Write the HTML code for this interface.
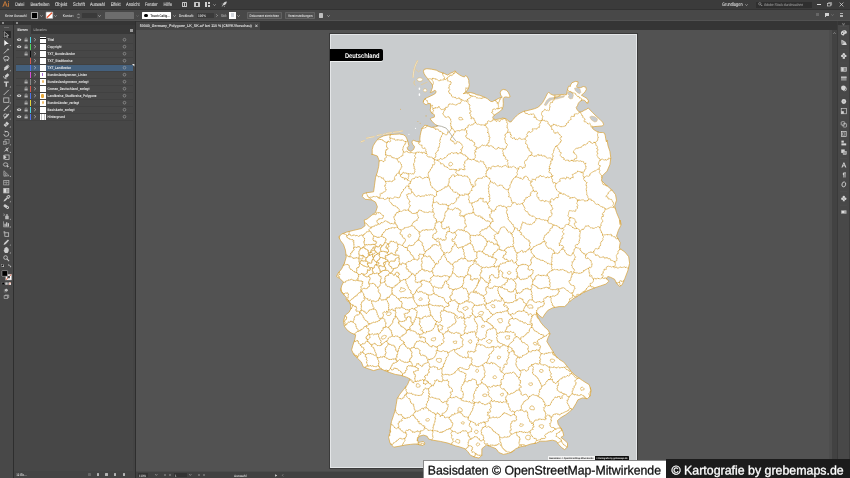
<!DOCTYPE html>
<html><head><meta charset="utf-8"><title>Illustrator</title>
<style>
html,body{margin:0;padding:0;}
body{width:850px;height:478px;overflow:hidden;background:#525252;position:relative;font-family:"Liberation Sans",sans-serif;color:#d0d0d0;}
.a{position:absolute;}
.t{position:absolute;white-space:nowrap;transform-origin:0 50%;display:block;}
svg{position:absolute;overflow:visible;}
</style></head><body>
<div class="a" style="left:0px;top:0px;width:850px;height:8.9px;background:#3b3b3b;"></div>
<div class="a" style="left:0px;top:8.9px;width:850px;height:1.0px;background:#323232;"></div>
<div class="a" style="left:0px;top:9.9px;width:850px;height:10.6px;background:#484848;"></div>
<div class="a" style="left:0px;top:20.5px;width:850px;height:9.9px;background:#353535;"></div>
<div class="a" style="left:136.3px;top:21.9px;width:123.7px;height:8.5px;background:#444444;"></div>
<div class="a" style="left:756px;top:1.6px;width:56px;height:6px;background:#2f2f2f;border-radius:0.6px;"></div>
<div class="a" style="left:0px;top:25px;width:13.2px;height:453px;background:#484848;"></div>
<div class="a" style="left:13.2px;top:21px;width:0.9px;height:457px;background:#2e2e2e;"></div>
<div class="a" style="left:2.2px;top:22.4px;width:2.3px;height:0.45px;background:#8c8c8c;"></div>
<div class="a" style="left:2.2px;top:23.4px;width:2.3px;height:0.45px;background:#8c8c8c;"></div>
<div class="a" style="left:16px;top:22.4px;width:2.3px;height:0.45px;background:#8c8c8c;"></div>
<div class="a" style="left:16px;top:23.4px;width:2.3px;height:0.45px;background:#8c8c8c;"></div>
<div class="a" style="left:3.5px;top:26.8px;width:5.5px;height:0.5px;background:#6a6a6a;"></div>
<div class="a" style="left:2.6px;top:31.4px;width:8.3px;height:6.4px;background:#2b2b2b;border-radius:0.6px;"></div>
<div class="a" style="left:14.1px;top:25px;width:121.1px;height:453px;background:#444444;"></div>
<div class="a" style="left:14.1px;top:25px;width:121.1px;height:8.6px;background:#383838;"></div>
<div class="a" style="left:14.1px;top:25px;width:16.5px;height:8.6px;background:#474747;"></div>
<div class="a" style="left:14.1px;top:33.6px;width:118.8px;height:437px;background:#474747;"></div>
<div class="a" style="left:135.2px;top:21px;width:0.9px;height:457px;background:#2e2e2e;"></div>
<div class="a" style="left:130px;top:28.8px;width:3px;height:0.45px;background:#9c9c9c;"></div>
<div class="a" style="left:130px;top:29.75px;width:3px;height:0.45px;background:#9c9c9c;"></div>
<div class="a" style="left:130px;top:30.7px;width:3px;height:0.45px;background:#9c9c9c;"></div>
<div class="a" style="left:16px;top:64.6px;width:117px;height:6.8px;background:#44607d;"></div>
<div class="a" style="left:16px;top:43.15px;width:117px;height:0.3px;background:#414141;"></div>
<div class="a" style="left:30px;top:36.5px;width:1.3px;height:6.5px;background:#4fd3e0;"></div>
<div class="a" style="left:39.8px;top:36.9px;width:5.8px;height:5.7px;background:#ffffff;"></div>
<div class="a" style="left:39.8px;top:37.8px;width:5.8px;height:1.7px;background:#111;"></div>
<div class="a" style="left:16px;top:50.15px;width:117px;height:0.3px;background:#414141;"></div>
<div class="a" style="left:30px;top:43.5px;width:1.3px;height:6.5px;background:#4fd860;"></div>
<div class="a" style="left:39.8px;top:43.9px;width:5.8px;height:5.7px;background:#ffffff;"></div>
<div class="a" style="left:16px;top:57.15px;width:117px;height:0.3px;background:#414141;"></div>
<div class="a" style="left:30px;top:50.5px;width:1.3px;height:6.5px;background:#0e0e0e;"></div>
<div class="a" style="left:39.8px;top:50.9px;width:5.8px;height:5.7px;background:#ffffff;"></div>
<div class="a" style="left:16px;top:64.14999999999999px;width:117px;height:0.3px;background:#414141;"></div>
<div class="a" style="left:30px;top:57.5px;width:1.3px;height:6.5px;background:#d65a50;"></div>
<div class="a" style="left:39.8px;top:57.9px;width:5.8px;height:5.7px;background:#ffffff;"></div>
<div class="a" style="left:16px;top:71.14999999999999px;width:117px;height:0.3px;background:#414141;"></div>
<div class="a" style="left:30px;top:64.5px;width:1.3px;height:6.5px;background:#4f74e8;"></div>
<div class="a" style="left:39.8px;top:64.89999999999999px;width:5.8px;height:5.7px;background:#ffffff;"></div>
<div class="a" style="left:16px;top:78.14999999999999px;width:117px;height:0.3px;background:#414141;"></div>
<div class="a" style="left:30px;top:71.5px;width:1.3px;height:6.5px;background:#d54fd8;"></div>
<div class="a" style="left:39.8px;top:71.89999999999999px;width:5.8px;height:5.7px;background:#ffffff;"></div>
<div class="a" style="left:42.2px;top:72.89999999999999px;width:0.8px;height:2.8px;background:#a86ad8;"></div>
<div class="a" style="left:16px;top:85.14999999999999px;width:117px;height:0.3px;background:#414141;"></div>
<div class="a" style="left:30px;top:78.5px;width:1.3px;height:6.5px;background:#8a8a8a;"></div>
<div class="a" style="left:39.8px;top:78.89999999999999px;width:5.8px;height:5.7px;background:#ffffff;"></div>
<div class="a" style="left:41.7px;top:79.8px;width:1.9px;height:3.4px;background:#efbf6e;border-radius:1px;"></div>
<div class="a" style="left:16px;top:92.14999999999999px;width:117px;height:0.3px;background:#414141;"></div>
<div class="a" style="left:30px;top:85.5px;width:1.3px;height:6.5px;background:#d65a50;"></div>
<div class="a" style="left:39.8px;top:85.89999999999999px;width:5.8px;height:5.7px;background:#ffffff;"></div>
<div class="a" style="left:16px;top:99.14999999999999px;width:117px;height:0.3px;background:#414141;"></div>
<div class="a" style="left:30px;top:92.5px;width:1.3px;height:6.5px;background:#4f74e8;"></div>
<div class="a" style="left:39.8px;top:92.89999999999999px;width:5.8px;height:5.7px;background:#ffffff;"></div>
<div class="a" style="left:41.1px;top:93.5px;width:3.2px;height:4.2px;background:#e8a838;border-radius:1.3px;"></div>
<div class="a" style="left:16px;top:106.14999999999999px;width:117px;height:0.3px;background:#414141;"></div>
<div class="a" style="left:30px;top:99.5px;width:1.3px;height:6.5px;background:#e4d43c;"></div>
<div class="a" style="left:39.8px;top:99.89999999999999px;width:5.8px;height:5.7px;background:#ffffff;"></div>
<div class="a" style="left:41.7px;top:100.8px;width:1.9px;height:3.4px;background:#efbf6e;border-radius:1px;"></div>
<div class="a" style="left:16px;top:113.14999999999999px;width:117px;height:0.3px;background:#414141;"></div>
<div class="a" style="left:30px;top:106.5px;width:1.3px;height:6.5px;background:#4fd3e0;"></div>
<div class="a" style="left:39.8px;top:106.89999999999999px;width:5.8px;height:5.7px;background:#ffffff;"></div>
<div class="a" style="left:16px;top:120.14999999999999px;width:117px;height:0.3px;background:#414141;"></div>
<div class="a" style="left:30px;top:113.5px;width:1.3px;height:6.5px;background:#4f74e8;"></div>
<div class="a" style="left:39.8px;top:113.89999999999999px;width:5.8px;height:5.7px;background:#ffffff;"></div>
<div class="a" style="left:41.4px;top:113.8px;width:0.5px;height:5.9px;background:#c4c4c4;"></div>
<div class="a" style="left:43.6px;top:113.8px;width:0.5px;height:5.9px;background:#c4c4c4;"></div>
<svg style="left:132.2px;top:63.6px" width="2.4" height="2.4" viewBox="0 0 10 10"><path d="M0,0 L10,0 L10,10Z" fill="#e8e8e8"/></svg>
<div class="a" style="left:88.3px;top:473.1px;width:2.4px;height:2.6px;background:#666;border-radius:0.5px;"></div>
<div class="a" style="left:96.8px;top:473.1px;width:2.4px;height:2.6px;background:#b4b4b4;border-radius:0.5px;"></div>
<div class="a" style="left:105.2px;top:473.1px;width:2.4px;height:2.6px;background:#b4b4b4;border-radius:0.5px;"></div>
<div class="a" style="left:113.8px;top:473.1px;width:2.4px;height:2.6px;background:#b4b4b4;border-radius:0.5px;"></div>
<div class="a" style="left:122.8px;top:473.1px;width:2.4px;height:2.6px;background:#b4b4b4;border-radius:0.5px;"></div>
<div class="a" style="left:136.1px;top:471.3px;width:696px;height:0.5px;background:#4b4b4b;"></div>
<div class="a" style="left:136.1px;top:471.8px;width:696px;height:6.2px;background:#414141;"></div>
<div class="a" style="left:138px;top:472.6px;width:9.5px;height:4.8px;background:#333;"></div>
<div class="a" style="left:173.5px;top:472.6px;width:13px;height:4.8px;background:#333;"></div>
<svg style="left:155.2px;top:474.3px" width="2.6" height="1.8" viewBox="0 0 26 18"><path d="M2,2 L13,14 L24,2" fill="none" stroke="#d0d0d0" stroke-width="5"/></svg>
<svg style="left:189.39999999999998px;top:474.3px" width="2.6" height="1.8" viewBox="0 0 26 18"><path d="M2,2 L13,14 L24,2" fill="none" stroke="#d0d0d0" stroke-width="5"/></svg>
<div class="a" style="left:163.5px;top:473.9px;width:2.6px;height:2.2px;background:#6c6c6c;"></div>
<div class="a" style="left:168.5px;top:473.9px;width:2.6px;height:2.2px;background:#6c6c6c;"></div>
<div class="a" style="left:197.5px;top:473.9px;width:2.6px;height:2.2px;background:#6c6c6c;"></div>
<div class="a" style="left:202.5px;top:473.9px;width:2.6px;height:2.2px;background:#6c6c6c;"></div>
<svg style="left:274.6px;top:473.6px" width="2.4" height="3" viewBox="0 0 24 30"><path d="M2,2 L22,15 L2,28Z" fill="#e0e0e0"/></svg>
<svg style="left:281.6px;top:473.8px" width="1.6" height="2.6" viewBox="0 0 16 26"><path d="M13,2 L3,13 L13,24" fill="none" stroke="#c0c0c0" stroke-width="4"/></svg>
<div class="a" style="left:829.4px;top:30.4px;width:2.2px;height:448px;background:#4d4d4d;"></div>
<div class="a" style="left:831.6px;top:30.4px;width:5px;height:448px;background:#424242;"></div>
<div class="a" style="left:836.6px;top:30.4px;width:1px;height:448px;background:#4a4a4a;"></div>
<div class="a" style="left:837.6px;top:21px;width:12.4px;height:457px;background:#484848;"></div>
<div class="a" style="left:837.4px;top:21px;width:0.5px;height:457px;background:#3a3a3a;"></div>
<div class="a" style="left:848.6px;top:25px;width:1.4px;height:453px;background:#3c3c3c;"></div>
<div class="a" style="left:837.6px;top:20.5px;width:12.4px;height:4.5px;background:#353535;"></div>
<svg style="left:833.3px;top:31.6px" width="3" height="2.2" viewBox="0 0 30 22"><path d="M3,19 L15,5 L27,19" fill="none" stroke="#b8b8b8" stroke-width="5"/></svg>
<svg style="left:842.2px;top:22.5px" width="3" height="2" viewBox="0 0 30 20"><path d="M3,3 L15,12 L27,3" fill="none" stroke="#d0d0d0" stroke-width="4"/><path d="M3,10 L15,19 L27,10" fill="none" stroke="#d0d0d0" stroke-width="4"/></svg>
<svg style="left:0;top:0" width="850" height="478" viewBox="0 0 850 478"><g transform="translate(6.30 34.30) scale(0.92)"><path d="M-2.2,-2.8 L2.6,1.2 L0.4,1.4 L1.6,3.2 L0.7,3.6 L-0.4,1.8 L-2.2,3.1Z" fill="none" stroke="#cdcdcd" stroke-width="0.7" stroke-linejoin="round"/></g><g transform="translate(6.30 42.70) scale(0.92)"><path d="M-2.2,-3 L2.8,1.4 L0.3,1.5 L-2.2,3.4Z" fill="#f0f0f0"/></g><path d="M10.9,44.7 l0,1.4 l-1.4,0z" fill="#b0b0b0"/><g transform="translate(6.30 50.80) scale(0.92)"><path d="M-2.6,2.8 L1,-0.8" stroke="#cdcdcd" stroke-width="1"/><path d="M1.8,-3 L2.3,-1.9 L3.4,-1.6 L2.3,-1.1 L1.8,0 L1.4,-1.1 L0.2,-1.6 L1.4,-1.9Z" fill="#cdcdcd"/></g><g transform="translate(6.30 58.80) scale(0.92)"><ellipse cx="0" cy="-0.6" rx="2.9" ry="2.1" fill="none" stroke="#cdcdcd" stroke-width="0.9"/><path d="M-1.5,1 q-0.8,1.6 0.6,2.2" fill="none" stroke="#cdcdcd" stroke-width="0.8"/><path d="M0.5,0 L2.6,2.6 L0.6,2.2Z" fill="#cdcdcd"/></g><g transform="translate(6.30 67.80) scale(0.92)"><path d="M-2.8,3 L-1.8,-0.6 L1,-3 L3,-1 L0.6,1.8Z" fill="#cdcdcd"/><path d="M1.6,-3.4 L3.4,-1.6" stroke="#cdcdcd" stroke-width="0.9"/></g><path d="M10.9,69.8 l0,1.4 l-1.4,0z" fill="#b0b0b0"/><g transform="translate(6.30 75.70) scale(0.92)"><path d="M-1.8,2.6 L-1,-0.4 L1.4,-2.6 L3.2,-0.8 L1,1.6Z" fill="#cdcdcd"/><path d="M-3.2,0.5 q0.5,3 3.6,3" fill="none" stroke="#cdcdcd" stroke-width="0.8"/></g><g transform="translate(6.30 84.00) scale(0.92)"><path d="M-2.6,-2.8 H2.6 V-1.3 H0.8 V3 H-0.8 V-1.3 H-2.6Z" fill="#cdcdcd"/></g><path d="M10.9,86.0 l0,1.4 l-1.4,0z" fill="#b0b0b0"/><g transform="translate(6.30 92.40) scale(0.92)"><path d="M-2.8,2.8 L2.8,-2.8" stroke="#cdcdcd" stroke-width="0.9"/></g><path d="M10.9,94.4 l0,1.4 l-1.4,0z" fill="#b0b0b0"/><g transform="translate(6.30 100.10) scale(0.92)"><rect x="-2.8" y="-2.4" width="5.6" height="4.8" fill="none" stroke="#cdcdcd" stroke-width="0.8"/></g><path d="M10.9,102.1 l0,1.4 l-1.4,0z" fill="#b0b0b0"/><g transform="translate(6.30 108.20) scale(0.92)"><path d="M3,-3.2 L3.5,-2.7 L-0.6,1.6 L-1.5,0.7Z" fill="#cdcdcd"/><path d="M-1.8,1 L-0.8,2 Q-1.8,3.4 -3.2,3 Q-2.2,2.2 -1.8,1Z" fill="#cdcdcd"/></g><path d="M10.9,110.2 l0,1.4 l-1.4,0z" fill="#b0b0b0"/><g transform="translate(6.30 116.20) scale(0.92)"><circle cx="-1" cy="-0.6" r="1.9" fill="none" stroke="#cdcdcd" stroke-width="0.8"/><path d="M-2.6,3 L-2,1.2 L2.2,-2.8 L3.2,-1.8 L-0.9,2.3Z" fill="#cdcdcd"/></g><path d="M10.9,118.2 l0,1.4 l-1.4,0z" fill="#b0b0b0"/><g transform="translate(6.30 124.00) scale(0.92)"><path d="M-3,1 L0.6,-2.8 L3,-0.4 L-0.6,3.2Z" fill="#cdcdcd"/><path d="M-1.4,-0.6 L1,1.6" stroke="#484848" stroke-width="0.6"/></g><path d="M10.9,126.0 l0,1.4 l-1.4,0z" fill="#b0b0b0"/><g transform="translate(6.30 133.80) scale(0.92)"><path d="M-0.5,-2.6 A2.7,2.7 0 1 1 -2.7,0.3" fill="none" stroke="#cdcdcd" stroke-width="0.9"/><path d="M-1.9,-3.6 L0.4,-2.6 L-1.6,-1.2Z" fill="#cdcdcd"/></g><path d="M10.9,135.8 l0,1.4 l-1.4,0z" fill="#b0b0b0"/><g transform="translate(6.30 141.90) scale(0.92)"><rect x="-3" y="-0.4" width="3.2" height="3.2" fill="none" stroke="#a8a8a8" stroke-width="0.7"/><rect x="-1.4" y="-2.8" width="4.4" height="4.2" fill="none" stroke="#a8a8a8" stroke-width="0.7"/></g><path d="M10.9,143.9 l0,1.4 l-1.4,0z" fill="#b0b0b0"/><g transform="translate(6.30 149.50) scale(0.92)"><path d="M-2.8,2.6 L0,-0.6 L-1.2,-2.6 L0.6,-1.2 L3,-2.4 L1.2,0.2 L2.6,2.8 L0,1Z" fill="#cdcdcd"/></g><path d="M10.9,151.5 l0,1.4 l-1.4,0z" fill="#b0b0b0"/><g transform="translate(6.30 157.20) scale(0.92)"><rect x="-1.6" y="-2.4" width="4.6" height="4.8" fill="none" stroke="#cdcdcd" stroke-width="0.8"/><path d="M-3.2,-2.6 L0.4,0 L-3.2,2.6Z" fill="#cdcdcd"/></g><g transform="translate(6.30 165.10) scale(0.92)"><ellipse cx="-0.8" cy="-0.6" rx="2.4" ry="1.9" fill="none" stroke="#cdcdcd" stroke-width="0.8"/><path d="M0.4,0 L3.2,1.4 L1.6,1.8 L1.2,3.2Z" fill="#cdcdcd"/></g><path d="M10.9,167.1 l0,1.4 l-1.4,0z" fill="#b0b0b0"/><g transform="translate(6.30 173.50) scale(0.92)"><path d="M-2.6,-3 L-2.6,3 L3,2.4Z" fill="none" stroke="#b8b8b8" stroke-width="0.7"/><path d="M-2.6,-1 L0.8,2.6 M-2.6,1 L-0.8,2.8 M-0.6,-0.8 L-0.6,2.8" stroke="#b8b8b8" stroke-width="0.5"/></g><path d="M10.9,175.5 l0,1.4 l-1.4,0z" fill="#b0b0b0"/><g transform="translate(6.30 182.70) scale(0.92)"><rect x="-2.8" y="-2.4" width="5.6" height="4.8" fill="none" stroke="#b4b4b4" stroke-width="0.8"/><path d="M-2.8,-0.6 Q0,0.6 2.8,-0.6 M-0.4,-2.4 Q0.6,0 -0.4,2.4" fill="none" stroke="#b4b4b4" stroke-width="0.6"/></g><g transform="translate(6.30 190.70) scale(0.92)"><rect x="-2.8" y="-2.4" width="5.6" height="4.8" fill="#9a9a9a" stroke="#cdcdcd" stroke-width="0.8"/><rect x="-2.4" y="-2" width="2" height="4" fill="#e0e0e0"/></g><g transform="translate(6.30 198.80) scale(0.92)"><path d="M-3,3 L-2.4,1.2 L0.6,-1.8 L1.8,-0.6 L-1.2,2.4Z" fill="#cdcdcd"/><path d="M0.4,-2.8 L2.9,-0.3 M1.4,-3.2 a1.2,1.2 0 0 1 2,2" stroke="#cdcdcd" stroke-width="1.1" fill="none"/></g><path d="M10.9,200.8 l0,1.4 l-1.4,0z" fill="#b0b0b0"/><g transform="translate(6.30 206.60) scale(0.92)"><rect x="-3.2" y="-1.5" width="6.4" height="3" rx="1.2" transform="rotate(35)" fill="#cdcdcd"/><circle cx="1.2" cy="0.8" r="0.7" fill="#484848"/></g><g transform="translate(6.30 216.40) scale(0.92)"><rect x="-1.2" y="-0.8" width="3.8" height="4" rx="0.5" fill="#b8b8b8"/><rect x="-0.4" y="-2.2" width="2.2" height="1.4" fill="#b8b8b8"/><path d="M-3,-2.8 L-1.6,-2 M-3.2,-1.2 L-1.8,-1.2" stroke="#cdcdcd" stroke-width="0.6"/></g><path d="M10.9,218.4 l0,1.4 l-1.4,0z" fill="#b0b0b0"/><g transform="translate(6.30 224.10) scale(0.92)"><path d="M-3,-3 V3 H3.2" fill="none" stroke="#b8b8b8" stroke-width="0.7"/><rect x="-2" y="-0.4" width="1.3" height="3" fill="#cdcdcd"/><rect x="-0.2" y="-2" width="1.3" height="4.6" fill="#cdcdcd"/><rect x="1.6" y="-1" width="1.3" height="3.6" fill="#cdcdcd"/></g><path d="M10.9,226.1 l0,1.4 l-1.4,0z" fill="#b0b0b0"/><g transform="translate(6.30 234.10) scale(0.92)"><rect x="-1.6" y="-1.4" width="4.2" height="3.8" fill="none" stroke="#cdcdcd" stroke-width="0.8"/><path d="M-3.2,-1.4 H-1.6 M-1.6,-3 V-1.4 M-3,-2.8 h1 v1" stroke="#cdcdcd" stroke-width="0.6" fill="none"/></g><g transform="translate(6.30 242.20) scale(0.92)"><path d="M-3,3 L-2.2,0.8 L1.8,-3 L3,-1.8 L-0.8,2.2Z" fill="#cdcdcd"/></g><path d="M10.9,244.2 l0,1.4 l-1.4,0z" fill="#b0b0b0"/><g transform="translate(6.30 250.00) scale(0.92)"><path d="M-2.2,0 V-1.8 L-1.4,-1.8 V-2.8 L-0.4,-2.8 V-3.2 L0.6,-3.2 V-2.8 L1.6,-2.8 V-1.8 L2.6,-1.4 V1 L1.4,3.2 H-1.4 L-3,0.6Z" fill="#cdcdcd"/></g><path d="M10.9,252.0 l0,1.4 l-1.4,0z" fill="#b0b0b0"/><g transform="translate(6.30 258.30) scale(0.92)"><circle cx="-0.8" cy="-0.8" r="2" fill="none" stroke="#cdcdcd" stroke-width="0.9"/><path d="M0.7,0.7 L3,3" stroke="#cdcdcd" stroke-width="1.1"/></g><rect x="2.2" y="265.2" width="1.8" height="1.8" fill="#fff" stroke="#222" stroke-width="0.3"/><rect x="1.4" y="264.4" width="1.8" height="1.8" fill="#111" stroke="#ddd" stroke-width="0.3"/><path d="M8.6,265 q2,0 2,2" fill="none" stroke="#cdcdcd" stroke-width="0.6"/><path d="M8,265 l1,-0.8 v1.6z M10.6,267.6 l-0.8,-1 h1.6z" fill="#cdcdcd"/><rect x="5.7" y="274.2" width="5.9" height="5.8" fill="#fff" stroke="#a0a0a0" stroke-width="0.5"/><path d="M6,279.7 L11.3,274.5" stroke="#e8502a" stroke-width="0.9"/><rect x="7.4" y="275.9" width="2.5" height="2.4" fill="#484848"/><rect x="1.9" y="270.6" width="5.7" height="5.7" rx="0.5" fill="#000" stroke="#b8b8b8" stroke-width="0.6"/><rect x="2" y="282.4" width="2.4" height="2.4" fill="#000" stroke="#999" stroke-width="0.3"/><rect x="5.3" y="282.4" width="2.4" height="2.4" fill="#c8c8c8"/><rect x="8.6" y="282.4" width="2.4" height="2.4" fill="#fff"/><path d="M8.7,284.7 L10.9,282.5" stroke="#e8502a" stroke-width="0.6"/><g transform="translate(6.30 290.20) scale(0.92)"><circle cx="0" cy="0" r="1.5" fill="#cdcdcd"/><rect x="-2.4" y="-0.4" width="2.6" height="2.4" fill="none" stroke="#999" stroke-width="0.4"/></g><g transform="translate(6.30 296.90) scale(0.92)"><rect x="-2.4" y="-1.2" width="4" height="2.8" fill="none" stroke="#cdcdcd" stroke-width="0.6"/><path d="M-1.4,-1.2 V-2 H2.6 V0.8 H1.6" fill="none" stroke="#cdcdcd" stroke-width="0.6"/></g><path d="M840.6,26.6 H847" stroke="#5e5e5e" stroke-width="0.5" stroke-dasharray="0.5 0.5"/><path d="M840.6,49.3 H847" stroke="#5e5e5e" stroke-width="0.5" stroke-dasharray="0.5 0.5"/><path d="M840.6,63 H847" stroke="#5e5e5e" stroke-width="0.5" stroke-dasharray="0.5 0.5"/><path d="M840.6,95 H847" stroke="#5e5e5e" stroke-width="0.5" stroke-dasharray="0.5 0.5"/><path d="M840.6,118 H847" stroke="#5e5e5e" stroke-width="0.5" stroke-dasharray="0.5 0.5"/><path d="M840.6,158.5 H847" stroke="#5e5e5e" stroke-width="0.5" stroke-dasharray="0.5 0.5"/><path d="M840.6,191.5 H847" stroke="#5e5e5e" stroke-width="0.5" stroke-dasharray="0.5 0.5"/><path d="M840.6,205.2 H847" stroke="#5e5e5e" stroke-width="0.5" stroke-dasharray="0.5 0.5"/><g transform="translate(843.80 32.80) scale(0.92)"><path d="M-3.2,0.6 C-3.2,-1.8 -0.8,-2.9 1,-2.7 C3,-2.5 3.6,-1 3.2,0.2 C2.8,1.4 1.6,0.8 0.9,1.4 C0.2,2 1,2.8 -0.4,2.8 C-2,2.8 -3.2,2 -3.2,0.6Z" fill="#d4d4d4"/><circle cx="-1.4" cy="0.6" r="0.7" fill="#484848"/><circle cx="0.3" cy="-1.2" r="0.6" fill="#484848"/></g><g transform="translate(843.80 42.40) scale(0.92)"><path d="M-2.6,2.8 V-3 C0.6,-2.6 3,0 3.2,2.8Z" fill="#d4d4d4"/><path d="M-2.6,2.8 L1.6,-1.4 M-2.6,2.8 L-0.4,-2.6" stroke="#484848" stroke-width="0.5"/></g><g transform="translate(843.80 55.90) scale(0.92)"><circle cx="0" cy="-1.8" r="1.3" fill="#d4d4d4"/><circle cx="-1.7" cy="0" r="1.3" fill="#d4d4d4"/><circle cx="1.7" cy="0" r="1.3" fill="#d4d4d4"/><path d="M-1.2,0.6 H1.2 V3.2 H-1.2Z" fill="#d4d4d4"/></g><g transform="translate(843.80 69.30) scale(0.92)"><rect x="-3" y="-2.2" width="6" height="4.4" fill="#8a8a8a" stroke="#d4d4d4" stroke-width="0.6"/><rect x="-2.6" y="-1.8" width="2.4" height="3.6" fill="#d4d4d4"/></g><g transform="translate(843.80 78.60) scale(0.92)"><rect x="-3" y="-2.2" width="6" height="4.4" fill="#8e8e8e"/><rect x="-3" y="-2.2" width="6" height="1.5" fill="#c0c0c0"/></g><g transform="translate(843.80 88.20) scale(0.92)"><circle cx="-0.4" cy="-0.2" r="2.6" fill="#d4d4d4"/><circle cx="1" cy="0.8" r="2" fill="none" stroke="#d4d4d4" stroke-width="0.7"/></g><g transform="translate(843.80 101.50) scale(0.92)"><circle cx="0" cy="0" r="2.6" fill="#d4d4d4"/><circle cx="0" cy="0" r="1.2" fill="#b0b0b0"/></g><g transform="translate(843.80 111.20) scale(0.92)"><rect x="-2.8" y="-2.8" width="5.6" height="5.6" fill="none" stroke="#d4d4d4" stroke-width="0.7"/><rect x="-2.8" y="0" width="2.8" height="2.8" fill="#d4d4d4"/></g><g transform="translate(843.80 124.30) scale(0.92)"><rect x="-2.8" y="-2.8" width="3.8" height="3.8" rx="0.8" fill="none" stroke="#d4d4d4" stroke-width="0.7"/><rect x="-0.8" y="-0.8" width="3.8" height="3.8" rx="0.8" fill="none" stroke="#d4d4d4" stroke-width="0.7"/></g><g transform="translate(843.80 134.00) scale(0.92)"><rect x="-2.6" y="-2.6" width="5.2" height="5.2" fill="none" stroke="#d4d4d4" stroke-width="0.8"/><rect x="-1.2" y="-1.2" width="2.4" height="2.4" fill="none" stroke="#d4d4d4" stroke-width="0.5"/></g><g transform="translate(843.80 143.00) scale(0.92)"><rect x="-2.6" y="-2.6" width="2.6" height="2.2" fill="#d4d4d4"/><rect x="-2.6" y="0.4" width="5.2" height="2.2" fill="#d4d4d4"/></g><g transform="translate(843.80 152.00) scale(0.92)"><rect x="-2.8" y="-2.8" width="3.8" height="3.8" fill="#d4d4d4"/><rect x="-0.8" y="-0.8" width="3.6" height="3.6" fill="#9c9c9c" stroke="#d4d4d4" stroke-width="0.5"/></g><g transform="translate(843.80 165.00) scale(0.92)"><path d="M-2.6,2.8 L-0.4,-2.8 H0.6 L2.8,2.8 H1.6 L1.1,1.4 H-0.9 L-1.4,2.8Z M-0.6,0.5 H0.8 L0.1,-1.6Z" fill="#d4d4d4" fill-rule="evenodd"/></g><g transform="translate(843.80 175.00) scale(0.92)"><path d="M0.2,-2.6 H2.4 V-1.8 H1.8 V2.8 H1 V-1.8 H0.4 V2.8 H-0.4 V0.2 A1.5,1.5 0 0 1 0.2,-2.6Z" fill="#d4d4d4"/></g><g transform="translate(843.80 184.40) scale(0.92)"><ellipse cx="0" cy="0" rx="2" ry="2.7" fill="none" stroke="#d4d4d4" stroke-width="0.9" transform="rotate(15)"/></g><g transform="translate(843.80 198.50) scale(0.92)"><circle cx="0" cy="-1.6" r="1.3" fill="#d4d4d4"/><circle cx="-1.6" cy="0.2" r="1.3" fill="#d4d4d4"/><circle cx="1.6" cy="0.2" r="1.3" fill="#d4d4d4"/><path d="M-0.5,0 H0.5 L1.2,3 H-1.2Z" fill="#d4d4d4"/></g><g transform="translate(843.80 212.00) scale(0.92)"><rect x="-3" y="-2" width="6" height="4" rx="0.6" fill="#a8a8a8"/><rect x="-2" y="-1" width="2.4" height="2" fill="#e0e0e0"/></g><path d="M34.1,38.20 L35.9,39.70 L34.1,41.20" fill="none" stroke="#c6c6c6" stroke-width="0.6"/><circle cx="124.5" cy="39.70" r="1.35" fill="none" stroke="#b4b4b4" stroke-width="0.5"/><g transform="translate(19.1 39.70)"><path d="M-2.3,0 C-1.4,-1.7 1.4,-1.7 2.3,0 C1.4,1.7 -1.4,1.7 -2.3,0Z" fill="#dedede"/><circle cx="0" cy="0" r="0.75" fill="#474747"/></g><g transform="translate(26.1 39.70)"><rect x="-1.6" y="-0.3" width="3.2" height="2.2" rx="0.3" fill="#b2b2b2"/><path d="M-0.9,-0.2 V-1 a0.9,0.9 0 0 1 1.8,0 V-0.2" fill="none" stroke="#b2b2b2" stroke-width="0.55"/></g><path d="M34.1,45.20 L35.9,46.70 L34.1,48.20" fill="none" stroke="#c6c6c6" stroke-width="0.6"/><circle cx="124.5" cy="46.70" r="1.35" fill="none" stroke="#b4b4b4" stroke-width="0.5"/><g transform="translate(19.1 46.70)"><path d="M-2.3,0 C-1.4,-1.7 1.4,-1.7 2.3,0 C1.4,1.7 -1.4,1.7 -2.3,0Z" fill="#dedede"/><circle cx="0" cy="0" r="0.75" fill="#474747"/></g><g transform="translate(26.1 46.70)"><rect x="-1.6" y="-0.3" width="3.2" height="2.2" rx="0.3" fill="#b2b2b2"/><path d="M-0.9,-0.2 V-1 a0.9,0.9 0 0 1 1.8,0 V-0.2" fill="none" stroke="#b2b2b2" stroke-width="0.55"/></g><path d="M34.1,52.20 L35.9,53.70 L34.1,55.20" fill="none" stroke="#c6c6c6" stroke-width="0.6"/><circle cx="124.5" cy="53.70" r="1.35" fill="none" stroke="#b4b4b4" stroke-width="0.5"/><g transform="translate(26.1 53.70)"><rect x="-1.6" y="-0.3" width="3.2" height="2.2" rx="0.3" fill="#b2b2b2"/><path d="M-0.9,-0.2 V-1 a0.9,0.9 0 0 1 1.8,0 V-0.2" fill="none" stroke="#b2b2b2" stroke-width="0.55"/></g><path d="M34.1,59.20 L35.9,60.70 L34.1,62.20" fill="none" stroke="#c6c6c6" stroke-width="0.6"/><circle cx="124.5" cy="60.70" r="1.35" fill="none" stroke="#b4b4b4" stroke-width="0.5"/><path d="M34.1,66.20 L35.9,67.70 L34.1,69.20" fill="none" stroke="#c6c6c6" stroke-width="0.6"/><circle cx="124.5" cy="67.70" r="1.35" fill="none" stroke="#b4b4b4" stroke-width="0.5"/><path d="M34.1,73.20 L35.9,74.70 L34.1,76.20" fill="none" stroke="#c6c6c6" stroke-width="0.6"/><circle cx="124.5" cy="74.70" r="1.35" fill="none" stroke="#b4b4b4" stroke-width="0.5"/><path d="M34.1,80.20 L35.9,81.70 L34.1,83.20" fill="none" stroke="#c6c6c6" stroke-width="0.6"/><circle cx="124.5" cy="81.70" r="1.35" fill="none" stroke="#b4b4b4" stroke-width="0.5"/><g transform="translate(26.1 81.70)"><rect x="-1.6" y="-0.3" width="3.2" height="2.2" rx="0.3" fill="#b2b2b2"/><path d="M-0.9,-0.2 V-1 a0.9,0.9 0 0 1 1.8,0 V-0.2" fill="none" stroke="#b2b2b2" stroke-width="0.55"/></g><path d="M34.1,87.20 L35.9,88.70 L34.1,90.20" fill="none" stroke="#c6c6c6" stroke-width="0.6"/><circle cx="124.5" cy="88.70" r="1.35" fill="none" stroke="#b4b4b4" stroke-width="0.5"/><g transform="translate(26.1 88.70)"><rect x="-1.6" y="-0.3" width="3.2" height="2.2" rx="0.3" fill="#b2b2b2"/><path d="M-0.9,-0.2 V-1 a0.9,0.9 0 0 1 1.8,0 V-0.2" fill="none" stroke="#b2b2b2" stroke-width="0.55"/></g><path d="M34.1,94.20 L35.9,95.70 L34.1,97.20" fill="none" stroke="#c6c6c6" stroke-width="0.6"/><circle cx="124.5" cy="95.70" r="1.35" fill="none" stroke="#b4b4b4" stroke-width="0.5"/><g transform="translate(19.1 95.70)"><path d="M-2.3,0 C-1.4,-1.7 1.4,-1.7 2.3,0 C1.4,1.7 -1.4,1.7 -2.3,0Z" fill="#dedede"/><circle cx="0" cy="0" r="0.75" fill="#474747"/></g><g transform="translate(26.1 95.70)"><rect x="-1.6" y="-0.3" width="3.2" height="2.2" rx="0.3" fill="#b2b2b2"/><path d="M-0.9,-0.2 V-1 a0.9,0.9 0 0 1 1.8,0 V-0.2" fill="none" stroke="#b2b2b2" stroke-width="0.55"/></g><path d="M34.1,101.20 L35.9,102.70 L34.1,104.20" fill="none" stroke="#c6c6c6" stroke-width="0.6"/><circle cx="124.5" cy="102.70" r="1.35" fill="none" stroke="#b4b4b4" stroke-width="0.5"/><g transform="translate(26.1 102.70)"><rect x="-1.6" y="-0.3" width="3.2" height="2.2" rx="0.3" fill="#b2b2b2"/><path d="M-0.9,-0.2 V-1 a0.9,0.9 0 0 1 1.8,0 V-0.2" fill="none" stroke="#b2b2b2" stroke-width="0.55"/></g><path d="M34.1,108.20 L35.9,109.70 L34.1,111.20" fill="none" stroke="#c6c6c6" stroke-width="0.6"/><circle cx="124.5" cy="109.70" r="1.35" fill="none" stroke="#b4b4b4" stroke-width="0.5"/><g transform="translate(19.1 109.70)"><path d="M-2.3,0 C-1.4,-1.7 1.4,-1.7 2.3,0 C1.4,1.7 -1.4,1.7 -2.3,0Z" fill="#dedede"/><circle cx="0" cy="0" r="0.75" fill="#474747"/></g><g transform="translate(26.1 109.70)"><rect x="-1.6" y="-0.3" width="3.2" height="2.2" rx="0.3" fill="#b2b2b2"/><path d="M-0.9,-0.2 V-1 a0.9,0.9 0 0 1 1.8,0 V-0.2" fill="none" stroke="#b2b2b2" stroke-width="0.55"/></g><path d="M34.1,115.20 L35.9,116.70 L34.1,118.20" fill="none" stroke="#c6c6c6" stroke-width="0.6"/><circle cx="124.5" cy="116.70" r="1.35" fill="none" stroke="#b4b4b4" stroke-width="0.5"/><g transform="translate(19.1 116.70)"><path d="M-2.3,0 C-1.4,-1.7 1.4,-1.7 2.3,0 C1.4,1.7 -1.4,1.7 -2.3,0Z" fill="#dedede"/><circle cx="0" cy="0" r="0.75" fill="#474747"/></g><g transform="translate(26.1 116.70)"><rect x="-1.6" y="-0.3" width="3.2" height="2.2" rx="0.3" fill="#b2b2b2"/><path d="M-0.9,-0.2 V-1 a0.9,0.9 0 0 1 1.8,0 V-0.2" fill="none" stroke="#b2b2b2" stroke-width="0.55"/></g></svg>
<div class="a" style="left:31.3px;top:12.3px;width:6.9px;height:6.5px;background:#000;border:0.7px solid #a8a8a8;box-sizing:border-box;border-radius:0.5px;"></div>
<svg style="left:46px;top:12.3px" width="6.8" height="6.5" viewBox="0 0 68 65"><rect x="0" y="0" width="68" height="65" rx="5" fill="#fff" stroke="#a8a8a8" stroke-width="6"/><path d="M8,58 L60,8" stroke="#e8502a" stroke-width="12"/></svg>
<svg style="left:39.7px;top:14.7px" width="3" height="2" viewBox="0 0 30 20"><path d="M3,3 L15,16 L27,3" fill="none" stroke="#d8d8d8" stroke-width="5"/></svg>
<svg style="left:54.1px;top:14.7px" width="3" height="2" viewBox="0 0 30 20"><path d="M3,3 L15,16 L27,3" fill="none" stroke="#d8d8d8" stroke-width="5"/></svg>
<svg style="left:97.9px;top:14.7px" width="3" height="2" viewBox="0 0 30 20"><path d="M3,3 L15,16 L27,3" fill="none" stroke="#d8d8d8" stroke-width="5"/></svg>
<svg style="left:172.5px;top:14.7px" width="3" height="2" viewBox="0 0 30 20"><path d="M3,3 L15,16 L27,3" fill="none" stroke="#d8d8d8" stroke-width="5"/></svg>
<svg style="left:237.3px;top:14.7px" width="3" height="2" viewBox="0 0 30 20"><path d="M3,3 L15,16 L27,3" fill="none" stroke="#d8d8d8" stroke-width="5"/></svg>
<svg style="left:326.5px;top:14.7px" width="3" height="2" viewBox="0 0 30 20"><path d="M3,3 L15,16 L27,3" fill="none" stroke="#d8d8d8" stroke-width="5"/></svg>
<svg style="left:136.3px;top:14.7px" width="3" height="2" viewBox="0 0 30 20"><path d="M3,3 L15,16 L27,3" fill="none" stroke="#7a7a7a" stroke-width="5"/></svg>
<svg style="left:745.0px;top:4.2px" width="3" height="2" viewBox="0 0 30 20"><path d="M3,3 L15,16 L27,3" fill="none" stroke="#d8d8d8" stroke-width="5"/></svg>
<svg style="left:831.0px;top:14.0px" width="3" height="2" viewBox="0 0 30 20"><path d="M3,3 L15,16 L27,3" fill="none" stroke="#8a8a8a" stroke-width="5"/></svg>
<svg style="left:76.9px;top:12.6px" width="3" height="6" viewBox="0 0 30 60"><path d="M4,22 L15,8 L26,22" fill="none" stroke="#d8d8d8" stroke-width="5"/><path d="M4,38 L15,52 L26,38" fill="none" stroke="#d8d8d8" stroke-width="5"/></svg>
<div class="a" style="left:81.5px;top:12.6px;width:15px;height:5.6px;background:#3a3a3a;border-radius:0.6px;"></div>
<div class="a" style="left:104.6px;top:12.3px;width:29.6px;height:6.5px;background:#6d6d6d;border-radius:0.6px;"></div>
<div class="a" style="left:142.4px;top:11.8px;width:28.6px;height:7.4px;background:#ffffff;border-radius:0.6px;"></div>
<div class="a" style="left:144.3px;top:13.6px;width:3.6px;height:3.6px;background:#000;border-radius:50%;"></div>
<div class="a" style="left:196.5px;top:12.6px;width:17px;height:5.6px;background:#3a3a3a;border-radius:0.6px;"></div>
<svg style="left:216.2px;top:14px" width="1.8" height="3" viewBox="0 0 18 30"><path d="M3,3 L15,15 L3,27" fill="none" stroke="#d8d8d8" stroke-width="5"/></svg>
<div class="a" style="left:229.4px;top:11.8px;width:6.6px;height:6.9px;background:#fdfdfd;"></div>
<div class="a" style="left:231.1px;top:13.4px;width:3.3px;height:3.8px;background:#d2d6dc;"></div>
<div class="a" style="left:246.6px;top:12.4px;width:35px;height:6.4px;background:#505050;border:0.5px solid #626262;box-sizing:border-box;border-radius:0.8px;"></div>
<div class="a" style="left:285.4px;top:12.4px;width:29.8px;height:6.4px;background:#505050;border:0.5px solid #626262;box-sizing:border-box;border-radius:0.8px;"></div>
<div class="a" style="left:319.3px;top:13.2px;width:3.4px;height:4.4px;background:#bdbdbd;border-radius:0.4px;"></div>
<div class="a" style="left:816.3px;top:13.2px;width:2.6px;height:3.2px;background:#666;"></div>
<div class="a" style="left:824.6px;top:12.8px;width:1px;height:4px;background:#d0d0d0;"></div>
<div class="a" style="left:826.2px;top:13.4px;width:3px;height:2.8px;background:#d0d0d0;"></div>
<div class="a" style="left:840px;top:13.4px;width:3.4px;height:0.5px;background:#b0b0b0;"></div>
<div class="a" style="left:840px;top:14.5px;width:3.4px;height:0.5px;background:#b0b0b0;"></div>
<div class="a" style="left:840px;top:15.600000000000001px;width:3.4px;height:0.5px;background:#b0b0b0;"></div>
<div class="a" style="left:181.8px;top:1.8px;width:5.6px;height:5.6px;background:#c4c4c4;border-radius:0.5px;"></div>
<div class="a" style="left:183.3px;top:3.4px;width:1px;height:2.4px;background:#3b3b3b;"></div>
<div class="a" style="left:184.9px;top:3.4px;width:1px;height:2.4px;background:#3b3b3b;"></div>
<div class="a" style="left:194.2px;top:1.8px;width:5.6px;height:5.6px;background:#c4c4c4;border-radius:0.5px;"></div>
<div class="a" style="left:195.7px;top:3.4px;width:1px;height:2.4px;background:#3b3b3b;"></div>
<div class="a" style="left:197.29999999999998px;top:3.4px;width:1px;height:2.4px;background:#3b3b3b;"></div>
<div class="a" style="left:204.8px;top:2.4px;width:2.2px;height:4.4px;background:#d0d0d0;"></div>
<div class="a" style="left:207.6px;top:2.4px;width:2.6px;height:1.9px;background:#d0d0d0;"></div>
<div class="a" style="left:207.6px;top:4.9px;width:2.6px;height:1.9px;background:#d0d0d0;"></div>
<svg style="left:212.8px;top:3.9px" width="3" height="2" viewBox="0 0 30 20"><path d="M3,3 L15,16 L27,3" fill="none" stroke="#d8d8d8" stroke-width="5"/></svg>
<svg style="left:220.6px;top:1.4px" width="6.4" height="6.4" viewBox="0 0 64 64"><path d="M58,6 C40,6 24,18 18,36 L28,46 C46,40 58,24 58,6Z" fill="#d0d0d0"/><path d="M16,40 L6,58 L24,48Z" fill="#d0d0d0"/><path d="M14,26 L4,30 L14,36Z M38,50 L34,60 L28,50Z" fill="#d0d0d0"/></svg>
<svg style="left:758px;top:2.4px" width="6" height="4.4" viewBox="0 0 60 44"><circle cx="18" cy="18" r="12" fill="none" stroke="#bdbdbd" stroke-width="5"/><path d="M27,27 L40,40" stroke="#bdbdbd" stroke-width="6"/><path d="M40,30 L48,30 L44,36Z" fill="#bdbdbd"/></svg>
<div class="a" style="left:817px;top:4.4px;width:4px;height:0.9px;background:#d8d8d8;"></div>
<svg style="left:826.6px;top:2.2px" width="5" height="4.6" viewBox="0 0 50 46"><rect x="4" y="14" width="30" height="26" fill="none" stroke="#d8d8d8" stroke-width="6"/><path d="M16,12 V6 H46 V32 H38" fill="none" stroke="#d8d8d8" stroke-width="6"/></svg>
<svg style="left:838.6px;top:2px" width="5" height="5" viewBox="0 0 50 50"><path d="M6,6 L44,44 M44,6 L6,44" stroke="#e0e0e0" stroke-width="7"/></svg>
<div class="a" style="left:329.2px;top:32.8px;width:309.1px;height:436.6px;background:#3a3a3a;"></div>
<div class="a" style="left:330.2px;top:33.9px;width:307px;height:434.3px;background:#e4e6e8;"></div>
<div class="a" style="left:331.3px;top:35.0px;width:304.8px;height:432.1px;background:#c9ccce;"></div>
<svg class="abs" style="left:0;top:0" width="850" height="478" viewBox="0 0 850 478"><path d="M424.1,69.4 426.9,68.7 431.6,69.2 436.4,70.2 439.2,71.8 442.0,72.7 444.8,73.7 447.6,75.1 450.5,73.2 453.3,72.0 455.2,70.8 455.6,71.8 457.1,73.2 459.9,75.1 462.7,76.5 464.6,76.9 465.5,75.5 466.5,76.0 467.9,77.9 468.8,80.2 468.8,82.6 469.3,84.5 468.8,87.3 467.4,90.1 465.1,92.5 463.2,93.7 466.5,92.9 470.2,92.5 474.0,93.4 476.8,94.8 479.6,95.3 483.4,96.7 487.2,98.6 487.5,98.8 490.4,101.2 492.2,101.7 495.1,100.2 498.8,98.3 502.1,97.4 502.1,96.9 500.7,95.1 500.2,92.7 501.2,90.3 503.5,89.4 506.4,90.2 508.2,92.2 509.6,95.1 510.1,96.8 508.2,97.4 505.9,96.9 504.0,97.4 503.3,98.3 503.1,100.2 503.3,103.5 503.1,106.3 502.1,109.2 499.8,111.5 496.9,113.4 494.1,115.3 492.7,117.2 493.2,118.8 495.5,119.5 498.8,119.1 502.6,118.1 505.4,118.6 507.8,120.0 509.2,121.9 511.1,121.9 512.9,119.5 515.3,117.2 517.6,114.8 520.5,112.9 523.3,111.5 527.1,110.6 530.8,109.7 534.6,108.7 537.9,107.3 540.2,105.4 542.6,102.6 544.5,99.3 545.9,96.5 547.3,93.7 548.7,92.2 548.9,92.4 550.4,93.8 553.2,95.2 556.9,95.0 560.7,94.8 564.5,94.3 566.2,95.0 566.8,92.9 567.3,90.5 568.2,87.2 569.2,85.8 570.1,86.8 570.6,84.9 572.0,82.7 575.3,81.4 578.1,81.8 577.8,83.9 576.5,86.1 577.6,87.7 580.5,87.7 583.3,86.5 585.9,87.2 586.3,89.6 585.0,91.9 583.1,93.8 581.4,95.2 584.2,96.8 587.1,98.5 588.5,100.9 587.8,103.4 586.1,102.3 584.7,100.4 582.4,99.9 580.0,101.3 578.4,103.2 577.5,105.6 576.2,107.5 577.2,109.8 579.5,112.2 581.9,111.7 584.2,110.3 586.6,109.3 588.2,107.9 592.3,112.2 596.1,116.0 599.8,119.3 602.6,122.1 603.6,124.3 602.5,125.9 597.9,126.3 594.2,126.6 591.8,127.3 593.2,129.2 596.1,131.1 599.4,132.5 602.6,132.5 604.5,133.1 605.3,135.8 605.7,138.6 606.4,141.9 607.1,140.0 608.0,145.7 609.9,151.3 610.8,157.9 609.9,164.5 607.1,171.1 602.4,175.8 601.4,180.5 605.2,184.2 611.8,189.9 615.5,194.6 616.5,200.2 614.6,205.9 616.5,212.5 619.3,219.1 620.2,224.7 620.2,220.0 621.2,224.7 618.4,230.3 616.5,236.0 620.2,242.6 619.3,248.2 624.9,252.0 628.7,256.7 629.6,263.3 627.8,270.8 624.9,278.4 622.1,284.9 619.3,286.3 616.5,283.1 614.6,279.3 610.8,277.4 608.0,276.5 606.1,278.4 608.9,281.2 606.1,284.0 600.5,285.9 594.8,287.8 589.2,290.0 583.5,292.5 578.8,295.3 574.1,298.1 570.4,300.9 568.5,301.9 568.5,302.8 564.7,306.6 559.1,306.6 552.5,307.9 547.8,310.4 544.9,314.1 542.5,317.9 539.9,316.0 536.5,312.4 538.0,317.3 540.6,322.2 544.0,326.4 548.1,330.1 550.0,333.9 548.1,337.6 546.8,341.4 549.6,346.1 552.5,350.8 555.3,355.5 559.1,359.3 563.8,362.1 567.5,366.8 571.3,371.5 575.1,375.3 582.6,380.6 589.2,384.7 591.1,390.4 590.1,396.0 587.3,398.8 582.6,397.9 577.9,399.8 576.0,403.5 573.2,408.2 569.4,412.0 565.6,414.8 560.9,417.6 557.5,420.5 558.1,424.2 560.9,428.0 562.8,431.8 563.8,435.5 560.9,437.4 564.7,440.2 567.5,443.1 567.5,446.8 564.7,449.6 561.9,447.8 559.1,444.9 556.2,441.2 552.5,440.2 545.9,441.2 540.2,441.2 536.5,443.1 530.8,444.0 525.2,445.9 520.5,446.8 515.8,448.7 512.9,451.5 508.2,453.4 503.5,454.4 498.8,452.5 496.0,448.7 491.3,446.8 486.6,444.9 481.9,448.7 481.8,455.3 479.0,458.1 475.2,457.2 470.5,455.3 467.7,451.5 464.9,448.7 459.2,446.8 455.5,445.9 447.9,443.1 440.4,441.4 432.9,440.2 428.7,439.1 427.2,436.3 423.5,435.1 419.7,436.1 417.4,439.1 418.2,442.5 420.6,442.1 423.1,441.4 425.0,443.2 423.1,445.5 419.7,444.9 416.9,444.0 414.1,444.0 410.3,444.4 404.6,445.1 399.0,446.3 393.7,447.2 390.0,443.1 388.6,437.4 390.0,432.7 390.5,427.1 391.5,421.4 393.4,415.8 395.2,410.1 396.2,404.5 397.1,398.8 399.9,394.1 403.7,389.4 407.5,384.7 409.4,380.0 410.3,379.1 406.5,377.2 400.9,375.3 395.2,374.4 389.6,372.5 384.9,370.6 380.2,368.7 373.6,370.6 367.9,368.7 363.2,366.8 361.4,362.1 357.6,358.4 353.8,354.6 351.6,349.9 352.9,345.2 354.8,339.5 355.7,334.8 351.0,332.9 347.2,330.1 344.4,326.4 343.5,320.7 345.4,315.1 349.1,312.2 351.0,308.5 350.1,302.8 346.3,300.0 346.3,297.2 343.5,294.4 340.6,290.6 341.6,285.9 343.5,282.1 339.7,278.4 336.5,276.5 337.8,273.6 341.6,268.9 344.4,263.3 346.3,256.7 345.4,250.1 343.5,244.5 340.6,240.7 338.8,236.9 341.6,234.1 346.3,232.2 353.8,230.3 361.4,228.5 365.1,225.7 364.2,220.0 367.0,219.1 371.7,215.3 375.5,212.5 377.4,206.8 375.5,202.1 371.7,199.9 365.1,199.3 362.3,196.5 363.2,193.7 367.0,192.7 373.6,191.8 374.5,185.2 375.5,177.7 377.4,172.0 378.7,166.3 379.2,160.7 377.4,156.0 371.7,154.1 372.2,155.0 372.2,149.5 373.2,145.8 375.5,142.0 378.8,138.2 383.5,135.9 389.2,134.7 394.8,134.3 399.5,134.0 403.3,134.7 405.6,136.3 406.6,138.2 408.0,142.0 408.9,145.8 407.1,147.7 408.0,150.0 410.8,151.4 413.6,149.5 414.6,146.7 412.7,144.3 411.8,142.0 413.2,140.1 416.5,141.5 420.2,142.0 419.8,139.2 420.2,135.4 421.0,131.7 422.1,128.3 424.9,125.1 427.8,126.0 431.5,127.4 435.3,126.9 438.1,125.8 435.3,124.6 432.5,121.8 430.1,118.9 431.5,118.0 434.4,117.1 434.4,114.7 431.5,112.8 430.1,110.0 430.6,108.0 430.6,105.9 430.3,103.5 427.6,103.7 426.2,104.7 424.7,104.1 423.2,102.3 423.6,100.5 425.1,98.6 427.4,97.5 430.2,96.2 433.1,94.8 435.4,93.4 436.2,91.5 434.9,90.3 432.1,92.0 430.2,92.5 431.2,91.1 431.8,89.2 432.6,87.3 432.4,84.9 431.2,83.1 429.3,80.7 427.4,78.3 425.5,76.0 424.1,73.7 423.4,71.3Z" fill="#fff" stroke="#d9a640" stroke-width="0.75" stroke-linejoin="round"/><path d="M574.4,88.2 577.6,87.4 580.0,89.1 580.9,92.4 579.5,93.8 577.2,92.4 575.3,90.5Z" fill="#c8cbce" stroke="#e2b45e" stroke-width="0.4"/><path d="M567.3,92.4 569.6,91.5 572.5,92.4 573.4,95.2 572.5,98.5 570.1,99.0 568.2,97.1 569.4,95.2 567.8,94.3Z" fill="#c8cbce" stroke="#e2b45e" stroke-width="0.4"/><path d="M544.2,104.9 546.6,100.4 549.4,98.1 553.2,97.6 556.9,96.8 561.2,96.2 564.7,95.5 564.0,97.1 560.2,98.1 556.9,99.0 553.2,99.3 550.4,100.2 548.0,102.8 546.1,105.6Z" fill="#c8cbce" stroke="#e2b45e" stroke-width="0.4"/><path d="M589.7,116.9 591.8,116.0 595.1,116.8 597.5,118.8 597.0,121.2 594.9,122.1 592.8,120.9 590.9,119.3Z" fill="#c8cbce" stroke="#e2b45e" stroke-width="0.4"/><path d="M484.8,97.4 484.8,97.4 484.3,97.7 483.8,97.7 483.2,97.7 482.5,97.7 482.4,98.4 481.8,98.5 481.2,98.3M500.0,99.4 500.3,98.9 500.7,98.5 500.4,98.0 500.4,97.9M521.7,224.1 521.8,224.7 522.1,225.1 521.7,225.5 521.7,226.0 521.1,226.2 520.9,226.8 520.9,227.3 520.9,227.8M520.9,227.8 520.9,228.6 520.6,229.3 520.1,229.9 519.5,230.4M519.5,230.4 518.5,230.6 517.5,230.3 517.4,229.4 517.4,228.4 516.4,228.3 515.7,227.6 515.0,228.2 514.5,229.0M513.0,224.6 513.0,225.3 513.5,225.7 513.4,226.3 513.5,226.9 514.3,226.9 514.5,227.7 514.5,228.3 514.5,229.0M477.9,200.7 478.1,200.1 478.7,199.9 478.7,199.4 478.8,198.8 479.4,198.6 480.0,198.8 480.6,198.7 480.8,198.1M477.9,200.7 477.1,200.6 477.2,201.4 476.6,201.8 476.1,201.3 475.6,201.4 475.2,201.6 474.8,201.9 474.4,202.2M486.1,201.7 485.3,201.9 484.4,202.1 483.7,201.8 482.8,201.6 483.0,200.8 483.1,200.0 482.9,199.2 483.2,198.4M480.8,198.1 481.1,198.8 481.9,198.9 482.4,198.3 483.2,198.4M510.3,452.6 510.2,452.6 509.7,452.2 509.1,452.0 508.5,451.9 507.8,452.0 507.2,451.8 506.7,451.4 506.1,451.2M454.9,372.8 454.0,372.8 453.5,373.6 452.6,373.8 452.0,374.4M454.9,372.8 455.0,371.7 455.9,371.4 456.5,370.7 457.1,370.1M481.2,98.3 480.7,98.3 480.1,98.3 479.5,98.1 479.0,98.4 478.4,98.2 477.9,97.7 477.3,97.9 476.7,97.9M497.2,103.0 497.2,102.4 496.7,102.0 496.4,101.5 495.8,101.4 495.9,100.5 495.0,100.6 494.8,100.3M497.2,103.0 498.1,103.4 498.8,103.9 498.1,104.7 498.4,105.7 498.6,106.5 498.3,107.3 498.1,108.0 498.0,108.7M492.8,109.8 493.3,109.1 494.1,108.8 494.9,109.1 495.5,109.7 496.0,109.1 496.4,108.4 497.2,108.6 498.0,108.7M500.0,99.4 499.9,100.0 499.6,100.6 498.9,101.0 499.3,101.7 499.0,102.4 498.5,102.8 497.8,102.5 497.2,103.0M502.2,108.9 502.0,108.7 501.8,108.0 501.4,107.3 500.7,107.8 500.1,107.9 499.7,108.3M499.7,108.3 498.8,108.5 498.0,108.7M491.8,112.6 492.0,111.7 492.8,111.4 492.4,110.6 492.8,109.8M469.7,193.2 470.0,192.3 470.2,191.4 470.9,190.6 471.9,190.5M568.3,160.3 567.6,160.2 567.0,159.9 566.3,160.3 565.8,160.7 565.2,160.4 564.8,159.9 564.5,159.2 563.7,159.1M566.6,177.2 566.5,177.8 566.2,178.4 565.9,179.0 565.2,179.2 565.1,178.4 564.4,178.1 563.7,178.3 563.0,178.0M526.6,160.0 527.1,159.4 527.4,158.7 527.9,158.0 528.1,157.2 528.7,156.5 528.9,155.7 529.8,155.5 530.7,155.5M530.7,155.5 531.1,154.4 532.1,154.1 531.8,153.2 531.8,152.2 530.8,152.2 530.0,151.7 529.7,150.7 529.0,150.1M570.1,301.1 569.8,300.6 569.6,299.9 569.5,299.2M534.4,222.3 533.8,222.6 533.1,222.7 532.8,223.2 532.5,223.8 531.9,224.2 531.4,224.7 530.8,224.4 530.1,224.3M519.5,230.4 519.4,231.1 520.1,231.3 520.2,232.0 520.0,232.5 520.9,232.6 521.8,232.9 521.5,233.8 521.0,234.6M524.2,237.0 524.0,236.5 523.8,235.9 523.3,235.7 522.8,235.5 522.4,235.2 522.0,234.8 521.5,234.7 521.0,234.6M562.1,228.4 561.4,228.8 560.6,228.6 559.7,228.3 559.6,227.4M562.1,228.4 563.1,228.8 563.9,229.6 563.3,230.5 562.5,231.3 562.5,232.2 563.2,232.7 563.5,233.4 564.0,233.9M562.7,238.1 562.8,237.4 562.3,236.9 562.0,236.3 562.4,235.7 562.9,235.3 563.3,234.9 563.4,234.3 564.0,233.9M551.9,213.2 551.2,212.9 550.9,212.2 551.2,211.4 550.5,210.8 550.9,210.2 551.6,210.0 552.2,209.6 552.6,209.1M549.8,216.8 549.1,216.9 548.7,217.6 548.3,218.2 548.8,218.9 548.6,219.4 548.5,220.0 547.9,220.3 547.8,221.0M549.8,216.8 550.5,216.8 550.8,216.2 551.3,215.9 551.8,215.5 551.7,214.9 552.0,214.4 551.9,213.8 551.9,213.2M547.8,221.0 547.8,221.6 548.2,222.0 548.3,222.6 548.5,223.2 549.1,223.5 549.7,223.3 550.4,223.7 550.8,223.1 551.2,223.4 551.6,223.6 551.8,224.1 552.4,224.2 552.4,224.7 553.0,224.9 553.6,224.7 554.0,225.1M556.8,225.7 556.0,225.9 555.4,225.4 554.7,225.3 554.0,225.1M562.1,228.4 562.6,228.4 563.1,228.2 563.5,227.9 563.9,227.6 564.2,227.2 564.6,226.9 565.2,226.6 564.9,225.9 565.2,225.4 565.4,224.9 566.0,225.0 566.4,224.6 566.8,224.4 567.3,224.5 567.8,224.4 568.3,224.3M572.5,227.5 572.2,226.9 571.7,226.4 571.2,225.8 570.5,225.8 570.0,225.3 569.2,225.3 568.6,224.9 568.3,224.3M559.6,227.4 558.8,227.2 558.0,226.8 557.5,226.1 556.8,225.7M568.3,224.3 568.9,224.0 569.3,223.5 569.1,222.9 569.2,222.3 569.6,221.7 570.1,221.1 570.0,220.3 569.1,220.1M569.1,220.1 568.8,219.5 569.0,218.9 569.6,218.7 569.8,218.1M577.2,206.3 577.1,207.3 578.0,207.8 577.4,208.4 576.7,208.9 576.2,209.4 575.6,209.8 575.8,210.6 575.3,211.2M575.3,211.2 574.5,211.2 573.7,210.9 572.9,210.8 572.2,211.3 571.4,210.8 570.5,210.7 569.4,210.5 569.0,211.6 568.7,212.4 568.5,213.3 568.6,214.2 568.0,215.0 567.9,216.1 568.7,216.8 569.4,217.4 570.4,217.7M569.8,218.1 570.4,217.7M601.1,225.5 600.9,225.0 600.8,224.5 600.8,224.0 601.2,223.6 601.3,223.2 601.5,222.7 601.8,222.4 602.2,222.0M602.2,222.0 602.9,221.4 602.7,220.5 602.2,219.9 601.9,219.2 601.4,218.4 601.6,217.5 601.9,216.5 603.0,216.5M577.2,206.3 577.9,205.5 577.5,204.5 576.9,203.8 576.7,202.8 577.7,202.0 577.1,200.8 578.0,200.3 579.0,200.1M584.9,201.1 584.4,200.4 583.7,199.9 582.9,200.1 582.1,199.6 581.4,200.0 580.6,200.3 579.8,200.2 579.0,200.1M615.5,208.9 615.1,208.5 614.7,207.9 614.2,207.3 613.5,207.0M613.5,207.0 613.0,207.1 612.5,207.4 612.0,207.1 611.4,207.2 610.8,207.1 610.3,207.5 609.9,207.9 609.3,207.7 609.0,208.3 608.3,208.3 607.7,208.6 607.4,209.1 606.9,209.4 606.3,209.1 605.7,209.1 605.1,208.8M605.1,208.8 605.1,209.6 604.8,210.4 604.5,211.2 604.2,211.9M613.1,202.1 613.4,202.7 613.6,203.4 613.6,204.1 613.0,204.6 612.6,205.2 613.0,205.8 613.5,206.3 613.5,207.0M613.1,202.1 612.4,201.6 612.2,200.8 611.9,200.1 611.6,199.4 610.9,199.4 610.1,199.3 609.4,198.8 608.6,198.9M602.7,207.2 603.5,207.3 604.2,207.6 604.9,208.0 605.1,208.8M603.0,216.5 603.3,215.6 603.8,214.8 602.6,215.0 602.2,213.8 602.7,213.3 603.0,212.7 603.8,212.5 604.2,211.9M598.5,204.5 598.9,205.1 599.6,205.1 599.9,205.7 600.4,206.2 600.9,206.8 601.6,206.6 602.1,206.9 602.7,207.2M611.4,235.1 611.2,235.8 611.8,236.1 612.5,235.7 612.9,236.3 613.4,236.6 613.8,237.0 614.3,236.9 614.8,236.8M522.3,203.4 523.0,202.8 523.8,202.3 524.4,201.5 524.2,200.5M522.3,203.4 522.5,204.0 522.6,204.7 523.1,205.0 523.8,205.0 523.5,205.5 523.6,206.1 524.0,206.5 524.2,207.1M524.2,200.5 524.2,199.7 524.9,199.6 525.4,199.2 526.0,199.2 526.0,198.3 525.8,197.5 526.7,197.4 527.5,197.5M503.3,206.3 504.3,206.0 505.0,206.8 505.8,207.2 506.5,207.9M506.5,207.9 506.7,207.2 507.3,206.9 507.7,206.5 508.2,206.1 508.7,206.7 509.4,206.7 510.0,206.3 510.7,206.6 511.1,206.2 511.3,205.7 511.6,205.2 511.6,204.6 511.9,204.1 512.4,203.7 512.8,203.4 513.2,203.0M513.2,203.0 512.4,202.5 511.4,202.2 512.0,201.2 511.3,200.3M508.7,196.7 509.4,196.8 509.8,197.3 510.4,197.4 510.9,197.8 510.9,198.5 511.1,199.0 511.2,199.7 511.3,200.3M499.1,205.7 499.7,205.7 500.2,205.5 500.8,205.3 501.3,205.7 502.0,205.9 502.1,206.7 502.7,206.5 503.3,206.3M474.4,202.2 473.9,202.4 473.3,202.6 472.8,202.9 472.2,203.0M469.7,193.2 469.1,193.7 468.3,194.1M472.2,203.0 471.4,203.0 470.7,202.9 469.9,202.9 469.2,202.6 469.4,201.8 469.5,201.0 469.3,200.2 468.6,199.7M468.3,194.1 468.0,194.9 468.2,195.7 468.9,196.2 469.4,196.8 469.1,197.5 468.9,198.2 468.8,198.9 468.6,199.7M496.7,206.9 496.4,207.6 495.8,208.1 495.8,208.9 495.7,209.6M488.8,207.8 489.0,207.2 489.0,206.6 488.7,206.1 488.5,205.5 488.0,205.1 487.5,204.7 487.5,204.0 487.7,203.4M488.8,207.8 489.4,207.8 490.0,208.1 490.3,208.6 490.6,209.1 491.4,209.2 491.9,209.8 491.9,210.6 491.4,211.2M489.1,201.7 488.6,202.0 488.3,202.5 487.8,202.8 487.7,203.4M491.4,211.2 492.0,211.1 492.7,211.0 493.4,210.8 494.1,211.1M495.7,209.6 495.0,209.5 494.5,210.0 494.4,210.6 494.1,211.1M456.7,230.5 457.5,229.9 458.2,229.3 459.0,229.9 460.0,230.0M472.2,203.0 471.5,203.8 471.8,204.7 471.9,205.6 472.5,206.3M449.5,228.4 449.0,227.6 448.7,226.8M459.9,213.7 459.7,213.0 460.2,212.5 460.9,212.3 461.0,211.6 460.8,210.9 460.6,210.2 460.0,209.9 459.2,209.9M459.2,209.9 458.8,209.3 458.5,208.6 457.6,208.0 457.0,208.8M452.6,210.0 453.1,209.5 453.9,209.4 454.2,208.8 454.4,208.1 455.2,207.9 455.9,207.7 456.3,208.4 457.0,208.8M511.1,452.3 511.1,452.2 511.7,452.0 512.1,451.6 512.5,451.2M506.1,451.2 505.0,450.9 505.0,449.8 503.9,449.8 503.5,448.8M502.0,446.9 502.2,447.5 502.4,448.1 503.1,448.3 503.5,448.8M502.0,446.9 501.8,446.4 501.8,445.8 501.4,445.3 500.8,445.2M495.7,445.3 496.7,445.4 496.9,444.4 497.8,444.8 498.2,443.9 499.1,443.5 499.7,444.1 500.3,444.6 500.8,445.2M495.7,445.3 494.8,445.0 494.3,445.8 493.6,445.3 492.8,445.3M488.3,445.6 488.3,445.6M492.8,445.3 492.2,444.9 491.6,445.1 491.0,445.4 490.3,445.1M490.3,445.1 489.8,445.4 489.4,445.7 489.0,445.9M488.4,445.7 488.3,445.6M593.6,251.6 593.1,252.3 592.5,252.9 591.9,252.1 591.0,252.2M593.6,251.6 594.2,251.0 594.4,250.2 595.0,249.6 595.2,248.8 595.9,248.5 596.7,248.7 597.6,249.0 598.3,248.6M598.3,248.6 599.0,248.5 599.6,248.1 599.0,247.5 599.2,246.8 599.4,246.2 600.0,246.2 600.3,245.7 600.6,245.3M561.8,441.9 562.0,442.8 562.7,443.2 563.0,443.9 563.5,444.6M563.5,444.6 564.1,445.1 565.0,445.2 565.5,445.9 566.1,446.4M561.8,441.9 561.5,441.1 561.3,440.4M557.6,443.0 558.2,442.9 558.6,442.5 559.0,441.9 559.7,442.0 560.3,441.9 560.7,441.5 560.8,440.8 561.3,440.4M566.1,446.4 566.6,447.0 567.1,447.2M553.6,430.5 554.1,430.2 554.5,429.7 554.8,429.1 554.9,428.5M553.6,430.5 552.7,430.9 552.3,431.8 551.3,432.1 550.4,431.7M547.3,433.3 548.2,432.9 548.6,432.0 549.5,432.1 550.4,431.7M553.3,427.5 553.6,427.8 554.1,428.0 554.6,428.1 554.9,428.5M553.3,427.5 552.3,427.5 551.4,427.4 550.7,426.8 550.3,425.9M552.4,305.1 553.0,305.2 553.4,305.7 553.7,306.1 554.0,306.6M554.0,306.6 554.4,307.5 554.4,307.5M628.4,268.1 628.4,268.1 627.6,268.1 626.9,267.6 626.1,266.9 625.4,267.6M468.1,357.0 468.8,357.6 469.5,357.9 470.4,358.0 471.3,357.8M468.1,357.0 468.2,356.5 468.4,356.0 468.3,355.4 468.5,354.8 468.2,354.3 468.2,353.8 467.7,353.4 467.6,352.8M467.6,352.8 468.0,352.4 467.8,351.9 468.0,351.5 468.3,351.2M473.9,352.0 473.1,352.0 472.4,351.5 471.6,351.4 470.9,351.3M470.9,351.3 470.4,352.0 469.6,352.0 469.0,351.5 468.3,351.2M443.4,73.2 442.6,73.5M435.7,79.1 436.3,79.1 436.9,79.4 437.3,79.9 438.0,79.9 438.6,80.5 439.1,81.2 439.6,80.4 440.5,80.1M442.6,73.5 442.7,74.2 442.8,74.9 443.2,75.5 443.7,76.1 444.0,76.7 444.6,77.3 444.4,78.0 444.2,78.8M440.5,80.1 441.0,80.2 441.5,80.1 442.0,79.8 442.5,79.9 443.2,79.8 443.9,80.1 444.2,79.5 444.2,78.8M450.1,75.3 449.9,75.8 449.6,76.2 449.1,76.5 448.8,77.0 448.2,76.7 447.7,77.2 447.7,77.9 447.1,78.2M444.2,78.8 444.9,79.6 445.9,79.6 446.5,78.8 447.1,78.2M455.9,72.0 455.7,72.0 454.7,72.1 454.7,73.4 453.4,73.5M450.1,75.3 450.7,75.3 451.2,75.7 451.8,75.4 451.9,74.7 452.6,75.1 453.0,74.5 453.1,74.0 453.4,73.5M447.1,78.2 447.0,79.0 447.6,79.6 447.4,80.4 447.6,81.1 448.4,80.9 449.1,81.2 449.7,81.8 450.6,81.7M435.7,79.1 435.1,78.7 434.4,78.7 433.7,78.6 433.0,78.4M432.5,78.7 433.0,78.4M432.5,78.7 431.7,79.1 430.8,78.8 430.0,79.0 429.1,78.7 428.3,79.0 428.0,79.1M432.4,84.9 432.6,84.9 433.3,84.1 433.3,83.1 433.3,82.1 432.9,81.2 432.3,80.5 432.0,79.5 432.5,78.7M385.0,191.5 385.3,191.0 385.7,190.6 386.0,190.1 386.0,189.5M385.0,191.5 384.6,191.9 384.2,192.3 383.6,192.1 383.0,192.2 382.7,192.8 382.5,193.4 381.8,193.7 381.2,193.3M384.9,185.6 384.8,186.2 384.8,186.8 385.2,187.2 385.7,187.5 385.6,188.0 385.4,188.6 385.8,189.0 386.0,189.5M538.4,177.1 537.8,177.4 537.2,177.1 536.5,177.3 536.4,178.0 536.0,178.4 535.8,178.9 535.5,179.4 535.5,180.0M527.7,177.6 528.2,178.2 528.4,178.8 528.2,179.8 529.1,180.0 529.6,180.6 530.3,180.8 530.6,181.5 531.1,182.0M535.5,180.0 534.7,179.6 534.0,179.0 533.1,179.6 532.3,178.8 532.3,179.7 531.8,180.5 532.3,181.7 531.1,182.0M530.3,194.1 530.9,193.8 531.2,193.2 530.8,192.5 531.3,191.9 531.9,191.7 532.5,191.4 532.8,190.7 533.5,190.7M531.0,185.5 531.7,185.8 532.0,186.6 532.4,187.4 533.3,187.6 532.7,188.3 533.2,189.2 533.1,190.0 533.5,190.7M583.2,145.3 582.5,145.8 582.1,146.4 581.3,146.8 581.1,147.7 580.3,147.3 579.5,147.6 578.7,147.7 578.0,148.2M578.0,148.2 577.1,148.2 576.2,148.2 575.6,148.9 575.0,149.4 574.4,150.1 573.8,150.6 573.5,151.4 573.4,152.2M561.0,152.7 560.5,152.4 560.0,152.2 559.7,151.7 559.1,151.5 559.2,150.9 559.6,150.4 559.3,149.8 559.0,149.3 558.5,149.1 558.0,148.8 557.6,148.2 558.0,147.6 557.5,147.4 557.2,147.0 556.8,146.6 556.9,146.0M556.9,146.0 557.3,145.4 558.0,145.1 558.6,144.7 559.0,144.1 559.0,143.3 559.7,142.8 560.5,142.6 560.6,141.7M568.3,160.3 568.8,161.3 570.0,161.2 570.8,160.7 571.7,160.4M561.0,152.7 561.0,153.3 560.8,154.0 560.3,154.5 560.0,155.2 560.4,155.7 560.8,156.3 561.4,156.7 561.9,157.1M561.9,157.1 562.7,157.6 563.5,157.5 564.1,158.3 563.7,159.1M571.7,160.4 572.5,160.6 573.4,160.3 574.4,160.0 574.3,159.0 575.2,158.4 576.1,158.9 576.7,158.1 576.7,157.2 576.7,156.4 576.6,155.6 576.2,154.9 575.7,154.3 575.0,153.8 574.2,153.6 574.4,152.5 573.4,152.2M581.2,161.3 581.8,161.4 582.5,161.3 583.0,161.8 583.7,161.7 583.6,162.6 584.1,163.3 584.9,163.4 585.8,163.3M571.7,160.4 572.4,160.3 572.7,160.9 573.2,161.4 573.8,161.3 574.3,161.1 574.9,161.1 575.5,161.1 576.0,160.9M576.0,160.9 576.7,160.8 577.4,160.6 577.9,160.9 578.6,161.1 579.2,161.2 579.9,161.1 580.6,160.8 581.2,161.3M583.2,145.3 584.1,145.2 584.3,144.4 584.9,144.8 585.6,144.9 586.0,144.5 586.4,144.1 587.0,143.9 587.4,143.4M599.0,158.2 598.4,157.9 597.9,157.3 597.7,156.6 597.2,156.1 597.0,155.4 597.1,154.6 597.6,154.1 597.8,153.3M610.7,158.7 609.7,158.7 609.1,157.8 608.2,158.5 608.2,159.6 607.3,159.5 606.8,160.2 606.0,160.1 605.4,159.7M600.0,165.6 599.1,165.4 598.5,164.8 598.4,163.9 598.7,163.0 598.8,162.3 598.9,161.5 599.6,161.1 600.1,160.5M600.1,160.5 600.7,159.9 601.0,159.2 601.8,159.3 602.6,159.1 603.2,159.5 603.9,160.0 604.7,160.0 605.4,159.7M608.6,198.9 608.2,198.4 607.7,198.1 607.9,197.6 608.0,196.9 607.4,197.0 607.0,196.7 606.5,196.6 606.0,196.4M606.0,196.4 606.7,195.8 606.9,194.9 607.5,194.3 608.2,193.7M608.2,193.7 608.1,192.9 608.5,192.2 609.3,192.1 609.8,191.5 610.3,190.8 610.5,189.9 611.3,190.3 612.0,190.2M592.9,127.0 592.8,126.7 592.5,126.1 591.8,126.0 591.1,126.4M560.8,269.7 561.9,270.0 562.7,269.2 563.5,269.8 564.3,270.4M567.8,272.1 567.1,272.2 566.8,271.6 566.7,271.1 566.3,270.7 565.8,271.0 565.3,271.0 565.0,270.4 564.3,270.4M573.7,285.6 573.2,285.7 572.7,285.5 572.2,285.3 571.8,285.1 571.1,285.2 570.8,284.7 570.7,284.1 570.2,283.8M569.3,280.7 568.9,281.5 569.3,282.4 569.5,283.2 570.2,283.8M569.3,280.7 570.0,280.7 570.6,280.4 570.8,279.8 570.6,279.1 570.7,278.6 571.0,278.1 571.2,277.6 571.2,277.1M572.3,274.2 571.9,273.4 571.8,272.6 571.6,271.7 571.0,271.1 570.6,272.1 569.7,272.7 568.6,272.7 567.8,272.1M572.3,274.2 571.7,274.8 571.7,275.6 572.0,276.5 571.2,277.1M558.0,293.3 558.5,292.8 558.7,292.1 559.1,291.5 559.8,291.2 558.9,291.1 558.0,290.8 558.1,289.9 558.3,289.0M565.1,288.9 565.7,289.5 566.3,290.1 567.0,290.5 567.9,290.8M565.1,288.9 564.5,288.1 563.7,287.7 562.8,287.9 561.9,288.0M561.9,288.0 561.4,288.2 561.1,288.5 560.6,288.7 560.1,288.5 559.9,289.0 559.3,289.1 558.8,289.4 558.3,289.0M569.5,299.2 570.2,298.9 570.5,298.3 571.2,298.0 571.9,297.8 572.6,297.5 572.8,296.7 572.2,295.9 572.9,295.3M572.9,295.3 572.6,294.7 572.3,294.2 571.8,293.7 572.2,293.0M572.2,293.0 571.5,292.9 570.9,293.0 570.2,293.1 569.7,292.6 569.2,292.1 568.7,291.7 568.4,291.1 567.9,290.8M555.7,295.5 556.3,294.9 557.2,294.7 558.0,294.3 558.0,293.3M574.9,288.2 574.4,287.5 574.7,286.7 574.1,286.3 573.7,285.6M574.9,288.2 574.6,288.9 574.2,289.5 573.5,290.2 574.1,291.0 573.5,291.4 573.2,292.1 573.0,292.9 572.2,293.0M556.3,289.4 556.7,288.9 557.2,288.8 557.8,288.8 558.3,289.0M532.7,281.4 532.7,282.2 532.6,282.9 532.6,283.7 532.3,284.4M532.3,284.4 532.4,284.9 532.0,285.3 531.6,285.6 531.3,286.0M554.0,225.1 553.2,225.8 552.1,226.0 552.5,227.0 552.2,228.1 551.2,228.1 550.3,228.6 549.9,229.6 549.9,230.6M544.8,220.4 545.6,220.1 546.3,220.4 547.3,220.1 547.8,221.0M548.1,232.8 548.8,232.4 549.0,231.7 549.4,231.1 549.9,230.6M547.2,275.0 547.1,274.0 547.9,273.4 548.7,272.9 549.3,272.2M547.2,275.0 547.4,275.4 547.8,275.7 548.2,276.1 548.1,276.6 548.7,276.7 549.0,277.3 549.1,277.9 548.7,278.4M549.3,272.2 549.6,271.5 550.3,271.4 550.8,270.9 551.5,270.7M560.8,269.7 559.9,270.0 559.1,270.3 558.2,270.1 557.4,269.6M557.4,269.6 556.8,269.5 556.2,269.7 555.5,269.9 555.0,269.4 554.3,269.3 553.8,269.7 553.2,269.9 552.6,270.0M552.6,270.0 552.2,270.5 551.5,270.7M531.6,269.5 532.1,269.6 532.6,269.7 532.9,270.2 533.2,270.6M523.9,279.2 524.6,278.9 525.3,278.9 526.1,278.8 526.6,278.3M526.6,278.3 527.5,278.3 528.3,277.7 528.3,276.7 529.0,276.1M527.9,269.0 528.5,269.4 529.1,269.9M532.4,216.2 533.0,216.0 533.6,216.2 534.1,216.5 534.6,216.8 535.1,217.3 535.5,217.7 535.8,218.1 536.2,218.6M539.8,218.9 539.5,218.4 539.0,218.5 538.5,218.6 538.0,218.8 537.6,218.7 537.1,218.6 536.6,218.5 536.2,218.6M538.8,198.0 538.3,198.6 538.7,199.3 539.2,199.6 539.7,200.0 540.2,200.4 540.6,201.0 541.3,200.9 541.8,200.5M544.8,220.4 544.4,219.8 543.6,219.6 542.9,219.5 542.3,219.9 541.6,219.7 541.0,219.4 540.4,219.2 539.8,218.9M534.4,222.3 534.4,221.7 535.0,221.4 535.4,221.1 535.7,220.7 535.6,220.1 535.9,219.6 535.9,219.1 536.2,218.6M551.7,205.6 551.7,206.5 552.1,207.3 552.7,208.1 552.6,209.1M529.1,214.4 528.9,213.8 528.3,213.6 527.8,213.1 527.9,212.5 527.8,211.8 527.1,211.6 526.5,211.5 526.0,211.3M522.8,222.1 523.5,222.5 524.2,222.6 524.8,223.0 525.6,223.1M530.1,224.3 529.6,224.6 528.9,224.7 528.5,223.9 527.7,224.3 527.1,224.0 526.4,224.1 526.0,223.6 525.6,223.1M532.4,216.2 531.8,216.3 531.3,216.1 531.0,215.7 530.7,215.3 530.2,215.1 529.6,215.4 529.2,215.0 529.1,214.4M524.2,207.1 524.8,207.6 525.1,208.3 524.7,209.0 524.3,209.5 524.8,209.9 525.3,210.3 525.5,210.9 526.0,211.3M521.7,224.1 522.3,223.8 522.7,223.4 522.7,222.7 522.8,222.1M524.2,237.0 524.6,237.8 525.3,238.3 526.1,238.7 526.8,239.2M513.3,243.9 513.7,243.3 514.0,242.5 513.2,242.0 513.4,241.0M513.4,237.5 513.3,238.4 513.4,239.3 513.3,240.2 513.4,241.0M580.4,250.2 580.7,250.7 581.2,250.9 581.5,251.4 581.3,252.0 581.8,252.1 582.1,252.5 582.5,252.7 583.0,252.9M591.0,252.2 590.1,252.0 589.3,252.5 588.4,252.6 587.9,253.3 587.2,253.9 586.2,254.0 586.4,255.0 585.6,255.7M583.0,252.9 583.5,253.3 583.7,254.0 584.3,253.7 585.0,253.6 585.1,254.2 585.2,254.7 585.6,255.1 585.6,255.7M580.4,250.2 580.1,249.3 580.5,248.4 579.5,248.9 578.7,248.1 578.0,248.2 577.3,247.9 576.7,247.6 576.0,247.6M576.0,247.6 575.3,248.0 574.8,248.5 574.5,249.2 574.1,249.8M574.1,249.8 574.1,250.7 573.9,251.6 573.6,252.5 572.8,253.0M572.8,253.0 573.3,253.3 573.5,254.0 574.0,254.4 574.5,254.8 574.4,255.4 574.8,256.0 575.1,256.5 575.4,257.1M562.7,238.1 561.5,238.3 561.6,239.4 560.7,239.9 560.7,241.0M559.2,243.2 559.9,243.0 560.5,242.4 560.8,241.7 560.7,241.0M572.7,197.6 571.8,197.8 570.9,197.6 570.2,198.1 569.7,198.8 570.4,197.8 569.6,196.9 568.8,196.6 568.1,196.0M572.7,197.6 573.3,197.5 573.9,197.6 574.5,197.3 575.1,197.6 575.4,198.2 576.0,198.4 576.4,198.9 576.9,199.2M576.9,199.2 577.5,199.9 577.5,200.8 578.2,200.3 579.0,200.1M560.0,181.2 559.4,181.2 558.9,181.5 558.5,181.9 558.0,182.3 557.6,182.8 557.2,183.2 556.6,183.4 556.0,183.5M556.5,189.5 556.7,190.2 557.3,190.6 557.7,191.1 558.2,191.6 558.9,191.8 559.6,192.0 559.8,192.8 560.5,193.2M556.5,189.5 556.5,188.9 556.0,188.7 555.6,188.3 555.7,187.8 555.4,187.4 555.2,186.9 555.3,186.4 555.3,186.0M563.4,194.0 562.6,194.3 561.8,193.9 561.5,192.9 560.5,193.2M555.3,186.0 555.4,185.3 555.5,184.7 555.9,184.2 556.0,183.5M563.0,178.0 562.4,178.5 561.7,178.3 561.1,178.6 560.4,178.6 559.7,179.1 559.9,179.9 560.1,180.6 560.0,181.2M552.7,175.9 552.3,175.6 551.8,175.4 551.8,174.9 551.5,174.5M552.7,175.9 552.2,176.6 551.5,176.8 551.5,177.5 551.5,178.2 551.9,178.9 552.6,179.2 552.6,179.9 552.3,180.6 552.5,181.3 552.5,182.0 553.3,182.3 553.2,183.2 554.1,183.0 554.7,182.3 555.2,183.1 556.0,183.5M557.6,197.6 558.4,197.2 559.1,196.6 558.3,195.9 558.3,194.9 558.6,194.2 559.1,193.7 559.8,193.5 560.5,193.2M568.1,196.0 567.4,196.2 566.8,195.8 566.3,195.3 565.6,195.2 565.4,194.5 564.7,194.2 564.1,194.0 563.4,194.0M552.7,175.9 552.0,176.8 551.1,176.3 550.4,176.7 549.8,177.3 548.8,177.9 548.2,176.9 547.3,176.8 546.7,177.6M545.5,200.9 546.2,200.9 546.9,200.9 547.5,201.2 548.0,201.7 548.7,201.9 549.3,201.8 550.0,201.7 550.7,202.0M550.7,202.0 550.6,201.3 550.3,200.6 550.4,199.8 551.2,199.4 551.7,198.5 552.6,198.8 553.1,199.5 553.8,199.9M551.7,205.6 551.0,205.6 550.8,204.9 550.4,204.4 549.9,204.2 549.8,203.6 549.8,202.9 550.2,202.5 550.7,202.0M541.8,200.5 542.3,200.3 542.8,200.1 542.9,200.8 543.6,200.8 544.0,201.3 544.5,201.7 544.8,201.0 545.5,200.9M557.6,197.6 556.9,197.5 556.2,197.2 555.9,197.9 555.5,198.4 554.8,198.5 554.5,199.0 554.3,199.6 553.8,199.9M579.4,240.6 579.5,239.9 579.3,239.2 579.6,238.7 580.2,238.3 580.2,237.5 579.6,237.2 579.7,236.6 579.4,236.0M579.4,240.6 578.8,241.0 579.0,241.8 579.2,242.4 579.2,243.0 578.6,243.4 578.3,243.9 577.7,244.2 577.4,244.7M576.0,247.6 575.3,246.7 575.2,245.5 576.2,244.6 577.4,244.7M576.6,228.4 576.3,227.5 575.6,226.9 575.1,226.2 574.8,225.3 574.3,224.3 574.3,223.1 575.4,222.8 576.3,222.2M576.6,228.4 577.3,228.4 577.8,228.6 578.2,229.2 578.9,229.1 579.3,229.6 579.5,230.2 579.7,230.7 579.9,231.3M579.9,231.3 580.6,230.8 581.3,230.3 581.8,229.3 582.9,229.4M582.9,229.4 583.6,229.4 583.9,228.8 584.2,228.3 584.5,227.7 585.0,227.3 585.0,226.6 585.5,226.3 586.0,226.0M572.5,227.5 573.1,227.9 573.7,227.6 573.9,228.2 574.4,228.6 575.0,228.8 575.6,228.6 576.1,228.5 576.6,228.4M570.4,217.7 570.9,217.8 571.4,217.8 571.9,217.7 572.4,217.8 572.7,218.3 573.1,218.6 573.8,218.1 574.2,218.9 574.6,219.2 575.0,219.6 575.3,220.2 574.9,220.8 575.1,221.3 575.6,221.5 576.0,221.8 576.3,222.2M579.4,236.0 579.8,235.5 579.9,234.9 579.8,234.3 580.0,233.7 580.0,233.0 580.4,232.5 579.8,232.0 579.9,231.3M588.6,225.9 587.9,226.0 587.3,225.9 586.7,226.3 586.0,226.0M585.9,166.4 585.9,167.0 585.8,167.6 585.9,168.1 586.1,168.6 585.5,168.8 585.3,169.4 584.7,169.6 584.6,170.2 584.6,171.0 583.9,171.2 583.9,171.8 583.5,172.3 582.9,172.1 582.3,172.2 581.7,172.2 581.1,172.2M585.9,166.4 585.6,165.6 585.0,164.9 585.3,164.1 585.8,163.3M581.1,172.2 580.7,172.1 580.2,172.0 579.8,171.3 579.3,171.8 578.9,171.6 578.4,171.4 577.9,171.5 577.5,171.2M577.5,171.2 577.3,172.1 576.6,172.7 575.9,172.9 575.1,173.2M584.1,177.8 584.2,176.7 583.2,176.4 583.0,175.5 583.2,174.7 583.4,173.7 582.9,172.8 581.9,173.0 581.1,172.2M584.1,177.8 584.7,177.2 585.3,176.7 586.1,176.3 586.7,175.8 587.6,176.1 588.6,176.3 589.5,175.8 589.9,174.8M589.9,174.8 589.8,174.0 590.3,173.4 591.0,173.1 591.7,172.7 592.1,172.2 592.8,171.9 593.4,171.6 594.0,171.3M600.0,165.6 600.2,166.7 599.3,167.2 599.2,168.1 599.0,168.9M600.1,160.5 600.4,159.8 600.0,159.1 599.4,158.8 599.0,158.2M599.0,168.9 598.4,169.5 597.7,169.3 597.0,169.6 596.5,170.1 595.8,170.4 595.5,171.1 594.7,170.9 594.0,171.3M607.1,185.9 607.1,186.0 606.4,185.9 605.8,185.5M601.4,175.3 602.0,175.9 601.4,176.5 601.5,177.1 601.6,177.8 601.9,178.0M602.1,181.1 602.1,181.2 602.1,181.8 602.3,182.3 602.3,182.9 602.5,183.4 603.0,183.7 603.2,184.3M603.2,184.3 603.8,184.8 604.5,184.8 605.4,184.8 605.8,185.5M599.0,168.9 599.6,169.7 599.9,170.6 599.5,171.5 599.3,172.5 599.9,173.2 600.1,174.1 600.7,174.7 601.4,175.3M451.4,333.0 452.1,332.7 452.9,333.0 453.5,333.4 454.3,333.4M476.9,252.4 477.7,252.0 478.0,251.2 478.8,251.1 479.6,251.2M476.9,252.4 476.3,252.0 475.9,251.4 475.2,251.6 474.5,251.8 474.3,251.2 474.2,250.6 474.1,250.0 473.8,249.5M473.8,249.5 473.8,248.8 473.5,248.3 473.2,247.7 473.2,247.1M456.7,230.5 456.3,230.9 455.9,231.5 455.5,232.0 454.9,232.3M449.5,228.4 449.1,229.1 449.5,230.0 449.3,230.7 449.1,231.5M449.1,231.5 449.9,231.4 450.4,232.0 450.9,232.5 451.7,232.6M454.9,232.3 453.8,232.3 453.4,233.3 452.5,233.1 451.7,232.6M520.2,251.6 521.0,251.0 521.7,250.3 522.8,250.8 522.9,252.0M522.9,252.0 523.5,252.3 524.1,252.0 524.7,251.4 525.3,251.8M525.3,251.8 526.1,251.7 526.3,251.0 526.9,250.6 527.3,250.1M517.2,252.9 517.0,253.5 516.7,254.0 516.4,254.6 516.8,255.2M517.2,252.9 518.2,253.1 518.7,252.3 519.6,252.2 520.2,251.6M516.8,255.2 516.6,255.7 516.7,256.2 516.9,256.6 517.0,257.1M513.3,243.9 512.7,244.5 513.2,245.2 513.4,245.8 513.1,246.5M513.1,246.5 513.6,246.7 514.0,247.1 514.2,247.7 514.1,248.3M513.1,246.5 512.4,246.6 511.6,246.7 510.8,246.3 510.1,246.9M517.2,252.9 516.4,252.4 515.6,252.1 515.6,251.1 515.0,250.4M515.0,250.4 514.8,249.8 514.9,249.2 514.6,248.6 514.1,248.3M530.3,194.1 530.4,194.8 530.8,195.5 530.0,195.7 529.7,196.4 529.0,196.4 528.4,196.5 528.0,197.0 527.5,197.5M508.5,192.4 508.8,192.9 509.0,193.4 509.0,194.0 509.0,194.6 509.1,195.1 509.1,195.7 508.7,196.1 508.7,196.7M517.1,204.4 516.4,204.3 516.2,203.7 515.9,203.1 515.5,202.7 514.8,202.7 514.3,202.2 513.6,202.4 513.2,203.0M517.1,204.4 517.8,204.2 518.4,203.8 519.0,204.3 519.8,204.3 520.4,204.1 521.0,203.6 521.7,203.5 522.3,203.4M515.4,167.5 514.8,167.2 514.3,166.8 513.8,166.4 513.3,166.0 512.8,166.5 512.3,166.9 511.7,167.2 511.0,167.3M511.0,167.3 510.4,166.8 509.8,167.3 509.3,167.0 508.6,167.1M508.6,167.1 508.4,166.3 508.1,165.5 507.7,164.7 507.6,163.8 508.4,162.9 507.5,162.1 507.1,161.2 507.8,160.4M494.1,166.5 494.7,166.5 495.2,166.7 495.8,166.6 496.2,166.1 496.7,166.3 497.3,166.3 497.6,165.6 498.3,165.7M503.2,153.8 503.5,154.3 503.5,154.9 503.4,155.5 503.0,156.0 503.7,155.6 504.5,155.5 504.6,156.3 505.1,156.9M508.6,167.1 507.7,167.0 506.8,166.7 506.1,166.0 505.8,165.1 505.0,165.5 504.1,165.8 503.2,166.0 502.6,166.6M502.6,166.6 502.0,167.0 501.4,167.2 500.8,167.0 500.4,166.4 499.8,166.7 499.1,166.8 498.7,166.2 498.3,165.7M507.8,160.4 507.5,159.9 506.8,159.6 506.3,159.2 505.6,159.3 505.0,158.6 505.7,158.0 505.6,157.3 505.1,156.9M489.1,201.7 490.1,201.1 489.7,200.0 489.4,199.1 489.9,198.3M486.1,201.7 486.2,202.3 486.7,202.7 487.1,203.2 487.7,203.4M489.9,198.3 489.7,197.6 489.8,196.8 489.2,196.4 488.5,196.4 489.3,196.4 489.7,195.7 489.6,194.9 489.3,194.2M496.7,206.9 497.3,206.6 497.8,206.1 498.4,205.8 499.1,205.7M491.4,211.2 491.3,211.8 491.5,212.3 491.3,212.9 491.2,213.5 490.8,213.9 490.4,214.3 489.9,214.6 489.4,214.9M472.5,206.3 472.5,207.1 472.9,207.8 473.4,208.5 473.3,209.4M493.0,221.4 492.0,221.2 491.6,222.2 491.0,222.9 490.6,223.6M493.0,221.4 492.9,220.8 492.9,220.2 492.7,219.6 492.5,219.0M490.6,223.6 490.4,223.2 490.4,222.6 490.2,222.1 489.6,221.8 489.5,221.3 488.9,221.1 488.3,221.2 487.8,220.9M492.5,219.0 491.4,218.9 491.4,217.8 490.8,217.3 490.0,217.2M491.6,228.2 490.8,227.9 490.3,227.3 490.4,226.5 489.7,225.9M489.7,225.9 489.8,225.3 490.1,224.7 490.4,224.2 490.6,223.6M487.8,227.0 488.4,227.0 488.8,226.5 489.2,226.0 489.7,225.9M484.8,219.7 485.3,220.5 486.1,221.0 487.0,221.1 487.8,220.9M489.4,214.9 490.3,215.3 489.7,216.1 490.1,216.6 490.0,217.2M484.8,219.7 484.1,219.3 483.9,218.6 483.2,218.3 482.5,218.7M513.0,224.6 512.4,224.5 511.9,224.1 511.8,223.4 511.3,223.0M508.9,220.0 508.2,219.4 507.6,218.7 508.5,218.2 508.5,217.1 507.5,216.8 507.5,215.9 507.5,215.1 507.5,214.3M507.0,210.5 506.9,211.1 506.5,211.5 506.3,212.0 506.3,212.6 506.8,212.9 506.8,213.5 506.9,214.1 507.5,214.3M504.3,226.9 503.4,227.0 502.5,227.2 501.6,227.4 500.9,228.0M511.3,223.0 510.9,222.7 510.8,222.1 510.5,221.6 509.9,221.7 509.8,221.2 509.3,220.9 509.3,220.4 508.9,220.0M506.5,207.9 506.7,208.5 506.9,209.2 507.4,209.8 507.0,210.5M500.9,228.0 500.7,228.7 500.0,228.8 499.9,229.4 500.1,230.0 499.7,230.4 499.6,230.9 499.2,231.3 498.8,231.7M498.8,231.7 498.8,232.5 498.3,233.2M491.6,228.2 492.1,228.8 492.4,229.4 493.1,229.7 493.8,230.1M498.3,233.2 497.5,233.3 497.1,232.5 496.5,232.2 495.8,231.9 495.2,231.5 494.6,231.3 494.2,230.7 493.8,230.1M448.7,226.8 448.4,227.3 447.7,227.3 447.2,227.5 446.6,227.2M444.1,218.8 443.5,219.2 443.4,220.0 443.2,220.6 443.0,221.3M436.6,221.0 437.1,221.8 437.7,222.4 438.3,221.8 439.2,221.5 439.8,221.6 440.4,221.9 440.6,222.7 441.4,222.8M436.6,221.0 436.2,220.2M436.2,220.2 436.5,219.6 436.2,219.0 435.8,218.6 435.3,218.4M441.4,222.8 441.8,222.2 441.6,221.5 442.4,221.7 443.0,221.3M444.1,218.8 444.2,218.0 444.5,217.2 444.9,216.5 444.9,215.6M444.9,215.6 444.8,215.1 444.8,214.6 444.8,214.1 444.9,213.6 445.0,213.2 445.2,212.7 445.3,212.2 445.7,211.9M452.6,210.0 452.1,209.7 451.6,209.3 450.9,209.5 450.3,209.4 449.8,209.0 449.2,209.0 448.6,208.7 448.0,208.6M445.7,211.9 446.3,211.9 446.5,211.3 447.1,211.0 447.0,210.4 447.4,209.8 448.1,209.8 448.0,209.2 448.0,208.6M448.0,208.6 447.9,207.9 448.2,207.2 448.4,206.5 448.2,205.7M448.2,205.7 448.9,205.4 449.7,205.1 450.5,204.7 450.8,203.9 451.5,203.4 452.4,203.7 453.2,203.7 453.9,203.3M442.7,204.0 443.4,204.0 443.7,204.6 444.2,204.3 444.7,204.3 445.5,204.7 445.9,203.9 446.5,204.3 446.6,205.0M446.6,205.0 447.3,205.5 448.2,205.7M453.9,203.3 454.2,202.8 454.8,202.6 455.1,202.1 455.6,201.9 456.0,201.4 456.0,200.8 456.3,200.4 456.6,199.9M353.9,242.7 353.4,242.3 353.1,241.8 353.2,241.0 353.9,240.9M353.9,240.9 353.6,240.6 353.4,240.1 353.0,239.9 352.5,239.7M349.3,238.9 350.2,239.1 350.9,239.6 351.7,239.6 352.5,239.7M380.2,139.5 381.0,139.4 381.8,139.7 382.7,139.8 383.1,140.6M380.2,139.5 379.3,139.4 378.4,139.7 377.9,139.3M388.3,141.3 387.3,141.5 387.2,142.6M388.3,141.3 389.1,141.7 389.9,141.9 390.7,141.3 390.6,140.4 390.3,139.8 389.8,139.3 390.5,138.7 390.0,138.0M387.2,142.6 386.6,142.6 386.1,142.3 385.5,142.1 384.9,142.2 384.7,141.5 384.0,141.3 383.5,141.1 383.1,140.6M390.1,135.4 389.9,136.0 389.9,136.7 389.8,137.3 390.0,138.0M386.5,146.1 386.5,145.7 386.7,145.2 386.7,144.7 386.5,144.3 386.5,143.8 386.6,143.3 386.6,142.7 387.2,142.6M500.8,445.2 501.4,444.6 501.3,443.8 501.1,443.1 500.7,442.4M500.7,442.4 500.0,441.9 499.7,440.9 500.1,440.1 499.9,439.2M481.7,429.8 481.0,430.3 481.1,431.2 481.3,432.0 481.6,432.7M481.7,429.8 482.7,428.9 481.9,427.9 482.7,427.3 483.7,427.4M492.3,429.4 492.2,430.0 492.6,430.5 493.0,430.8 493.5,431.0M493.5,431.0 494.0,431.3 494.3,431.9 495.1,431.7 495.4,432.3M499.7,437.1 499.5,437.6 499.8,438.1 499.7,438.7 499.9,439.2M499.7,437.1 499.5,436.3 499.0,435.7 499.1,434.7 498.1,434.4M498.1,434.4 497.5,433.9 496.7,433.4 495.8,433.2 495.4,432.3M471.4,431.5 471.2,430.8 471.4,430.2 471.6,429.7 471.7,429.0M478.4,425.4 477.9,424.9 477.3,424.7 476.8,425.0 476.2,425.2M483.7,427.4 483.9,426.9 484.4,426.6 484.8,426.4 485.3,426.3M492.3,429.4 491.9,428.8 491.4,428.1 490.8,427.7 490.0,427.5M485.3,426.3 485.8,426.9 486.4,427.3 487.1,427.2 487.7,426.7 488.3,426.3 489.1,426.5 489.3,427.2 490.0,427.5M481.1,423.0 480.6,422.7 480.0,423.0 479.5,423.6 478.9,423.2 478.3,423.6 478.3,424.2 478.6,424.8 478.4,425.4M481.1,423.0 481.7,422.9 482.3,422.6 482.7,422.2 483.3,422.1M485.3,426.3 485.8,425.4 485.2,424.5 485.8,423.4 484.7,422.8M483.3,422.1 484.3,422.0 484.7,422.8M473.7,422.6 474.6,423.1 475.6,423.3 475.1,424.5 476.2,425.2M471.4,450.5 471.6,449.7 472.5,449.5 472.4,448.8 472.2,448.1M472.2,448.1 472.8,447.6 472.3,446.9 471.9,446.6 471.3,446.3M471.3,446.3 470.7,445.8 469.9,446.0 469.3,445.6 468.5,445.8M466.4,448.3 467.1,447.6 468.0,447.5 468.0,446.6 468.5,445.8M481.6,432.7 481.3,433.5 481.3,434.3 481.9,435.0 482.8,435.1M483.7,437.8 483.2,437.2 483.4,436.4 483.2,435.7 482.8,435.1M474.7,436.6 475.3,436.6 475.9,436.9 476.6,436.9 477.2,437.2M484.8,443.5 484.4,443.0 484.2,442.5 484.4,441.9 484.7,441.4 484.8,440.8 484.2,440.6 483.7,440.3 483.4,439.8M483.4,439.8 482.7,440.0 482.0,440.1 481.5,440.6 481.2,441.3 480.7,440.6 479.9,440.5 479.5,439.9 479.6,439.1M488.3,445.6 488.0,445.0 487.8,444.4 487.7,443.8 487.3,443.3 486.8,443.8 486.1,444.1 485.2,444.3 484.8,443.5M483.7,437.8 483.6,438.3 483.8,438.8 483.6,439.3 483.4,439.8M477.2,437.2 477.5,437.9 478.2,438.3 478.6,439.2 479.6,439.1M474.7,436.6 473.9,437.1 473.5,437.8 472.7,438.1 471.9,438.2M592.9,228.2 593.8,228.4 594.7,228.1 595.4,227.5 596.4,227.6 597.3,227.1 598.1,226.3 598.8,227.2 599.9,227.4M599.9,227.4 600.0,228.1 600.1,228.7 600.3,229.4 600.3,230.1 600.7,230.8 601.5,231.0 601.3,231.8 601.4,232.6M588.6,225.9 589.2,226.2 589.6,226.6 590.0,227.2 590.4,227.7 591.1,228.3 591.7,227.6 592.2,228.1 592.9,228.2M601.1,225.5 600.6,225.8 600.3,226.3 600.3,226.9 599.9,227.4M600.6,245.3 600.7,244.8 600.5,244.3 600.2,243.7 600.8,243.4 600.6,242.9 600.8,242.3 601.1,241.8 601.6,241.6M601.4,232.6 602.1,232.8 602.4,233.5 602.5,234.1 602.6,234.8M601.6,241.6 602.1,240.7 602.9,240.2 603.1,239.1 602.6,238.3 603.3,237.6 603.5,236.5 602.6,235.8 602.6,234.8M611.4,235.1 611.3,234.4 610.5,234.3 610.1,234.7 609.5,234.7 609.0,234.6 608.5,234.6 608.0,234.7 607.5,234.7M602.6,234.8 603.2,235.3 603.8,234.7 604.4,234.9 605.1,234.9 605.7,234.7 606.3,234.5 606.9,234.7 607.5,234.7M614.8,236.8 615.5,237.4 615.6,238.3 616.4,238.8 617.3,238.6M618.0,238.6 617.3,238.6M550.3,425.9 550.1,425.4 550.2,424.7 550.1,424.1 549.7,423.7M549.7,423.7 550.6,423.4 550.9,422.4 551.1,421.6 551.3,420.8M551.3,420.8 551.5,419.9 550.6,419.9 550.8,419.4 550.8,418.9 551.3,418.6 551.4,418.1 551.4,417.6 551.3,417.1M551.3,417.1 549.8,416.8 550.0,415.3 548.8,415.4 547.8,414.8 546.8,415.4 546.3,416.4 545.6,417.3 545.8,418.5M545.8,418.5 545.9,419.3 545.4,419.8 544.7,419.9 544.1,419.4M541.7,419.5 541.1,419.2 540.4,419.1 539.6,419.1 538.9,419.1M541.7,419.5 542.3,419.4 542.9,419.3 543.5,419.5 544.1,419.4M489.3,363.6 490.5,363.5 490.9,362.3 492.2,362.5 492.5,363.7M492.5,363.7 493.3,363.0 494.2,363.3 495.1,363.4 495.6,364.2M486.7,362.8 486.0,362.6 485.3,362.4 484.9,363.0 484.4,363.5M486.7,362.8 487.3,363.3 488.0,363.1 488.7,363.2 489.3,363.6M482.8,365.5 483.2,366.0 483.1,366.7 483.8,366.8 484.0,367.5 484.0,368.1 484.0,368.7 484.1,369.3 484.1,369.9M482.8,365.5 482.6,364.7 483.1,364.1 483.8,363.8 484.4,363.5M531.5,327.5 531.6,326.7 531.8,325.8M531.5,327.5 530.6,327.8 529.9,328.4 529.6,329.3 529.3,330.2M531.8,325.8 531.2,325.4 530.8,324.9 530.6,324.3 530.1,323.8 529.7,324.5 528.9,324.5 528.3,324.4 527.6,324.5M527.8,332.8 528.6,332.6 529.2,331.9 529.3,331.0 529.3,330.2M527.8,332.8 527.0,332.8 526.4,333.3 526.1,334.0 525.9,334.7M552.4,305.1 552.2,304.3 552.4,303.6 552.0,303.0 551.5,302.5M544.2,303.4 544.0,304.0 544.1,304.6 543.7,305.1 543.1,305.4M619.3,282.4 619.7,281.6 619.8,280.8 620.7,280.7 621.4,281.2M619.3,282.4 618.8,282.4 618.3,282.5 617.7,282.7 617.5,283.2 616.8,283.2 616.5,282.6 616.3,282.7M616.0,267.1 616.7,267.4 617.0,268.1 617.7,268.0 618.4,268.0 619.1,267.8 619.5,267.2 620.2,267.1 620.9,267.2M625.4,267.6 625.1,266.9 624.4,266.8 623.8,267.1 623.1,267.2 622.6,267.4 622.0,267.2 621.5,267.5 620.9,267.2M621.4,281.2 622.1,281.1 622.6,281.4 623.1,281.0 623.6,280.6 623.9,280.9M588.7,286.2 588.1,286.8 587.6,287.5 587.2,288.2 586.5,288.6M619.3,282.4 619.8,282.9 619.9,283.5 619.6,284.1 619.7,284.7 620.2,285.1 620.5,285.7 620.5,285.7M468.1,357.0 467.3,357.3 466.9,357.9 466.2,358.0 465.5,357.8M465.5,357.8 465.1,357.0 464.1,356.9 463.5,357.5 462.6,357.3M462.6,357.3 462.1,356.7 461.5,356.1 460.7,356.0 459.9,355.9M457.1,370.1 457.3,369.7 457.7,369.4 458.0,369.0 458.2,368.6M458.2,368.6 458.8,368.4 459.3,367.9M472.2,359.7 471.8,360.1 471.4,360.5 471.9,361.1 471.5,361.7 472.0,362.1 472.1,362.8 471.7,363.3 471.2,363.8M475.2,365.9 474.6,365.6 474.0,365.8 473.4,365.8 472.8,365.6 472.2,365.2 472.3,364.5 471.6,364.3 471.2,363.8M482.8,365.5 482.3,364.9 481.6,365.3 481.1,365.4 480.6,365.8 480.0,365.9 479.6,366.3 479.1,366.5 478.6,366.7M478.6,366.7 478.1,366.9 477.7,366.7 477.2,366.4 476.8,366.8M475.2,365.9 475.9,366.5 476.8,366.8M553.3,352.2 553.0,352.2 552.8,352.9M552.8,352.9 552.7,353.6 552.7,354.3 553.5,354.3 553.9,355.1M553.9,355.1 554.5,355.3 555.1,355.1M555.7,356.0 555.8,356.1M555.8,356.1 556.2,356.9 556.7,357.7 557.5,357.7M458.8,332.9 459.4,333.6 460.2,334.0 461.0,334.5 461.3,335.4M458.8,332.9 458.5,333.4 457.8,333.3 457.5,332.9 457.0,332.6M454.3,333.4 454.8,332.8 455.5,332.6 456.3,332.3 457.0,332.6M461.6,338.0 460.7,337.8 460.5,336.8 460.2,335.7 461.3,335.4M425.3,98.5 425.2,99.3 425.9,99.9 426.6,100.5 427.3,100.9M425.3,98.5 425.1,99.4 424.2,99.9 423.9,100.2M423.5,101.0 423.5,101.6 423.4,101.6M461.9,129.7 462.6,129.9 463.2,129.6 463.6,130.2 464.1,130.6 464.7,130.2 464.7,129.6 465.1,129.1 465.4,128.6M461.9,129.7 461.3,130.1 460.6,130.4 459.9,130.9 459.1,130.8M466.5,132.1 466.5,131.3 467.2,130.9 466.5,130.7 465.9,130.3 465.7,129.9 465.4,129.5 465.4,129.0 465.4,128.6M466.5,132.1 466.7,133.1 467.5,134.0 466.6,134.6 466.1,135.5M455.0,131.7 454.9,132.6 454.3,133.4 453.5,133.9 453.6,134.9M455.0,131.7 455.4,131.3 456.1,131.4 456.5,131.0 456.9,130.5 457.5,130.7 458.0,130.3 458.6,130.6 459.1,130.8M503.2,153.8 503.1,153.2 503.3,152.6 503.0,152.1 502.7,151.5 502.6,150.9 502.8,150.3 502.8,149.7 503.4,149.3M506.3,147.0 506.4,147.5 506.1,148.0 505.6,148.4 505.6,149.0 505.0,149.2 504.4,148.9 503.8,148.9 503.4,149.3M472.0,124.6 472.6,124.8 473.2,124.5 473.8,124.1 473.7,123.4 474.2,123.1 474.8,123.1 475.1,122.6 475.6,122.4M475.6,122.4 476.2,123.0 476.5,123.9 477.2,124.4 478.1,124.2 479.0,124.0 479.6,124.6 480.4,124.8 481.2,125.0M469.3,139.2 470.0,139.8 470.2,140.7 470.9,139.9 471.9,140.3M469.3,139.2 468.7,138.8 467.9,139.0 467.6,138.3 466.9,138.0M466.9,138.0 466.5,137.3 465.8,137.0 465.7,136.2 466.1,135.5M468.1,126.0 467.9,126.6 467.9,127.1 467.5,127.9 466.8,127.4 466.4,127.6 466.1,128.0 465.8,128.3 465.4,128.6M468.1,126.0 468.0,125.3 468.7,125.1 469.3,124.6 469.9,125.1 470.5,125.4 471.0,125.1 471.5,124.9 472.0,124.6M491.8,112.6 492.1,113.0 492.5,113.3 493.1,113.5 493.2,114.1 493.5,114.6 494.0,114.8 494.4,115.1 494.4,115.1M378.3,176.6 377.9,176.2 377.6,175.8 377.1,175.5 376.8,175.1 376.4,174.8M390.1,135.4 390.2,134.8 390.8,134.6M401.6,174.3 400.6,175.0 400.3,176.3 401.3,177.0 402.3,177.5M401.6,174.3 402.3,174.0 402.7,173.3 402.8,172.5 403.6,172.2 403.9,173.1 404.8,173.1 405.6,172.9 406.3,173.3M407.4,179.5 406.5,178.9 406.0,178.0 405.0,178.4 404.7,179.4M407.4,179.5 407.9,178.9 408.5,178.4 408.2,177.5 408.7,176.8 408.6,176.0 408.7,175.3 408.1,174.6 408.5,173.8M408.5,173.8 408.0,173.5 407.4,173.4 406.9,173.2 406.3,173.3M404.7,179.4 404.5,178.5 404.1,177.7 403.2,177.8 402.3,177.5M399.1,171.9 399.4,172.8 399.6,173.9 400.4,175.0 401.6,174.3M399.1,171.9 398.8,172.5 398.9,173.2 398.3,173.5 397.6,173.4 397.1,173.8 396.5,174.0 396.5,174.6 396.4,175.2M394.9,179.0 394.4,178.6 394.3,177.9 394.6,177.3 394.9,176.8 395.0,176.2 395.3,175.7 395.8,175.2 396.4,175.2M408.5,173.8 409.1,173.8 409.7,173.9 410.2,173.6 410.8,173.5 411.4,174.2 412.0,173.6 412.6,173.6 413.1,173.9M413.1,173.9 413.8,173.8 414.3,173.3 414.4,172.6 414.7,172.0M414.7,172.0 414.9,171.5 414.8,171.0 414.6,170.4 415.1,170.0 415.0,169.4 415.0,168.8 414.5,168.7 414.0,168.3M414.0,168.3 414.2,167.8 414.5,167.3 414.3,166.8 414.4,166.3 413.6,166.2 413.7,165.5 413.7,164.9 413.7,164.4M413.7,164.4 413.7,163.9 413.7,163.4 414.0,163.1 414.3,162.7 414.5,162.2 414.7,161.9 414.6,161.4 414.7,160.9M418.6,152.3 419.0,152.0 419.6,152.1 420.0,152.3 420.5,152.5 421.0,152.0 421.7,152.1 421.7,152.8 422.4,153.1M418.6,152.3 417.8,152.0 417.0,152.4 416.1,152.3 415.8,153.2M415.8,153.2 415.7,153.9 415.5,154.5 415.1,155.0 414.7,155.5 414.5,156.3 415.2,156.6 415.6,157.2 415.6,157.8M415.8,153.2 415.2,152.8 414.6,153.0 414.0,153.3 413.4,153.0 412.8,152.8 412.2,152.6 411.6,152.5 411.0,152.6M414.7,160.9 414.5,160.1 414.6,159.2 414.8,158.3 415.6,157.8M537.3,193.5 537.6,192.8 537.1,192.1 536.6,191.6 536.1,191.1M538.8,198.0 538.4,197.3 537.5,197.4 537.2,196.8 536.8,196.2 536.9,195.5 536.6,194.8 537.0,194.2 537.3,193.5M533.5,190.7 534.4,191.1 534.6,192.1 535.2,191.4 536.1,191.1M531.1,182.0 530.4,182.8 530.3,183.7 531.1,184.4 531.0,185.5M546.7,177.6 546.0,177.7 545.3,177.7 544.8,177.3 544.3,176.8 543.8,176.2 543.1,176.0 542.5,176.5 541.7,176.5M538.4,177.1 539.5,176.6 539.8,175.5 541.0,175.6 541.7,176.5M550.8,163.5 550.5,162.8 551.1,162.2 550.7,161.7 550.3,161.2 551.0,161.1 551.6,161.0 552.2,160.5 552.1,159.8M553.2,156.2 552.9,156.6 552.9,157.1 552.5,157.5 552.7,158.0 552.7,158.5 552.5,158.9 552.6,159.5 552.1,159.8M555.5,146.6 555.4,147.1 555.2,147.6 554.8,147.9 554.4,148.2 554.3,148.8 554.0,149.2 554.2,149.7 553.9,150.2M555.5,146.6 556.1,145.9 556.9,146.0M553.2,156.2 552.9,155.2 551.9,154.7 552.5,154.0 553.0,153.1 553.5,152.5 553.4,151.7 553.8,151.0 553.9,150.2M526.6,160.0 525.8,160.3 525.1,160.7 524.7,161.4 524.5,162.2 524.5,163.0 524.7,163.8 525.2,164.4 525.3,165.2M530.7,155.5 531.2,155.0 531.8,154.8 532.2,155.3 532.8,155.6 533.3,155.9 533.7,156.3 534.3,156.3 534.8,156.2M549.5,170.5 549.3,169.8 549.2,169.0 549.5,168.7M549.5,168.7 549.8,168.4 550.6,168.5 549.7,168.9 549.5,168.7M549.5,168.7 548.9,168.1 549.7,167.4 549.4,166.5M551.5,174.5 551.2,173.9 551.0,173.4 550.7,172.8 550.0,172.8 549.1,172.6 548.7,171.8 549.2,171.2 549.5,170.5M550.8,163.5 550.6,164.4 549.7,164.7 550.0,165.7 549.4,166.5M525.7,143.5 525.9,143.0 525.7,142.4 525.8,141.8 525.9,141.3 526.4,140.7 526.0,140.0 525.5,139.6 525.0,139.2M525.0,139.2 524.4,138.8 523.6,139.0 523.0,139.2 522.4,139.3 521.6,139.3 520.9,139.4 520.4,138.8 520.0,138.2M520.0,138.2 519.3,138.1 518.6,138.3 518.3,139.0 517.9,139.6 517.2,139.6 516.7,139.2 516.0,139.2 515.4,139.4M529.0,150.1 529.1,149.2 529.0,148.2 527.7,148.2 527.5,147.0M527.5,147.0 527.4,146.5 527.4,146.0 527.6,145.4 527.2,145.0 527.0,144.4 526.4,144.3 526.0,143.9 525.7,143.5M527.5,135.8 527.4,136.5 526.8,136.7 526.1,136.6 525.8,137.2 525.8,137.7 525.5,138.2 525.4,138.8 525.0,139.2M506.3,147.0 506.7,146.0 507.4,145.3 507.3,144.3 506.6,143.6M512.7,138.4 513.6,137.9 514.5,137.6 514.5,138.8 515.4,139.4M475.6,184.1 475.2,184.7 475.6,185.3 475.3,185.8 474.8,186.1 474.2,186.2 473.7,186.2 473.4,186.9 472.7,186.8M475.6,184.1 475.2,183.7 475.0,183.1 475.0,182.6 474.9,182.0 475.1,181.4 475.7,181.3 475.8,180.6 476.4,180.4M470.4,182.2 470.7,182.9 470.8,183.6 471.1,184.2 471.3,184.9M472.7,186.8 473.1,185.9 473.2,184.9 472.3,184.7 471.3,184.9M471.9,190.5 471.8,190.0 471.6,189.5 471.6,189.0 471.7,188.5 471.9,188.1 472.4,187.8 472.8,187.4 472.7,186.8M482.1,178.2 481.6,178.3 481.1,178.4 480.6,178.3 480.1,178.1 479.6,178.3 479.2,178.7 478.6,178.7 478.2,178.3M478.2,178.3 477.5,178.6 476.9,179.1 476.7,179.7 476.4,180.4M466.2,194.4 465.5,194.1 464.7,193.7 464.4,194.5 464.4,195.4 463.9,195.5 463.4,195.4 463.0,194.9 462.4,195.2M462.4,195.2 461.7,195.1 461.0,194.8 460.4,195.4 459.6,195.1M458.0,194.1 458.6,193.9 459.0,194.3 459.6,194.5 459.6,195.1M468.3,194.1 467.8,194.1 467.3,194.3 466.7,194.1 466.2,194.4M469.8,179.8 469.9,180.4 469.8,181.1 470.1,181.7 470.4,182.2M452.7,190.0 452.5,191.1 453.4,191.8 454.4,192.1 455.3,192.4M455.3,192.4 456.3,191.9 457.0,192.7 457.8,193.3 458.0,194.1M456.6,199.9 456.3,198.8 456.7,197.9 457.7,197.9 458.8,197.9 458.8,197.2 458.9,196.5 459.4,195.9 459.6,195.1M471.9,140.3 472.0,140.8 472.2,141.3 472.8,141.3 473.2,141.7 473.4,142.2 473.8,142.4 474.4,142.5 474.6,143.0M476.0,146.7 475.3,146.7 474.9,146.1 474.3,145.9 473.8,145.4 474.1,144.6 474.9,144.4 474.7,143.7 474.6,143.0M483.2,161.8 482.4,161.8 481.7,162.0 481.1,161.4 480.7,160.8M476.0,146.7 476.5,147.1 476.8,147.7 476.3,148.3 476.6,149.0M483.0,145.4 482.4,144.9 481.7,145.2 481.3,145.7 480.8,146.2 480.7,146.9 480.0,147.0 479.5,147.3 479.0,147.6M476.6,149.0 476.9,148.2 477.5,147.8 478.3,148.1 479.0,147.6M594.2,142.4 595.1,142.7 595.9,143.3 595.9,144.3 595.7,145.2 596.7,145.5 597.2,146.4 597.6,147.5 596.8,148.3M594.2,142.4 595.2,142.8 596.0,142.1 596.4,141.2 597.4,140.8 597.8,140.0 597.6,139.0 597.9,138.2 598.2,137.3M587.4,143.4 588.0,142.4 588.8,141.5 590.2,141.4 590.9,142.6M590.9,142.6 591.8,143.1 592.6,143.6 593.2,142.8 594.2,142.4M597.8,153.3 597.1,152.8 597.1,152.0 596.8,151.0 597.8,150.7 598.0,150.0 598.0,149.2 597.1,149.0 596.8,148.3M598.0,131.9 597.9,132.1 597.9,132.6 598.3,133.0 598.0,133.6 597.6,133.9 597.5,134.4 597.5,135.0 597.6,135.5 597.4,136.0 597.9,136.4 598.0,136.9 598.2,137.3M582.7,115.9 582.1,115.5 581.4,115.2 581.6,114.5 581.4,113.8 580.8,113.5 580.4,113.0 580.4,112.3 580.2,112.0M554.7,98.1 554.3,98.6 553.7,99.0 554.2,99.6 553.9,100.3 553.4,100.9 552.6,100.8 552.4,101.5 552.5,102.2M554.7,98.1 554.7,97.6 554.8,97.0 554.6,96.4 555.0,95.9 554.7,95.3 554.5,95.1M581.8,100.3 581.5,100.2M571.1,92.1 570.3,91.5 569.4,91.9 569.0,91.1 568.2,90.6 567.8,89.8 567.5,89.7M559.1,96.0 559.9,95.7 560.3,95.1 560.9,94.7M575.6,94.0 575.2,93.5 574.7,93.0 574.1,93.0 573.4,92.9 572.8,93.2 572.1,92.9 571.7,92.4 571.1,92.1M575.6,94.0 575.6,94.6 576.1,94.9 576.6,95.2 576.9,95.6 577.3,96.0 577.5,96.6 578.1,96.2 578.6,96.7M578.6,96.7 579.6,97.1 579.2,98.1 580.0,97.8 580.7,97.9 581.1,98.5 581.7,98.8 581.6,99.5 581.5,100.2M554.7,98.1 554.9,97.3 555.1,96.5 555.9,97.2 556.8,96.9 557.5,96.9 558.0,96.6 558.5,96.3 559.1,96.0M530.8,289.3 531.3,288.4 532.0,287.8 532.0,286.8 531.3,286.0M530.8,289.3 531.0,289.8 531.1,290.3 531.3,290.8 531.4,291.3M532.3,284.4 532.8,284.6 533.3,284.6 533.8,284.7 533.9,285.3 534.4,285.5 534.9,285.3 535.2,285.8 535.6,286.1M536.8,286.8 536.1,286.6 535.6,286.1M566.6,253.9 567.1,254.3 567.4,254.8 568.0,254.9 568.6,255.0M572.8,253.0 572.3,253.6 572.2,254.3 571.9,254.9 571.3,255.3 570.6,255.7 569.9,255.4 569.1,255.5 568.6,255.0M564.9,250.6 564.9,251.2 564.6,251.7 565.1,252.0 565.5,252.4 565.6,252.9 566.0,253.2 566.5,253.5 566.6,253.9M575.4,257.1 575.0,257.6 574.7,258.2 574.4,258.9 574.8,259.5M574.8,259.5 574.2,259.5 573.7,259.8 573.8,260.4 573.6,260.9 573.4,261.5 572.9,261.6 572.5,261.8 572.0,262.0M572.0,262.0 572.7,262.8 572.2,263.7 572.0,264.6 571.7,265.4M548.7,278.4 549.4,278.8 549.8,279.5 549.8,280.3 549.4,281.1M549.4,281.1 549.5,282.2 550.5,282.7 550.0,283.6 549.7,284.5M547.2,275.0 547.2,275.7 546.5,275.8 546.0,275.5 545.4,275.7 545.0,275.4 544.5,275.3 544.0,275.2 543.5,275.4M541.8,275.8 542.6,275.3 543.5,275.4M540.5,275.5 541.2,275.2 541.8,275.8M537.4,287.3 536.8,286.8M528.1,289.1 527.8,288.2 526.9,288.1 526.5,288.9 525.6,288.7M521.6,291.8 521.9,291.1 522.6,290.8 523.2,290.3 523.2,289.6M523.2,289.6 523.9,289.7 524.4,289.2 524.9,288.8 525.6,288.7M528.1,289.1 528.8,289.0 529.4,289.5 530.2,289.8 530.8,289.3M548.4,248.2 549.1,248.3 549.9,248.2 550.6,248.3 551.2,248.8M548.4,248.2 547.7,247.9 547.3,247.3 546.9,246.8 546.6,246.1M546.6,246.1 546.1,245.5 545.5,244.9 545.9,244.1 545.8,243.3M546.5,234.2 546.7,233.7 547.0,233.1 547.5,232.8 548.1,232.8M553.3,250.1 553.8,250.8 553.8,251.7 554.9,252.1 554.6,253.2M562.0,249.2 562.4,247.8 563.9,247.9 563.5,246.7 562.8,245.7 562.0,245.3 561.1,245.6 560.1,244.6 559.3,245.7M562.0,249.2 561.5,249.7 560.9,249.9 560.4,250.4 560.1,251.0 559.5,251.6 559.7,252.4 559.1,252.8 558.4,252.9M558.4,252.9 558.0,253.4 557.5,253.6 557.0,253.4 556.5,253.2 556.0,253.4 555.5,253.2 555.1,253.1 554.6,253.2M559.2,243.2 559.4,243.8 559.4,244.5 559.8,245.1 559.3,245.7M551.2,248.8 551.7,249.2 552.2,249.6 552.7,250.1 553.3,250.1M564.9,250.6 564.1,250.1 563.7,249.3 562.8,249.2 562.0,249.2M552.6,270.0 552.2,269.2 551.6,268.7 551.7,267.8 552.2,267.2 551.5,266.6 551.7,265.8 551.6,265.1 551.8,264.4M551.8,261.8 551.3,262.3 551.5,263.1 551.6,263.7 551.8,264.4M554.6,253.2 553.8,253.5 552.9,253.2 552.5,254.0 552.4,254.8 552.1,255.5 551.7,256.1 552.2,256.8 551.9,257.5M551.8,261.8 551.9,261.2 551.8,260.7 551.4,260.2 551.7,259.6 552.0,259.2 552.0,258.6 551.8,258.1 551.9,257.5M538.5,274.8 538.9,275.1 539.5,275.3 540.0,275.4 540.5,275.5M517.0,257.1 516.5,257.6 516.5,258.4 516.7,259.1 517.1,259.7M523.1,264.4 522.3,264.2 522.2,265.0 521.6,264.8 521.1,264.8M517.7,267.4 518.0,267.0 518.3,266.7 518.4,266.1 518.6,265.7M521.1,264.8 520.5,265.2 520.0,265.5 519.3,265.6 518.6,265.7M531.0,275.2 531.6,274.8 532.0,274.2 532.5,273.8 532.8,273.1M531.0,275.2 530.7,275.9 530.7,276.6 531.0,277.3 531.2,278.0 531.7,278.6 532.1,279.1 532.6,279.6 533.1,280.2M536.5,275.9 535.6,276.2 535.3,277.1 534.9,277.8 534.8,278.6M534.8,278.6 534.9,279.4 534.1,279.6 533.6,279.9 533.1,280.2M529.1,269.9 529.7,270.1 530.4,270.2 530.9,269.7 531.6,269.5M533.2,270.6 533.0,271.2 532.9,271.9 532.9,272.5 532.8,273.1M529.0,276.1 529.7,276.4 530.1,275.8 530.6,275.5 531.0,275.2M532.7,281.4 532.8,280.8 533.1,280.2M538.5,274.8 537.9,274.8 537.3,275.1 536.9,275.5 536.5,275.9M505.8,254.2 505.5,253.2 506.3,252.5M510.1,246.9 509.8,247.3 509.2,247.4 508.8,246.9 508.2,247.3M511.1,233.6 512.0,233.8 512.2,234.7M511.1,233.6 510.9,232.9 510.5,232.2 509.8,231.8 509.1,232.2 508.2,232.3 508.0,231.5 507.6,231.0 507.5,230.3M514.5,229.0 514.4,229.7 513.9,230.3 513.5,231.0 513.5,231.8 512.7,232.1 512.3,232.8 511.8,233.3 511.1,233.6M513.4,237.5 512.8,237.0 512.3,236.3 512.2,235.5 512.2,234.7M504.3,226.9 504.7,227.4 505.1,227.8 505.5,228.2 506.0,228.6 506.8,229.0 506.3,229.8 507.0,230.0 507.5,230.3M593.6,251.6 593.6,252.2 594.0,252.7 593.8,253.3 594.3,253.8 594.7,254.1 595.1,254.5 595.8,254.7 595.9,255.4M585.6,255.7 585.7,256.8 585.3,257.9 586.3,258.6 587.5,258.1M590.9,260.7 590.2,260.6 590.2,259.9 589.7,259.6 589.3,259.3 589.0,258.7 588.6,258.4 588.0,258.3 587.5,258.1M584.1,177.8 583.6,178.5 583.6,179.4 584.3,180.0 584.8,180.6M584.8,180.6 585.2,181.3 585.9,181.8 586.4,182.5 587.3,182.5 586.6,183.0 586.3,183.9 586.0,184.7 586.3,185.5M594.0,201.6 593.2,201.0 592.5,200.5 591.1,200.5 591.2,199.1 590.1,199.1 589.1,198.9 588.4,199.8 587.7,200.5M587.7,200.5 588.1,199.8 588.6,199.1 588.4,198.3 587.9,197.7 587.9,196.9 587.8,196.2 587.4,195.6 587.0,194.9M598.5,204.5 597.7,204.1 597.0,204.6 596.3,204.3 595.6,204.0 595.2,203.4 595.0,202.7 594.4,202.2 594.0,201.6M586.3,185.5 586.3,186.2 586.7,186.7 586.7,187.4 586.9,188.0 586.1,188.4 586.2,189.2 586.2,190.0 586.5,190.6M586.5,190.6 586.6,191.2 586.5,191.7 586.8,192.2 586.6,192.8 586.9,193.4 586.6,193.9 586.7,194.5 587.0,194.9M584.9,201.1 585.5,200.8 586.3,200.8 587.1,200.9 587.7,200.5M338.9,272.3 339.4,272.3M339.6,236.1 339.7,236.8 339.4,237.6 339.4,238.2M347.2,237.4 347.6,238.0 348.1,238.4 349.0,238.2 349.3,238.9M438.0,326.3 438.0,326.9 437.6,327.3 438.1,327.7 438.3,328.3 438.0,329.1 438.8,329.3 438.0,329.5 438.4,330.3M438.0,326.3 437.4,325.6 437.2,324.7 436.3,324.4 435.4,324.3M433.4,328.6 433.6,328.0 434.1,327.6 434.6,327.2 434.7,326.6 434.9,326.0 434.8,325.4 435.2,324.9 435.4,324.3M439.3,331.7 439.1,330.8 438.4,330.3M439.3,331.7 439.2,331.1 439.2,330.4 439.7,329.9 440.3,329.7 441.1,329.9 441.8,329.9 442.4,329.2 442.2,328.3M438.0,326.3 438.5,325.4 439.4,324.8 440.6,324.6 441.2,325.7M441.2,325.7 442.2,325.4 442.8,326.3M442.2,328.3 442.1,327.8 442.4,327.3 442.5,326.8 442.8,326.3M439.3,331.7 439.7,332.2 440.3,332.4 440.9,332.4 441.3,332.9 442.0,333.2 442.7,333.4 443.0,334.0 442.9,334.7M442.9,334.7 443.2,334.2 443.8,334.1 444.2,333.7 444.5,333.3 444.9,332.8 445.5,332.8 445.8,332.3 446.0,331.7M486.0,254.7 486.7,254.5 487.5,254.6 488.2,255.0 488.3,255.9M488.3,255.9 488.6,256.5 489.3,256.5 489.8,256.2 490.3,255.8 490.5,256.3 490.8,256.8 491.2,257.2 491.8,257.1M493.0,254.4 492.9,255.2 493.0,256.0 492.8,257.0 491.8,257.1M494.3,238.3 494.8,239.0 495.6,239.2 496.0,239.9 496.3,240.7M491.3,242.1 491.9,242.4 492.6,242.3 492.9,242.9 493.4,243.3M496.3,240.7 496.7,241.1 497.1,241.4 497.2,241.9 497.4,242.3 497.0,242.8 497.3,243.3 497.1,243.8 497.3,244.3M493.4,243.3 493.6,244.0 493.8,244.6 494.4,244.2 495.1,244.3M495.1,244.3 495.6,243.9 496.2,244.1 496.8,244.2 497.3,244.3M498.3,233.2 497.8,233.6 497.2,233.7 496.5,233.7 496.0,234.2 495.3,234.5 494.6,234.8 494.1,235.5 494.5,236.3M494.5,236.3 494.8,236.8 494.7,237.3 494.5,237.8 494.3,238.3M498.7,245.2 497.5,245.5 497.3,244.3M486.0,254.7 485.2,254.5 485.1,253.7 484.5,253.4 483.8,253.3M483.8,253.3 483.6,252.7 482.9,252.5 482.4,252.2 482.4,251.5M482.4,251.5 482.8,250.8 483.2,250.2 483.7,249.6 484.1,249.0M496.9,250.9 496.3,251.3 495.8,251.7 495.2,252.0 494.8,252.5M494.8,252.5 494.1,252.6 493.7,253.2 494.0,254.2 493.0,254.4M473.3,235.6 472.6,235.4 471.9,235.4 471.2,235.3 470.7,235.7M470.7,235.7 469.6,235.1 470.0,234.0 469.1,233.8 468.4,233.0M484.1,249.0 484.3,248.3 484.6,247.6 485.0,247.0 485.2,246.3M486.5,244.0 486.8,244.8 486.6,245.6 485.9,246.1 485.2,246.3M491.3,242.1 490.6,242.5 489.9,242.1 489.6,241.5 489.4,240.8 488.9,241.2 488.3,241.0 487.6,241.0 487.4,241.7M486.5,244.0 486.7,243.4 487.1,242.9 487.3,242.3 487.4,241.7M482.4,251.5 481.7,251.9 481.0,251.4 480.3,251.1 479.6,251.2M487.8,227.0 486.9,227.7 487.0,228.8 486.0,228.7 485.0,228.7M485.0,228.7 484.3,229.2 483.8,229.9 482.9,229.9 482.1,229.8M482.1,229.8 481.9,230.4 481.4,231.0 480.8,231.3 480.2,231.6M475.6,235.6 476.2,235.2 476.8,234.8 477.6,234.9 478.2,235.3M475.6,235.6 475.0,235.6 474.4,235.5 473.8,235.1 473.3,235.6M478.2,235.3 478.9,235.1 479.6,234.8M480.2,231.6 479.8,232.5 480.4,233.3 480.1,234.1 479.6,234.8M473.2,247.1 473.2,246.5 472.9,246.0 472.4,245.7 472.5,245.1M410.2,252.4 410.6,253.0 410.4,253.7 410.7,254.4 411.4,254.7M411.4,254.7 412.0,255.3 412.9,255.5 412.8,256.3 413.4,257.0M416.9,241.0 416.5,241.5 416.0,241.9 415.4,242.2 414.9,242.7M414.9,242.7 414.6,243.4 414.7,244.1 414.0,244.5 413.4,244.9M411.8,245.5 412.6,245.4 413.4,244.9M409.3,251.2 409.8,251.7 410.2,252.4M442.3,276.4 441.5,276.6 440.9,277.2 440.5,276.2 439.5,276.4M442.3,276.4 443.1,276.0 443.9,275.6 444.9,275.3 445.7,275.9M449.1,231.5 448.3,231.6 447.6,231.2 447.2,231.9 446.8,232.6M446.6,227.2 446.2,227.8 446.0,228.5 445.3,228.9 444.6,228.7M441.5,226.1 441.7,225.3 441.8,224.5 441.6,223.6 441.4,222.8M441.5,226.1 442.1,226.8 441.9,227.6 442.4,228.1 442.9,228.6M442.9,228.6 443.7,228.8 444.6,228.7M454.9,232.3 454.9,233.2 455.7,233.7 455.9,234.6 456.6,235.2M456.6,235.2 456.3,235.7 455.8,236.1 455.4,236.6 455.4,237.2M452.6,238.9 453.6,239.5 454.6,238.9 454.9,238.0 455.4,237.2M452.2,241.0 452.1,240.4 451.7,239.8 452.0,239.2 452.6,238.9M444.8,240.1 445.5,239.7 446.2,239.3 446.1,238.4 446.2,237.6M446.8,232.6 446.8,233.1 446.8,233.7 446.4,234.2 446.2,234.7M446.2,237.6 445.4,237.1 445.7,236.1 446.0,235.4 446.2,234.7M419.4,233.9 419.6,234.6 420.0,235.2 419.8,235.8 419.7,236.5M419.7,236.5 419.3,237.1 418.9,237.7 418.7,238.3 418.8,239.0M416.9,241.0 417.7,240.7 418.1,240.0M418.1,240.0 418.6,239.7 418.8,239.0M418.6,255.5 418.9,255.2 419.4,255.0 419.5,254.5 419.7,254.1M444.8,240.1 444.1,240.0 443.8,239.5 443.1,239.7 442.9,240.3M440.8,238.7 441.1,239.4 441.7,239.8 442.3,240.1 442.9,240.3M380.7,279.9 380.4,280.8 380.3,281.7M526.8,239.2 527.4,239.7 528.1,240.0 529.1,240.1 529.1,241.1M506.3,248.4 505.8,249.0 505.1,249.0 504.8,249.7 504.6,250.3M504.6,250.3 503.8,250.6 503.1,251.0 502.5,250.3 501.7,250.3M499.7,247.0 499.2,247.6 499.4,248.3 499.6,248.9 500.0,249.5M500.0,249.5 500.3,249.9 500.7,250.1 501.2,250.0 501.7,250.3M508.2,247.3 507.6,247.4 507.0,247.4 506.9,248.0 506.3,248.4M506.3,252.5 506.1,251.6 505.2,251.5 505.0,250.9 504.6,250.3M503.7,255.9 503.7,255.0 504.6,254.9 505.2,254.5 505.8,254.2M498.7,245.2 498.7,245.8 498.7,246.4 499.2,246.7 499.7,247.0M496.9,250.9 497.6,250.1 497.8,248.9 498.9,249.2 500.0,249.5M525.3,165.2 525.2,165.8 525.4,166.4 524.9,166.8 524.8,167.5 524.1,167.1 523.3,167.2 523.1,167.9 522.6,168.4M527.7,177.6 527.2,176.8 526.4,176.3 525.3,176.1 524.6,177.0M515.4,167.5 515.9,168.3 516.7,168.9 517.7,168.2 518.6,168.9M522.6,168.4 522.3,167.7 521.9,167.0 521.1,166.8 520.4,166.5 519.5,166.6 519.0,167.3 518.8,168.1 518.6,168.9M494.1,166.5 493.5,166.1 492.8,166.4 492.2,166.2 491.6,166.7 491.1,167.3 491.5,168.0 491.1,168.5 490.7,169.0M484.6,164.5 485.1,165.1 485.8,165.4 485.7,166.2 485.8,167.0M485.8,167.0 486.1,167.3 486.6,167.6 486.8,168.0 486.7,168.6 487.1,168.9 487.2,169.4 487.6,169.8 487.2,170.3M486.1,173.3 486.5,172.4 486.0,171.5 486.9,171.2 487.2,170.3M483.2,161.8 483.8,162.3 484.1,163.0 483.7,163.9 484.6,164.5M480.7,160.8 480.0,161.7 479.2,162.5 478.3,161.7 477.3,161.1M482.1,178.2 482.4,177.5 482.8,177.0 483.6,176.5 484.2,177.1 484.9,177.1 485.3,176.5 485.8,176.1 486.5,176.4M486.5,176.4 486.1,175.6 486.4,174.8 485.6,174.2 486.1,173.3M490.7,169.0 490.3,168.3 489.9,167.5 489.0,168.0 488.2,167.5 488.5,168.3 488.5,169.2 488.0,169.9 487.2,170.3M489.7,178.6 489.5,178.1 488.9,178.0 488.3,178.1 487.9,177.8 487.8,177.2 487.3,177.0 487.1,176.5 486.5,176.4M488.5,188.8 488.4,188.2 488.6,187.7 488.9,187.2 489.5,187.0 488.9,186.7 488.7,186.2 488.4,185.7 488.7,185.1M489.3,194.2 488.9,193.6 488.8,192.8 488.9,192.1 488.7,191.4M488.5,188.8 488.6,189.4 488.7,190.1 488.8,190.7 488.7,191.4M489.7,178.6 489.7,179.5 490.3,180.1 490.5,180.9 490.6,181.6M488.7,185.1 488.9,184.7 489.3,184.3 489.7,183.9 489.7,183.4 489.8,182.9 489.9,182.4 490.1,181.9 490.6,181.6M503.4,187.6 503.2,186.9 502.7,186.4 502.6,185.7 502.2,185.2 501.5,185.3 500.9,184.9 500.2,185.3 499.5,185.3M499.5,185.3 498.9,185.5 498.4,185.9 497.7,186.1 497.1,185.7 496.7,185.2 496.2,184.8 495.9,184.3 495.4,183.9M508.5,189.1 507.7,189.4 507.1,190.1 506.4,189.5 505.7,189.2 505.0,189.0 504.4,188.5 504.2,187.8 503.4,187.6M508.5,189.1 508.5,190.0 508.3,190.8 508.2,191.6 508.5,192.4M490.6,181.6 491.2,182.0 491.8,182.3 492.7,182.2 492.8,183.1 493.7,183.4 494.4,182.6 495.0,183.2 495.4,183.9M466.1,214.2 466.9,214.3 467.6,214.0 468.3,213.6 469.0,213.5M473.3,209.4 473.3,210.2 473.0,211.0 473.2,211.9 472.8,212.7M469.0,213.5 469.6,213.8 470.2,213.8 470.4,213.3 470.9,212.8 471.2,213.4 471.9,213.3 472.3,212.9 472.8,212.7M482.5,218.7 481.8,217.9 482.5,217.1 481.6,217.1 480.9,217.3M480.9,217.3 480.6,216.4 480.2,215.7 479.3,215.9 478.5,216.1M472.8,212.7 474.1,212.4 474.1,213.8 474.8,214.3 475.3,215.0M478.5,216.1 477.6,216.1 476.9,215.6 476.1,215.2 475.3,215.0M483.2,236.4 483.7,237.1 483.9,237.8 484.5,238.2 485.3,238.5M486.3,240.0 486.0,239.6 485.6,239.3 485.3,239.0 485.3,238.5M487.4,241.7 486.7,241.7 486.5,241.1 486.2,240.6 486.3,240.0M479.6,234.8 480.1,235.1 480.5,235.3 481.0,235.3 481.6,235.3 481.7,235.9 482.1,236.2 482.7,236.4 483.2,236.4M409.0,245.4 408.6,245.9 408.1,246.2 408.1,246.8 407.8,247.3 407.2,247.3 406.7,247.6 406.2,247.4 405.6,247.5M405.2,241.0 404.9,241.5 404.6,242.1 404.3,242.8 403.7,243.1M403.7,243.1 403.2,243.5 402.9,244.1 402.8,244.7 402.5,245.3M405.6,247.5 405.0,247.0 404.4,247.4 404.0,247.0 403.6,246.5M403.6,246.5 403.1,245.9 402.5,245.3M404.9,238.8 405.3,239.2 405.3,239.8 405.4,240.4 405.2,241.0M411.8,245.5 411.1,245.6 410.4,245.8 409.9,244.9 409.0,245.4M407.4,250.1 408.1,250.1 408.3,250.8 408.9,250.7 409.3,251.2M407.4,250.1 407.5,249.1 407.6,248.1 406.6,247.7 405.6,247.5M343.0,233.6 343.4,233.7 344.1,233.9M347.2,237.4 346.5,236.7 346.9,235.8M344.1,233.9 344.9,234.1 345.7,234.5 346.6,234.8 346.9,235.8M504.2,437.0 505.0,437.0 505.8,437.2 506.6,437.3 507.3,436.9M507.3,436.9 508.1,436.8 508.9,436.9 509.6,436.5 509.9,435.8M511.3,434.0 511.0,433.7 510.7,433.2 510.2,433.0 510.0,432.5 509.8,432.1 509.9,431.5 509.9,431.0 510.1,430.6M511.3,434.0 511.1,434.6 510.7,434.9 510.3,435.4 509.9,435.8M499.7,437.1 500.3,437.4 501.0,437.3 501.5,437.7 502.0,438.1 502.6,437.8 503.2,437.8 503.7,437.3 504.2,437.0M525.3,445.7 524.6,445.2 523.9,444.8M471.9,438.2 471.5,439.2 470.5,439.1M468.5,445.8 468.2,444.9 467.8,444.1 468.4,443.3 468.2,442.3M468.2,442.3 468.6,441.9 468.6,441.3 468.6,440.8 468.8,440.4 468.9,439.7 469.6,439.7 470.0,439.4 470.5,439.1M467.9,433.0 468.3,432.7 468.8,432.7 469.1,432.3 469.5,432.0 470.0,431.9 470.4,431.7 470.9,431.8 471.4,431.5M467.9,433.0 467.9,433.7 468.2,434.4 468.5,435.1 468.3,435.8M468.3,435.8 468.5,436.3 469.0,436.6 469.7,436.5 469.8,437.2 469.6,437.8 470.0,438.2 470.4,438.6 470.5,439.1M474.7,456.9 474.6,456.8 473.9,456.6M473.8,456.6 474.5,456.2 474.8,455.5 475.5,455.3 475.3,454.6 475.2,454.0 475.8,453.7M479.7,455.3 478.9,455.4 478.2,455.1 477.3,455.1 476.9,454.3M476.9,454.3 476.4,454.0 475.8,453.7M481.8,455.3 481.6,455.3 481.0,455.2 480.3,455.2 479.7,455.3M472.2,452.2 472.8,452.1 473.3,451.9 473.8,452.0 474.3,452.3 474.8,452.6 474.9,453.1 475.1,453.8 475.8,453.7M471.4,450.5 472.1,451.2 472.2,452.2M412.1,381.9 412.0,381.3 412.1,380.6 411.6,380.1 410.9,379.9M410.9,379.9 410.0,380.2 409.4,380.0M603.2,257.0 603.8,257.0 604.4,257.4 605.1,257.8 604.8,258.6 605.3,258.2 605.7,257.7 606.3,257.9 606.9,257.7M610.2,259.0 609.3,258.4 608.3,258.9 607.9,258.0 606.9,257.7M617.8,253.6 617.4,254.1 617.0,254.6 616.6,255.2 616.1,255.6 616.3,256.3 616.6,256.9 616.5,257.6 617.0,258.2M617.0,258.2 616.8,258.8 616.8,259.5 617.0,260.1 616.7,260.7 615.9,260.8 615.5,261.4 614.9,261.6 614.3,261.7M614.3,261.7 613.7,261.3 613.1,261.2 612.7,260.7 612.1,260.5 611.4,260.3 610.7,260.4 610.4,259.7 610.2,259.0M619.5,249.5 620.4,249.4 620.8,249.2M619.5,249.5 619.3,250.2 618.7,250.4 618.6,251.0 617.9,251.2 617.9,251.9 618.2,252.4 617.9,252.9 617.8,253.6M595.9,255.4 596.5,255.4 596.9,254.8 597.4,255.1 598.0,255.2 598.4,255.5 598.7,256.0 598.9,256.6 599.3,256.9M599.3,256.9 599.8,257.2 600.2,257.5 600.7,257.3 601.2,257.4 601.7,257.3 602.2,257.2 602.7,257.0 603.2,257.0M535.3,443.0 534.6,443.3 534.3,443.4M525.3,445.7 525.4,445.8M545.3,436.4 545.7,437.5 545.0,438.5 543.9,438.3 542.9,438.6M542.9,438.6 542.1,438.5 541.2,438.3 541.1,439.3 540.2,439.7M536.8,440.2 537.7,440.5 538.5,440.0 539.4,439.9 540.2,439.7M536.8,440.2 536.2,440.7 536.0,441.5 535.4,442.1 535.3,443.0M547.3,433.3 546.9,433.7 546.5,434.0 545.9,433.9 545.4,434.3 545.2,434.8 544.7,435.3 544.7,436.0 545.3,436.4M559.3,432.2 558.4,432.5 557.9,433.2 557.1,433.4 556.4,433.8M556.4,433.8 556.5,434.5 556.2,435.1 556.5,435.7 556.2,436.4M556.2,436.4 556.7,436.5 557.2,436.6 557.5,437.0 557.8,437.4 558.3,437.5 558.5,438.0 558.9,438.3 559.3,438.5M561.9,430.0 562.0,430.1M561.9,430.0 561.5,430.9 560.5,431.0 559.6,431.4 559.3,432.2M561.3,440.4 561.0,439.7 560.7,439.0 560.1,438.6 559.3,438.5M561.9,430.0 561.3,429.4 561.3,428.8M554.9,428.5 555.2,429.4 556.1,429.6 556.4,428.8 557.1,428.4 557.7,428.2 558.2,428.0 558.8,428.2 559.3,427.9M559.3,427.9 559.9,428.0 560.2,428.5 560.8,428.3 561.2,428.4M532.9,429.4 532.4,429.3 531.8,429.5 531.4,429.9 530.8,430.0 530.7,430.8 529.9,430.9 529.7,431.6 530.2,432.1M530.2,432.1 530.3,432.8 530.2,433.4 530.5,433.9 530.9,434.4 531.1,434.9 531.4,435.5 532.0,435.7 532.3,436.3M534.7,438.4 533.8,438.3 533.3,437.6 532.7,437.0 532.3,436.3M533.9,426.3 533.6,427.4 532.5,427.6 532.4,428.6 532.9,429.4M536.8,440.2 536.2,439.5 536.3,438.6 535.6,438.4 534.7,438.4M484.1,369.9 484.9,370.5 485.1,371.4 485.1,372.4 484.5,373.1M492.3,351.6 491.5,352.2 491.5,353.3 490.6,353.6 489.8,354.0M488.6,358.3 489.2,357.7 489.7,356.9 489.4,356.0 488.7,355.4M489.8,354.0 489.1,354.6 488.7,355.4M498.0,366.3 497.5,365.7 496.9,365.1 496.1,364.8 495.6,364.2M486.7,362.8 486.7,362.2 486.8,361.6 487.5,361.3 487.5,360.5 487.4,359.8 487.9,359.4 488.6,359.1 488.6,358.3M567.1,411.0 567.6,410.8 568.2,410.8 568.4,410.0 569.1,410.1 568.8,409.4 569.4,408.9 570.1,408.8 570.5,408.4M571.8,409.5 571.5,408.5 570.5,408.4M571.8,409.5 571.9,409.6M575.0,394.7 574.1,394.9 573.7,394.0 572.8,394.4 572.3,393.6M572.3,393.6 571.6,394.2 571.0,394.8 570.6,395.6 569.8,396.1M570.5,408.4 569.7,408.0 569.3,407.3 569.3,406.4 568.8,405.6M521.3,311.4 520.6,311.2 520.0,311.5 519.5,311.2 519.0,310.9M521.3,311.4 521.8,311.3 522.4,311.1 523.0,310.8 523.6,310.7M523.6,310.7 523.9,310.0 523.6,309.3 524.0,308.7 524.2,308.0M537.4,287.3 537.3,287.9 537.7,288.4 538.3,288.1 538.8,288.4M544.9,287.7 544.0,288.0 543.1,287.9 542.4,288.4 541.6,288.6M538.8,288.4 539.6,288.5 540.2,288.9 540.8,288.5 541.6,288.6M531.4,291.3 531.5,292.2 532.1,292.8 531.9,293.6 531.3,294.2M543.1,305.4 542.9,306.3 542.2,306.8 541.3,306.6 540.4,306.8M528.4,315.0 529.0,314.7 529.5,314.3 530.0,313.6 530.7,313.8 531.5,314.1 531.8,314.8 532.5,315.6 531.7,316.3M528.4,315.0 528.0,314.2 527.8,313.4 527.4,312.6 526.5,312.4M533.1,315.3 532.7,316.1 531.7,316.3M531.3,320.8 530.6,320.2 531.1,319.4 531.2,318.7 531.6,318.1M531.6,318.1 531.8,317.7 531.9,317.2 531.8,316.8 531.7,316.3M523.6,310.7 524.5,310.8 525.0,311.5 525.5,312.4 526.5,312.4M614.3,261.7 615.0,262.1 615.5,262.8 615.2,263.6 615.4,264.4 615.1,265.3 615.1,266.1 614.3,266.5 613.4,266.7M616.0,267.1 615.4,267.6 614.6,267.8 614.0,267.3 613.4,266.7M586.5,288.6 586.6,289.3 585.9,289.5 585.7,290.2 585.0,290.0 584.9,290.6 584.9,291.2 584.7,291.7 584.0,291.8M584.0,291.8 583.4,291.6 582.8,291.7 582.4,292.2 582.1,292.7 581.6,292.9 581.2,293.3 580.9,293.7 580.6,294.2M572.9,295.3 573.7,295.4 573.9,296.2 574.6,296.6 575.1,295.9 575.2,296.6 575.6,297.0 575.9,297.1M580.6,294.2 580.6,294.2M579.5,294.9 578.8,294.2 577.9,294.5 577.1,294.1 576.6,294.9 576.9,295.8 577.0,296.4M366.2,337.1 366.1,337.7 366.2,338.3M448.7,381.7 448.6,382.6 448.6,383.5 448.1,384.3 448.4,385.2M448.7,381.7 448.3,381.2 447.9,380.8 447.1,380.7 447.2,379.9M447.2,379.9 446.9,380.4 446.2,380.4 445.6,380.4 445.2,380.8 444.6,380.7 444.1,380.4 443.7,379.7 443.0,380.3M441.9,381.7 442.4,380.9 443.0,380.3M425.6,341.7 425.2,341.9 424.8,342.3 424.4,342.7 423.8,342.6 423.1,342.4 423.1,341.6 422.6,341.4 422.0,341.7M425.6,341.7 426.1,342.1 426.3,342.7 426.6,343.3 427.3,343.4M427.3,343.4 427.9,343.8 428.0,344.4 428.8,344.5 428.9,345.3M405.8,346.5 406.4,346.8 406.8,347.2 406.9,347.8 407.4,348.2M407.4,348.2 408.2,348.2 409.0,347.8 409.3,348.7 410.1,349.1M410.1,349.1 410.6,348.9 411.1,348.8 411.2,348.2 411.5,347.8M406.3,389.7 405.9,390.6 406.4,391.4 407.0,392.0 407.1,392.8M411.7,393.4 411.1,393.2 410.5,393.4 410.0,393.1 409.4,393.2 408.7,393.2 408.1,393.5 407.6,393.2 407.1,392.8M419.6,323.1 419.3,323.7 419.4,324.5M411.8,325.2 412.1,324.7 412.7,324.4M414.2,321.8 413.5,322.7 412.4,322.5 412.9,323.4 412.7,324.4M411.8,325.2 411.1,325.4 410.8,326.1 410.4,326.6 409.9,327.0M411.0,321.4 411.5,322.1 411.7,323.0 412.2,323.7 412.7,324.4M461.9,346.8 461.1,346.7 460.4,347.2 460.1,347.9 459.5,348.4M459.5,348.4 458.6,348.6 457.7,348.3 457.2,349.1 456.3,349.3M443.6,341.1 443.0,340.3 442.8,339.4 443.6,338.9 444.2,338.1M457.1,353.7 456.5,353.3 456.0,353.0 455.5,352.7 455.0,352.2 454.7,351.7 454.7,351.0 454.7,350.3 454.4,349.8M449.8,351.7 450.4,351.2 451.0,351.0 451.7,350.8 452.3,350.4M452.3,350.4 452.7,349.9 453.2,349.4 453.8,349.5 454.4,349.8M459.9,355.9 459.3,355.1 458.3,355.0 458.0,354.1 457.1,353.7M456.3,349.3 455.9,349.6 455.4,349.6 454.9,349.7 454.4,349.8M471.3,357.8 471.7,358.2 471.8,358.8 471.7,359.4 472.2,359.7M471.2,363.8 471.3,364.5 470.9,365.1 469.9,364.6 469.7,365.7M459.3,367.9 460.0,367.3 460.9,367.6 461.6,368.1 462.4,368.0M478.0,384.9 476.9,384.9 476.3,384.1 476.6,383.2 476.4,382.2M478.0,384.9 478.5,384.8 479.0,384.4 479.5,384.2 480.1,384.3 480.8,384.1 480.8,383.4 481.2,382.9 481.7,382.7M481.7,382.7 481.7,381.6 481.0,380.7 481.5,379.7 482.5,379.4M476.4,382.2 476.5,381.4 476.3,380.5 475.5,380.1 474.8,379.6M469.7,365.7 469.2,366.5 469.5,367.4 469.0,368.1 468.5,368.8M462.4,368.0 462.7,368.4 463.1,368.7 463.6,368.9 464.1,369.1 464.7,369.0 465.1,369.3 465.6,369.4 466.1,369.5M468.5,368.8 468.1,369.4 467.4,369.5 466.7,369.5 466.1,369.5M458.2,368.6 458.8,368.9 459.0,369.7 458.9,370.4 459.0,371.0 459.7,371.1 460.2,371.5 460.9,371.6 461.5,371.7M461.5,371.7 462.4,372.1 463.3,372.3 464.0,372.8 464.7,373.4M448.4,385.2 449.0,385.5 448.9,386.2 449.2,386.6 449.3,387.2M449.3,387.2 450.1,386.8 450.7,387.4 451.0,388.0 451.6,388.5M452.0,374.4 451.1,374.4 450.5,375.0 449.7,375.2 448.9,374.8M462.3,384.9 462.5,385.4 462.0,385.8 461.6,386.1 461.4,386.6 461.6,387.1 461.2,387.5 461.3,388.0 461.4,388.5M463.9,382.5 463.8,383.3 463.7,384.1 463.0,384.4 462.3,384.9M462.6,391.4 461.6,391.2 461.0,390.4 461.3,389.5 461.4,388.5M451.6,388.5 452.1,389.1 452.5,389.8 452.4,390.5 452.5,391.3M473.9,352.0 474.7,351.8 474.7,351.0 475.5,351.2 475.9,350.4M525.9,334.7 525.3,335.1 524.6,335.4 523.9,335.9 523.7,336.7M523.7,336.7 523.2,336.8 522.6,336.8 522.0,336.9 521.4,336.9 521.1,337.5 520.5,337.8 521.0,338.4 520.5,339.0M517.9,337.2 518.6,337.6 519.1,338.3 519.5,339.2 520.5,339.0M496.1,347.3 496.5,346.8 497.1,346.5 497.6,346.2 498.2,346.3 498.9,346.5 499.0,347.2 499.3,347.7 499.9,347.9M499.2,342.5 499.6,343.0 500.0,343.5 500.6,343.4 501.3,343.5 501.9,343.4 502.4,343.9 502.9,344.2 503.0,344.9M503.0,344.9 502.9,345.5 502.4,345.8 501.9,346.1 501.4,346.3 500.8,346.7 500.2,346.6 500.1,347.2 499.9,347.9M492.3,351.6 492.7,350.8 493.5,350.7 493.7,350.0 493.8,349.3 493.6,348.6 493.2,348.0 493.5,347.3 493.1,346.7M493.1,346.7 493.9,346.5 494.6,346.9 495.4,347.3 496.1,347.3M521.6,341.3 521.5,340.6 520.9,340.2 520.7,339.6 520.5,339.0M521.6,341.3 522.1,342.0 522.6,342.9 523.5,342.5 524.4,342.8M524.4,342.8 524.9,343.4 525.6,343.9 526.3,344.4 527.1,344.7M513.7,340.5 513.2,339.8 513.7,339.1 514.0,338.5 514.2,337.8 514.9,337.9 515.6,337.6 516.2,337.2 516.6,336.6M516.6,336.6 517.4,336.7 517.9,337.2M461.9,346.8 462.3,346.2 463.0,345.8 462.8,345.1 462.9,344.3M461.6,338.0 462.4,338.5 463.1,339.1 462.9,340.1 462.7,341.0M462.7,341.0 462.2,341.8 462.4,342.7 462.4,343.6 462.9,344.3M448.6,87.8 449.1,88.9 450.1,89.6 449.4,90.5 448.4,91.2M448.6,87.8 449.0,87.3 449.6,87.1 449.3,86.5 449.3,85.9 449.1,85.2 449.4,84.7 450.0,84.4 450.6,84.3M449.6,93.4 449.4,92.7 448.8,92.4 448.9,91.7 448.4,91.2M450.6,81.7 451.0,82.4 451.5,83.0 450.8,83.5 450.6,84.3M451.5,95.6 452.0,96.0 451.9,96.6 452.4,97.0 453.0,97.0 453.5,97.0 454.0,97.2 454.5,97.5 455.1,97.4M451.5,95.6 451.4,94.8 451.0,94.1 450.3,93.7 449.6,93.4M455.1,97.4 455.7,97.5 455.8,98.2 456.3,98.6 456.9,98.6 457.4,98.5 457.9,98.3 458.5,98.1 459.0,98.1M466.0,88.0 465.8,88.9 465.6,89.8 465.7,90.7 465.9,91.6M466.0,88.0 466.6,88.3 467.2,88.1 467.9,88.0 468.4,88.1M465.9,91.6 465.9,91.6M466.6,92.9 467.0,93.5 467.7,93.8 468.6,93.5 469.3,93.9 469.4,94.8 470.0,95.4M472.5,96.2 471.9,95.9 471.2,95.8 470.6,95.6 470.0,95.4M459.0,98.1 460.0,98.4 460.1,99.4 461.1,99.0 461.8,99.9M461.8,99.9 462.5,100.3 463.3,100.3 463.9,100.8 464.6,101.1 465.9,100.8 466.7,101.8 466.8,100.6 467.4,99.7M467.4,99.7 468.1,99.3 468.4,98.6 469.0,97.8 469.9,98.3 470.5,97.6 471.0,96.9 471.2,95.7 470.0,95.4M476.7,97.9 476.3,97.5 475.8,97.1 475.5,96.5 474.9,96.4 474.3,96.6 473.7,96.4 473.1,96.0 472.5,96.2M469.2,104.4 469.4,105.1 470.1,105.3 470.0,106.0 469.5,106.4 469.5,106.9 469.5,107.4 469.9,107.8 469.9,108.4M469.2,104.4 468.8,103.9 468.3,103.5 468.0,102.9 467.8,102.3 468.0,101.6 468.0,100.9 467.7,100.3 467.4,99.7M430.5,105.1 431.0,105.2 431.9,105.4 432.8,105.3 432.1,106.1 431.8,107.2 432.7,107.8 433.2,108.7M433.2,108.7 432.7,109.6 433.6,110.1 433.5,110.9 433.0,111.5 433.1,112.4 432.4,113.0 431.5,112.7 431.5,112.7M427.3,100.9 427.3,101.5 427.4,102.1 427.8,102.5 427.9,103.1 428.3,103.5 428.4,103.6M401.2,140.2 400.3,140.2 399.5,140.1 398.6,139.8 397.7,139.9M394.4,139.0 394.9,139.9 395.8,140.5 396.7,139.9 397.7,139.9M390.0,138.0 390.6,138.0 391.1,138.3 391.8,138.0 392.2,138.6 392.7,138.9 393.3,138.9 393.9,139.3 394.4,139.0M405.4,141.5 405.8,142.2 405.5,142.9 405.7,143.7 404.8,144.1M405.4,141.5 404.8,141.7 404.4,141.2 403.7,141.1 403.4,140.6 403.1,140.0 402.4,139.9 401.8,140.0 401.2,140.2M403.4,146.8 403.7,146.1 404.1,145.5 404.7,144.9 404.8,144.1M425.7,127.5 425.2,127.7 424.6,127.8 424.2,128.3 423.5,128.2 423.0,127.8 422.4,128.2 422.0,128.9 422.0,128.8M419.0,142.9 418.5,143.4 418.9,144.1 419.4,144.3 419.8,144.8 420.3,144.9 420.8,145.2 421.3,145.3 421.8,145.2M419.0,142.9 418.7,142.1 418.6,141.8M411.0,152.6 410.1,152.7 409.2,152.7 408.3,152.5 407.7,151.9M452.8,104.0 452.3,104.1 451.8,104.1 451.3,104.3 450.8,103.9 450.3,104.0 449.8,103.8 449.2,103.9 449.0,104.4M473.9,118.5 473.7,119.1 474.2,119.5 474.3,120.2 475.0,120.3 474.9,120.9 475.1,121.4 475.1,122.0 475.6,122.4M473.9,118.5 473.2,118.0 472.4,118.0 471.8,118.5 471.2,119.0 470.8,117.9 471.8,117.5 471.5,116.7 470.8,116.2M469.9,108.4 469.8,109.2 469.7,110.0 470.2,110.7 471.1,110.9 471.2,111.7 470.4,112.1 470.2,112.8 469.5,113.1M470.8,116.2 470.4,115.3 470.8,114.4 470.3,113.6 469.5,113.1M451.7,128.1 451.0,127.5 451.2,126.6M451.7,128.1 452.3,128.2 452.9,128.6 452.9,129.4 453.6,129.7 454.1,130.1 454.2,130.7 454.4,131.4 455.0,131.7M459.7,103.4 459.3,103.0 458.8,103.4 458.2,103.3 457.8,103.7 457.7,104.2 457.3,104.5 456.7,104.6 456.3,104.9M461.8,99.9 461.4,100.3 461.0,100.7 461.4,101.3 461.2,101.9 460.6,102.4 460.9,103.1 460.2,103.0 459.7,103.4M452.8,104.0 453.2,104.3 453.6,104.5 454.0,104.8 454.5,104.6 454.9,104.9 455.4,105.0 455.9,105.2 456.3,104.9M449.0,104.4 448.8,105.1 448.2,105.4 447.9,106.1 448.3,106.7 447.8,107.0 447.3,107.3 446.7,107.4 446.1,107.3M425.7,127.5 426.1,127.0 426.6,126.7 426.8,126.2 426.9,125.7M427.5,125.9 427.5,125.9 427.6,125.9M433.1,127.2 433.2,127.7 433.8,128.0 434.3,128.4 434.9,128.4 435.5,128.7 435.7,129.4M451.7,128.1 451.5,128.9 450.8,129.4 450.7,130.2 450.4,130.9 449.6,131.1 449.2,131.8 448.5,132.1 447.7,132.1M453.6,134.9 452.7,135.2 452.1,135.8 451.7,136.6 451.4,137.5M440.1,131.3 439.3,131.2 438.8,130.6 438.5,130.0 438.3,129.3 437.7,129.2 437.0,129.1 436.3,129.1 435.7,129.4M440.1,131.3 441.0,131.4 441.6,132.1 442.4,132.5 442.8,133.3M440.3,139.6 440.3,138.7 440.7,138.0 440.9,137.1 441.5,136.4M442.8,133.3 442.7,134.2 442.2,134.9 441.6,135.6 441.5,136.4M451.4,137.5 451.2,138.1 450.6,138.5 450.6,139.2 450.4,139.8M447.7,132.1 447.8,133.1 447.4,134.0 446.8,134.8 445.8,134.9 445.1,134.4 444.4,133.9 443.6,133.5 442.8,133.3M477.3,161.1 476.7,161.2 476.1,161.3 476.1,160.5 475.4,160.5 474.9,160.2 474.7,159.7 474.1,159.8 473.6,159.5M473.6,159.5 473.8,158.9 474.3,158.4 474.8,158.1 475.3,157.7 475.5,157.1 475.2,156.5 475.3,155.8 475.4,155.2M476.6,149.0 475.8,149.6 474.9,150.0 474.9,151.2 475.9,151.8M475.4,155.2 474.9,154.3 474.6,153.4 474.8,152.2 475.9,151.8M426.1,153.5 425.9,153.0 426.2,152.5 425.8,152.0 426.2,151.5M426.1,153.5 425.5,153.5 424.9,153.3 424.5,152.8 424.4,152.2 423.8,152.5 423.2,152.2 422.6,152.5 422.4,153.1M421.8,145.2 422.0,145.8 421.9,146.5 422.0,147.2 422.1,147.9 422.7,148.2 423.4,148.5 424.1,148.2 424.8,148.0M426.2,151.5 425.7,151.2 425.7,150.6 425.4,150.1 425.8,149.6 425.6,149.1 425.3,148.8 425.0,148.4 424.8,148.0M493.5,147.3 492.8,147.3 492.4,146.7 492.2,146.0 491.5,145.8 490.8,145.5 490.2,145.9 489.6,146.1 489.0,146.4M493.5,147.3 494.1,147.8 494.5,148.5 495.2,148.8 495.8,149.3 496.6,149.1 497.3,148.9 497.5,148.0 498.2,147.6M489.1,140.4 488.9,141.1 489.2,141.8 488.9,142.7 488.0,142.7 487.9,143.4 487.7,144.0 487.1,144.4 486.9,145.1M486.9,145.1 487.5,145.4 487.9,145.8 488.7,145.6 489.0,146.4M503.4,149.3 502.9,148.6 502.3,148.1 501.7,148.9 500.8,148.5 500.1,148.5 499.4,148.3 499.1,147.5 498.2,147.6M483.0,145.4 483.5,145.5 484.0,145.4 484.5,145.3 485.0,145.5 485.5,145.9 486.0,145.6 486.5,145.4 486.9,145.1M506.6,143.6 506.0,143.2 505.4,142.9 505.4,142.2 505.3,141.5 505.3,140.9 505.2,140.3 505.1,139.7 504.7,139.2M481.2,125.0 481.6,124.8 482.1,124.6 482.6,124.9 483.1,124.7 483.5,125.0 484.1,125.0 484.5,125.4 485.0,125.3M485.0,125.3 485.6,125.5 486.1,126.0 486.2,126.6 486.0,127.2 486.6,127.4 486.8,127.9 487.4,128.0 487.9,128.4 488.0,128.9 488.0,129.4 487.8,129.9 487.8,130.4 487.9,131.0 488.1,131.5 488.0,132.2 487.5,132.5M489.1,140.4 489.5,139.9 489.4,139.4 489.2,138.7 489.8,138.4 490.2,137.8 489.9,137.2 489.2,137.1 489.0,136.4M489.0,136.4 489.1,135.8 489.2,135.3 489.0,134.8 488.9,134.2 488.7,133.6 488.7,132.9 488.0,132.7 487.5,132.5M386.5,146.1 386.8,147.5 388.1,148.0 387.7,149.3 386.3,149.6M401.8,166.9 401.2,167.5 401.0,168.4 400.7,169.2 400.0,169.7M401.8,166.9 401.6,166.3 401.5,165.6 401.3,165.0 401.3,164.4M401.3,164.4 400.6,163.6 400.5,162.6 399.7,161.9 398.7,162.0M399.1,171.9 399.5,171.4 399.9,170.9 399.4,170.3 400.0,169.7M398.7,162.0 398.0,161.4 397.9,160.5 397.1,159.9 397.1,158.9M397.1,158.9 396.7,158.5 396.1,158.6 395.5,158.6 395.1,158.3 394.5,157.9 393.9,158.3 393.6,157.9 393.1,157.6M414.8,228.0 415.3,228.4 415.6,229.0 416.2,229.2 416.7,229.6M419.4,233.9 419.1,233.4 419.2,232.8 419.1,232.3 419.1,231.7M419.1,231.7 418.4,231.3 417.7,230.9 417.5,230.1 416.7,229.6M436.6,221.0 436.6,222.1 437.1,223.0 436.1,222.9 435.0,223.1 435.2,223.8 435.2,224.4 435.3,225.1 435.1,225.7M419.1,231.7 420.0,232.6 421.0,231.8 421.4,230.9 422.3,230.4M424.9,230.1 425.8,229.8 426.3,229.1 426.7,230.0 427.7,230.0M424.9,230.1 424.2,230.3 423.5,229.9 423.0,230.3 422.3,230.4M435.3,218.4 434.8,218.2 434.4,217.9 434.0,217.5 433.8,217.1 434.0,216.6 433.8,216.1 433.7,215.6 433.6,215.1M387.3,198.1 388.0,197.5 388.4,198.3 389.0,198.3 389.6,198.3M387.3,198.1 387.1,198.7 386.5,198.8 386.1,199.1 385.6,199.3 385.0,199.4 384.4,199.5 383.9,199.1 383.5,198.7M391.2,203.1 390.6,202.7 390.2,202.1 389.7,201.6 389.3,201.0 389.2,200.3 389.3,199.6 389.4,198.9 389.6,198.3M389.6,198.3 390.2,198.2 390.8,197.8 391.3,198.3 391.9,198.4 392.6,198.7 393.1,198.2 393.7,197.9 394.1,197.5M399.3,197.5 398.8,197.7 398.2,197.8 397.7,197.7 397.2,197.5M397.7,207.9 397.4,207.3 396.7,207.2 396.3,206.7 395.8,206.3M391.2,203.1 392.0,203.7 392.0,204.7 393.0,204.9 393.6,205.6M397.2,197.5 396.4,197.3 395.7,197.1 394.8,196.9 394.1,197.5M395.8,206.3 395.3,206.0 394.8,205.9 394.2,205.7 393.6,205.6M414.8,228.0 414.9,227.4 414.8,226.8 414.1,226.9 413.6,226.4 413.1,226.1 412.6,226.1 412.1,226.0 411.8,225.6M408.4,227.1 408.7,226.8 409.2,226.8 409.6,226.5 410.0,226.2 410.5,226.2 411.0,226.3 411.4,225.9 411.8,225.6M400.7,232.1 401.1,231.7 401.1,231.0 401.1,230.4 400.7,229.9M408.4,227.1 407.9,227.0 407.5,227.3 407.1,227.5 406.6,227.4 406.1,227.6 405.7,227.5 405.3,227.9 404.8,227.9M400.7,229.9 401.3,229.8 401.9,229.9 402.4,229.5 402.8,229.1 403.5,229.1 404.0,228.8 404.0,227.9 404.8,227.9M381.2,193.3 380.5,193.9 379.7,194.2 380.4,194.8 380.2,195.8 379.9,196.7 379.7,197.5 378.8,197.4 377.9,197.3M383.5,198.7 383.3,198.0 382.6,198.4 382.1,197.9 381.6,198.4 381.1,198.2 380.7,198.3 380.2,198.1 379.7,198.4M377.9,197.3 378.3,197.7 378.6,198.2 379.2,197.8 379.7,198.4M377.9,197.3 377.5,196.8 376.8,196.5 376.0,196.3 375.5,196.9 375.0,196.6 374.4,196.6 373.7,196.5 373.1,196.6M367.5,196.0 367.8,196.5 368.5,196.7 368.8,197.2 369.1,197.8M369.1,197.8 369.6,197.9 370.0,198.3 370.6,198.5 370.9,198.9 371.1,199.4 371.5,199.8 371.5,199.8M385.7,181.5 386.5,181.5 387.4,181.3 388.2,181.4 389.1,181.4M385.7,181.5 385.0,181.2 384.9,180.4 384.4,180.0 383.7,179.7 383.3,178.8 383.6,177.9 382.7,178.2 381.7,178.0M384.9,185.6 385.6,185.3 385.4,184.6 385.7,184.1 386.1,183.7 385.9,183.2 385.6,182.7 385.9,182.1 385.7,181.5M392.2,181.3 391.5,181.7 390.6,181.3 389.8,181.0 389.1,181.4M378.3,176.6 378.7,176.9 379.2,176.7 379.7,176.6 380.2,176.8 380.7,177.0 381.1,177.2 381.6,177.5 381.7,178.0M394.9,179.0 394.6,180.0 393.5,180.1 393.0,180.9 392.2,181.3M407.4,179.5 407.3,180.2 407.8,180.6 408.4,180.4 409.0,180.6 409.4,181.0 409.9,181.2 410.2,181.5 410.7,181.8M410.7,181.8 410.9,181.1 411.3,180.5 411.5,179.8 411.8,179.2 412.6,179.0 413.1,178.3 413.8,178.9 414.5,178.4M410.7,181.8 410.4,182.5 410.3,183.4M410.3,183.4 409.1,183.3 408.8,184.5 408.8,185.5 408.8,186.5M408.8,186.5 407.8,186.1 406.7,185.8 406.0,186.7 405.5,187.7M452.7,190.0 452.0,189.6 451.2,189.2 450.6,188.7 450.3,187.9M449.1,182.0 449.0,182.6 449.2,183.1 448.7,183.5 448.2,183.7 448.2,184.1 448.3,184.6 448.1,185.1 448.1,185.5M450.3,187.9 450.1,187.0 449.8,186.2 448.9,186.1 448.1,185.5M430.6,185.0 430.5,184.4 430.2,183.8 430.9,183.3 430.4,182.6M430.4,182.6 429.9,181.9 430.2,181.1 429.6,180.6 429.5,179.8M428.6,172.6 428.9,171.6 429.8,171.3 430.2,170.5 430.4,169.7M430.4,169.7 430.5,169.1 431.0,168.7 431.5,168.3 431.6,167.7M431.6,167.7 432.4,167.3 432.4,166.5 432.7,165.8 432.5,165.0M426.1,153.5 426.9,153.8 427.3,154.5 426.9,155.1 426.8,155.9 427.3,156.3 427.8,156.6 428.3,157.1 429.0,156.8M429.5,179.8 429.7,178.8 429.3,177.8 428.3,178.0 427.4,177.4M427.4,177.4 428.3,177.2 429.1,176.7 428.3,176.1 428.4,175.1 428.2,174.5 428.1,173.8 428.4,173.2 428.6,172.6M544.8,156.2 543.9,155.6 542.9,156.2 541.9,156.0 541.4,155.0M539.0,155.5 539.6,155.3 540.3,155.4 540.8,155.2 541.4,155.0M552.1,159.8 552.0,159.1 551.3,158.9 550.9,158.5 550.8,157.9 550.2,158.0 549.6,157.9 549.0,158.1 548.4,158.0 547.9,158.0 547.3,158.2 546.9,157.8 546.3,157.8 546.1,157.2 545.9,156.7 545.5,156.2 544.8,156.2M534.8,156.2 535.5,155.9 536.2,156.3 536.9,155.8 536.8,155.1 537.4,154.7 538.1,154.3 538.9,154.6 539.0,155.5M532.6,128.9 532.3,129.7 532.8,130.4 532.6,131.2 532.0,131.6 531.2,131.9 530.5,132.5 529.7,132.2 529.2,131.5M527.5,135.8 527.0,135.2 526.5,134.6 527.2,134.1 527.5,133.3 527.8,132.7 527.9,131.9 528.7,132.2 529.2,131.5M535.9,117.7 536.4,118.5 536.4,119.4 537.3,119.7 538.2,119.9 538.8,120.6 539.7,120.8 540.5,120.7 541.3,120.5M541.3,120.5 541.0,121.4 540.4,122.0 540.6,123.1 539.5,123.6 539.2,124.5 539.8,125.4 539.1,126.1 539.3,127.1M539.3,127.1 538.5,127.4 537.8,127.8 537.1,128.3 536.7,129.0M536.7,129.0 536.2,128.8 535.7,128.9 535.2,128.6 534.7,128.7 534.2,128.9 533.6,128.8 533.2,129.4 532.6,128.9M551.8,129.3 552.6,129.4 553.1,129.9 553.6,130.5 553.6,131.2 553.9,132.0 554.0,132.8 554.7,133.1 555.6,133.0M560.6,141.7 561.0,141.0 561.6,140.5 560.7,140.1 560.6,139.2 560.0,138.5 560.4,137.7 561.0,137.2 561.7,136.8M555.6,133.0 556.4,133.1 556.8,132.4 557.5,132.1 558.2,132.4 558.1,133.2 558.5,133.8 559.2,134.2 559.8,134.6M561.7,136.8 561.0,136.4 560.5,135.9 560.1,135.2 559.8,134.6M591.1,126.4 591.0,125.6 590.4,125.1 590.2,124.4 590.3,123.7 589.6,123.2 589.0,123.7 588.2,124.0 587.6,123.6M582.7,115.9 582.9,116.6 582.5,117.3 583.1,117.5 583.7,117.9 584.3,118.1 584.6,118.6 584.8,119.2 584.8,119.8M584.8,119.8 584.1,120.6 584.1,121.6 585.0,121.9 586.0,121.8 586.4,122.2 586.9,122.6 587.0,123.2 587.6,123.6M535.9,117.7 534.7,117.4 533.6,117.2 535.1,116.6 534.4,115.0 533.9,114.2 533.2,113.6 532.4,114.2 531.5,114.3M531.5,114.3 530.9,114.0 530.3,114.2 529.7,114.5 529.1,114.5 528.5,114.5 528.1,114.0 527.6,113.7 527.0,113.6M527.0,113.6 526.2,113.4 525.3,113.4 525.0,112.6 524.5,111.9M547.3,296.6 548.2,296.3 548.8,296.9 549.7,297.2 550.4,296.8M552.7,289.8 552.1,289.7 551.6,289.5 551.1,289.3 550.5,289.3 550.0,289.0 549.7,288.5 549.2,288.3 548.7,288.0M552.6,296.0 552.2,296.5 551.6,296.8 551.0,296.6 550.4,296.8M548.7,288.0 548.0,288.2 547.5,287.6M544.9,287.7 545.5,287.4 546.2,287.3 546.9,287.3 547.5,287.6M556.3,289.4 555.9,289.7 555.4,289.6 555.0,289.4 554.5,289.5 554.1,289.8 553.6,289.6 553.1,289.3 552.7,289.8M555.7,295.5 555.1,296.1 554.2,296.2 553.5,296.0 552.6,296.0M549.7,284.5 550.0,285.5 550.3,286.5 549.8,287.5 548.7,288.0M551.5,302.5 551.4,301.7 550.9,301.1 551.0,300.4 550.9,299.6 551.2,298.9 551.2,298.1 550.6,297.6 550.4,296.8M574.1,272.4 573.6,271.8 573.7,271.1 574.4,270.9 574.8,270.4 574.4,270.0 574.2,269.4 573.9,269.0 573.5,268.7M574.1,272.4 574.7,272.5 575.3,272.8 576.2,272.3 576.5,273.2 577.1,272.7 577.8,273.0 578.4,273.3 579.1,273.4M583.8,270.5 583.8,271.6 582.8,271.8 582.3,272.6 581.4,272.7M579.1,273.4 579.7,273.1 580.3,273.2 580.9,273.1 581.4,272.7M572.3,274.2 573.0,273.9 573.1,273.2 573.7,273.0 574.1,272.4M571.7,265.4 571.9,265.9 572.3,266.3 572.3,266.8 572.2,267.3 572.4,267.7 572.9,267.9 573.0,268.4 573.5,268.7M594.6,287.8 594.4,287.9 594.0,287.6 593.6,287.3 593.2,287.2M588.7,286.2 589.2,286.3 589.7,286.1 590.2,286.1 590.6,285.8M589.8,276.1 590.9,276.0 591.7,275.4 591.9,276.4 592.0,277.4 592.3,278.0 593.1,278.1 592.9,278.9 593.5,279.4M593.5,279.4 593.5,280.3 593.2,281.1 593.1,282.1 592.4,282.7 591.3,283.3 590.0,283.4 590.2,284.6 590.6,285.8M590.6,285.8 591.3,286.3 591.5,287.1 592.4,286.7 593.2,287.2M521.6,291.8 521.3,292.3 520.7,292.5 520.2,292.8 519.8,293.2M522.8,299.5 522.1,299.3 522.0,298.6 521.3,299.0 520.7,298.5M519.8,293.2 519.3,292.9 518.6,292.7 517.9,292.7 517.5,293.4M517.5,293.4 516.7,292.9 516.9,291.9 516.0,291.4 516.2,290.4M547.6,263.6 547.1,263.3 547.0,262.8 546.8,262.3 546.3,262.2 545.8,262.1 545.4,261.9 545.0,261.8 544.5,261.6M542.3,260.4 543.0,260.1 543.6,260.6 544.0,261.1 544.5,261.6M551.8,264.4 551.2,264.3 550.7,264.3 550.2,264.1 549.6,264.1 549.1,263.8 548.8,263.3 548.1,263.3 547.6,263.6M540.0,259.9 540.5,260.2 541.0,260.5 541.6,260.3 542.3,260.4M540.0,259.9 539.5,259.2 538.7,259.1 538.0,258.7 537.2,258.8M613.4,266.7 612.5,266.6 611.8,267.1 610.9,267.0 610.3,266.3 609.4,266.5 608.6,266.2 607.8,266.3 607.1,266.8M604.2,269.4 604.8,269.2 605.4,269.5 606.0,269.1 606.6,269.1 606.0,268.6 606.2,267.8 606.4,267.1 607.1,266.8M570.4,178.8 570.7,178.0 571.6,177.9 572.1,177.1 573.0,177.6M575.1,173.2 574.4,173.6 573.8,174.1 572.9,174.3 572.1,174.5 572.5,175.2 572.9,175.9 573.1,176.7 573.0,177.6M566.6,177.2 567.1,177.4 567.6,177.4 568.2,177.4 568.7,177.6 568.7,178.3 569.3,178.6 569.8,179.0 570.4,178.8M346.0,255.0 346.8,255.0 347.6,255.4 348.0,256.3M348.0,256.3 348.3,256.7 348.8,256.7 349.4,257.1 349.8,256.5M350.7,253.4 350.9,254.3 350.4,255.0 350.1,255.8 349.8,256.5M343.5,265.1 343.6,265.0M344.5,263.0 344.8,263.0 344.5,263.1M343.6,265.0 343.6,265.0M431.3,330.5 431.8,330.1 432.6,329.8 433.2,329.3 433.4,328.6M435.4,324.3 435.6,323.6M432.7,305.4 433.5,305.5 434.3,305.8 435.1,305.6 435.8,305.4M435.8,305.4 436.3,305.8 437.0,305.7 437.5,305.7 438.1,305.8M426.5,294.3 427.4,294.3 428.0,295.0M426.5,294.3 426.2,293.5 425.5,293.1 424.7,292.9 424.0,293.3M428.0,295.0 428.6,295.7 428.4,296.5 428.5,297.3 428.3,298.1M429.0,304.5 428.4,304.8M429.0,304.5 429.1,303.2 428.0,302.6 428.9,302.1 429.4,301.1M428.4,304.8 427.6,305.0 426.8,305.0M428.3,298.1 428.7,298.9 429.5,299.3 429.6,300.2 429.4,301.1M459.8,312.1 459.5,311.7 459.0,311.6 458.5,311.4 458.2,311.1M458.5,306.2 457.8,306.6 458.2,307.4 457.8,308.0 457.6,308.6M458.2,311.1 457.9,310.4 457.2,310.1 457.3,309.3 457.6,308.6M451.4,333.0 450.9,332.8 450.5,332.5 450.3,331.9 449.7,331.9M442.9,334.7 443.4,335.4 443.5,336.2M444.2,338.1 443.9,337.7 443.8,337.1 443.5,336.7 443.5,336.2M446.0,331.7 446.7,331.7 447.4,332.0 447.7,331.3 448.0,330.7M449.7,331.9 449.1,331.7 448.8,331.3 448.4,330.9 448.0,330.7M491.8,257.1 492.5,257.3 493.0,257.8M493.0,257.8 493.7,257.7 494.4,257.9 494.8,258.4 495.4,258.7M502.8,257.3 503.4,256.7 503.7,255.9M496.7,259.5 496.3,258.7 495.4,258.7M476.9,252.4 477.2,253.1 476.7,253.7 476.9,254.4 476.6,255.1M476.6,255.1 476.8,255.5 476.7,256.0 476.7,256.5 476.9,256.9M474.3,261.2 473.6,260.5 472.7,261.1 472.1,260.4 471.1,260.6M474.3,261.2 473.9,261.5 473.7,262.0 473.8,262.5 473.9,263.0 473.9,263.6 473.6,264.2 473.1,264.5 472.5,264.5M471.1,260.6 470.8,261.2 470.1,261.1 469.5,261.0 469.0,261.2M472.5,264.5 472.1,264.9 471.6,265.3 471.2,265.8 470.5,266.0M474.3,261.2 475.1,260.9M475.1,260.9 475.8,261.1 476.4,261.4 476.2,262.1 476.2,262.9 475.9,263.7 476.5,264.3 477.3,264.1 478.0,264.2M479.7,266.0 479.3,265.4 478.6,265.4 478.0,264.9 478.0,264.2M467.4,260.9 468.2,260.8 469.0,261.2M470.5,266.0 470.0,266.2 469.7,266.7 469.2,267.0 469.0,267.5M475.1,260.9 474.6,260.0 474.9,259.1 475.8,258.7 476.7,258.5M476.9,256.9 477.3,257.8 476.7,258.5M468.0,243.9 468.5,243.7 469.1,243.5 469.6,243.3 470.1,243.2M470.1,243.2 470.5,242.4 471.2,241.9 470.9,241.2 470.5,240.4M470.5,240.4 470.2,239.8 470.0,239.1 470.0,238.4 470.2,237.7M472.5,245.1 471.7,244.9 471.1,244.3 471.0,243.4 470.1,243.2M470.7,235.7 470.2,236.2 469.8,236.6 470.1,237.1 470.2,237.7M374.4,267.2 374.2,267.8 373.7,268.1M374.4,267.2 374.3,266.5 374.6,265.8M373.7,268.1 373.1,267.9 372.6,268.2M372.2,268.0 372.6,268.2M397.9,255.0 398.4,255.6 399.0,255.9M398.0,244.2 398.7,244.7 399.2,244.0 399.8,244.4 400.3,244.6 400.8,245.0 401.3,245.2 401.9,245.4 402.5,245.3M398.0,244.2 397.7,244.6 397.4,245.0 397.7,245.5 397.5,246.1M397.5,246.1 397.7,246.8 398.2,247.2 398.1,247.9 397.7,248.5M397.7,248.5 397.2,248.8 397.2,249.3 396.9,249.8 397.2,250.3M402.5,236.7 402.0,235.9 402.5,235.0 401.6,234.9 400.8,234.3M396.4,242.0 395.7,242.7 394.8,242.6 394.0,242.2 393.6,241.4M393.6,241.4 392.9,241.4 392.5,241.9 392.1,241.5 391.5,241.3M398.0,244.2 397.3,244.0 397.0,243.3 396.8,242.6 396.4,242.0M404.9,238.8 404.3,238.0 403.3,238.2 403.0,237.5 402.5,236.7M400.7,232.1 400.1,232.6 399.9,233.3 400.1,234.1 400.8,234.3M394.6,227.9 395.3,227.7 396.0,227.3 396.8,227.0 397.5,227.4M397.5,227.4 397.8,227.8 398.1,228.3 398.7,228.5 398.7,229.1 399.2,229.5 399.8,229.4 400.3,229.5 400.7,229.9M378.5,223.9 378.1,224.2 377.5,224.2 377.2,224.6 377.0,225.1M378.5,223.9 379.4,224.3 380.3,224.0 380.6,223.0 381.5,222.6M364.9,244.7 364.5,244.4 364.0,244.0 364.2,243.4 364.1,242.8M364.9,244.7 364.7,245.6 365.1,246.4 364.4,247.0 363.5,247.0M362.4,247.4 363.2,247.8 363.5,247.0M353.9,244.7 354.0,244.2 353.6,243.8 353.8,243.3 353.9,242.7M378.5,223.9 378.2,223.4 377.9,222.9 377.3,222.7 377.0,222.3 376.9,221.5 376.5,220.9 377.2,220.8 377.6,220.1M377.0,225.1 376.3,225.3 375.6,225.1 374.9,225.4 374.6,226.0M369.5,231.0 369.1,230.6 368.7,230.0 368.9,229.4 369.4,228.9 369.9,228.7 370.4,228.4 371.1,228.3 371.1,227.6M369.5,231.0 368.8,231.2 368.3,231.9 367.5,231.7 366.8,231.9M371.1,227.6 370.7,227.3 370.2,227.1 369.7,227.0 369.3,226.6 368.8,226.3 368.6,225.8 368.2,225.5 367.8,225.2M366.2,223.4 365.5,222.9 364.7,223.1M366.2,223.4 366.6,223.9 366.9,224.4 367.5,224.6 367.8,225.2M374.6,226.0 374.1,226.3 373.5,226.0 373.2,226.4 372.8,226.8M372.8,226.8 372.3,226.8 371.8,226.8 371.1,226.9 371.1,227.6M379.4,275.9 378.9,275.3 378.5,274.8M380.7,279.9 380.6,279.4 380.8,278.9 381.2,278.5 381.4,278.1M379.4,275.9 380.3,275.9 380.9,276.7M381.4,278.1 380.9,277.5 380.9,276.7M338.7,276.3 339.4,276.6 339.4,277.4 339.3,278.0 339.3,278.1M339.4,272.3 338.9,272.8 338.9,273.5 339.2,274.1 339.9,274.3M339.9,274.3 339.2,274.5 338.5,274.8 338.2,275.6 338.7,276.3M372.5,248.8 373.3,248.5 373.0,247.7M372.5,248.8 372.0,249.3 371.6,249.7M364.9,244.7 365.7,244.9 366.5,244.7M363.5,247.0 364.2,247.5 364.7,248.3M365.2,248.8 364.7,248.3M469.0,267.5 469.1,268.5 468.5,269.2M468.5,269.2 468.4,270.1 468.4,270.9M466.0,231.7 465.5,231.7 465.0,231.4 464.7,231.0 464.3,230.6M462.5,230.3 462.9,230.6 463.4,230.8 463.9,231.1 464.3,230.6M460.0,230.0 460.8,230.0 461.4,229.4 461.6,230.3 462.5,230.3M468.4,233.0 468.1,232.3 467.4,232.0 466.8,231.5 466.0,231.7M465.2,227.0 464.6,227.2 464.6,227.8 464.4,228.2 464.3,228.7 464.2,229.2 464.1,229.6 464.3,230.1 464.3,230.6M445.2,257.2 445.7,257.8 446.4,258.1 446.4,258.8 446.5,259.5M448.2,261.7 447.5,261.5 446.9,260.9 446.9,260.2 446.5,259.5M430.8,229.6 431.5,229.4 432.1,229.8 432.7,230.0 433.3,230.0 433.5,229.3 433.9,228.8 434.3,228.3 434.7,227.8M433.0,235.2 433.3,234.3 434.1,233.9 434.8,233.3 435.7,233.1M436.0,229.4 435.5,229.1 435.3,228.6 434.9,228.4 434.7,227.8M436.0,229.4 435.9,230.0 436.3,230.5 436.4,231.0 436.8,231.5M436.8,231.5 436.4,231.9 436.5,232.4 436.1,232.8 435.7,233.1M427.7,230.0 428.5,229.9 429.3,229.7 430.1,230.3 430.8,229.6M435.1,225.7 434.9,226.3 434.8,226.8 434.4,227.3 434.7,227.8M432.6,237.7 432.7,237.1 432.8,236.5 432.8,235.8 433.0,235.2M438.0,238.2 438.4,239.0 439.3,239.3 440.1,239.1 440.8,238.7M446.7,252.5 446.1,252.9 445.5,253.2 444.7,253.0 444.1,252.7M442.1,250.8 442.7,251.2 443.1,251.8 443.4,252.4 444.1,252.7M445.2,257.2 444.8,256.4 445.1,255.5 444.8,254.5 443.8,254.4M446.7,252.5 447.4,252.2 448.0,252.6 448.6,253.0 449.3,252.6M444.1,252.7 444.0,253.1 443.6,253.5 443.6,254.0 443.8,254.4M434.1,244.8 434.8,244.6 435.4,244.4 436.0,244.8 436.7,244.8M436.7,244.8 437.6,245.5 438.6,245.9 439.5,245.2 439.9,244.1M434.5,239.2 435.1,239.7 435.8,239.5M435.8,239.5 435.9,240.2 436.4,240.6 436.7,241.2 436.8,241.8 437.7,241.3 438.5,240.8 439.2,241.6 439.2,242.6M439.9,244.1 439.6,243.3 439.2,242.6M432.1,245.8 432.2,245.1 432.9,244.9 433.5,244.8 434.1,244.8M432.6,237.7 433.2,238.0 433.8,238.1 434.0,238.8 434.5,239.2M440.7,248.6 441.0,248.0 441.1,247.4 441.0,246.8 440.7,246.3 440.8,245.7 440.7,245.1 440.2,244.7 439.9,244.1M438.0,238.2 437.5,238.6 436.9,238.7 436.3,239.1 435.8,239.5M440.7,248.6 441.1,249.1 441.4,249.7 442.2,250.0 442.1,250.8M455.1,262.0 455.8,261.7 456.6,261.8 457.3,261.6 457.8,261.0M459.5,259.4 459.0,259.9 458.2,259.7 457.7,260.2 457.8,261.0M375.7,285.9 375.6,285.3 375.5,284.7 375.0,284.4 374.4,284.2M369.5,284.0 369.1,284.7 369.6,285.4 369.4,286.0 369.1,286.6M369.5,284.0 370.3,283.7 371.1,283.9 371.9,283.5 372.7,283.4M372.7,283.4 373.2,283.4 373.7,283.5 374.1,283.8 374.4,284.2M380.3,281.7 380.5,282.2 380.6,282.8M380.6,282.8 380.6,283.6 380.2,284.3 380.3,285.1 379.8,285.8M379.8,285.8 379.3,286.2 379.0,286.9 378.3,287.1 377.7,287.5M377.7,287.5 377.4,286.9 376.8,286.6 376.3,286.1 375.7,285.9M368.9,281.1 369.3,280.7 369.6,280.3 369.4,279.7 369.9,279.4M368.9,281.1 369.0,282.0 368.6,282.7M368.6,282.7 368.6,283.7 369.5,284.0M527.3,250.1 527.8,249.8 528.5,249.9 528.7,249.4 529.0,248.8M529.5,245.4 530.2,246.2 530.2,247.2 529.7,248.2 529.0,248.8M529.1,241.1 529.1,241.7 529.5,242.1 530.1,242.3 530.3,242.9M529.5,245.4 529.5,244.7 529.6,244.0 529.7,243.3 530.3,242.9M531.5,259.1 531.7,258.5 531.8,258.0 531.9,257.3 532.5,257.1 533.2,257.1 533.8,257.3 534.1,256.8 534.6,256.4M532.0,253.2 532.5,253.7 532.9,254.2 533.4,254.7 533.8,255.4M534.6,256.4 533.9,256.1 533.8,255.4M529.0,248.8 529.6,248.8 530.1,249.2 530.7,249.5 531.3,249.6M531.3,249.6 531.2,250.2 530.7,250.5 530.9,251.1 531.4,251.4 531.3,252.0 531.0,252.5 531.6,252.7 532.0,253.2M537.2,258.8 536.6,258.1 535.7,257.8 535.3,257.0 534.6,256.4M525.3,264.5 526.0,264.8 526.7,264.9 527.4,265.3 527.9,265.8M527.9,265.8 528.9,266.2 529.6,265.4 530.5,265.1 530.8,264.2M530.8,260.8 531.1,261.6 531.4,262.5M530.8,264.2 531.1,263.9 531.2,263.4 531.0,262.9 531.4,262.5M523.1,264.4 523.7,264.3 524.2,264.3 524.7,264.8 525.3,264.5M527.9,269.0 528.3,268.3 528.4,267.4 528.5,266.5 527.9,265.8M531.5,259.1 531.2,259.5 530.6,259.7 530.8,260.3 530.8,260.8M524.6,177.0 523.7,177.1 523.8,178.1 523.6,178.7 523.0,179.1 522.3,179.5 521.8,178.8 521.3,178.2 520.6,178.2M518.6,168.9 518.1,169.2 517.8,169.7 517.3,170.1 517.5,170.7 517.5,171.3 517.4,171.9 516.8,172.2 516.8,172.8 517.0,173.5 517.6,173.9 517.4,174.6 517.1,175.2 516.6,175.5 516.3,176.0 516.2,176.7 515.5,177.0M520.6,178.2 519.9,178.3 519.3,178.2 518.9,177.4 518.1,177.5 517.5,177.3 516.9,177.0 516.2,176.9 515.5,177.0M465.3,223.7 465.0,222.9 464.7,222.1 464.9,221.2 465.1,220.3M465.1,220.3 465.3,219.7 465.0,219.2 465.0,218.5 464.4,218.2 464.2,217.5 464.3,216.8 464.0,215.9 463.1,216.3M461.0,216.0 461.7,215.6 462.2,215.1 462.4,215.8 463.1,216.3M465.2,227.0 466.5,226.7 466.3,225.4 465.9,224.5 465.3,223.7M459.9,213.7 460.0,214.6 459.4,215.4 460.1,215.8 461.0,216.0M466.1,214.2 465.8,214.7 465.6,215.2 465.0,215.4 464.4,215.0 464.6,215.7 464.3,216.3 463.7,216.2 463.1,216.3M367.5,196.0 367.4,195.4 367.3,194.9 366.9,194.5 366.7,194.0 366.4,193.4 366.5,192.8M373.1,196.6 372.6,196.8 372.3,197.3 371.7,197.3 371.1,197.2 370.6,197.2 370.0,197.2 369.6,197.5 369.1,197.8M510.8,426.9 510.5,427.4 510.6,427.9 511.0,428.3 510.9,428.8 511.3,429.4 511.4,430.1 510.7,430.1 510.1,430.6M511.3,434.0 511.8,434.2 512.3,434.0 512.8,433.9 513.2,433.6 513.7,433.5 514.2,433.4 514.5,433.0 514.8,432.7M514.6,421.0 515.3,420.9 516.1,420.8 516.0,420.0 516.6,419.4M530.2,432.1 529.6,431.9 529.2,432.2 528.7,432.0 528.1,432.2M525.3,432.6 526.0,432.2 526.7,432.4 527.5,432.7 528.1,432.2M519.4,442.0 518.9,442.5 518.9,443.2 519.1,443.7 519.1,444.4 519.7,444.7 520.3,444.7 520.8,445.0 521.4,445.1M521.4,445.1 520.7,445.1 520.1,445.2 519.6,445.7 519.0,445.8 518.8,446.4 518.9,447.0 518.7,447.5M512.5,451.2 513.1,450.7 513.8,450.3 514.3,450.2M519.8,439.3 520.0,440.2 519.3,440.6 519.2,441.3 519.4,442.0M523.9,444.8 523.2,445.0 522.6,444.6 522.0,444.9 521.4,445.1M508.8,407.0 508.8,406.3 508.5,405.5 508.2,404.7 508.5,403.9M508.8,407.0 509.4,407.5 509.8,408.1 510.2,408.8 509.9,409.5M509.9,409.5 510.2,410.4 510.8,411.1 511.7,411.7 512.6,411.0M505.9,399.8 506.4,400.6 506.3,401.6 505.5,401.9 504.7,402.3 504.1,401.6 503.2,401.7 502.9,402.6 501.9,402.5M505.9,399.8 506.2,400.5 506.9,401.0M506.9,401.0 506.8,402.0 506.6,403.0 507.4,403.9 508.5,403.9M489.7,410.0 489.8,409.0 490.6,408.5 491.3,407.7 490.9,406.7M489.7,417.9 488.7,418.2 488.0,418.9 488.1,419.8 488.3,420.8M489.7,417.9 490.2,418.1 490.7,417.9 491.2,417.9 491.7,418.0 492.0,417.5 492.4,417.2 493.0,417.3 493.5,417.1M493.5,417.1 494.2,417.6 495.1,417.7 495.9,417.3 496.8,417.3M487.5,414.9 487.7,415.6 488.4,415.9 489.0,415.5 489.7,415.6 489.7,416.2 489.6,416.7 489.7,417.3 489.7,417.9M484.7,422.8 484.6,421.9 485.5,422.1 486.0,422.0 486.4,421.6 487.0,422.0 487.6,421.7 488.0,421.2 488.3,420.8M487.7,412.3 488.9,412.1 490.1,412.4 490.9,411.0 489.7,410.0M487.7,412.3 487.7,413.3 488.6,413.7 488.1,414.3 487.5,414.9M463.2,394.3 463.4,393.5 463.0,392.8 462.9,392.1 462.6,391.4M472.8,408.5 473.3,407.7 472.9,406.8 473.4,406.1 474.0,405.5M469.4,401.7 470.1,401.9 470.5,402.5 471.1,403.3 471.9,402.7 472.5,403.0 473.1,403.4 474.0,403.9 474.5,403.0M474.0,405.5 474.1,404.9 474.2,404.2 474.2,403.6 474.5,403.0M516.6,419.4 516.1,418.9 516.3,418.3 516.3,417.7 516.3,417.1M463.2,394.3 463.3,395.0 463.2,395.7 462.9,396.3 463.1,397.0 463.0,397.9 462.1,398.0 461.5,398.4 460.8,398.4M457.0,396.9 457.5,397.1 457.7,397.7 458.2,397.9 458.7,398.1 459.3,398.3 459.7,398.8 460.2,398.6 460.8,398.4M404.8,395.5 403.9,396.3 404.5,397.2 403.8,397.7 402.9,397.9M397.9,397.6 398.1,398.3 398.7,398.9 399.5,398.4 400.4,398.6M400.4,398.6 401.1,399.0 401.8,398.9 402.5,398.6 402.9,397.9M412.1,381.9 412.5,382.2 412.9,382.4 413.4,382.5 413.8,382.9M391.6,359.4 391.1,359.5 390.6,359.4 390.0,359.9 389.5,359.4M392.7,363.9 393.1,363.3 393.9,363.1M523.9,402.0 523.5,402.4 523.2,402.9 523.0,403.4 522.9,404.0M522.9,404.0 522.1,404.6 521.4,405.2 521.3,406.1 521.3,407.1M512.6,411.0 513.2,411.5 513.9,411.2 514.0,412.0 514.6,412.3M514.6,412.3 515.3,411.7 516.0,411.4 516.5,410.6 517.4,410.4 518.3,411.0 519.1,410.4 520.0,410.2 520.8,410.0M521.3,407.1 521.5,407.8 521.4,408.6 520.9,409.2 520.8,410.0M514.4,414.5 514.6,413.9 514.4,413.4 514.6,412.9 514.6,412.3M514.4,414.5 514.7,415.4 515.6,415.6 516.4,416.1 516.3,417.1M522.7,410.4 522.3,410.1 521.8,410.0 521.3,410.1 520.8,410.0M521.0,393.9 521.3,394.6 522.0,394.9 522.7,395.4 523.5,395.0M523.9,402.0 524.0,401.2 524.8,401.3 525.1,400.9 525.6,400.6M567.1,411.0 566.5,411.4 565.7,411.7 564.9,411.7 564.3,412.3M564.3,412.3 563.6,412.7 562.9,413.0 562.2,413.3 561.4,413.4M561.4,413.4 561.0,414.0 560.4,414.1 560.1,414.7 559.9,415.2 559.3,415.0 559.1,414.3 558.5,414.2 557.8,414.2M528.4,418.2 528.8,418.9 529.3,419.4 529.7,420.1 529.6,420.9M529.6,420.9 530.1,422.2 531.4,421.6 531.9,422.4 531.6,423.4M535.7,420.0 535.2,420.6 534.5,420.7 534.4,421.5 533.7,421.8 533.5,422.5 533.2,423.2 533.4,423.8 533.5,424.5M533.5,424.5 533.1,424.1 532.7,423.8 532.4,422.9 531.6,423.4M527.7,415.2 527.5,416.0 528.0,416.7 528.1,417.5 528.4,418.2M538.9,419.1 538.5,420.0 537.5,420.1 536.6,420.2 535.7,420.0M533.9,426.3 533.4,425.9 532.7,425.7 533.1,425.1 533.5,424.5M537.9,343.2 538.0,342.7 538.0,342.2 537.5,341.9 537.3,341.3M537.1,363.8 536.1,363.6 535.2,363.0 534.6,363.9 533.6,364.3M533.6,364.3 532.7,364.6 531.8,364.6M533.1,369.4 533.0,368.8 533.0,368.1 533.5,367.5 533.0,366.9 532.7,366.0 531.8,366.1 531.6,365.3 531.8,364.6M559.9,367.9 559.1,367.4 558.4,366.9 557.6,367.3 556.8,367.8M559.9,367.9 560.5,367.6 561.0,367.4 561.6,367.4 562.2,367.5M553.6,367.1 554.6,366.8 555.1,367.7 556.0,367.5 556.8,367.8M538.8,350.3 537.7,350.5 537.1,349.5 536.2,349.8 535.7,350.6M538.8,350.3 539.5,350.8 539.0,351.5 539.6,351.8 540.1,352.1 540.5,352.5 540.8,352.9 541.2,353.4 541.5,353.8M539.5,357.7 540.1,357.3 539.9,356.6 540.3,356.3 540.5,355.8 540.5,355.1 540.4,354.5 540.7,353.8 541.5,353.8M538.8,350.3 539.2,349.5 540.0,349.3 540.0,348.5 540.0,347.7M540.0,347.7 540.4,347.0 540.7,346.2 540.0,345.8 539.4,345.1M537.9,343.2 538.2,344.1 537.8,344.9 538.6,345.4 539.4,345.1M535.7,350.6 534.9,350.7 534.2,350.7 533.5,350.5 532.8,350.6M547.1,365.7 546.1,365.6 545.5,364.7 544.5,364.6 543.6,365.0M543.6,365.0 543.0,365.0 542.4,364.8 541.8,364.5 541.2,364.8 540.6,364.4 540.7,363.7 540.3,363.2 539.7,362.8M539.7,362.8 539.7,362.2 540.1,361.7 540.3,361.0 539.6,360.7M549.3,366.9 548.5,367.3 548.0,366.6 547.6,366.2 547.1,365.7M549.3,366.9 549.8,367.2 550.4,367.1 550.9,367.3 551.4,367.3 552.0,367.3 552.5,367.5 553.0,367.2 553.6,367.1M537.1,363.8 538.1,363.9 538.8,364.4 539.3,363.6 539.7,362.8M539.5,357.7 540.2,358.3 540.6,359.1 540.5,360.2 539.6,360.7M541.5,353.8 542.3,353.6 543.1,353.6 543.8,354.3 544.8,353.8M573.0,374.7 573.5,375.2 574.1,375.6 574.4,376.3 574.8,376.9M574.8,376.9 575.3,377.4 575.8,377.9 576.6,377.9 577.2,378.4M579.0,378.0 578.2,378.5 577.2,378.4M576.0,383.1 576.1,382.3 575.4,381.8 574.5,381.2 575.1,380.3 575.9,380.2 576.4,379.6 577.1,379.1 577.2,378.4M524.2,308.0 524.8,307.5 524.5,306.8 525.0,306.5 525.5,306.1M519.0,310.9 518.3,311.4 517.4,311.5M515.4,313.0 516.1,312.8 516.4,312.2 516.8,311.6 517.4,311.5M547.3,296.6 546.4,296.8 546.5,297.7 545.9,297.8 545.3,298.0M544.2,303.4 544.0,302.9 544.3,302.4 543.9,302.0 543.6,301.6M543.6,301.6 544.3,301.1 543.9,300.5 544.0,299.8 543.5,299.4 543.9,298.9 544.1,298.4 544.6,297.9 545.3,298.0M543.6,301.6 543.1,301.7 542.5,301.6 542.2,302.1 541.7,302.4 541.2,302.2 540.7,302.3 540.2,302.0 539.8,301.7M531.3,294.2 531.7,295.1 532.6,295.4 532.0,296.2 532.2,297.2M507.0,302.6 506.7,302.2 506.1,302.1 505.7,302.3 505.1,302.5M505.1,302.5 504.4,302.4 503.9,301.9 504.1,301.1 503.8,300.4 503.2,300.2 502.9,299.5 502.6,299.0 502.3,298.4M502.3,298.4 502.4,298.3M505.1,302.5 504.9,303.1 504.4,303.6 504.5,304.4 503.7,304.6M502.3,298.4 501.4,298.4 501.1,299.3 501.6,299.9 501.8,300.7 501.3,301.0 500.7,301.1 500.1,301.3 499.5,301.1M517.5,293.4 516.6,292.7 515.9,293.7 515.2,294.4 515.7,295.3M513.9,290.1 514.4,289.5 515.1,289.0M513.9,290.1 513.4,290.8 513.6,291.7 512.7,291.5 511.9,291.9M516.2,290.4 515.8,290.0 516.0,289.5 515.6,289.2 515.1,289.0M502.4,298.3 501.9,298.0 501.5,297.7M515.1,334.5 515.2,333.7 514.7,333.1 514.1,332.5 513.3,332.3M515.1,334.5 515.0,335.3 515.2,336.1 515.9,336.3 516.6,336.6M518.0,319.8 518.7,320.0 519.1,320.7 519.6,321.1 520.4,321.0M522.6,321.7 522.0,321.8 521.5,321.4 520.9,321.3 520.4,321.0M527.6,324.5 527.0,324.0 526.4,323.4 525.8,322.9 524.9,322.8M524.9,322.8 524.2,323.2 523.4,323.0 523.1,322.2 522.6,321.7M515.3,318.3 516.0,318.9 516.8,318.8 517.6,319.2 518.0,319.8M509.7,324.1 510.1,324.7 510.1,325.4M537.4,317.0 537.3,317.9 538.0,318.3 538.5,318.8 538.9,319.0M537.4,317.0 536.9,316.2 536.1,315.7 536.3,314.8 536.5,313.9M536.5,313.9 536.6,313.4 536.4,312.9M533.1,315.3 533.7,314.5 534.7,314.2 535.6,314.4 536.5,313.9M532.2,324.9 532.2,324.0 531.8,323.3M531.3,320.8 530.1,321.2 530.1,322.3 530.8,323.2 531.8,323.3M531.8,325.8 532.1,325.4 532.2,324.9M536.5,310.6 537.2,310.1 537.9,309.7 538.1,308.9 537.9,308.1M536.4,312.9 536.6,312.7M536.6,312.6 536.8,312.4 536.7,311.7 536.7,311.1 536.5,310.6M540.4,306.8 539.8,307.2 539.4,307.9 538.6,307.8 537.9,308.1M536.6,302.3 537.3,301.8 538.2,301.9 538.9,301.5 539.8,301.7M548.6,352.7 548.2,353.2 547.6,353.2 547.0,353.4 546.4,353.3M552.8,352.9 552.3,352.6 551.8,352.3 551.2,352.2 550.7,352.6 550.2,353.0 549.7,352.7 549.1,352.8 548.6,352.7M544.8,353.8 545.5,353.3 546.4,353.3M355.0,355.4 354.8,354.8 354.7,354.1 354.0,353.7 353.5,353.9M354.4,334.3 354.5,334.1 354.8,333.6 355.2,333.2M357.0,331.9 356.6,332.2 356.1,332.4 355.7,332.8 355.2,333.2M355.3,296.2 355.0,296.9 354.3,296.8 354.0,297.3 353.6,297.8M351.8,299.1 352.3,298.9 352.9,298.8 353.0,298.1 353.6,297.8M343.9,294.8 344.0,294.3 344.0,293.7M342.2,292.3 342.4,292.9 342.8,293.4 343.4,293.6 344.0,293.7M367.5,335.5 367.7,334.9 368.3,334.7 368.8,334.4 369.3,334.4M369.0,330.8 368.7,331.7 368.2,332.6 368.5,333.6 369.5,334.1M369.5,334.1 369.3,334.4M367.5,335.5 367.0,335.8 367.0,336.4 366.4,336.5 366.2,337.1M361.0,304.3 360.9,305.2 361.8,305.5 361.2,306.1 361.4,306.8M361.4,306.8 361.4,307.4 361.1,308.0 361.1,308.6 361.3,309.1M355.8,306.4 356.0,307.2 356.5,307.8M355.8,306.4 355.1,306.3 354.4,306.5 354.2,305.8 353.6,305.4M347.9,297.6 347.5,298.1 347.8,298.6 347.7,299.1 347.6,299.6M434.8,380.7 435.1,381.5 435.0,382.3 434.4,383.0 434.4,383.8M434.8,380.7 435.4,380.8 435.9,380.8 436.6,380.6 436.6,380.0M436.6,380.0 437.5,379.8 438.4,380.3 438.5,381.6 439.8,381.4M441.9,381.7 441.4,381.9 440.9,381.8 440.4,381.4 439.8,381.4M443.0,380.3 442.6,379.8 442.8,379.2 442.4,378.8 442.5,378.2 442.9,377.6 442.3,377.1 442.3,376.6 441.9,376.2M428.4,382.5 429.0,383.0 429.1,383.8 429.9,383.6 430.6,383.6 431.0,384.1 431.0,384.8 431.5,385.3 431.3,386.0M428.4,382.5 428.2,381.5 427.2,381.4M433.3,385.8 432.9,385.2 432.2,385.1 431.8,385.6 431.3,386.0M433.3,385.8 433.5,385.2 433.5,384.6 434.1,384.3 434.4,383.8M428.4,382.5 427.9,382.6 427.5,382.8 427.3,383.2 426.9,383.5 426.3,383.4 425.8,383.5 425.9,384.2 425.3,384.5M425.3,384.5 424.8,384.2 424.6,383.7 424.1,383.4 423.5,383.5M423.5,383.5 423.5,382.7 423.6,381.9 423.8,381.1 423.8,380.3M427.2,381.4 427.2,380.8 426.5,380.8 426.1,380.5 425.8,380.1 425.2,380.0 424.8,379.7 424.2,379.9 423.8,380.3M423.8,380.3 423.8,380.3M423.8,380.3 424.8,379.8 425.4,378.8 425.5,377.5 424.4,376.9M424.4,376.9 424.7,376.1 425.4,375.7M425.4,375.7 425.7,375.1 426.4,375.1 427.0,375.2 427.5,375.0M425.6,341.7 425.3,340.8 425.6,340.0 425.1,339.2 425.3,338.3M431.3,330.5 430.7,330.8 430.2,331.1 429.6,331.3 429.0,331.3M428.9,345.3 429.5,345.9 430.4,346.1 430.9,346.8 431.9,346.8M434.4,367.1 434.1,366.3 433.3,366.1 432.8,366.6 432.2,367.1 431.6,367.2 431.1,367.2 430.5,367.1 430.0,366.9M434.4,367.1 435.2,366.9 436.0,367.1 436.7,367.6 437.5,367.9M429.0,372.6 429.3,371.4 428.1,371.0 428.6,370.3 429.1,369.5M430.0,366.9 430.0,367.6 429.6,368.2 429.3,368.8 429.1,369.5M427.5,375.0 427.5,374.2 427.7,373.5 428.3,373.0 429.0,372.6M445.9,374.4 445.4,374.4 444.9,374.5 444.4,374.7 444.0,375.0 443.5,374.9 443.1,374.5 442.7,374.3 442.3,374.1M442.3,374.1 441.8,373.5 441.9,372.8 441.6,372.0 442.1,371.4 442.1,370.7 442.0,370.0 441.9,369.3 441.8,368.7M441.8,368.7 442.6,368.0 442.1,367.1 442.8,366.8 443.6,366.6M448.9,374.8 448.0,375.0 447.4,374.2 446.7,374.6 445.9,374.4M441.9,376.2 442.0,375.6 442.0,375.1 442.3,374.7 442.3,374.1M437.5,367.9 437.5,368.8 437.7,369.6 438.5,369.4 439.4,369.5 440.1,369.2 440.4,368.4 441.1,368.5 441.8,368.7M428.0,362.2 427.9,361.1 427.4,360.2 428.4,359.8 429.4,359.7M428.0,362.2 428.4,362.7 428.9,363.2 429.3,363.7 429.6,364.3 429.3,364.9 429.1,365.7 429.4,366.4 430.0,366.9M430.9,359.2 430.0,359.0 429.4,359.7M430.9,359.2 431.5,359.1 431.8,358.5 432.4,358.7 432.9,358.3M436.4,353.2 436.0,353.8 435.7,354.6 435.4,355.4 435.1,356.1M432.9,358.3 433.6,358.0 434.2,357.4 434.5,356.7 435.1,356.1M415.9,348.5 416.6,348.3 417.3,348.3 418.0,348.4 418.5,349.0M415.9,348.5 415.3,348.4 414.8,348.1 414.5,347.5 414.0,347.3M414.0,347.3 414.1,346.6 414.0,346.0 414.2,345.4 414.7,345.0M415.4,343.2 415.1,343.6 414.6,343.9 415.0,344.4 414.7,345.0M411.5,347.8 412.2,347.8 412.9,348.0 413.2,347.3 414.0,347.3M420.0,350.6 419.8,350.1 419.3,349.8 418.9,349.3 418.5,349.0M422.0,341.7 421.4,341.0 420.6,341.1 419.9,340.6 419.1,340.9M416.7,341.5 417.4,341.3 418.0,341.7 418.6,341.3 419.1,340.9M416.7,341.5 416.5,342.0 416.3,342.6 415.9,342.9 415.4,343.2M420.4,325.7 419.9,325.1 419.4,324.5M408.7,329.5 409.4,329.6 409.8,330.3 410.4,330.8 411.1,330.4M408.7,329.5 409.8,329.4 410.8,329.0 409.5,328.4 409.9,327.0M411.1,330.4 411.7,330.7 412.4,330.8 413.1,330.9 413.8,331.2M414.2,321.8 414.1,321.1 413.9,320.4 414.6,320.3 415.2,319.7M411.0,321.4 410.9,320.7 411.0,320.1 411.0,319.4 411.0,318.8M416.1,332.5 415.7,331.9 415.2,331.3 414.5,331.4 413.8,331.2M472.2,379.1 471.4,379.8 471.1,380.8 470.1,380.5 469.0,380.5M469.0,380.5 468.4,380.7 468.1,381.3 467.8,382.0 467.1,381.9 466.4,381.8 466.0,381.4 465.4,381.0 464.8,381.1M465.7,375.9 465.4,376.8 466.0,377.6 465.4,378.2 465.0,379.0M464.8,381.1 464.9,380.6 465.0,380.1 464.9,379.5 465.0,379.0M474.8,379.6 474.2,379.4 473.5,379.3 472.9,379.1 472.2,379.1M464.7,373.4 465.7,373.4 466.2,374.2 465.7,375.0 465.7,375.9M463.9,382.5 464.0,381.6 464.8,381.1M487.8,347.3 487.3,347.6 486.8,347.8 486.3,347.4 485.7,347.4 485.3,346.9 485.3,346.3 484.8,346.1 484.2,345.9M480.7,345.3 481.6,344.7 482.6,344.9 483.4,345.4 484.2,345.9M493.1,346.7 492.6,346.7 492.1,346.5 491.5,346.6 491.3,347.2M491.3,347.2 490.4,347.3 489.6,347.6 488.6,347.8 487.8,347.3M475.9,350.4 475.4,350.1 475.1,349.5 475.4,349.0 475.7,348.5 475.5,348.0 475.8,347.6 475.9,347.1 476.2,346.7M476.2,346.7 476.2,346.2 476.4,345.7 476.7,345.2 476.5,344.7M476.5,344.7 477.1,345.0 477.7,345.0 478.1,344.4 478.7,344.3 479.4,344.2 480.1,344.0 480.4,344.6 480.7,345.3M486.1,336.0 486.2,336.9 485.7,337.6 485.0,338.0 484.4,338.6M481.9,339.7 482.7,339.4 482.9,338.6 483.6,338.4 484.4,338.6M496.4,337.7 497.1,338.2 497.1,339.0 497.1,339.7 497.3,340.5M499.2,342.5 498.6,341.7 497.6,342.1 497.8,341.2 497.3,340.5M476.5,344.7 476.5,344.0 476.7,343.5 477.1,342.9 477.7,342.8 478.1,342.3 478.5,341.8 478.4,341.2 478.3,340.6M478.3,340.6 478.4,340.0 478.8,339.6 479.4,339.6 479.9,339.3 480.3,339.8 480.9,339.8 481.4,340.0 481.9,339.7M515.3,318.3 514.7,318.9 513.9,319.4 513.1,319.0 512.6,318.3M515.4,313.0 514.9,313.6 514.3,314.2 513.4,314.1 512.7,313.6M512.7,313.6 512.0,313.7 511.6,314.2 510.8,314.2 510.4,314.9M510.4,314.9 511.0,315.2 511.0,315.8 511.3,316.2 511.7,316.5 512.0,316.9 512.5,317.2 512.5,317.7 512.6,318.3M511.5,318.6 512.0,318.4 512.6,318.3M509.7,324.1 509.1,323.7 508.4,323.3 508.5,322.6 508.7,321.9M511.5,318.6 511.0,319.1 510.4,319.1 509.8,319.3 509.4,319.8M508.7,321.9 509.1,321.4 508.8,320.8 509.2,320.4 509.4,319.8M499.5,301.1 499.1,300.7 498.5,300.7 498.1,301.0 497.6,301.1M504.4,306.3 504.1,305.9 503.7,305.6 503.6,305.1 503.7,304.6M504.8,345.0 505.2,345.9 506.3,345.9 507.1,346.3 507.9,346.4M507.9,346.4 508.3,345.9 508.6,345.4 509.1,345.1 509.3,344.6 509.5,344.0 509.9,343.6 510.4,343.3 510.8,342.9M508.0,346.5 507.9,346.4M508.0,346.5 508.0,347.2 508.5,347.6 507.7,347.8 507.9,348.6 508.3,349.0 508.3,349.6 507.9,350.1 507.6,350.6M503.0,344.9 503.9,344.7 504.8,345.0M513.7,340.5 513.2,340.8 513.0,341.2 512.6,341.5 512.2,341.6 512.0,342.1 511.6,342.4 511.1,342.5 510.8,342.9M508.0,346.5 508.6,346.3 509.1,346.7 509.8,346.8 510.0,347.4 510.6,347.4 511.0,347.8 511.6,348.0 511.9,348.5M476.9,329.5 476.7,330.0 476.9,330.6 476.9,331.2 477.2,331.7 476.9,332.2 476.7,332.8 476.1,332.8 475.5,333.2M475.5,333.2 476.1,333.8 475.8,334.7M486.5,332.3 486.7,332.9 486.6,333.4 486.3,333.9 485.7,334.1 486.0,334.6 485.7,335.1 485.9,335.5 486.1,336.0M478.3,340.6 478.1,340.0 477.9,339.3 478.5,338.8 478.7,338.1 478.0,337.9 477.4,337.9 476.9,337.4 476.3,337.1M476.3,337.1 476.4,336.4 475.9,335.9 475.5,335.3 475.8,334.7M472.5,312.1 472.8,311.6 472.9,311.0 472.6,310.5 472.4,309.9M472.5,312.1 471.7,312.8 472.5,313.6M472.5,313.6 472.5,314.5 471.9,315.3 471.1,315.9 470.1,315.8M487.7,330.1 488.4,329.6 489.1,329.2 489.8,328.8 490.6,329.2M487.7,330.1 487.0,330.2 486.7,330.9 486.3,331.6 486.5,332.3M496.4,337.7 497.1,337.0 497.6,336.3 497.2,335.4 496.6,334.7M492.4,325.6 491.8,325.6 491.2,325.4 491.3,324.6 490.7,324.2M492.4,325.6 492.6,326.5 493.4,327.1M493.4,327.1 492.7,327.8 492.6,328.8 491.5,328.7 490.6,329.2M445.0,109.0 444.0,108.8 443.2,109.5 442.2,109.4 441.3,109.7 440.8,108.8 440.0,108.2 439.3,107.5 438.9,106.6M445.0,109.0 445.2,109.7 444.8,110.4 444.0,110.6 443.8,111.4 443.4,112.0 443.6,112.7 442.9,113.1 443.0,114.0M435.2,107.5 435.4,108.1 436.1,108.2 436.6,107.7 437.3,108.1 437.5,107.5 438.1,107.3 438.7,107.2 438.9,106.6M446.1,107.3 446.0,107.9 445.5,108.1 445.0,108.4 445.0,109.0M433.2,108.7 433.7,108.3 434.4,108.5 434.8,108.0 435.2,107.5M449.0,117.3 449.4,117.7 449.6,118.3 450.2,118.6 450.5,119.2M449.0,117.3 448.8,116.7 448.1,116.5 447.6,116.7 447.1,117.1 446.7,117.4 446.1,117.4 445.5,117.3 445.2,116.9M450.5,119.2 450.7,119.8 450.6,120.4 450.9,120.9 451.2,121.4 451.1,122.0 451.0,122.6 450.5,123.0 450.7,123.7M443.0,114.0 443.3,114.3 443.5,114.7 443.9,115.0 444.0,115.5 444.3,115.8 444.6,116.2 445.1,116.3 445.2,116.9M451.2,126.6 451.1,125.8 450.3,125.3 450.8,124.6 450.7,123.7M452.6,141.2 453.7,141.3 453.9,142.4 454.3,143.2 454.5,144.0 455.5,143.8 456.4,143.5 456.3,142.5 457.0,141.7M457.0,141.7 457.7,141.9 458.4,142.0 459.2,142.0 459.8,142.5M450.4,139.8 451.0,140.0 451.6,140.3 451.8,141.2 452.6,141.2M461.4,144.0 460.9,143.7 460.4,143.4 460.1,142.9 459.8,142.5M466.0,156.2 465.9,155.6 465.3,155.5 465.2,154.8 464.5,154.8 463.9,155.1 463.3,155.0 463.1,154.3 462.6,153.9M462.5,147.4 462.1,148.2 462.2,149.1 461.2,149.0 460.5,149.7 461.5,150.1 461.6,151.2 461.2,152.0 460.8,152.8M462.6,153.9 462.1,153.8 461.5,153.6 461.3,153.0 460.8,152.8M461.4,144.0 462.0,144.7 462.2,145.6 462.9,146.4 462.5,147.4M456.6,152.7 457.5,153.0 457.3,153.9 458.0,153.9 458.7,153.9 458.9,153.2 459.4,152.8 460.1,153.0 460.8,152.8M473.6,159.5 472.7,159.1 472.0,159.9 471.1,160.0 470.4,159.4M466.0,156.2 466.7,156.5 467.1,157.2 468.0,157.4 468.0,158.4M470.4,159.4 469.7,159.3 469.0,159.5 468.7,158.8 468.0,158.4M464.7,162.5 464.9,161.8 464.8,161.0 465.6,160.9 466.1,160.3 466.7,159.8 467.5,159.8 467.6,159.0 468.0,158.4M453.3,153.4 454.0,152.8 454.9,153.1 455.8,152.8 456.6,152.7M453.3,153.4 452.5,152.8 451.5,152.5 450.8,153.1 450.2,153.9M507.1,127.4 507.4,126.5 506.6,126.1 507.1,125.6 507.5,125.1 507.5,124.4 507.8,123.8 507.4,123.3 507.0,122.8M507.1,127.4 507.4,127.9 507.6,128.5 507.9,129.1 508.2,129.7 507.9,130.4 508.2,131.0 507.5,131.5 507.8,132.3M510.5,134.6 510.3,133.4 510.2,132.2 509.0,132.1 507.8,132.3M512.7,138.4 512.2,138.1 511.7,137.7 511.1,137.4 510.6,137.1 510.8,136.4 511.3,135.8 511.4,134.9 510.5,134.6M505.2,118.6 505.2,118.9 505.4,119.6 505.8,120.4 506.7,120.3 506.5,120.9 506.9,121.5 506.8,122.2 507.0,122.8M505.0,135.0 505.0,135.6 505.1,136.1 505.6,136.5 505.6,137.1 505.0,137.3 504.7,137.9 504.6,138.6 504.7,139.2M505.0,135.0 505.5,134.8 505.4,134.1 505.9,133.8 506.3,133.6 506.5,132.9 507.1,133.0 507.5,132.7 507.8,132.3M504.6,118.5 504.5,118.5 503.9,119.1 502.8,118.4 502.5,119.7 501.6,119.5 500.7,119.7 500.4,120.6 499.8,121.3M379.9,160.7 380.4,160.6 381.0,160.8 381.4,160.5 381.9,160.2 381.8,160.8 382.5,161.0 382.9,161.4 383.4,161.6M385.0,160.1 384.7,159.1 384.8,158.1 385.8,157.8 386.6,157.3 386.4,156.5 385.9,155.8 385.7,155.0 385.5,154.2M385.0,160.1 384.8,160.7 384.4,161.1 383.9,161.2 383.4,161.6M385.6,152.6 385.7,153.4 385.5,154.2M379.2,161.0 379.9,160.7M393.1,157.6 391.8,157.7 391.7,156.5 390.9,155.8 390.0,155.8M390.0,155.8 389.3,155.8 388.7,155.8 387.9,155.1 387.4,155.9 387.0,155.4 386.6,154.8 386.1,154.4 385.5,154.2M386.3,149.6 386.3,150.7 385.2,150.9 385.6,151.7 385.6,152.6M401.9,156.0 401.0,156.1 400.4,156.9 399.8,157.5 399.1,157.9M401.9,156.0 402.4,155.5 403.1,155.4 402.7,154.7 403.1,154.1 403.0,153.5 403.2,152.9 403.3,152.3 403.5,151.8M402.8,149.9 402.9,150.4 403.2,150.8 403.3,151.3 403.5,151.8M397.1,158.9 397.6,158.7 398.1,158.4 398.6,158.1 399.1,157.9M407.7,151.9 407.0,151.7 406.7,151.0 406.2,151.3 405.6,151.6 405.3,152.2 404.6,152.3 404.1,152.0 403.5,151.8M403.4,146.8 403.1,147.6 403.1,148.4 402.5,149.0 402.8,149.9M433.2,202.1 434.1,202.1 434.8,202.8 435.5,202.4 436.1,201.7 436.8,202.0 437.6,202.2 438.1,202.8 438.3,203.6M433.2,202.1 433.4,203.2 432.5,203.8 432.5,204.7 432.4,205.5M432.4,205.5 432.4,206.1 432.4,206.7 432.5,207.3 433.0,207.7 433.4,208.2 433.4,208.9 432.8,209.2 432.6,209.9M432.6,209.9 432.9,210.4 433.0,210.8 433.0,211.4 432.9,211.9M433.6,215.1 434.3,214.3 434.3,213.3 433.7,212.4 432.9,211.9M442.7,204.0 442.2,204.3 441.6,204.2 441.1,204.7 440.5,204.5 439.8,204.5 439.4,204.0 438.8,203.8 438.3,203.6M433.2,202.1 433.4,201.6 433.4,201.1 433.5,200.5 433.4,200.0M436.5,194.6 436.8,195.4 436.0,195.9 435.4,196.4 434.7,196.5M433.4,200.0 433.3,199.5 433.4,199.0 433.4,198.4 433.3,198.0 433.6,197.5 433.9,197.2 434.3,196.8 434.7,196.5M417.2,212.5 416.2,212.4 415.7,213.4 414.8,213.4 414.0,213.4M417.2,212.5 417.1,213.2 416.8,213.9 417.2,214.6 417.8,215.1 417.9,215.7 417.9,216.4 418.3,217.0 418.6,217.6M418.6,217.6 418.0,218.1 417.6,218.8 417.1,219.5 417.0,220.3M414.8,221.4 415.3,221.0 415.9,220.9 416.3,220.3 417.0,220.3M411.3,212.8 411.8,213.3 412.6,213.5 413.3,213.5 414.0,213.4M413.0,222.9 413.6,222.5 413.6,221.8 414.2,221.4 414.8,221.4M411.8,225.6 411.9,224.9 412.3,224.2 412.4,223.4 413.0,222.9M424.7,212.2 425.3,212.0 425.7,212.4 426.2,212.1 426.7,212.4 427.3,212.5 427.8,212.6 428.3,212.5 428.7,212.0M424.7,212.2 424.3,212.0 423.9,211.6 423.4,212.0 422.9,211.8 422.6,211.4 422.2,211.1 421.8,210.9 421.3,210.6M432.9,211.9 432.3,212.0 431.8,212.3 431.3,211.9 430.8,211.7 430.3,212.0 429.7,211.8 429.2,211.6 428.7,212.0M419.0,210.2 418.5,210.8 418.5,211.6 417.6,211.8 417.2,212.5M419.0,210.2 419.6,210.1 420.3,210.0 420.7,210.5 421.3,210.6M385.6,229.9 385.4,230.7 384.8,231.2 384.6,232.0 383.7,232.3M385.6,229.9 386.3,229.6 387.1,229.5 388.0,229.4 388.4,228.6M382.5,234.5 382.6,233.9 382.9,233.3 383.4,232.9 383.7,232.3M391.5,228.0 390.7,228.1 389.9,228.4 389.2,228.6 388.4,228.6M391.5,228.0 392.2,227.4 393.0,227.9 393.8,227.7 394.6,227.9M380.5,213.3 380.2,212.8 379.6,212.6 379.0,212.9 378.4,212.8M376.3,213.3 376.6,212.6 377.2,212.3 377.7,212.9 378.4,212.8M373.3,214.1 373.4,214.2 373.8,214.7 374.5,214.5 375.3,214.6 376.0,214.8 376.4,214.1 376.3,213.3M377.6,220.1 378.0,219.8 378.5,219.6 379.1,219.4 379.1,218.8M414.5,178.4 415.0,177.5 415.8,176.9 416.7,177.2 417.6,177.4M417.6,177.4 418.6,177.0 419.5,176.4 420.5,176.7 421.1,177.6M427.4,177.4 426.6,177.1 425.8,177.6 424.9,177.3 424.2,177.9M421.1,177.6 421.8,178.3 422.6,178.7 423.4,178.4 424.2,177.9M400.4,195.9 400.4,195.4 400.5,195.0 400.5,194.5 400.7,194.0 401.2,193.9 401.4,193.4 401.5,192.9 401.7,192.5M401.7,192.5 402.2,191.7 403.0,191.3 403.5,190.5 403.4,189.6M407.4,196.6 406.8,195.7 406.4,194.7 407.6,194.7 408.2,193.7M399.3,197.5 399.5,197.1 399.8,196.7 400.1,196.3 400.4,195.9M405.5,187.7 404.9,188.2 404.6,188.8 404.1,189.3 403.4,189.6M408.8,186.5 408.8,187.1 409.0,187.7 408.8,188.3 409.0,188.9 409.7,188.7 410.3,188.9 411.1,188.9 411.2,189.8M411.8,192.0 411.6,191.4 411.4,190.9 411.2,190.4 411.2,189.8M411.8,192.0 411.7,192.6 411.4,193.1 410.9,193.4 410.5,193.9 409.9,193.7 409.3,193.7 408.8,194.0 408.2,193.7M445.0,187.0 444.9,187.5 444.7,188.1 444.1,188.3 443.5,188.3 443.1,188.6 442.6,188.8 442.3,189.2 441.9,189.5M441.9,189.5 441.2,189.5 440.9,190.2 440.3,190.5 439.7,190.4 439.3,190.9 438.7,191.1 438.2,191.4 437.6,191.5M437.6,191.5 436.7,191.8 436.5,190.9 435.9,190.6 435.5,190.1M430.6,185.0 431.2,185.5 431.7,186.2 432.2,186.9 432.2,187.7M432.2,187.7 432.8,187.7 433.2,188.0 433.7,188.3 434.0,188.7 434.5,189.0 434.7,189.5 435.1,189.9 435.5,190.1M448.1,185.5 447.3,186.2 447.0,187.2 446.0,186.7 445.0,187.0M436.5,194.6 436.5,193.6 436.3,192.7 436.9,192.1 437.6,191.5M552.5,102.2 551.6,102.6 550.7,102.3 550.3,103.1 550.1,104.0 549.9,104.7 549.6,105.5 550.1,106.2 549.8,107.0M549.8,107.0 549.7,108.0 549.4,108.9 549.6,110.1 548.5,110.7 547.6,110.1 546.5,110.5 545.7,109.9 544.8,109.4M586.9,102.8 587.2,102.6 587.6,102.1 588.1,101.8 588.2,101.7M544.8,109.4 544.3,110.2 543.7,110.8 542.9,111.2 542.2,111.7M524.5,111.9 524.5,111.2M589.1,272.2 589.2,271.7 588.8,271.3 589.0,270.8 589.1,270.3 589.0,269.8 588.8,269.3 588.3,269.0 588.6,268.4M588.6,268.4 589.1,267.6 589.9,267.3M589.9,267.3 590.5,267.7 591.1,267.4 591.7,267.0 591.7,266.4 591.9,265.9 591.7,265.3 591.4,264.7 592.0,264.4M589.8,276.1 589.5,275.6 589.5,275.0 590.0,274.7 590.2,274.1 589.7,273.8 589.2,273.4 589.6,272.8 589.1,272.2M593.5,279.4 593.7,278.6 594.5,278.1 595.1,278.8 596.0,278.7M583.8,270.5 584.5,270.4 585.2,270.3 585.4,269.6 586.1,269.2 586.9,269.4 587.3,268.7 587.9,268.1 588.6,268.4M590.9,260.7 591.2,261.2 591.4,261.6 591.4,262.1 591.3,262.6 591.6,263.0 591.9,263.4 591.5,263.9 592.0,264.4M604.2,269.4 604.2,269.9 604.3,270.4 603.9,270.7 603.6,271.1 603.1,271.3 603.1,271.9 603.2,272.3 603.1,272.8M598.5,278.5 599.1,278.7 599.6,278.7 600.1,278.8 600.6,279.0 601.0,278.6 601.5,278.3 601.8,277.8 602.4,277.7M604.8,278.0 604.2,278.4 603.6,278.4 602.9,278.3 602.4,277.7M606.8,279.0 606.6,279.0 606.5,278.7M606.2,278.4 605.9,278.3 605.4,277.9 604.8,278.0M596.0,278.7 596.7,278.8 597.2,278.4 597.9,278.2 598.5,278.5M603.1,272.8 602.8,273.5 602.3,274.1 601.6,274.4 601.2,275.1 602.5,274.8 603.2,275.8 602.9,276.8 602.4,277.7M523.8,302.4 524.3,302.6 524.8,302.7 525.0,303.2 525.4,303.5 525.8,304.0 526.4,304.2 526.0,304.7 526.2,305.3M526.2,305.3 526.0,305.8 525.5,306.1M521.9,279.2 521.4,279.7 520.7,279.6 520.0,279.5 519.7,278.8M523.9,279.2 523.4,279.2 522.9,279.3 522.4,279.1 521.9,279.2M515.1,289.0 515.4,288.1 516.1,287.6 515.9,286.8 515.7,286.0M515.7,283.4 516.0,284.0 516.2,284.7 516.0,285.3 515.7,286.0M499.7,295.8 500.3,296.2 500.3,297.0 501.0,297.1 501.5,297.7M499.7,295.8 499.5,295.1 499.5,294.3 499.1,293.7 498.4,293.3M511.9,291.9 511.4,291.8 510.9,291.9 510.4,292.1 509.8,291.8M509.8,291.8 509.0,291.6 508.1,291.6 507.8,290.8 507.6,289.9M507.6,289.9 506.9,289.4 506.0,289.5 505.3,289.1 504.5,288.9M498.1,290.9 497.5,290.6 497.7,290.0 497.9,289.5 497.9,289.0 497.8,288.5 498.0,287.9 498.5,287.7 498.6,287.2M498.1,290.9 498.4,291.5 498.4,292.1 498.4,292.7 498.4,293.3M504.5,288.9 503.9,288.8 503.3,288.4 502.8,288.1 502.4,287.6M502.4,287.6 501.8,287.9 501.3,287.5 500.6,287.6 500.4,286.9M498.6,287.2 499.1,286.9 499.5,286.4 499.8,286.9 500.4,286.9M495.0,313.8 495.7,313.3 496.0,312.6 496.7,312.7 497.5,312.6M497.5,312.6 498.2,312.6 498.9,312.5 499.6,312.4 500.2,312.2M492.8,314.6 493.3,314.0 494.0,314.3 494.6,314.2 495.0,313.8M492.8,314.6 492.4,314.4 492.1,314.0 491.6,313.8 491.4,313.3M502.1,312.0 501.5,312.4 501.3,313.1 501.0,312.3 500.2,312.2M495.3,286.3 496.1,286.5 497.0,286.5 497.9,286.8 498.6,287.2M495.3,286.3 494.3,286.0 493.6,286.7M493.6,286.7 493.2,287.5 492.5,288.1M486.5,282.1 487.0,282.4 487.7,282.4 488.0,282.9 488.5,283.3M489.5,277.6 489.1,278.4 489.5,279.1 490.4,279.2 490.6,280.2M490.6,280.2 489.7,280.5 488.8,281.0 489.8,281.4 490.0,282.5M488.5,283.3 489.4,283.2 490.0,282.5M495.0,263.1 495.4,262.5 495.2,261.8 495.7,261.3 496.1,260.8M496.1,260.8 496.3,260.1 496.7,259.5M484.8,280.7 484.9,281.4 485.5,281.6 485.8,282.3 486.5,282.1M484.8,280.7 484.4,280.2 483.8,279.8 483.4,279.2 482.9,278.7M489.5,277.6 489.8,276.8 489.7,276.0M362.4,247.4 362.1,248.1 362.1,248.9 361.4,248.3 360.6,248.7M360.6,248.7 360.0,248.2 360.2,247.5 359.6,247.3 359.2,246.7M358.1,246.5 358.6,246.8 359.2,246.7M343.6,265.0 344.1,265.0 344.5,265.1 345.0,264.8 345.4,264.6 345.8,264.8 346.3,264.7 346.7,264.4 347.2,264.5M368.3,328.6 368.4,329.3 369.0,329.6 369.1,330.2 369.0,330.8M369.5,334.1 370.1,334.8 371.0,334.7 371.7,334.2 372.4,333.8M428.8,307.6 429.4,308.1 429.7,308.8 429.6,309.6 429.8,310.3M429.8,310.3 430.1,310.9 430.3,311.4 430.8,312.1 430.2,312.7M428.4,304.8 428.4,305.6 428.3,306.3 428.9,306.8 428.8,307.6M426.8,305.0 426.1,305.4 425.4,305.4 424.6,305.7 423.8,305.4M429.0,304.5 429.3,303.8 430.1,303.8 430.6,304.2 430.9,304.8 431.4,304.9 431.8,305.0 432.3,305.3 432.7,305.4M433.6,318.7 433.1,318.2 432.7,317.6 432.8,316.7 432.0,316.4M432.0,316.4 431.6,315.9 431.8,315.3 431.3,315.1 430.7,315.1M430.7,315.1 429.9,315.6 429.7,316.5 428.9,316.3 428.1,316.0M415.8,282.1 416.3,281.8 416.7,282.3 417.1,282.4 417.5,282.8M419.0,287.6 418.6,288.2 418.3,288.7 417.6,289.0 417.1,289.4M423.8,305.4 423.2,305.6 422.7,306.0 422.1,305.8 421.4,305.7M428.0,295.0 428.9,294.7 429.8,295.1 430.7,294.9 431.5,294.8M454.6,314.2 454.1,313.3 453.1,313.3M459.8,312.1 460.2,311.7 460.8,311.7 461.2,312.0 461.7,312.4M463.7,314.1 463.3,313.5 462.7,313.2 462.3,312.6 461.7,312.4M455.0,318.6 455.5,319.0 455.7,319.7 455.9,320.4 455.7,321.0M455.0,318.6 454.7,317.6 454.5,316.7 455.0,316.0 455.4,315.1M455.4,315.1 456.2,315.8 457.2,315.8 457.3,316.8 456.7,317.6 457.2,318.2 458.0,318.2 458.8,318.0 459.4,317.6M455.4,315.1 455.1,314.5 454.6,314.2M459.4,317.6 460.4,317.2 461.0,316.4 461.7,317.1 461.8,318.2M463.7,314.1 463.5,314.7 463.9,315.1 464.0,315.7 464.5,316.0 463.9,316.2 463.5,316.7 463.5,317.4 463.8,317.9M461.8,318.2 462.3,318.1 462.8,318.0 463.3,317.9 463.8,317.9M454.0,324.2 453.3,323.8 452.7,324.3 452.0,324.7 452.0,325.5M452.0,325.5 451.4,325.9 450.8,326.4 450.2,326.7 449.5,327.1M455.5,322.6 455.1,322.9 454.9,323.5 454.5,323.9 454.0,324.2M455.5,322.6 456.4,321.9 455.7,321.0M448.0,330.7 448.1,330.1 448.4,329.5 448.1,328.9 447.7,328.4 447.6,327.7 448.3,327.4 449.0,327.4 449.5,327.1M453.1,313.3 452.7,313.2 452.4,312.9 451.9,312.9 451.4,312.6M439.1,306.0 438.6,305.7 438.1,305.8M441.4,310.9 441.2,311.4 441.0,311.9 440.6,312.4 440.4,312.8M430.7,315.1 430.1,314.7 430.2,314.0 430.5,313.3 430.2,312.7M441.4,310.9 442.1,311.2 442.8,311.0 443.8,311.0 444.0,310.1M444.0,310.1 444.7,310.3 445.3,310.5 446.1,310.7 446.2,311.5M440.4,312.8 440.6,313.4 440.9,314.0 441.0,314.7 440.6,315.2M451.4,312.6 450.7,312.4 450.3,311.8 449.6,312.1 448.9,312.0M448.9,312.0 448.2,312.2 447.5,311.8 446.9,311.7 446.2,311.5M439.1,306.0 439.7,306.0 440.2,305.7M431.5,294.8 432.0,294.2 432.7,294.1 433.2,293.7 433.9,293.4M433.9,293.4 434.1,294.1 434.9,294.2 435.4,294.6 436.1,294.7M436.1,294.7 436.9,295.0 437.7,295.3 438.0,296.2 438.9,296.5M452.2,241.0 453.1,241.5 454.1,241.6 455.1,242.2 454.8,243.4M454.8,243.4 454.9,243.9 455.2,244.3 455.6,244.7 456.2,244.7M468.0,243.9 468.0,244.7 467.2,244.7 466.6,245.0 466.1,245.2M373.0,247.7 373.7,247.1M373.7,247.1 374.4,247.0 375.1,247.1M374.5,249.7 374.2,248.9 374.9,248.5M375.1,247.1 375.0,247.8 374.9,248.5M387.8,260.2 387.8,260.6 387.8,261.1M387.8,261.1 388.1,261.5 388.6,261.7 389.0,262.0 389.3,262.4M389.3,262.4 389.8,262.1 390.1,261.5 390.6,261.3 391.1,261.1M393.0,261.1 392.5,261.2 392.0,261.3 391.6,261.1 391.1,261.1M389.0,263.2 389.3,262.4M383.9,262.6 384.6,262.6 385.0,262.1M385.6,261.9 385.0,262.1M379.4,252.2 379.2,252.6 379.3,253.1 379.1,253.6 379.3,254.0M379.3,254.0 378.5,253.2 377.5,253.8M376.9,252.8 377.4,253.2 377.5,253.8M399.0,257.9 399.4,258.5 399.2,259.2M399.0,257.9 398.3,258.0 397.6,257.7 396.9,257.6 396.4,258.2M399.2,259.2 399.2,259.8 399.1,260.3 399.4,260.8 399.0,261.3M395.1,260.5 395.0,259.8 395.3,259.2M396.4,258.2 395.9,258.8 395.3,259.2M399.0,255.9 398.8,256.4 398.8,256.9 398.6,257.4 399.0,257.9M397.9,255.0 397.5,255.4 397.0,255.3 396.6,255.0 396.1,255.1M393.0,261.1 393.7,261.2 394.5,261.2M394.5,261.2 395.1,260.5M396.1,255.1 395.6,255.1 395.1,255.1M393.2,254.5 393.7,254.7 394.1,255.1 394.6,254.7 395.1,255.1M381.1,251.4 381.7,251.3M381.1,251.4 380.6,250.7 380.6,249.8M383.0,251.3 382.4,251.4 381.7,251.3M383.0,251.3 383.7,251.4 384.4,251.6M384.4,251.6 385.1,251.8 385.8,251.9M369.5,231.0 370.1,231.5 370.8,231.7 371.2,232.3 371.3,233.1M366.5,244.7 367.4,245.0 368.2,244.6M368.2,244.6 368.7,244.6 369.1,244.7 369.6,244.6 370.0,244.8M369.9,279.4 370.2,278.6 369.9,277.8M385.4,276.7 385.0,277.5 385.0,278.4M385.4,276.7 385.8,275.9 386.8,275.8M418.4,272.1 418.2,272.7 417.8,273.3 417.2,273.3 416.5,273.4M418.4,272.1 418.9,271.7 419.0,271.1 419.5,270.8 420.1,270.7M352.3,270.3 351.9,269.9 351.6,269.4 351.0,269.3 350.5,269.2M349.2,265.9 349.4,266.4 349.3,266.9 349.2,267.5 349.6,267.9M349.6,267.9 350.1,268.5 350.5,269.2M354.3,271.6 353.7,271.5 353.2,271.0 352.8,270.6 352.3,270.3M347.2,264.5 347.9,264.5 348.4,264.9 349.0,265.3 349.2,265.9M356.6,272.4 356.3,271.6 356.8,270.8M356.6,272.4 355.9,272.4 355.3,272.4 354.6,272.2 354.3,271.6M356.8,270.8 356.7,270.3 356.8,269.8 356.7,269.3 356.6,268.9M363.6,265.8 364.1,266.1 364.7,266.1M367.2,267.1 366.4,267.0 365.9,266.5M365.9,266.5 365.3,266.4 364.7,266.1M367.6,264.6 367.4,263.8M413.4,257.0 413.5,257.6 414.1,257.9 413.9,258.5 414.2,259.1M408.6,261.4 409.4,261.5 410.2,261.3 411.0,261.1 411.5,260.4M414.2,259.1 413.5,259.4 412.7,259.5 412.2,260.0 411.5,260.4M476.4,287.1 476.0,287.5 475.9,288.0 475.5,288.3 475.2,288.7M475.2,288.7 474.7,289.1 474.2,289.4 474.4,290.0 473.9,290.6M472.4,309.9 471.9,309.2 472.2,308.4 472.6,307.8 473.1,307.2M480.7,272.9 480.7,273.5 480.3,274.0 480.0,274.6 479.9,275.2M477.4,285.3 477.5,284.8 477.6,284.4 477.9,284.0 478.0,283.5M478.0,283.5 478.2,283.0 478.4,282.4M479.6,280.9 479.1,281.1 478.7,281.4 478.7,282.0 478.4,282.4M476.4,287.1 476.8,286.4 476.2,285.8 476.7,285.2 477.4,285.3M480.9,277.7 481.5,277.8 482.1,277.8 482.8,278.0 482.9,278.7M480.9,277.7 480.2,278.3 480.2,279.3 479.8,280.1 479.6,280.9M480.9,277.7 480.8,277.0 480.5,276.4 480.0,275.8 479.9,275.2M476.0,278.9 476.9,278.9 477.6,278.3 478.1,279.0 478.5,279.7 478.5,280.4 478.7,281.1 478.5,281.7 478.4,282.4M433.9,293.4 434.0,292.8 434.0,292.1 433.5,291.6 433.2,290.9M439.5,276.4 438.8,276.3 438.4,275.7 437.8,276.0 437.2,275.9M440.4,259.4 439.7,259.7 439.2,260.2 438.7,260.7 438.5,261.4M440.4,259.4 440.8,258.8 441.4,258.3 441.3,257.5 441.5,256.8M443.8,254.4 443.0,254.9 442.8,255.8 442.2,256.3 441.5,256.8M438.5,261.4 438.7,262.3 438.3,263.1 437.5,264.1 436.6,263.3M463.6,280.2 463.3,281.0 463.7,281.8 463.8,282.6 463.3,283.3M463.3,283.3 463.1,283.9 462.9,284.5 462.5,285.0 462.5,285.6M463.6,280.2 463.6,279.5 463.6,278.8 463.8,278.2 464.3,277.7M464.3,277.7 463.7,277.5 463.4,277.1 463.2,276.5 462.6,276.6 462.1,276.8 461.6,276.7 461.1,276.5 460.6,276.6M460.6,276.6 460.0,276.9 459.3,277.0 458.7,277.1 458.1,276.9M455.0,274.2 455.6,274.7 455.8,275.3 456.4,275.7 456.7,276.2M458.1,276.9 457.5,276.3 456.7,276.2M426.5,250.7 427.2,250.5 427.7,250.0 427.9,249.3 428.7,249.2M428.7,249.2 429.0,248.5 429.8,248.6 430.4,248.3 430.5,247.6M428.8,256.1 429.5,256.1 430.1,256.5M432.1,245.8 432.2,246.6 431.4,246.8 430.8,247.0 430.5,247.6M425.4,251.5 425.9,251.0 426.5,250.7M425.4,251.5 425.6,252.0 425.3,252.5 425.3,253.0 425.0,253.5 424.4,253.4 424.0,253.8 424.1,254.4 423.4,254.7M426.2,256.5 425.7,255.7 424.9,256.1 424.2,256.0 423.6,255.7M426.2,256.5 426.9,256.8 427.6,256.9 428.2,256.5 428.8,256.1M423.4,254.7 423.6,255.2 423.6,255.7M418.1,240.0 419.0,240.2 419.9,240.5 420.3,241.4 421.1,241.9M459.5,259.4 460.2,259.0 460.9,258.6M460.9,258.6 461.4,258.0 462.1,257.8 462.6,258.3 463.0,259.0M467.4,260.9 467.1,260.1 466.6,259.4 466.0,258.7 465.1,258.6M465.1,258.6 464.5,258.4 463.9,258.3 463.6,258.8 463.0,259.0M362.7,281.6 362.4,282.3 363.0,282.7 362.8,283.3 362.2,283.7M377.7,287.5 377.8,288.4 378.5,289.2 379.0,290.2 378.2,291.0M379.9,293.6 379.5,292.8 378.7,292.5 378.6,291.7 378.2,291.0M361.0,304.3 361.4,303.6 361.6,302.7M357.5,294.2 357.1,295.0 357.1,295.9 356.1,295.8 355.3,296.2M357.5,294.2 357.9,293.8 358.2,293.4 358.8,293.3 359.1,292.8M541.1,243.3 542.1,242.9 542.3,241.9 543.2,241.7 544.1,241.7M541.1,243.3 540.8,244.1 540.0,243.7 539.7,244.3 539.0,244.3M544.1,241.7 544.3,241.0 544.5,240.3 544.0,239.7 543.3,239.5 543.6,239.0 543.7,238.4 543.9,237.8 544.2,237.3M545.8,243.3 546.5,242.4 545.5,241.9 544.8,241.8 544.1,241.7M546.5,234.2 546.2,234.7 545.7,235.0 545.2,235.2 544.6,235.2 544.7,235.8 544.6,236.3 544.2,236.8 544.2,237.3M536.7,245.3 536.0,245.5 535.4,246.1 534.8,246.5 534.0,246.6M534.0,246.6 533.3,246.9 533.2,247.7 532.7,248.2 532.1,248.5M539.0,244.3 538.4,244.5 537.8,244.7 537.3,245.1 536.7,245.3M531.3,249.6 532.0,249.3 532.1,248.5M513.3,178.9 513.1,179.3 512.8,179.8 512.3,179.9 512.2,180.5 512.3,181.0 512.1,181.5 511.4,181.6 511.3,182.2M510.0,185.2 510.4,184.5 510.8,183.8 511.3,183.1 511.3,182.2M515.5,177.0 514.9,177.4 514.3,177.7 513.9,178.4 513.3,178.9M508.5,189.1 508.9,188.7 509.2,188.3 509.7,187.9 510.0,187.5 510.2,186.9 510.0,186.3 509.9,185.8 510.0,185.2M348.9,234.4 349.0,233.7 348.7,233.2 349.0,232.7 349.4,232.2 349.2,231.7 349.1,231.5M348.9,234.4 349.6,234.2 350.3,234.4 350.1,235.2 351.0,235.5 351.6,235.8 352.2,235.6 352.9,235.5 353.2,235.0M346.9,235.8 347.7,235.8 348.0,235.2 348.5,234.8 348.9,234.4M356.0,235.6 355.3,235.7 354.7,235.1 353.9,235.5 353.2,235.0M516.2,432.3 517.1,432.4 517.9,432.0 518.8,432.1 519.6,431.5M516.2,432.3 516.6,432.7 516.5,433.2 516.6,433.7 516.6,434.1 516.8,434.6 517.0,435.0 516.9,435.6 517.5,435.8M519.5,437.7 519.4,436.8 518.5,436.7 518.0,436.3 517.5,435.8M519.6,431.5 520.3,431.7 520.8,431.1 521.2,431.5 521.8,431.8M523.2,432.5 522.7,431.9 521.8,431.8M514.8,432.7 515.5,432.6 516.2,432.3M519.8,439.3 519.9,438.4 519.5,437.7M525.3,432.6 525.0,432.0 524.3,431.8 523.8,432.2 523.2,432.5M481.7,382.7 482.3,382.7 482.8,382.9 483.1,383.4 483.2,384.0 483.8,384.1 484.3,384.1 484.8,384.3 485.3,384.5M482.5,379.4 482.7,378.6 482.9,377.8 483.6,377.3 484.4,377.1M484.5,373.1 484.6,373.7 484.5,374.3 484.5,374.9 485.0,375.4M484.4,377.1 484.6,376.2 485.0,375.4M505.9,399.8 505.9,399.2 505.7,398.6 505.3,397.8 506.0,397.3M506.0,397.3 506.0,396.6 506.4,396.1 507.0,395.8 507.3,395.2 507.6,394.6 507.7,394.0 507.4,393.4 507.4,392.7M507.4,392.7 507.8,393.1 507.9,393.7 508.4,394.1 509.0,394.2 509.6,394.7 510.1,394.1 510.8,394.0 511.0,393.4M511.0,393.4 511.6,393.2 512.2,393.3 512.7,393.3 513.2,392.9M519.2,389.1 518.8,389.7 518.5,390.2 517.8,390.3 517.2,390.2 516.4,390.2 516.3,391.0 515.8,391.3 515.3,391.4M519.2,389.1 519.9,389.8 519.8,390.8M519.8,390.8 520.6,391.2 521.0,392.1 521.3,393.0 521.0,393.9M515.3,391.4 514.7,391.8 514.5,392.4 513.8,392.5 513.2,392.9M506.7,360.8 506.8,361.9 507.3,363.0 506.9,364.5 505.3,364.1M504.1,367.2 504.2,366.2 503.8,365.3 504.3,364.4 505.3,364.1M494.5,400.7 494.9,401.4 495.5,401.7 496.3,401.6 497.0,401.6M497.0,401.6 497.6,401.5 498.3,401.5 498.5,402.1 499.0,402.6M501.9,402.5 500.9,402.3 500.4,401.4 499.6,401.9 499.0,402.6M496.8,417.3 497.6,418.0 498.6,417.4 499.6,417.4 500.2,416.6M500.2,416.6 500.9,416.2 501.4,415.6 502.0,415.1 502.4,414.4M502.4,414.4 503.2,414.2 503.1,413.4 503.9,413.5 504.2,412.8M514.4,414.5 513.8,414.5 513.3,414.2 512.9,414.8 512.3,414.8 511.9,415.3 511.4,415.8 510.6,416.0 510.2,415.3M510.2,415.3 509.8,415.0 509.3,415.0 508.9,414.9 508.5,414.7 508.0,414.5 507.8,414.0 507.3,413.9 506.9,413.7M506.9,413.7 506.2,413.6 505.6,413.3 504.9,413.0 504.2,412.8M466.3,401.2 467.0,401.4 467.8,401.6 468.6,402.0 469.4,401.7M474.5,403.0 474.8,402.4M473.8,396.9 474.0,397.8 474.2,398.7 473.4,399.3 472.7,399.9 472.5,400.9 473.1,401.7 474.0,402.0 474.8,402.4M490.9,406.7 491.0,405.8 490.8,404.9 490.6,404.0 489.9,403.4M494.5,400.7 493.4,400.9 493.0,401.9 492.2,401.4 491.6,400.7M489.9,403.4 490.1,402.6 490.2,401.7 490.7,400.9 491.6,400.7M482.4,403.7 483.1,403.6 483.7,404.0 484.3,404.4 484.9,404.7M471.5,411.9 471.5,411.4 471.7,410.9 472.1,410.6 472.6,410.4 472.7,409.9 472.5,409.4 473.0,409.1 472.8,408.5M474.8,402.4 475.4,402.5 475.9,402.6 476.6,402.2 477.1,402.8 477.8,403.0 478.5,403.1 478.4,402.1 479.3,401.9M479.3,401.9 480.3,401.9 480.8,402.8 481.4,403.5 482.4,403.7M489.9,403.4 489.1,403.3 488.4,403.0 487.7,403.3 487.3,404.0M487.3,404.0 486.7,404.1 486.0,404.1 485.5,404.6 484.9,404.7M405.7,387.6 406.2,387.0 406.0,386.5M406.3,389.7 405.8,389.3 405.3,388.9 405.6,388.3 405.7,387.6M406.4,393.9 406.6,393.3 407.1,392.8M406.4,393.9 405.8,394.0 405.4,394.5 404.8,394.8 404.8,395.5M405.8,346.5 405.7,345.8 405.1,345.3M405.1,345.3 404.9,344.9 404.6,344.5M404.6,344.5 403.7,344.0 402.7,343.9 401.8,344.4 401.1,345.1M401.1,345.1 400.7,345.4 400.4,345.9 399.9,346.1 399.6,346.5M393.5,359.1 394.1,359.0 394.8,359.0 395.3,359.2 396.0,359.2M396.0,359.2 395.4,358.2 396.5,357.9 397.2,357.4 396.8,356.6M397.3,361.2 396.9,362.0 396.1,362.3M397.3,361.2 397.0,360.4 396.1,360.5 396.0,359.9 396.0,359.2M391.6,359.4 392.0,359.1 392.5,359.0 393.0,359.2 393.5,359.1M393.9,363.1 394.5,363.2 395.1,362.9 395.5,362.4 396.1,362.3M389.5,359.4 388.7,359.3 388.0,358.8M380.4,356.9 381.1,356.8 381.5,357.2 382.1,357.3 382.5,357.0M382.5,357.0 383.0,356.7 383.4,356.2 384.0,356.2 384.3,356.8M384.3,356.8 385.0,356.4 385.3,355.7 385.2,355.1 385.2,354.4M388.0,358.8 387.4,358.3 386.6,358.1M386.6,358.1 386.0,357.8 385.5,357.4 385.0,356.9 384.3,356.8M385.2,354.4 385.6,353.8 385.8,353.2M390.4,368.5 390.6,367.8 391.0,367.1M390.4,368.5 389.8,369.1 389.4,369.8 388.9,370.8 387.9,370.6M387.9,370.6 387.5,370.6M391.0,367.1 391.2,366.6 391.6,366.2 391.7,365.8 392.0,365.4M392.0,365.4 392.2,364.6 392.7,363.9M545.8,418.5 545.4,417.9 544.9,417.4 545.1,416.7 545.6,416.1 545.5,415.5 545.5,414.9 545.6,414.3 545.6,413.8M544.2,410.7 544.5,411.5 545.2,411.9M545.6,413.8 545.9,413.3 545.6,412.8 545.3,412.4 545.2,411.9M537.3,341.3 537.5,340.8 537.9,340.2 538.3,339.7 538.9,339.6M538.9,339.6 539.8,339.4 540.1,338.6 540.9,338.2 541.7,338.4M534.1,330.0 534.3,330.8 535.0,331.1 535.9,331.0 536.4,331.7M536.4,331.7 537.1,331.9 537.7,332.3 538.3,332.6 538.7,333.3M531.5,327.5 532.7,327.4 533.1,328.5 533.4,329.4 534.1,330.0M541.5,334.5 540.7,334.5 540.0,334.2 539.5,333.5 538.7,333.3M541.5,334.5 542.4,334.8 543.4,334.8 543.5,335.8 544.0,336.7M541.7,338.4 542.4,337.9 542.5,337.1 543.4,337.4 544.0,336.7M550.0,333.8 549.5,333.7 549.0,333.8M549.0,333.8 548.0,333.7 547.4,334.3 547.0,335.1 546.4,335.7M544.0,336.7 544.4,336.1 545.0,335.8 545.7,336.1 546.4,335.7M510.3,372.6 509.8,373.1 509.2,373.3 508.6,373.3 507.9,373.2M510.3,372.6 510.8,373.2 511.6,373.3 512.1,372.9 512.7,372.3M516.9,376.2 516.6,375.4 515.9,374.9 515.8,374.1 515.0,373.6M512.7,372.3 513.4,372.0 514.2,372.4 514.7,373.0 515.0,373.6M533.2,374.2 532.8,373.4 532.5,372.6M528.2,369.8 527.6,370.1 527.1,370.6 526.6,371.2 525.8,370.9M537.9,378.3 537.1,377.8 537.0,376.9 536.1,376.7 535.7,375.9M535.7,375.9 535.0,375.6 534.4,375.1 533.8,374.7 533.2,374.2M533.1,369.4 532.8,370.2 533.1,371.1 532.8,371.9 532.5,372.6M531.8,364.6 531.5,365.3 531.1,365.9 530.3,366.1 529.8,366.6M529.8,366.6 528.9,367.2 528.1,367.8 528.7,368.8 528.2,369.8M520.6,380.7 519.6,380.3 519.1,379.5 518.6,378.5 519.3,377.6M520.3,374.6 520.4,375.5 520.1,376.2 519.6,376.9 519.3,377.6M567.6,366.9 567.1,367.0 566.5,366.9 565.8,367.1 565.1,366.8 564.5,367.4M569.4,371.1 568.6,370.7 568.4,369.9 567.6,369.7 566.8,369.6M564.5,367.4 565.1,367.9 565.5,368.6 566.2,369.1 566.8,369.6M571.7,373.5 571.6,372.6 571.0,371.9 570.3,371.2 569.4,371.1M571.7,373.5 572.4,374.0 573.0,374.7M562.2,367.5 562.8,367.5 563.4,367.2 563.9,367.5 564.5,367.4M575.0,394.7 575.7,394.4 576.3,394.8 576.9,395.1 577.6,395.0M577.6,395.0 578.3,395.3 578.9,395.8 579.6,395.4 580.2,395.0M572.3,391.1 572.3,391.7 572.3,392.4 572.1,393.0 572.3,393.6M572.3,391.1 572.7,390.6 573.3,390.2 573.2,389.5 572.8,388.9M572.8,388.9 573.4,388.1 574.3,387.9 574.3,387.0 574.2,386.2M574.2,386.2 574.9,385.4 575.8,385.0 575.7,384.0 576.0,383.1M590.2,387.7 590.0,387.8 590.3,388.4M527.1,344.7 527.4,345.2 527.7,345.6 528.1,346.0 528.5,346.3 528.5,346.9 528.4,347.4 528.3,348.0 528.0,348.4M532.8,350.6 532.1,350.6 531.5,351.0 531.4,351.7 530.9,352.3 530.5,351.8 529.8,351.7 529.2,351.6 528.6,351.3M528.0,348.4 527.9,349.2 527.7,350.0 528.5,350.5 528.6,351.3M569.8,396.1 569.2,396.4 568.9,397.0M568.9,397.0 568.4,396.7 568.0,396.6 567.5,396.4 567.1,396.3 566.9,395.8 566.8,395.3 566.4,395.0 566.1,394.6M528.8,300.8 528.8,300.2 529.3,299.8 529.8,299.8 530.4,299.7 530.8,300.1 531.3,300.1 531.8,299.9 532.3,299.8M528.8,300.8 528.2,301.3 527.6,301.7 527.8,302.5 527.2,303.2M533.9,301.6 533.5,301.1 533.3,300.5 532.9,300.0 532.3,299.8M532.2,297.2 532.5,297.8 532.3,298.5 532.0,299.1 532.3,299.8M522.8,299.5 522.9,300.3 523.0,301.0 523.5,301.6 523.8,302.4M526.2,305.3 526.4,304.7 526.8,304.3 526.8,303.7 527.2,303.2M536.6,302.3 535.9,302.4 535.1,302.4 534.5,302.0 533.9,301.6M362.8,343.6 362.1,344.0 361.8,344.7 361.0,344.7 360.4,345.3M362.8,343.6 363.5,343.8 364.2,344.1 364.7,343.6 365.1,343.0M363.7,348.0 363.2,347.7 362.7,347.4 362.2,347.1 361.7,347.0M360.4,345.3 360.8,345.7 361.0,346.1 361.7,346.3 361.7,347.0M359.0,343.6 358.4,343.2 358.4,342.6 358.1,342.0 358.2,341.4M357.3,340.6 356.6,340.6 356.3,341.2 355.7,341.5 355.1,341.2M357.3,340.6 357.9,340.8 358.2,341.4M355.1,341.2 354.6,341.3 354.3,341.7 354.0,342.0 353.9,342.1M360.4,345.3 360.6,344.6 360.0,344.2 359.5,343.8 359.0,343.6M354.4,340.7 354.4,340.7 355.1,341.2M344.3,325.8 344.7,326.0 345.5,325.6 345.9,324.7M345.9,324.7 346.2,324.1 347.0,323.9M344.5,321.7 345.1,321.0 344.8,320.2M345.9,324.7 345.2,324.2 344.8,323.4 345.1,322.4 344.5,321.7M342.2,292.3 341.8,291.9 341.6,291.4 341.4,290.9 341.4,290.3M347.9,297.6 348.2,296.9 348.3,296.2 348.1,295.4 348.4,294.7M344.0,293.7 344.7,293.4 345.4,293.0 346.3,293.2 347.1,293.0M347.1,293.0 347.8,293.0 348.1,293.6 348.5,294.1 348.4,294.7M351.8,299.1 351.3,299.5 351.0,300.0 350.5,300.3 350.4,300.9 349.9,301.0 349.3,300.9 348.9,300.4 348.3,300.4M348.3,300.4 348.0,299.9 347.6,299.6M341.4,290.3 341.2,289.7 341.1,289.1 341.0,288.8M368.3,328.6 367.3,328.4 366.5,327.8 366.6,326.8 366.4,325.8M371.0,323.5 370.5,324.0 369.7,323.9M369.7,323.9 369.1,324.0 368.5,324.0 368.3,324.6 368.3,325.3 367.9,325.7 367.5,326.0 366.9,325.9 366.4,325.8M363.7,328.0 363.7,327.3 364.0,326.7 364.7,326.5 365.3,326.5M366.4,325.8 365.9,326.2 365.3,326.5M358.2,331.4 358.0,330.5 358.3,329.7 357.5,329.3 357.0,328.6M358.2,331.4 358.9,330.7 359.8,330.7M359.8,330.7 360.4,330.6 361.0,330.3 360.8,329.3 361.8,329.4M357.0,331.9 357.6,331.5 358.2,331.4M363.7,328.0 363.4,328.4 362.9,328.8 362.3,329.1 361.8,329.4M348.3,300.4 348.5,300.9 348.7,301.4 349.1,301.8 349.6,301.8 350.0,302.2 349.9,302.7 349.9,302.7M350.2,303.5 350.2,303.6M353.6,305.4 353.0,304.9 352.3,305.0M350.2,303.6 350.9,303.8 351.3,304.3 351.8,304.6 352.3,305.0M356.5,307.8 356.5,308.3 356.7,308.8 356.3,309.2 356.0,309.6M352.3,305.0 352.5,305.9 352.4,306.9 351.8,307.6 351.5,308.4M360.7,352.2 360.8,353.2 361.1,354.1 360.0,354.5 359.2,353.7M363.7,348.0 363.7,348.7 364.2,349.3M360.7,352.2 361.3,352.2 361.8,352.5 362.3,352.1 362.8,352.3M364.2,349.3 363.8,350.0 363.6,350.8 362.6,351.3 362.8,352.3M425.3,338.3 424.7,337.5 423.8,337.4M423.8,337.4 423.0,337.3 422.2,336.9 421.1,336.7 420.9,337.8M419.5,337.0 420.0,337.8 420.9,337.8M426.6,357.2 426.0,357.0 425.7,356.4 425.4,355.9 424.9,355.6M424.9,355.6 424.4,355.9 423.8,355.9 423.6,355.4 423.0,355.1M423.0,355.1 422.4,355.1 421.8,355.5 421.1,355.4 420.6,355.0M429.4,359.7 429.0,359.3 428.4,359.1 427.9,359.2 427.3,359.2 426.8,358.9 426.9,358.2 426.9,357.7 426.6,357.2M428.0,362.2 427.3,362.7 426.6,363.0 425.8,363.3 425.0,363.5M420.0,350.6 419.7,351.3 419.6,352.0 419.7,352.7 419.7,353.4M419.7,353.4 420.2,353.6 420.7,353.8 420.5,354.4 420.6,355.0M431.9,346.8 432.2,345.5 433.6,345.6 434.5,346.1 435.3,346.9M443.6,341.1 444.1,342.1 443.2,342.8 442.7,343.6 441.6,343.5M445.4,360.7 446.0,360.1 446.2,359.2 446.0,358.4 446.4,357.6M445.4,360.7 445.2,361.4 444.8,362.1 444.7,363.0 444.5,363.7M449.8,351.7 449.3,352.1 449.0,352.7 448.2,352.8 447.7,352.4M447.7,352.4 447.8,353.1 447.8,353.9 448.4,354.5 448.2,355.3 448.2,356.1 447.5,356.7 446.8,357.0 446.4,357.6M443.6,366.6 443.5,365.8 443.5,365.0 443.4,363.9 444.5,363.7M445.0,351.5 444.2,351.2 443.5,350.6 442.6,350.7 441.9,351.4M441.9,351.4 441.4,351.6 440.8,351.7 440.3,351.4 439.8,351.2 439.2,351.4 438.9,350.8 438.3,350.8 437.8,350.7M437.8,350.7 437.4,350.3 437.3,349.7 437.5,349.3 437.5,348.7 437.6,348.0 437.0,347.8 436.7,347.2 437.2,346.8M439.8,345.0 439.2,345.6 438.3,345.7 437.9,346.4 437.2,346.8M447.7,352.4 447.3,351.6 446.5,351.4 445.8,351.4 445.0,351.5M441.6,343.5 441.6,344.3 441.2,344.9 440.5,345.3 439.8,345.0M436.4,353.2 436.8,352.1 435.9,351.3 436.6,350.1 437.8,350.7M435.3,346.9 435.8,346.7 436.2,347.1 436.6,346.8 437.2,346.8M405.7,370.5 406.4,370.2 406.9,369.8 407.4,369.0 406.6,368.4M406.6,368.4 406.8,367.9 406.9,367.4 407.2,367.0 407.3,366.5M402.2,321.5 402.8,321.4 403.4,321.4 403.8,320.9 404.4,320.9M406.2,319.9 405.6,319.8 405.2,320.3 405.0,320.8 404.4,320.9M407.1,285.3 407.6,285.7 407.8,286.2 408.0,286.8 408.4,287.2M408.4,287.2 408.1,288.0 408.5,288.7 409.0,289.3 409.7,289.7M415.5,292.5 415.1,293.4 414.2,293.7 414.0,294.7 413.0,294.9M415.5,292.5 415.3,291.9 415.7,291.3 416.1,291.0 416.6,290.5M417.1,289.4 416.5,289.8 416.6,290.5M409.7,289.7 410.1,290.5 411.0,290.7 411.1,291.6 410.8,292.3M413.0,294.9 412.4,294.3 411.8,293.7 410.9,293.3 410.8,292.3M429.0,331.3 428.4,331.6 427.8,332.0 427.2,331.4 426.5,331.5M419.8,321.3 420.0,322.2 419.6,323.1M420.4,325.7 420.5,326.3 420.7,326.9 421.2,327.3 421.8,327.6M411.0,318.8 410.4,318.0 410.8,317.2M415.2,319.7 415.0,318.9 415.3,318.2 415.6,317.3 416.6,317.3M416.6,317.3 416.2,316.8 416.1,316.2 416.5,315.7 416.6,315.1M508.7,313.8 508.2,313.1 508.2,312.1 508.0,311.1 507.0,310.8M507.0,310.8 506.3,311.0 505.5,311.1 504.7,311.2 504.0,311.6M510.4,314.9 510.1,314.5 509.8,314.0 509.3,313.9 508.7,313.8M508.1,309.3 507.9,310.3 507.0,310.8M502.1,312.0 502.5,311.6 503.0,311.7 503.5,311.8 504.0,311.6M477.2,326.5 477.3,327.2 477.4,328.0 477.6,328.8 476.9,329.5M475.5,333.2 475.0,332.1 474.6,331.0 473.6,331.8 472.4,332.0M477.2,326.5 477.6,325.8 477.5,325.0 477.1,324.3 476.7,323.7M475.2,321.5 475.8,321.9 476.2,322.5 476.5,323.1 476.7,323.7M483.2,320.4 483.5,320.8 483.9,321.2 484.1,321.7 484.6,321.8M475.2,321.5 475.2,320.9 474.7,320.5 474.7,319.9 474.4,319.4M474.4,319.4 474.1,318.7 474.4,318.1 475.2,317.8 475.3,317.0M477.7,316.6 477.0,316.8 476.6,317.5 476.1,316.8 475.3,317.0M509.0,326.0 508.2,326.3 507.4,326.3 506.8,326.9 506.9,327.8M506.9,327.8 506.7,328.3 506.7,328.8 505.9,329.0 506.3,329.8 505.7,330.1 505.3,330.7 505.5,331.3 506.0,331.8M510.2,331.5 509.6,332.0 509.0,332.6 508.4,331.6 507.4,331.9M507.4,331.9 506.7,331.6 506.0,331.8M510.1,325.4 509.5,325.5 509.0,326.0M513.3,332.3 512.4,332.7 511.8,332.0 511.0,331.7 510.2,331.5M493.4,327.1 493.5,328.1 494.5,328.4 495.5,328.6 495.9,329.5M496.6,334.7 496.7,333.8 497.3,333.2M495.9,329.5 495.9,330.1 496.2,330.5 496.3,331.0 496.4,331.5 496.4,332.0 496.5,332.5 496.8,332.9 497.3,333.2M506.0,331.8 505.5,331.8 504.9,331.6 504.6,332.1 504.1,332.3 503.7,332.6 503.1,332.4 502.7,332.2 502.2,332.0M502.2,332.0 501.6,332.6 500.9,332.1 500.0,331.9 499.6,332.7M499.6,332.7 499.1,333.1 498.5,333.4 498.0,333.0 497.3,333.2M486.5,321.6 487.2,321.9 488.0,322.0 488.1,322.9 489.0,323.1M486.5,321.6 487.1,320.7 486.8,319.7 487.8,319.5 488.3,318.5M488.3,318.5 489.1,318.5 489.6,317.9 490.3,317.5 490.7,316.9M490.7,324.2 490.1,324.1 489.6,324.0 489.4,323.5 489.0,323.1M484.6,321.8 485.1,321.5 485.6,321.5 486.1,321.4 486.5,321.6M482.3,318.2 482.2,318.8 482.1,319.5 482.9,319.7 483.2,320.4M492.8,314.6 492.6,315.4 492.1,316.0 491.4,316.4 490.7,316.9M491.4,313.3 490.7,313.4 490.0,313.0 490.3,312.1 489.6,311.6M405.4,141.5 406.0,141.6 406.6,141.7 407.2,141.5 407.6,141.0 407.6,140.9M464.7,162.5 465.1,163.2 464.7,163.8 464.1,164.1 463.6,164.5 463.6,165.2 464.0,165.6 464.6,165.9 464.7,166.5M461.6,175.5 461.2,175.2 460.7,175.3 460.2,175.3 459.8,174.9 459.2,175.3 458.7,175.8 458.6,175.0 457.9,174.6M454.6,176.6 455.0,176.4 455.5,176.2 455.7,175.8 456.2,175.5 456.7,175.5 457.1,175.1 457.5,174.9 457.9,174.6M451.1,169.4 451.9,169.3 452.7,169.4 453.5,169.3 454.2,169.6M451.1,169.4 450.4,169.4 449.9,169.9 449.5,169.3 449.0,168.9 448.7,168.5 448.3,168.0 447.9,167.6 447.3,167.5M444.2,165.6 444.1,166.2 444.6,166.6 445.2,166.7 445.7,166.6 446.2,166.8 446.7,166.8 447.2,167.0 447.3,167.5M459.3,169.1 459.3,170.6 457.8,170.7 457.1,169.8 455.9,169.7M455.9,169.7 455.0,169.7 454.2,169.6M444.5,157.8 445.0,157.7 445.5,157.7 445.9,157.3 446.2,157.0 446.6,156.7 446.7,156.2 446.9,155.7 447.4,155.6M450.2,153.9 449.3,153.9 448.4,154.0 448.0,154.9 447.4,155.6M429.0,156.8 429.6,157.1 430.2,157.1 430.7,157.2 431.3,157.1 431.9,157.2 432.3,157.7 432.9,157.9 433.2,158.5M435.6,153.8 436.1,154.6 435.7,155.4 435.8,156.2 436.0,157.0 435.1,157.1 434.8,158.0 434.0,158.5 433.2,158.5M444.5,157.8 444.0,158.0 443.7,158.5 443.2,158.7 442.8,159.0 442.3,159.3 441.7,159.2 441.3,158.9 440.8,158.6M440.8,163.8 441.3,163.9 441.8,163.7 442.4,163.7 442.9,163.9 443.4,164.2 443.8,164.5 444.0,165.0 444.2,165.6M440.8,163.8 441.0,163.0 440.4,162.5 439.8,162.2 439.3,161.7 438.8,161.3 438.3,160.9 437.6,160.6 437.3,160.1M440.8,158.6 440.2,158.5 439.8,159.0 439.5,159.5 439.3,160.0 438.8,159.7 438.3,160.1 437.8,160.1 437.3,160.1M432.5,165.0 433.4,164.7 434.4,164.7 434.6,163.8 435.0,162.9 434.6,162.0 433.8,161.5 434.7,160.9 434.4,159.7M437.3,160.1 436.5,160.3 435.8,159.8 435.1,159.6 434.4,159.7M433.2,158.5 433.8,159.1 434.4,159.7M439.6,143.4 439.5,143.8 439.6,144.3 439.7,144.8 439.4,145.2 439.5,145.7 439.4,146.1 439.3,146.6 439.1,147.0M439.1,147.0 438.9,147.7 438.3,147.6 438.1,148.1 438.1,148.6 438.2,149.1 438.4,149.6 438.2,150.0 438.0,150.5M440.3,139.6 439.8,139.9 439.8,140.5 440.0,141.0 439.8,141.5 440.1,142.0 440.4,142.5 439.9,142.9 439.6,143.4M435.6,153.8 435.7,153.2 435.9,152.7 436.4,152.5 436.5,151.9 436.9,151.6 437.3,151.3 437.9,151.1 438.0,150.5M493.0,119.9 493.5,119.8 494.0,119.9 494.6,119.9 495.1,119.9 495.4,120.4 495.6,120.9 496.1,121.2 496.6,121.2M493.0,119.9 492.2,120.2 492.2,121.1 491.3,121.1 490.9,121.8 490.2,121.5 489.5,121.3 488.8,120.8 488.0,121.2M488.0,121.2 487.5,121.6 487.6,122.3 487.3,122.8 487.6,123.4 486.7,123.4 486.6,124.3 486.0,124.3 485.4,124.0M499.8,121.3 498.9,121.2 498.2,120.6 497.4,120.7 496.6,121.2M485.0,125.3 485.0,124.6 485.4,124.0M421.2,196.4 420.0,196.7 419.5,195.7 418.5,195.4 417.6,195.9M417.6,195.9 416.7,196.8 415.7,196.0 414.8,195.6 414.4,194.7M411.8,192.0 412.3,192.1 412.8,192.2 413.2,192.6 413.4,193.1 413.6,193.5 414.0,193.8 414.1,194.3 414.4,194.7M408.6,199.2 408.0,198.7 407.3,198.2 407.3,197.4 407.4,196.6M410.3,205.7 409.8,205.4 409.5,204.9 409.4,204.3 409.0,203.8 408.9,203.2 409.2,202.6 409.2,201.9 409.9,201.7M410.3,205.7 409.8,206.0 409.5,206.6 409.4,207.2 409.2,207.8 408.8,208.3 408.5,208.9 408.6,209.5 408.5,210.1M405.6,210.2 406.4,210.4 407.1,210.1 407.8,209.9 408.5,210.1M408.6,199.2 409.1,199.7 409.3,200.4 409.7,201.0 409.9,201.7M411.3,212.8 411.3,212.0 410.7,211.5 410.0,211.4 409.3,211.1M409.3,211.1 408.7,210.8 408.5,210.1M397.7,207.9 398.2,208.1 398.5,208.7 398.8,209.1 399.4,209.3 399.2,209.8 399.2,210.4 399.1,211.0 399.5,211.5M399.5,211.5 400.3,211.2 401.1,211.7 401.8,211.3 402.6,211.0 403.1,210.3 403.9,209.9 404.8,209.9 405.6,210.2M391.3,223.4 390.8,224.0 390.1,223.6 389.6,223.2 389.1,222.9M399.5,211.5 398.9,211.3 398.3,211.7 397.8,212.1 398.0,212.7M449.2,178.8 449.7,178.6 450.0,178.1 450.3,177.6 450.8,177.3M449.1,182.0 449.0,181.2 449.2,180.4 449.1,179.6 449.2,178.8M454.6,176.6 454.4,175.6 454.1,174.7 453.3,175.0 452.3,175.1 451.7,175.6 451.1,175.9 451.4,176.7 450.8,177.3M457.9,174.6 457.5,174.0 456.8,173.5 456.1,173.2 455.5,172.7 456.1,172.1 456.3,171.3 456.2,170.4 455.9,169.7M565.5,125.6 565.2,126.2 564.5,126.2 563.9,126.7 563.3,126.3 562.7,126.4 562.2,126.9 561.7,126.6 561.1,126.7M551.1,126.1 551.8,125.7 552.7,125.8 553.3,125.2 553.3,124.3M551.1,126.1 550.2,126.1 549.7,125.5 549.5,124.7 549.0,124.0 548.0,124.0 547.8,123.1 548.2,122.2 547.7,121.5 547.0,121.2 546.2,121.1 545.5,121.2 544.8,121.1 544.4,120.2 543.5,120.4 542.8,120.3 542.1,120.1M542.1,120.1 542.4,119.5 542.9,119.1 542.2,118.8 542.1,118.0 542.5,117.6 542.4,117.0 542.8,116.6 542.5,116.0M542.2,111.7 541.9,112.3 541.9,113.0 541.5,113.5 541.0,114.0 541.5,114.4 541.8,115.0 542.2,115.5 542.5,116.0M551.8,129.3 551.7,128.5 551.7,127.7 550.9,127.1 551.1,126.1M561.1,126.7 560.4,126.5 559.8,126.3 559.2,126.0 558.7,125.6 557.9,125.7 557.2,126.1 556.5,125.7 556.1,125.0M556.1,125.0 555.3,125.2 554.8,124.5 554.0,124.5 553.3,124.3M541.3,120.5 542.1,120.1M517.2,299.9 516.8,300.8 515.9,300.7M517.2,299.9 516.4,299.4 515.5,298.9 515.6,298.0 515.5,297.0M515.9,300.7 515.2,300.8 514.4,300.8 514.0,301.4 513.4,301.8M520.7,298.5 520.3,298.1 519.7,298.0 519.2,298.3 518.7,298.7 518.3,299.1 517.8,299.2 517.5,299.6 517.2,299.9M515.7,295.3 515.6,296.2 515.5,297.0M517.0,276.9 517.2,277.6 516.9,278.3 516.1,278.5 515.8,279.2 515.0,278.9 514.2,278.7 513.9,279.5 513.3,280.1M517.0,276.9 517.4,276.4 517.2,275.8M513.3,280.1 512.8,279.7 512.4,279.1 511.7,278.9 511.0,278.7M515.7,283.4 515.5,282.7 515.3,282.1 514.7,281.7 514.3,281.2M519.7,278.8 519.1,278.0 518.9,277.0 517.9,277.0 517.0,276.9M514.3,281.2 513.7,280.7 513.3,280.1M517.2,273.7 517.3,274.3 517.8,274.8 517.7,275.4 517.2,275.8M517.7,267.4 517.6,268.0 517.1,268.4 516.6,268.6 516.3,269.2M517.2,273.7 517.4,273.0 517.3,272.2 516.6,272.0 516.3,271.3M516.3,269.2 516.4,269.7 516.5,270.2 516.3,270.7 516.3,271.3M477.7,316.6 478.3,315.8 479.2,316.4M482.3,318.2 481.9,317.7 481.3,317.8 481.2,317.2 480.9,316.7M479.2,316.4 480.0,316.7 480.9,316.7M489.6,311.6 489.4,310.9 488.9,310.5 488.3,310.0 488.0,309.5M486.1,307.6 486.0,308.4 486.5,309.1 487.2,309.3 488.0,309.5M490.5,302.4 490.2,302.8 489.6,302.8 489.1,302.8 488.8,303.2M486.1,307.6 485.6,306.9 485.8,306.1 485.0,305.9 484.7,305.1M484.7,305.1 485.5,305.0 486.3,304.9 486.1,304.1 486.3,303.3M486.3,303.3 486.9,303.9 487.6,303.5 488.2,303.3 488.8,303.2M495.0,263.1 494.3,263.8 493.6,264.5 494.4,265.2 494.5,266.2M494.5,266.2 493.9,266.4 493.2,266.6M493.2,266.6 492.5,266.4 491.9,266.8 491.2,266.5 490.7,267.1M349.8,256.5 350.5,256.9 351.2,256.6 351.6,257.1 352.1,257.5M352.1,257.5 352.9,257.9 353.7,258.3M376.8,334.0 376.3,334.1 375.8,334.2 375.3,334.3 374.8,334.0M376.8,334.0 377.3,333.7 377.8,333.9M377.8,333.9 378.4,334.5 378.6,335.3 378.6,336.1 378.7,336.9M371.0,323.5 371.3,322.9 372.0,322.9 372.6,322.7 373.1,322.5M369.7,323.9 368.9,323.6 368.1,323.5 367.7,322.7 367.8,321.9M376.7,312.1 377.0,312.7 377.2,313.2 377.5,313.8 377.2,314.3M377.2,314.3 377.7,314.7 378.1,315.2 378.5,315.8 378.1,316.4M373.1,322.5 373.7,322.1 374.3,322.4 375.0,322.4 375.5,322.1M375.5,322.1 376.0,322.1 376.5,321.7 377.0,322.0 377.5,321.7M415.8,310.2 415.3,310.1 415.1,309.6 415.0,309.1 414.6,308.8M415.8,310.2 416.5,310.5 417.1,310.9 417.3,311.7 416.9,312.4M414.6,308.8 414.8,308.1 415.3,307.7 415.9,307.7 416.6,307.6 417.0,307.1 417.6,306.9 417.9,306.4 418.0,305.8M419.4,305.9 418.7,305.5 418.0,305.8M409.3,309.9 410.0,309.4 410.8,309.3 411.4,308.6 412.2,308.4M409.3,309.9 409.2,310.4 409.6,310.7 409.6,311.2 409.4,311.7M412.2,308.4 412.9,308.6 413.4,309.0 414.0,309.0 414.6,308.8M416.6,315.1 416.7,314.4 416.8,313.7 416.9,313.1 416.9,312.4M421.4,305.7 420.9,305.4 420.4,305.3 420.0,305.7 419.4,305.9M416.7,304.1 416.5,304.7 417.2,305.1 417.8,305.1 418.0,305.8M422.9,317.3 423.5,316.9 424.0,316.5 424.8,316.5 425.4,316.2M422.9,317.3 422.8,318.4 421.7,318.6 420.6,319.1 419.8,318.3M419.8,318.3 419.4,317.8 418.9,317.8M416.6,317.3 417.2,317.6 417.6,318.0 418.2,317.8 418.9,317.8M428.1,316.0 427.5,316.7 426.9,317.3 426.2,316.7 425.4,316.2M419.8,321.3 419.8,320.6 419.8,319.8 419.7,319.0 419.8,318.3M415.1,275.4 415.1,275.9 415.1,276.4 415.3,277.0 415.6,277.4M415.1,275.4 413.9,275.1 413.6,273.9 412.3,273.2 411.7,274.6M411.7,274.6 411.0,275.0 410.4,275.4 409.9,275.9 409.7,276.7M415.5,279.7 416.0,279.1 415.4,278.5 415.1,277.9 415.6,277.4M408.1,278.1 408.5,277.6 408.6,277.0 409.2,276.9 409.7,276.7M416.5,273.4 416.1,273.9 415.9,274.5 415.5,274.9 415.1,275.4M410.4,271.9 410.9,272.5 411.2,273.2 411.6,273.9 411.7,274.6M410.4,271.9 409.8,271.7 409.2,271.8 408.6,271.5 408.4,270.9M415.8,282.1 415.3,281.5 414.8,281.0 415.2,280.3 415.5,279.7M422.2,280.3 421.2,280.5 421.1,281.5M421.1,281.5 420.6,281.4 420.1,281.5 419.9,282.0 419.3,282.2 418.8,282.0 418.3,282.1 417.6,282.1 417.5,282.8M407.1,285.3 407.4,284.6 406.8,284.1 406.5,283.6 406.1,283.2M406.1,283.2 406.0,282.7 406.1,282.2 406.2,281.7 406.1,281.2 406.0,280.7 405.5,280.5 405.4,280.0 405.4,279.5M405.4,279.5 406.1,279.2 406.8,278.8 407.6,278.6 408.1,278.1M403.7,279.6 404.6,279.7 405.4,279.5M422.0,284.7 421.2,285.3 421.2,286.3M422.6,292.3 422.2,292.1 421.8,291.9 421.5,291.6 421.0,291.5M421.1,281.5 420.6,282.4 420.9,283.3 421.8,283.8 422.0,284.7M419.0,287.6 419.4,287.1 420.0,286.8 420.7,286.7 421.2,286.3M426.9,281.3 426.2,281.2 425.5,281.1 424.8,280.8 424.3,280.2M422.2,280.3 422.7,280.4 423.2,280.2 423.8,280.5 424.3,280.2M416.6,290.5 416.6,291.3 417.2,291.7 418.0,291.8 418.4,292.5 419.3,292.2 419.5,291.3 420.2,291.9 421.0,291.5M429.4,281.8 429.8,282.1 429.9,282.7 430.4,282.9 430.7,283.3M429.4,281.8 428.8,282.1 428.1,281.8 427.5,281.6 426.9,281.3M430.7,283.3 431.1,283.8 431.3,284.3 431.5,284.9 431.8,285.5M433.2,290.9 433.2,290.5 433.0,290.0 433.1,289.5 433.0,289.0 433.3,288.5 433.7,288.1 433.5,287.6 433.3,287.1M431.8,285.5 432.0,286.0 432.4,286.4 432.7,286.9 433.3,287.1M424.0,293.3 423.4,292.7 422.6,292.3M464.4,318.3 464.8,319.4 464.0,320.2 464.2,321.2 465.0,321.9M464.4,318.3 464.9,318.4 465.4,318.6 465.9,318.4 466.3,318.1 466.7,317.9 467.1,317.7 467.5,317.4 468.0,317.4M463.8,317.9 464.4,318.3M465.1,324.5 464.2,324.2 464.2,323.2 464.5,322.5 465.0,321.9M470.1,315.8 470.3,316.7 469.9,317.6 468.9,318.0 468.0,317.4M472.5,313.6 472.7,314.1 473.0,314.6 473.5,314.8 473.9,315.3 474.1,315.8 474.3,316.3 474.8,316.6 475.3,317.0M446.0,302.2 446.6,302.8 447.1,303.5 447.9,303.3 448.6,303.8M448.6,303.8 449.0,304.1 449.0,304.7 449.2,305.2 448.9,305.6M442.5,306.1 443.1,306.3 443.5,306.9 443.9,307.5 444.6,307.6M444.6,307.6 445.4,307.1 446.0,306.3 446.9,306.3 447.8,306.6M448.9,305.6 448.1,305.8 447.8,306.6M440.2,305.7 440.8,305.7 441.3,305.8 441.9,305.9 442.5,306.1M445.0,301.0 445.6,301.6 446.0,302.2M450.5,301.5 449.6,301.6 448.7,302.0 448.2,302.9 448.6,303.8M444.0,310.1 443.5,309.5 443.8,308.7 444.2,308.2 444.6,307.6M441.0,317.6 441.3,318.2 441.5,319.0 441.2,319.7 441.4,320.4M436.4,321.5 435.8,321.1 435.4,320.5M436.4,321.5 437.0,321.5 437.5,321.4 438.0,321.8 438.2,322.3 438.8,322.5 439.2,322.0 439.7,322.1 440.2,322.0M440.2,322.0 440.5,321.5 440.6,321.1 441.0,320.7 441.4,320.4M440.6,315.2 440.5,315.8 440.5,316.4 440.8,317.0 441.0,317.6M433.6,318.7 434.1,319.2 434.3,319.8 434.7,320.4 435.4,320.5M435.6,323.6 436.2,323.3 436.3,322.6 436.1,322.1 436.4,321.5M476.0,278.9 475.2,278.9 474.4,278.7M474.4,278.7 473.7,279.0 473.0,279.0 472.6,279.6 472.2,280.3M451.0,295.2 451.7,295.0 452.3,294.6 452.0,293.9 452.3,293.2M452.3,293.2 452.0,292.7 451.9,292.2 452.2,291.7 452.6,291.3 453.1,291.0 453.1,290.5 453.1,290.0 453.1,289.5M449.7,288.7 450.6,288.5 451.5,288.7 452.1,289.6 453.1,289.5M456.4,289.3 455.8,289.0 455.2,288.5 454.9,289.3 454.2,289.5M453.1,289.5 453.6,289.8 454.2,289.5M451.5,248.7 451.9,249.4 451.6,250.1 451.3,250.6 450.9,251.2M451.5,248.7 452.1,248.4 452.0,247.7 452.3,247.1 452.5,246.5M449.3,252.6 449.7,252.3 450.3,252.2 450.6,251.7 450.9,251.2M454.8,243.4 454.5,243.7 454.2,244.2 454.2,244.7 454.1,245.3 453.8,245.7 453.5,246.1 453.2,246.7 452.5,246.5M457.4,247.4 457.0,246.6 456.4,246.2 456.5,245.4 456.2,244.7M463.7,251.8 464.1,252.2 464.3,252.8 464.2,253.4 464.1,254.0M464.1,254.0 464.0,254.7 464.4,255.3 464.6,256.0 465.0,256.5M465.1,258.6 464.8,258.1 464.6,257.6 464.9,257.1 465.0,256.5M463.6,249.8 463.0,248.9 462.0,248.6 462.9,247.9 462.9,246.8M458.8,248.1 459.3,247.4 460.0,247.7 460.6,247.5 461.1,247.0M461.1,247.0 461.5,247.1 462.0,247.0 462.4,246.8 462.9,246.8M466.1,245.2 465.1,245.2 464.5,246.1 463.7,246.5 462.9,246.8M463.7,251.8 463.5,251.3 463.5,250.8 463.7,250.4 463.6,249.8M457.4,247.4 458.0,248.0 458.8,248.1M371.2,267.7 370.6,267.8 370.1,267.8M370.1,267.8 369.6,267.7 369.3,267.3 369.0,267.0 368.7,266.7M368.7,266.7 368.5,266.2 368.4,265.7M370.2,263.3 370.8,262.7 371.5,263.0M372.2,268.0 371.8,267.4 371.2,267.7M368.0,263.0 367.5,263.2 367.4,263.8M368.0,263.0 368.6,263.2 369.1,263.0M369.1,263.0 369.8,262.6 370.2,263.3M367.6,264.6 367.8,265.3 368.4,265.7M367.4,270.1 368.0,269.7M367.2,267.1 367.9,266.6 368.7,266.7M370.1,268.7 370.1,267.8M372.9,273.4 372.9,272.7 372.9,271.9M372.9,273.4 373.9,272.8 374.7,273.7M374.7,273.7 375.5,273.5 376.3,273.3M371.8,274.2 372.3,273.7 372.9,273.4M378.6,273.6 378.5,274.2 378.5,274.8M378.6,273.6 378.1,273.2 377.5,273.1 376.8,272.9 376.3,273.3M372.3,269.9 372.5,270.5 372.6,271.1M370.1,269.9 369.3,270.3M372.6,268.2 372.7,269.1 372.3,269.9M372.9,271.9 372.9,271.5 372.6,271.1M370.1,268.7 370.3,269.3 370.1,269.9M370.8,274.3 371.3,274.2 371.8,274.2M368.0,269.7 368.4,270.5 369.3,270.3M378.6,273.6 379.1,273.4M379.1,273.4 379.6,273.2 379.9,273.0M383.5,263.7 383.8,264.6 384.4,265.3M383.5,263.7 383.6,263.1 383.9,262.6M385.0,262.1 385.1,262.6 385.3,263.1 385.4,263.6 385.2,264.1M385.2,264.1 384.7,264.7 384.4,265.3M380.7,265.8 381.3,266.0 382.0,266.2M382.0,266.2 382.5,266.6 383.2,266.6 383.9,266.5 384.2,265.9M384.2,265.9 384.4,265.3M384.2,265.9 384.4,266.4 384.7,266.8M385.3,270.1 384.6,270.3M385.3,270.1 385.5,269.3 385.7,268.5M385.7,268.5 385.7,267.9 385.4,267.5M384.7,266.8 385.3,266.9 385.4,267.5M379.2,254.8 379.1,255.4 379.3,255.9M379.3,255.9 379.7,256.7 380.3,257.3M380.3,257.3 380.9,257.9 381.5,257.3M379.9,258.0 380.3,257.3M382.7,258.0 382.0,257.8 381.5,257.3M379.3,254.2 379.3,254.0M379.3,254.2 379.2,254.8M377.5,253.8 377.0,254.0 376.7,254.4M374.6,265.8 375.0,265.4 375.2,264.9M371.5,263.0 371.8,262.4 371.9,261.8M375.2,264.9 375.7,264.8 376.2,264.8M376.2,264.8 376.3,264.6M376.3,264.6 376.4,264.0 376.7,263.4 376.7,262.8 376.8,262.2M376.8,262.2 376.3,262.1 375.9,261.9 375.5,261.7 375.2,261.3M379.9,258.0 379.9,258.7 379.3,258.9M376.3,252.1 376.0,251.6 375.5,251.3M374.7,250.6 375.2,250.8 375.5,251.3M376.9,252.8 376.8,252.4 376.3,252.1M375.7,254.9 376.1,254.5 376.7,254.4M374.5,249.7 374.9,250.1 374.7,250.6M395.3,252.5 395.6,251.8 396.1,251.2M397.2,250.3 396.1,250.2 396.1,251.2M391.8,253.2 392.3,253.3 392.8,253.6 392.7,254.1 393.2,254.5M395.1,255.1 394.9,254.4 395.4,253.8 395.8,253.2 395.3,252.5M388.5,250.1 387.8,249.7 387.8,248.9M388.9,246.1 388.9,246.9 388.2,247.2 387.6,247.6 387.3,248.2M387.3,248.2 387.8,248.9M390.9,253.1 391.4,253.2 391.8,253.2M388.6,251.4 388.5,250.7 388.5,250.1M388.3,244.0 389.1,243.9 389.7,243.5 390.0,242.8 390.0,242.0M388.3,244.0 388.4,244.6 388.8,245.0 388.5,245.6 388.9,246.1M390.0,242.0 390.5,241.2 391.5,241.3M388.0,244.0 387.2,244.3 387.1,245.1 386.5,245.6 386.2,246.3M388.0,244.0 388.3,244.0M386.2,246.3 386.3,246.9 386.0,247.4M386.0,247.4 386.2,248.3 387.3,248.2M379.4,252.2 380.0,252.3 380.3,251.9 380.8,251.7 381.1,251.4M380.6,249.8 380.6,249.3 380.3,248.8M387.8,260.2 387.1,259.9M387.8,261.1 387.1,261.2 386.6,261.7M386.6,261.7 386.1,261.8 385.6,261.9M385.8,259.6 386.5,259.7 387.1,259.9M382.7,258.0 383.2,258.3 383.8,258.3M383.8,258.3 384.5,258.4 385.0,258.7M385.8,259.6 385.5,259.1 385.0,258.7M390.9,253.1 390.5,253.8 389.8,254.1M366.8,231.9 366.3,232.3 365.8,232.6 365.4,233.1 365.0,233.5M371.3,233.1 371.8,233.7 372.3,234.4M375.8,236.6 375.3,236.4 374.9,236.1 374.4,236.2 373.8,236.2M372.3,234.4 372.8,234.7 373.3,235.1 373.4,235.7 373.8,236.2M356.0,235.6 356.9,235.4 357.7,235.7 358.4,236.5 359.3,235.9M359.3,235.9 360.0,235.7 360.6,235.3 361.3,234.8 362.0,235.3M365.0,233.5 364.9,234.0 364.5,234.4 364.1,234.7 363.6,234.9M362.0,235.3 362.8,235.2 363.6,234.9M364.6,238.4 364.6,239.0 364.4,239.4 364.6,239.9 364.5,240.4M364.1,241.4 364.4,240.9 364.5,240.4M373.2,238.5 373.6,237.8 373.0,237.2 373.5,236.7 373.8,236.2M363.6,234.9 363.2,235.4 362.6,235.7 362.9,236.3 363.1,236.9 363.3,237.4 363.8,237.8 364.1,238.2 364.6,238.4M364.1,242.8 363.9,242.1 364.1,241.4M384.9,242.3 384.7,242.8 384.5,243.2M384.9,242.3 385.3,241.7 385.3,241.0 385.4,240.2 386.2,239.9M383.4,237.2 383.9,237.7 384.6,237.5 385.1,237.9 385.5,238.3M386.2,239.9 385.7,239.2 385.5,238.3M388.0,244.0 387.3,243.5 386.6,242.9 385.6,243.0 384.9,242.3M383.7,244.8 383.9,243.9 384.5,243.2M382.5,234.5 381.8,234.5 381.7,235.2 382.0,235.7 381.8,236.2M381.8,236.2 382.2,236.4 382.6,236.8 382.9,237.2 383.4,237.2M380.3,248.8 380.6,248.4 380.6,247.8M381.5,246.7 381.3,247.5 380.6,247.8M383.7,244.8 383.1,244.8 383.0,245.4 382.6,245.6 382.2,245.8M381.5,246.7 382.0,246.4 382.2,245.8M371.7,244.6 372.3,244.4 372.9,244.4M372.9,244.4 373.8,244.4M373.4,240.2 373.5,240.8 374.1,240.8M370.0,244.8 370.8,244.6 371.7,244.6M373.2,238.5 373.2,239.0 372.8,239.4 373.0,239.9 373.4,240.2M367.9,276.6 368.6,276.2M368.6,276.2 369.1,275.9 369.1,275.4 369.5,275.1 369.9,274.7M366.2,273.7 366.6,273.1 367.2,272.8M367.3,271.8 367.4,272.3 367.2,272.8M366.0,276.6 366.5,276.8 367.0,277.2 367.4,276.8 367.9,276.6M369.9,277.8 369.7,277.4 369.3,277.0 369.2,276.4 368.6,276.2M370.8,274.3 370.4,274.7 369.9,274.7M367.4,270.1 367.5,270.9 367.3,271.8M421.8,264.0 421.4,264.4 421.2,265.0 421.3,265.6 421.7,266.1M421.8,264.0 422.0,263.3 422.3,262.7 422.1,262.0 421.8,261.4M417.3,260.0 417.9,259.7 418.4,259.5 418.8,259.0 418.9,258.4M421.8,261.4 421.8,260.7 421.8,260.0 421.4,259.3 421.9,258.6M422.2,269.1 421.8,268.4 421.8,267.6 421.6,266.9 421.7,266.1M422.2,269.1 421.6,269.4 421.2,270.0 420.7,270.4 420.1,270.7M414.2,259.1 415.0,259.4 415.8,259.3 416.5,259.8 417.3,260.0M418.6,255.5 419.0,256.2 419.4,256.9 419.0,257.6 418.9,258.4M423.6,255.7 423.6,256.6 422.8,257.1 422.2,257.8 421.9,258.6M419.7,254.1 420.1,254.4 420.6,254.3 421.1,254.4 421.6,254.3 422.1,254.4 422.5,254.4 423.0,254.5 423.4,254.7M431.3,258.2 431.7,258.8 431.8,259.6 432.4,260.0 433.1,260.3M434.4,262.6 434.2,261.9 433.9,261.3 433.3,261.0 433.1,260.3M430.1,256.5 430.4,257.1 430.2,257.7 430.7,257.9 431.3,258.2M435.7,264.3 436.3,263.9 436.6,263.3M435.7,264.3 435.5,263.8 435.0,263.5 434.8,263.0 434.4,262.6M362.7,281.6 361.7,281.7 361.2,280.9M360.8,286.8 361.6,286.2 362.5,285.7 362.0,284.7 362.2,283.7M361.2,280.9 360.6,281.1 360.0,281.1 359.4,280.9 358.9,280.7M374.9,255.4 375.4,255.3 375.7,254.9M372.6,254.4 372.7,255.2M363.6,265.8 363.0,265.5 362.5,265.1M361.4,264.4 361.9,264.8 362.5,265.1M365.2,248.8 365.9,249.1M365.9,249.1 366.6,249.4 367.2,249.8M371.6,249.7 371.1,250.3M371.1,251.3 371.4,250.9 371.1,250.3M367.2,249.8 367.6,250.0 368.0,250.3M368.0,250.3 368.2,250.9M399.4,274.7 399.0,274.1 399.2,273.4 398.2,273.5 398.1,272.6M408.4,270.9 408.8,270.2 408.4,269.5 407.8,269.1 407.1,269.4M407.1,269.4 406.9,268.2 405.8,268.1 406.2,267.3 406.7,266.6M385.3,270.1 386.0,270.2 386.7,270.3M384.6,270.3 384.1,270.1 383.7,270.5M468.9,297.3 469.1,298.0 468.9,298.6 468.7,299.2 468.8,299.8 468.2,299.9 467.6,300.2 467.2,300.7 466.6,300.9M472.1,302.7 471.4,302.1 470.7,301.7 469.9,302.1 469.0,302.1M469.0,302.1 468.9,301.3 468.2,300.8 467.4,301.6 466.6,300.9M469.0,294.7 468.5,295.3 468.1,296.0 468.0,297.0 468.9,297.3M469.0,294.7 469.6,294.3 470.0,293.7 469.9,292.9 470.5,292.4 471.3,292.2 471.9,291.8 472.6,292.0 473.3,292.0M475.1,292.8 474.7,292.4 474.2,292.4 473.7,292.3 473.3,292.0M473.1,307.2 473.4,306.6 473.4,306.0 474.0,305.8 474.5,305.4M474.5,305.4 473.8,305.1 474.3,304.5 474.1,304.0 473.7,303.7 473.4,303.3 473.0,303.0 472.6,302.7 472.1,302.7M466.6,300.9 466.2,301.3 465.7,301.3 465.2,301.1 464.7,301.4M464.7,301.4 464.7,302.3 464.0,302.8 463.2,302.8 462.4,303.0M458.5,306.2 458.5,305.5 458.7,304.9 458.8,304.3 459.3,303.8M462.4,303.0 461.6,303.4 461.0,304.0 460.1,304.0 459.3,303.8M473.9,290.6 474.0,291.5 473.3,292.0M469.0,294.7 468.4,294.3 468.1,293.6M468.1,293.6 468.3,293.0 467.9,292.5 467.6,292.0 467.5,291.5M466.2,288.8 466.5,289.5 466.9,290.1 467.2,290.8 467.5,291.5M462.5,285.6 462.2,286.0 461.9,286.4M466.2,288.8 465.4,288.6 464.7,288.1 463.9,288.4 463.2,289.0 463.6,288.1 462.8,287.6 462.1,287.2 461.9,286.4M459.1,288.1 458.5,288.5 457.8,288.7 456.9,288.5 456.4,289.3M459.1,288.1 459.6,288.1 460.0,287.7 460.5,287.5 460.9,287.1M461.9,286.4 461.4,286.8 460.9,287.1M475.1,292.8 475.3,291.4 476.7,291.3 476.2,292.7 477.5,293.2M492.5,288.1 492.1,288.3 491.6,288.1 491.1,288.0 490.7,288.3M488.5,283.3 488.0,284.2 488.5,285.0 488.3,285.9 487.7,286.6M490.7,288.3 489.7,288.3 488.9,288.0 488.0,287.5 487.7,286.6M485.7,289.9 485.9,289.4 486.1,289.0 485.9,288.5 486.0,288.0M486.0,288.0 486.0,287.3 486.6,287.0 487.2,286.8 487.7,286.6M444.4,299.3 444.1,298.6 443.9,297.8 443.1,297.7 442.3,297.6M450.0,297.6 450.3,297.0 449.9,296.5M445.0,301.0 444.7,300.7 444.7,300.2 444.7,299.7 444.4,299.3M438.9,296.5 439.8,296.5 440.7,296.7 441.4,297.3 442.3,297.6M450.5,301.5 451.1,301.2 451.0,300.6 451.4,300.1 451.2,299.6M451.2,299.6 451.1,298.9 450.5,298.7 450.4,298.1 450.0,297.6M451.0,295.2 450.7,296.0 449.9,296.5M435.6,287.2 436.4,287.3 437.0,287.7 437.8,287.6 438.4,288.1M438.4,288.1 439.2,287.9 439.9,288.0 440.6,287.9 441.3,288.0M441.3,288.0 442.2,287.8 442.7,287.1M443.1,285.3 442.6,285.6 442.8,286.2 442.6,286.7 442.7,287.1M433.3,287.1 433.8,286.5 434.5,286.2 435.1,286.7 435.6,287.2M444.4,282.6 444.3,283.4 444.0,284.1 444.0,285.0 443.1,285.3M448.5,287.1 448.7,287.6 449.3,287.8 449.5,288.2 449.7,288.7M435.7,264.3 435.2,264.5 434.7,265.0 434.9,265.6 434.6,266.1M432.7,268.4 433.2,267.5 434.2,267.7 434.6,267.0 434.6,266.1M437.2,275.9 436.3,276.3 435.4,276.1 434.5,275.8 433.6,275.6M432.2,276.8 432.5,276.5 432.9,276.2 433.3,276.0 433.6,275.6M429.4,281.8 430.3,281.3 430.9,280.4 431.1,279.3 430.4,278.5M432.2,276.8 431.9,277.4 431.3,277.6 430.6,277.8 430.4,278.5M433.6,275.6 433.6,274.8 433.2,274.1 432.8,273.4 432.8,272.6M432.7,268.4 432.9,269.2 432.9,270.0 432.2,270.5 431.7,271.1M432.8,272.6 432.7,272.1 432.6,271.6 432.1,271.4 431.7,271.1M455.0,274.2 454.6,273.6 454.0,273.2 453.3,273.0 452.5,273.0M452.5,273.0 452.2,273.3 452.1,273.8 452.0,274.4 451.5,274.7 451.4,275.1 451.1,275.5 451.3,276.1 450.9,276.5M445.7,275.9 446.3,275.6 446.8,275.9 447.4,275.8 447.9,276.0 448.4,276.6 449.2,276.4 449.2,277.1 449.3,277.7M452.5,273.0 452.5,272.2 452.6,271.5M449.3,277.7 449.4,277.1 449.6,276.6 450.3,276.3 450.9,276.5M444.4,282.6 445.0,282.0 444.9,281.1 445.8,280.9 446.5,281.3M449.3,277.7 449.0,278.3 448.6,278.8 448.8,279.4 448.5,280.0 447.9,280.0 447.3,280.4 446.8,280.8 446.5,281.3M448.5,287.1 448.8,286.4 449.0,285.7 448.8,285.0 448.3,284.4M446.5,281.3 446.9,282.3 446.6,283.3 447.3,284.2 448.3,284.4M450.0,263.0 450.1,263.9 451.0,264.3 451.8,264.1 452.6,264.3M452.6,264.3 452.8,264.8 452.9,265.3 452.7,265.8 453.2,266.2M453.2,266.2 453.3,266.8 453.7,267.4 453.3,267.9 453.0,268.5M452.6,271.5 453.0,270.8 453.2,270.1 453.1,269.3 453.0,268.5M448.2,261.7 449.0,261.7 449.1,262.4 449.6,262.5 450.0,263.0M455.1,262.0 454.2,262.2 453.8,263.1 453.2,263.8 452.6,264.3M422.6,243.9 422.1,244.6 422.1,245.4 422.9,245.6 423.4,246.3M423.4,246.3 423.2,247.0 423.6,247.7 423.6,248.4 424.0,249.1M421.1,241.9 421.7,242.3 422.3,242.6 422.0,243.4 422.6,243.9M425.4,251.5 424.5,251.2 423.8,250.8 424.4,250.0 424.0,249.1M367.5,287.9 367.1,288.7 366.2,288.6 365.5,288.6 364.8,288.6M364.8,288.6 364.3,288.2 363.7,288.4 363.0,288.2 362.7,288.8 362.2,289.4 362.3,290.0 361.7,290.2 361.1,290.4M363.7,294.2 363.5,293.7 363.1,293.4 362.8,293.0 362.7,292.5 362.4,291.9 362.2,291.3 361.6,291.4 361.0,291.5M361.0,291.5 361.2,291.0 361.1,290.4M369.1,286.6 368.6,286.9 368.0,286.9 367.7,287.4 367.5,287.9M360.8,286.8 361.2,287.7 361.3,288.6 360.6,289.5 361.1,290.4M367.7,298.8 367.2,298.7 366.8,298.3 366.4,298.6 365.8,298.4 365.8,297.8 365.3,297.6 364.9,297.3 364.6,296.9M367.7,298.8 367.5,299.6 368.1,300.3 368.9,300.1 369.6,300.2M364.6,296.9 363.9,297.4 364.1,298.3M364.1,298.3 364.7,299.1 364.6,300.0 364.0,300.7 363.1,300.9M363.7,294.2 363.7,294.9 363.6,295.7 364.5,296.0 364.6,296.9M359.1,292.8 359.8,292.5 360.5,292.8 361.0,292.3 361.0,291.5M361.6,302.7 362.0,302.2 362.1,301.5 362.5,301.1 363.1,300.9M368.1,311.8 368.5,311.3 368.6,310.6 369.0,310.2 369.6,310.1M369.6,310.1 370.2,309.7 370.8,309.9 371.2,309.4 371.9,309.5M375.8,310.0 375.2,309.6 374.9,309.0 374.3,309.2 373.6,309.0M375.8,310.0 376.3,310.3 376.4,311.0 376.7,311.5 376.7,312.1M373.6,309.0 372.6,308.9 371.9,309.5M345.4,316.0 345.7,316.4 346.2,316.5 346.6,316.8 346.6,317.3M345.4,316.0 345.1,315.9M344.8,320.2 345.2,320.0 345.7,319.8 345.8,319.3 346.3,319.1M346.6,317.3 346.6,318.2 346.3,319.1M347.0,323.9 347.2,323.2 347.7,322.7 348.2,322.4 348.7,322.0M361.3,309.1 361.5,309.9 361.0,310.5M361.0,310.5 361.8,310.7 362.6,310.4 363.1,311.0 363.8,311.3M368.1,311.8 367.7,312.1 367.3,312.5 367.0,312.9 366.7,313.3M361.0,310.5 360.6,311.2 359.8,311.3 359.9,312.0 360.0,312.7M360.0,312.7 360.5,313.3 361.4,313.5 361.4,314.3 362.1,314.9M363.8,311.3 364.5,311.3 365.1,311.5 365.0,312.2 365.4,312.8M366.7,313.3 365.9,313.4 365.4,312.8M507.4,392.7 506.8,392.5 506.5,391.9 506.1,391.4 505.8,390.9M505.8,390.9 505.3,390.4 504.6,390.1 504.6,389.2 503.8,388.8M519.1,385.1 519.5,384.5 519.9,383.9 520.4,383.3 520.3,382.5M520.3,382.5 520.2,382.0 520.2,381.6 520.8,381.3 520.6,380.7M516.9,376.2 517.6,376.4 518.1,376.9 518.4,377.6 519.3,377.6M519.2,389.1 519.2,388.2 519.9,387.5 520.7,387.3 521.6,387.1 520.9,386.6 520.7,385.7 519.8,385.7 519.1,385.1M511.9,421.8 511.9,422.3 511.7,422.8 511.5,423.3 511.0,423.5M510.8,426.9 511.0,426.0 510.6,425.2 510.6,424.3 511.0,423.5M514.6,421.0 513.9,420.8 513.1,420.9 512.3,421.1 511.9,421.8M491.6,400.7 491.5,399.9 492.0,399.3 491.6,398.8 491.4,398.1 490.9,397.7 490.3,397.3 489.7,397.1 489.3,396.5M489.3,396.5 488.9,396.1 488.7,395.6 488.9,395.0 488.4,394.5M492.2,386.8 491.6,386.7 491.0,386.9 490.5,387.4 489.9,387.3 489.5,386.5 488.7,386.6 488.1,386.9 487.5,387.2M487.5,387.2 487.7,387.9 488.0,388.6 488.3,389.2 488.9,389.6 489.2,390.4 488.6,391.0 488.1,391.6 488.0,392.3M488.4,394.5 488.7,393.9 489.0,393.3 488.5,392.8 488.0,392.3M431.3,386.0 431.1,386.5 430.6,386.6 430.1,386.8 429.8,387.2 429.6,387.6 429.2,388.0 429.1,388.5 428.7,388.8M425.5,388.0 426.1,388.7 426.9,389.1 427.7,388.6 428.7,388.8M428.7,388.8 428.4,389.4 428.3,390.0 428.6,390.5 428.8,391.1M467.9,433.0 467.5,432.4 467.1,431.8 466.5,431.3 465.9,430.9M471.7,429.0 471.5,428.3 471.1,427.7 470.6,427.1 470.1,426.6M466.3,401.2 465.5,401.2 464.7,401.4 464.1,400.7 463.2,400.9M460.8,398.4 461.3,399.1 461.2,399.9M463.2,400.9 462.8,400.5 462.3,400.3 461.7,400.1 461.2,399.9M395.6,410.2 395.3,409.8M391.0,444.2 391.0,444.1M389.9,435.1 389.2,435.7 389.1,435.8M466.4,448.3 465.8,448.9 465.3,449.1M414.7,378.7 415.0,378.2 414.9,377.7 415.2,377.2 415.2,376.6M414.7,378.7 414.9,379.4 415.2,380.1 415.4,380.9 415.9,381.5M415.9,381.5 416.5,381.6 416.9,381.1 417.4,381.0 417.9,381.0M417.9,381.0 418.6,381.3 419.1,380.8 419.9,380.9 420.2,380.2M413.8,382.9 413.5,381.9 414.3,381.3 415.1,381.4 415.9,381.5M423.8,380.3 423.3,380.1 423.0,379.7 422.5,379.5 422.0,379.8 421.7,380.2 421.2,380.4 420.7,380.3 420.2,380.2M405.7,370.5 405.7,371.2 405.4,371.8 405.4,372.6 404.6,372.8M425.0,363.5 424.3,364.0 423.5,364.0 423.0,364.7 422.8,365.5M418.7,363.7 418.9,364.4 419.4,365.0 420.0,365.4 420.7,365.5M420.7,365.5 421.4,366.0 421.8,366.8 422.5,366.3 422.8,365.5M418.2,370.3 417.5,370.3 416.8,370.6 416.1,370.8 415.5,371.0M415.2,374.8 414.6,374.6 414.1,374.3 414.2,373.7 413.9,373.1M415.5,371.0 415.2,371.5 414.7,371.8 414.1,372.0 413.6,371.8M413.6,371.8 413.5,372.5 413.9,373.1M415.2,376.6 415.5,376.2 415.6,375.7 415.3,375.3 415.2,374.8M418.3,368.5 418.2,368.9 418.2,369.4 418.3,369.9 418.2,370.3M418.7,363.7 417.8,364.0 417.0,363.7M418.3,368.5 417.7,368.5 417.2,368.2 417.0,367.7 417.0,367.1 416.5,367.5 415.9,367.4 415.3,367.1 415.2,366.5M417.0,363.7 416.5,364.5 416.5,365.3 415.9,366.0 415.2,366.5M414.2,366.5 414.7,366.3 415.2,366.5M384.9,370.6 385.2,370.4 386.0,370.3M378.6,366.1 378.0,365.8 377.2,365.9 376.6,366.3 376.1,366.7M378.6,366.1 379.5,366.4 379.5,367.3M379.5,367.3 380.3,368.0 381.4,368.3 382.0,369.4M387.5,370.6 386.8,370.1 386.0,370.3M387.9,371.8 387.7,371.4 387.9,370.6M402.4,375.8 402.4,375.5 402.4,375.0M404.6,372.8 404.0,373.0 403.4,373.3 403.0,373.9 402.5,374.3M402.5,374.3 402.4,375.0M390.4,368.5 391.3,369.1 391.6,370.1 392.7,370.0 393.4,369.2M393.4,369.2 394.0,368.6 394.0,367.7 394.7,368.3 395.5,368.4M385.8,351.8 385.4,351.3 385.2,350.8 385.4,350.2 385.6,349.6M385.9,347.8 385.3,348.0 385.2,348.6 385.0,349.3 385.6,349.6M385.8,353.2 386.1,352.5 385.8,351.8M389.7,344.4 389.1,344.0 388.4,343.8M389.7,344.4 390.4,344.5 391.0,344.2 391.3,344.9 391.8,345.4M388.4,343.8 388.0,344.4 387.8,345.2 387.3,345.8 386.8,346.4M386.8,346.4 386.2,347.0 385.9,347.8M379.8,338.5 380.1,339.0 379.8,339.4 380.2,339.8 380.5,340.2M386.2,341.3 385.4,341.6 384.8,342.2M386.2,341.3 387.1,341.5 387.6,342.3 387.6,343.3 388.4,343.8M382.6,344.0 383.0,343.3 383.6,343.0 384.2,342.6 384.8,342.2M386.2,341.3 387.0,340.9 387.8,340.3 388.0,339.3 388.3,338.4M399.0,348.3 399.0,349.0 398.5,349.3 397.9,349.9 398.3,350.5M395.1,347.0 395.3,347.7 395.7,348.3 395.8,349.0 395.8,349.8M395.8,349.8 396.0,350.5 396.3,351.2 397.0,351.6 397.8,351.6M398.3,350.5 398.3,351.2 397.8,351.6M394.1,345.7 394.1,346.7 395.1,347.0M399.6,346.5 399.7,347.0 399.5,347.5 399.1,347.8 399.0,348.3M391.8,345.4 392.4,345.2 393.0,345.3 393.7,345.3 394.1,345.7M397.3,354.7 397.4,353.8 397.9,353.2 397.6,352.4 397.8,351.6M397.3,354.7 396.6,354.8 396.7,355.5 396.9,356.0 396.8,356.6M397.3,361.2 398.2,361.0 398.8,360.2 399.6,359.3 400.6,360.1M400.6,360.1 400.9,360.7 401.5,361.1 402.3,361.1 403.0,361.3M388.3,338.4 388.6,337.9 389.0,337.5 389.4,337.1 390.0,337.1M401.3,340.2 400.5,339.7 400.0,339.1M390.0,337.1 390.6,337.0 391.1,336.7 391.7,336.4 392.1,335.9M392.1,335.9 392.6,336.5 393.4,336.5 394.1,336.9 394.8,336.3M391.9,334.1 391.7,333.2 391.6,332.3M391.6,332.3 391.5,331.8 391.2,331.4 391.5,330.7 390.9,330.4M392.1,335.9 392.5,335.5 392.9,334.9 392.2,334.8 391.9,334.1M555.2,414.1 554.7,414.2 554.1,414.2 553.8,414.6 553.2,414.8M550.3,404.8 549.6,405.4 548.7,405.5M557.8,414.2 557.2,413.9 556.5,413.6 556.0,414.2 555.2,414.1M551.3,417.1 552.2,417.0 552.8,416.4 552.8,415.5 553.2,414.8M543.3,401.3 543.7,401.8 544.3,401.7 544.0,402.4 544.7,402.7 544.8,403.3 545.2,403.7 545.0,404.2 544.7,404.7M544.7,404.7 545.2,405.7 545.5,406.8 544.5,407.3 543.6,407.8M544.2,410.7 544.0,410.0 543.8,409.3 544.3,408.5 543.6,407.8M548.7,405.5 548.1,405.5 547.6,406.0 547.0,405.9 546.6,405.4 546.1,405.1 545.6,405.3 545.2,404.9 544.7,404.7M527.5,412.2 526.9,412.1 526.4,411.9 526.0,411.4 526.0,410.8M522.7,410.4 523.6,411.1 524.2,412.0 525.1,411.5 526.0,410.8M527.7,415.2 527.8,414.4 527.7,413.7 527.6,412.9 527.5,412.2M523.5,395.0 524.1,394.4 525.0,394.6 525.8,394.1 526.5,394.7M526.5,394.7 527.2,395.5 527.5,396.5 528.6,397.2 529.6,396.4M529.6,396.4 530.2,396.2 530.8,396.2 531.3,395.8 531.5,395.2 532.0,394.9 532.6,394.7 533.2,394.4 533.7,394.9M525.6,400.6 526.3,400.0 527.2,400.0 527.8,399.3 528.4,398.7M529.6,396.4 529.5,397.1 529.1,397.6 528.3,397.9 528.4,398.7M550.3,404.8 550.5,404.2 550.7,403.5 551.1,403.1 551.4,402.5M551.4,402.5 551.7,401.7 551.9,400.8 552.6,400.3 553.3,399.8M516.6,361.7 516.1,362.5 515.5,363.1 516.0,363.8 516.1,364.8M516.1,364.8 516.3,365.4 516.3,366.0 516.7,366.5 517.1,367.0M517.1,367.0 517.4,367.6 517.7,368.2 518.2,368.6 518.7,369.1M520.3,374.6 520.6,374.0 520.7,373.3 520.8,372.6 521.4,372.2 521.0,371.7 520.5,371.3 519.9,370.9 519.6,370.2M525.8,370.9 525.2,370.2 524.6,369.5 523.7,369.8 522.8,370.0M522.8,370.0 521.9,370.0 521.2,370.5 520.4,370.5 519.6,370.2M519.6,370.2 519.2,369.7 518.7,369.1M508.7,357.4 508.4,356.9 508.0,356.3 508.5,355.8 508.3,355.1 508.9,354.7 509.3,354.2 509.1,353.5 509.1,352.9M509.1,352.9 509.6,352.4 510.2,352.3 510.7,351.8 511.1,351.3 511.8,351.4 512.4,351.0 513.0,351.3 513.7,351.2M515.6,355.1 514.8,354.5 513.9,354.3 514.3,353.4 514.1,352.5M513.7,351.2 514.4,351.7 514.1,352.5M507.6,350.6 507.9,351.3 507.8,352.0 508.4,352.6 509.1,352.9M506.7,360.8 507.0,360.3 507.5,360.0 507.6,359.4 507.3,358.9 507.9,358.8 508.3,358.5 508.6,358.0 508.7,357.4M519.3,357.8 518.8,357.4 518.4,357.0 517.8,356.9 517.3,356.7 517.2,356.0 517.1,355.3 516.3,355.7 515.6,355.1M519.3,357.8 518.5,357.2 517.5,357.1 517.4,358.2 516.4,358.6 516.3,359.4 516.2,360.2 515.9,361.1 516.6,361.7M511.9,348.5 512.0,349.5 511.9,350.4 513.1,350.2 513.7,351.2M590.1,395.4 589.4,395.9 589.6,396.5M590.1,395.4 589.4,395.1 589.1,394.5 588.8,393.9 589.0,393.3 589.5,392.8 590.2,392.6 590.7,392.0 590.3,391.3M586.1,398.2 586.3,398.6M586.1,398.2 585.5,397.3 584.5,397.4 584.6,396.3 583.5,395.9M590.3,388.4 590.5,388.7M590.7,389.3 590.4,389.8 590.5,390.6 590.3,391.3M580.2,395.0 581.1,394.6 582.1,394.8 582.6,395.5 583.5,395.9M519.3,357.8 519.9,357.7 520.1,357.0M520.1,357.0 520.9,357.5 521.8,357.3 522.4,356.6 522.5,355.7M528.6,351.3 528.4,352.3 527.9,353.1 527.0,353.4 526.3,354.0M522.5,355.7 523.0,355.7 523.5,355.4 523.8,354.9 524.4,355.0 524.8,354.7 525.3,354.5 525.8,354.3 526.3,354.0M533.7,394.9 534.3,394.9 534.7,395.3 535.2,395.3 535.7,395.5 536.4,395.2 536.7,395.8 537.2,396.1 537.8,395.9M539.0,396.8 538.3,396.5 537.8,395.9M511.2,302.5 510.6,302.5 510.1,302.8 509.6,302.9 509.0,302.8M507.0,307.7 507.9,307.9 508.4,308.6M513.4,301.8 512.8,302.0 512.4,302.6 511.8,302.5 511.2,302.5M508.1,309.3 508.4,308.6M507.0,302.6 507.4,303.2 508.0,303.3 508.5,302.9 509.0,302.8M504.4,306.3 505.4,305.8 506.5,305.7 507.2,306.6 507.0,307.7M380.5,340.2 380.8,340.9 381.4,341.4 380.7,341.9 380.6,342.7M382.6,344.0 381.9,344.5 381.2,345.0M381.2,345.0 381.4,344.3 381.5,343.6 381.1,343.0 380.6,342.7M378.7,336.9 379.2,337.3 379.2,337.8 379.5,338.1 379.8,338.5M343.4,282.3 343.9,282.0 344.7,282.3 345.5,282.0M345.5,282.0 345.8,281.0 346.8,280.8 347.6,280.6 348.4,280.1M365.7,320.5 365.4,320.0 364.9,319.8 364.6,319.4 364.2,319.0M364.2,319.0 364.3,318.5 364.1,317.9 363.8,317.4 363.2,317.2M367.8,321.9 367.3,321.4 367.0,320.9 366.2,320.9 365.7,320.5M362.1,314.9 362.7,315.2 363.0,315.8 363.1,316.5 363.2,317.2M356.0,309.6 355.7,310.1 355.9,310.7 356.5,310.7 356.8,311.3M360.0,312.7 359.7,312.8M356.8,311.3 357.7,311.0 358.6,311.4 359.6,311.8 359.7,312.8M359.7,312.8 359.5,313.6 359.2,314.3 358.6,314.9 357.7,315.0M354.1,319.2 354.0,318.7 354.2,318.2 354.5,317.7 354.4,317.1M357.7,315.0 357.1,314.8 356.5,315.0 355.9,315.4 355.5,315.9M354.4,317.1 355.0,316.6 355.5,315.9M348.7,322.0 349.2,322.5 349.8,322.0 350.3,321.8 350.5,321.3M357.7,356.9 357.2,357.9M357.7,356.9 357.6,356.1 358.5,355.9M359.2,353.7 358.7,354.2 358.7,354.8 358.9,355.5 358.5,355.9M362.8,352.3 363.2,353.1 363.9,353.6M355.0,355.4 355.9,355.8 356.8,355.3 356.6,356.5 357.7,356.9M365.2,367.6 365.1,366.9 365.8,366.5 366.4,366.1 367.1,366.1M367.1,366.1 367.4,365.2 367.5,364.2 366.8,363.5 366.7,362.5M367.1,366.1 367.6,365.8 368.3,365.9M368.3,365.9 368.8,366.1 369.4,365.9 369.9,365.8 370.4,365.6M370.4,365.6 370.9,365.8 371.3,366.2 372.0,366.2 372.4,365.8M376.1,366.7 375.5,366.5 375.0,366.6 374.5,366.5 373.9,366.4M373.9,366.4 373.1,366.3 372.4,365.8M407.3,366.5 408.1,366.3 408.7,365.6M403.0,361.3 403.4,361.8 403.8,362.4 404.5,362.3 405.2,362.3M405.2,362.3 405.8,362.1 406.3,362.4 406.9,362.4 407.5,362.3M408.7,365.6 409.1,366.1 409.8,365.9 410.3,365.7 410.9,365.9M414.2,366.5 413.7,366.3 413.2,366.4 412.8,366.1 412.2,366.0M410.9,365.9 411.6,366.1 412.2,366.0M398.4,322.3 398.9,322.2 399.3,321.8 399.8,321.7 400.2,321.4 400.9,321.3 401.2,321.9 401.7,321.6 402.2,321.5M398.4,322.3 398.7,321.7 399.4,321.5 399.2,320.9 399.2,320.3 398.5,320.3 398.2,319.7 397.9,319.2 397.7,318.7M401.6,306.8 402.0,307.3 402.3,308.0 403.0,307.6 403.6,308.2M401.6,306.8 401.1,307.4 400.8,308.0 400.0,308.2 399.3,308.0M405.6,309.5 405.2,309.1 404.8,308.6 404.2,308.4 403.6,308.2M388.3,303.4 388.6,303.9 388.9,304.2 389.0,304.8 388.6,305.2M388.5,307.4 388.5,306.8 388.9,306.4 388.9,305.8 388.6,305.2M401.6,306.8 401.8,306.0 401.7,305.1M396.9,307.7 397.5,308.4 398.1,307.7 398.7,307.9 399.3,308.0M380.6,282.8 381.1,283.1 381.7,282.9 382.2,282.8 382.8,282.7 383.2,282.4 383.8,282.3 384.4,282.2 384.7,281.7M385.8,284.9 386.1,284.0 385.4,283.3 384.7,282.6 384.7,281.7M385.0,278.4 384.7,279.3 385.2,280.1M384.7,281.7 385.2,281.0 385.2,280.1M407.8,309.8 407.3,309.8 406.7,309.8 406.2,309.5 405.6,309.5M418.3,333.6 418.3,334.1 418.8,334.5 419.3,334.4 419.8,334.6M419.8,334.6 420.4,334.4 420.9,334.0 421.5,334.2 422.1,333.9M422.3,330.1 422.4,330.7 422.6,331.2 422.6,331.9 423.2,332.2M422.1,333.9 422.7,333.8 423.3,333.4 423.6,332.8 423.2,332.2M416.1,332.5 416.1,333.3 416.8,333.9 417.6,334.1 418.3,333.6M419.5,337.0 419.9,336.5 420.2,335.9 419.5,335.4 419.8,334.6M421.8,327.6 420.7,328.2 420.0,329.2 420.9,330.3 422.3,330.1M426.5,331.5 426.3,332.8 425.1,333.2 424.2,332.5 423.2,332.2M407.2,317.7 406.2,318.2 405.1,318.0 404.7,316.9 404.9,315.8M407.2,317.7 407.3,316.9 407.9,316.4 408.7,316.6 409.4,316.9M407.8,313.0 407.2,313.4 406.5,313.3 405.9,313.7 405.2,313.5M404.9,315.8 404.8,315.4 404.6,314.9 404.4,314.5 404.1,314.1M405.2,313.5 404.7,313.9 404.1,314.1M406.2,319.9 406.4,319.3 406.4,318.6 406.8,318.2 407.2,317.7M410.8,317.2 410.1,317.2 409.4,316.9M409.4,311.7 408.9,312.0 408.3,312.0 408.0,312.5 407.8,313.0M409.3,309.9 408.5,310.2 407.8,309.8M467.7,333.6 466.6,333.7 466.1,332.7 465.2,333.0 464.4,333.5M467.7,333.6 467.8,332.8 468.5,332.2 469.3,332.4 470.2,332.4M464.4,333.5 464.5,332.6 464.2,331.8 464.2,330.8 464.6,330.0M464.6,330.0 464.9,329.4 465.2,328.7 465.0,328.0 465.1,327.3M461.3,335.4 461.8,335.3 462.2,335.1 462.7,334.9 463.2,335.0 463.5,334.6 463.9,334.3 464.2,334.0 464.4,333.5M472.4,332.0 471.7,332.1 471.2,331.5 471.0,332.3 470.2,332.4M465.1,324.5 465.7,325.1 466.1,325.9 466.1,327.0 465.1,327.3M463.1,169.5 463.9,169.5 464.2,170.2 464.6,169.6 465.0,169.1M464.5,175.8 465.4,176.1 466.2,176.3 467.4,176.1 467.8,177.3M459.3,169.1 459.8,169.3 460.4,169.3 461.0,169.1 461.2,168.6 461.6,169.1 462.0,169.5 462.5,169.5 463.1,169.5M461.6,175.5 462.1,176.2 463.0,176.4 463.8,176.2 464.5,175.8M464.7,166.5 464.3,167.2 464.0,167.9 464.5,168.6 465.0,169.1M469.8,179.8 469.7,178.9 469.0,178.3 468.4,177.8 467.8,177.3M430.0,194.8 429.1,195.4 428.3,194.7 427.6,195.4 426.6,195.2M426.6,195.2 425.9,194.7 425.2,195.1 424.6,195.6 424.2,196.1M434.7,196.5 434.2,196.1 433.6,195.8 433.0,195.5 432.7,194.8 432.0,194.9 431.3,194.9 430.7,194.6 430.0,194.8M421.2,196.4 421.8,195.8 422.7,196.1 423.5,196.0 424.2,196.1M381.5,222.6 382.3,222.8 383.1,222.4 383.8,221.9 384.4,221.4M389.1,222.9 388.9,222.3 388.3,222.1 387.8,221.9 387.3,221.8M387.3,221.8 386.6,221.3 385.9,220.8 385.1,220.9 384.4,221.4M379.1,218.8 380.0,218.9 380.8,218.5 381.7,218.6 382.5,218.2M380.5,213.3 380.9,213.5 381.2,213.8 381.5,214.2 381.8,214.6 381.9,215.1 382.4,215.3 382.8,215.7 383.3,215.6M382.5,218.2 383.1,217.7 383.4,217.1 383.5,216.3 383.3,215.6M395.2,214.7 395.5,215.7 394.5,215.8 394.2,216.4 393.9,217.0M398.0,212.7 397.0,212.2 396.1,213.0 396.2,214.1 395.2,214.7M396.9,225.2 396.0,224.9 395.7,224.1 395.7,223.1 394.9,222.7M394.9,222.7 394.8,221.9 394.8,221.1 395.2,220.3 394.6,219.6M397.5,227.4 397.4,226.7 397.7,226.1 397.3,225.6 396.9,225.2M393.9,217.0 394.0,217.7 394.2,218.3 394.4,219.0 394.6,219.6M391.3,223.4 391.8,223.5 392.3,223.6 392.8,223.6 393.3,223.9 393.8,223.8 394.4,223.8 394.6,223.2 394.9,222.7M571.0,119.3 570.6,119.7 570.0,119.8 569.6,120.1 569.2,120.5 568.9,121.1 568.4,121.4 567.8,121.9 568.3,122.5M571.0,119.3 570.9,118.4 570.7,117.7 571.2,117.0 571.4,116.2 572.2,116.4 573.1,116.5 574.3,116.5 574.3,115.3M565.5,125.6 565.9,125.1 566.4,124.8 566.5,124.1 566.3,123.5 567.0,123.6 567.3,123.0 567.7,122.6 568.3,122.5M579.6,112.2 579.4,112.3 578.8,113.0 578.0,113.4 577.5,114.1 576.6,113.7 575.7,113.9 574.4,114.0 574.3,115.3M507.3,280.5 507.5,281.3 507.4,282.0 506.8,282.2 506.1,282.5M506.1,282.5 505.6,283.2 504.8,283.3 505.0,284.1 504.8,284.8M508.1,278.6 508.8,279.2 509.5,279.7 510.1,279.0 511.0,278.7M508.1,278.6 507.9,279.1 508.1,279.7 507.4,279.9 507.3,280.5M502.4,287.6 502.1,286.9 501.7,286.3 501.8,285.6 502.3,285.1 502.9,284.8 503.5,284.6 504.2,284.6 504.8,284.8M495.1,277.3 495.5,277.9 496.3,278.0 496.9,277.7 497.6,278.0M508.1,278.6 507.5,278.9 507.1,278.4 506.5,278.3 506.2,277.8M506.2,277.8 505.5,278.3 504.7,278.0 504.0,277.9 503.3,277.6M494.5,266.2 494.6,267.0 495.2,267.5 495.8,266.7 496.7,267.2 496.7,266.4 497.5,266.1 498.3,266.2 498.9,266.6M500.4,264.0 500.0,264.3 499.6,264.7 499.5,265.3 499.2,265.8M498.9,266.6 499.6,266.4 499.2,265.8M476.7,305.6 477.5,305.6 478.2,305.4M479.6,305.1 478.9,305.2 478.2,305.4M474.5,305.4 475.0,305.3 475.6,305.2 476.2,305.2 476.7,305.6M481.5,304.9 482.4,304.5 483.1,303.7 483.9,304.4 484.7,305.1M481.5,304.9 481.0,304.8 480.5,304.9 480.1,305.1 479.6,305.1M485.2,267.4 486.0,267.3 486.6,266.8 487.4,267.0 487.9,267.6M485.2,267.4 484.4,267.7 483.6,267.3 482.9,267.8 482.1,267.9M482.1,267.9 481.4,268.6 480.9,269.3 481.2,270.2 481.8,270.9M490.7,267.1 490.0,267.2 489.3,267.3 488.7,267.7 487.9,267.6M479.7,266.0 480.5,266.7 481.4,266.4 482.2,267.0 482.1,267.9M480.7,272.9 480.9,272.2 481.6,272.1 481.6,271.5 481.8,270.9M362.4,255.3 363.2,255.6M358.8,253.2 359.0,253.9 359.1,254.7M361.4,255.7 361.8,255.4 362.4,255.3M361.4,255.7 361.0,255.5 360.4,255.6 360.0,255.8 359.6,256.2M359.6,256.2 359.3,255.5 359.1,254.7M359.1,264.6 359.5,265.4 359.2,266.2M357.3,267.7 358.1,267.9 358.7,267.2M359.2,266.2 358.9,266.7 358.7,267.2M359.7,263.3 360.1,263.7 360.6,263.7 361.1,264.0 361.4,264.4M359.7,263.3 359.4,264.0 359.1,264.6M356.6,268.9 356.8,268.2 357.3,267.7M389.9,435.1 389.4,434.6M390.0,432.5 390.0,432.5 390.6,431.7M402.1,420.7 401.4,421.1 400.6,421.1 399.7,421.2 399.2,421.9M402.1,420.7 401.7,420.1 401.5,419.3 402.0,418.8 402.6,418.3 403.2,417.9 403.8,418.1 404.4,418.4 405.0,418.4M405.0,418.4 404.4,417.7 403.7,417.3 402.7,417.1 402.3,416.2M402.3,416.2 401.9,415.8 401.5,415.3 401.6,414.5 400.9,414.2 400.5,415.0 399.7,414.8 399.1,414.5 398.5,414.7M395.6,410.2 395.7,410.9 395.9,411.6 396.1,412.3 396.6,412.9M396.6,412.9 397.1,413.2 397.6,413.7 397.9,414.3 398.5,414.7M383.0,314.1 382.8,313.4 382.9,312.5 383.6,312.3 384.3,311.8M372.4,333.8 372.9,334.4 373.5,334.9 374.3,334.6 374.8,334.0M373.6,309.0 373.9,308.2 373.9,307.3 373.3,306.7 372.8,306.0M372.8,306.0 372.9,305.5 372.7,305.0 372.6,304.5 372.3,304.0M369.6,300.2 370.3,299.5 371.0,300.1 371.4,300.7 371.7,301.3M372.3,304.0 371.6,303.6 371.7,302.7 371.7,302.0 371.7,301.3M387.6,301.7 387.2,301.0 387.0,300.3 386.4,299.7 386.1,299.1M389.6,296.2 389.2,297.0 389.1,298.0 388.3,297.1 387.2,297.5M386.1,299.1 386.7,299.0 387.3,298.7 387.3,298.1 387.2,297.5M388.3,303.4 388.1,303.0 388.0,302.5 387.8,302.0 387.6,301.7M383.1,299.8 383.9,299.9 384.6,299.6 385.6,299.9 386.1,299.1M380.5,296.0 380.3,296.5 380.1,297.1 380.0,297.7 379.5,298.1M379.5,298.1 380.0,298.3 380.4,298.6 380.9,298.9 381.1,299.4 381.3,300.1 381.9,300.6 382.3,299.9 383.1,299.8M470.5,275.2 470.8,275.9 470.8,276.7M470.5,275.2 469.8,275.1 469.0,274.9 468.2,274.7 467.7,274.1M470.8,276.7 470.5,277.3 470.5,278.0 470.7,278.7 470.4,279.3M467.7,274.1 467.5,274.6 467.2,275.2 466.7,275.5 466.1,275.4M465.0,276.9 465.0,276.4 465.4,276.1 465.9,275.9 466.1,275.4M468.4,270.9 467.7,271.5 467.4,272.4 467.8,273.2 467.7,274.1M472.2,280.3 472.0,279.7 471.6,279.3 471.0,279.2 470.4,279.3M464.3,277.7 464.4,277.1 465.0,276.9M381.3,271.7 381.6,271.1 382.3,271.0M381.3,271.7 380.9,272.1M380.9,272.1 380.7,271.3 379.9,271.5 379.8,270.9 380.1,270.4M380.1,270.4 380.0,269.7 379.6,269.1M383.7,270.5 382.9,270.5 382.3,271.0M379.9,273.0 380.3,272.4 380.9,272.1M379.0,268.3 379.5,268.6 379.6,269.1M377.2,265.7 377.5,266.1 378.1,266.3 378.6,265.9 379.1,266.1M379.1,266.1 379.1,266.9 378.8,267.6M378.4,264.0 377.8,263.9 377.4,264.4 376.9,264.5 376.3,264.6M379.9,265.6 379.1,266.1M376.2,264.8 376.8,265.1 377.2,265.7M379.0,268.3 378.8,267.6M379.9,265.6 380.7,265.8M388.8,264.6 389.2,265.4 389.8,266.0M389.0,263.2 389.2,263.9 388.8,264.6M390.7,266.6 390.4,266.1 389.8,266.0M374.6,256.1 374.6,256.6 374.2,256.9M374.9,255.4 374.6,256.1M374.3,260.1 373.5,259.8 373.2,259.0M373.3,257.7 373.4,258.4 373.2,259.0M373.3,257.7 373.5,257.1 374.2,256.9M373.3,257.7 373.4,256.8 372.5,256.5M372.7,255.2 372.4,255.8 372.5,256.5M376.8,262.2 376.8,262.2M375.2,261.3 374.9,260.6 374.3,260.1M376.8,262.2 376.9,261.3 377.6,260.7M382.2,245.8 381.9,245.3 381.3,245.4 381.2,244.9 380.7,244.7M358.9,280.7 357.9,280.8 357.3,280.1M357.3,280.1 356.7,280.0 356.0,279.8 356.2,280.6 355.4,281.0 355.1,280.5 354.6,280.4 354.0,280.5 353.5,280.3M348.4,280.1 349.0,280.1 349.7,280.0 350.3,279.8 350.9,279.5M350.9,279.5 351.7,279.1 352.2,279.8 352.9,280.1 353.5,280.3M366.0,276.6 365.5,276.5 365.2,276.0 364.7,275.9 364.2,275.6M366.2,273.7 365.6,274.2 365.0,274.4 364.1,274.2 363.7,275.0M364.2,275.6 363.7,275.0M361.4,273.4 362.1,273.9 363.0,273.8M363.7,275.0 362.9,274.6 363.0,273.8M372.4,259.6 372.5,260.3 371.9,260.6M373.2,259.0 372.8,259.3 372.4,259.6M371.9,261.8 371.6,261.2 371.9,260.6M367.4,257.1 367.0,257.5M368.0,263.0 368.0,262.3 368.0,261.6 367.3,261.8 366.7,261.4M365.2,261.2 365.7,261.1 366.2,260.9M366.2,260.9 366.7,261.4M368.2,250.9 368.1,251.7 368.6,252.2M368.6,252.2 368.4,252.8 368.3,253.4M350.7,253.4 350.8,253.0 351.2,252.7 351.7,252.6 351.9,252.1M399.4,274.7 398.9,275.3 398.2,275.8 398.1,276.6 398.3,277.3M403.7,279.6 402.8,279.8 402.3,280.6 401.4,280.6 400.7,281.0M400.7,281.0 399.9,281.0 399.4,280.4 400.0,279.8 399.7,279.0 399.2,278.7 399.1,278.1 398.9,277.5 398.3,277.3M398.1,272.6 397.4,272.3 397.0,271.8 396.6,272.3 396.0,272.7M396.0,272.7 395.8,273.1 395.6,273.6 395.2,273.8 395.0,274.3M398.3,277.3 397.8,276.7 397.0,276.6M395.0,274.3 395.7,274.7 396.2,275.3 396.8,275.8 397.0,276.6M395.3,268.2 395.8,268.2 396.4,268.2 396.7,267.7 397.2,267.5M397.2,267.5 397.5,267.0 398.0,266.7 398.5,266.3 398.7,265.8M395.3,268.2 394.6,268.4 393.9,268.5M393.0,270.2 393.4,269.9 393.6,269.4 393.9,269.0 393.9,268.5M390.7,266.6 391.2,266.7 391.6,267.1M391.6,267.1 391.3,268.1 392.1,268.9 393.1,268.9 393.9,268.5M399.7,263.5 400.3,264.5 401.5,264.9 401.6,263.5 402.8,263.0M399.7,263.5 399.5,264.0 399.3,264.5M402.8,263.0 403.5,263.4 404.0,264.0 404.9,263.8 405.7,264.0M405.7,264.0 406.1,264.6M406.7,266.6 406.5,266.1 406.5,265.6 406.3,265.1 406.1,264.6M398.7,265.8 398.4,264.9 399.3,264.5M399.0,261.3 399.4,261.8 399.7,262.3 399.3,262.9 399.7,263.5M408.6,261.4 408.3,261.9 407.8,262.1 407.3,262.1 406.8,262.3 406.4,262.7 406.2,263.1 406.2,263.7 405.7,264.0M451.2,299.6 451.5,300.1 451.8,300.6 452.4,300.8 453.0,300.6 453.5,300.5 453.8,300.0 454.4,300.1 454.9,299.8M454.9,299.8 455.1,300.6 455.4,301.4 456.1,301.6 456.9,302.0M459.3,303.8 458.5,303.5M456.9,302.0 457.1,302.7 457.1,303.3 457.9,302.9 458.5,303.5M483.8,298.4 484.7,297.9 484.2,297.1 483.6,296.7 483.2,296.1M483.2,296.1 483.0,295.6 482.6,295.3 482.0,295.4 481.6,295.0M479.9,294.1 480.1,294.6 480.5,295.1 481.1,295.1 481.6,295.0M486.3,303.3 486.3,302.3 485.4,301.9 484.3,301.4 484.8,300.3M484.8,300.3 485.0,299.7 484.9,299.1 484.6,298.4 483.8,298.4M477.5,293.2 478.3,293.0 479.0,292.9 479.3,293.6 479.9,294.1M490.5,302.4 491.0,302.2 491.3,301.6 491.7,301.3 492.0,300.9M497.6,301.1 497.0,300.5 496.4,300.0 495.6,300.1 494.8,300.0M492.0,300.9 492.9,301.0 493.7,301.4 494.6,300.9 494.8,300.0M486.1,294.1 486.4,293.6 486.8,293.1 486.7,292.5 486.6,291.9M483.2,296.1 484.0,295.7 484.5,294.9 485.5,294.7 486.1,294.1M485.7,289.9 485.8,290.5 486.2,290.9 486.3,291.5 486.6,291.9M428.8,271.3 428.1,271.1 427.6,270.6 426.9,270.8 426.2,270.5M424.1,269.8 424.0,270.8 424.9,271.0 425.7,271.1 426.2,270.5M431.7,271.1 431.0,271.6 430.3,271.8 429.3,272.1 428.8,271.3M422.2,269.1 422.7,269.3 423.0,269.8 423.6,269.9 424.1,269.8M351.9,321.8 352.5,321.9 353.1,322.0M353.1,322.0 353.6,322.6 354.1,323.1 354.6,323.7 355.3,324.1M355.3,324.1 356.0,324.5 355.7,325.3 356.2,325.8 356.1,326.5M354.1,319.2 353.9,319.9 353.7,320.7 353.1,321.2 353.1,322.0M350.5,321.3 351.4,321.2 351.9,321.8M357.0,328.6 356.7,328.1 356.2,327.7 356.6,327.1 356.1,326.5M474.3,393.5 474.5,392.6 474.5,391.6 475.1,390.9 475.9,390.4M477.4,387.7 476.3,387.7 476.2,388.8 475.7,389.6 475.9,390.4M486.8,386.1 487.1,386.7 487.5,387.2M473.8,396.9 474.0,395.8 473.1,395.1 473.7,394.3 474.3,393.5M478.0,384.9 478.2,385.7 478.5,386.5 477.9,387.0 477.4,387.7M485.3,384.5 485.7,384.9 485.8,385.5 486.1,386.1 486.8,386.1M406.4,393.9 406.4,394.8 405.8,395.6 406.6,396.1 407.0,397.0 407.5,397.6 408.1,398.2 408.8,398.7 409.6,398.8M409.6,398.8 410.1,399.4 410.1,400.1 410.2,400.8 410.5,401.4M410.5,401.4 410.6,402.0 410.6,402.6 411.0,403.1 411.6,403.3M425.5,388.0 425.3,388.5 424.8,388.8 424.3,389.0 423.9,389.5M428.8,391.1 429.0,391.7 428.7,392.2 428.7,392.7 428.7,393.3M423.9,389.5 423.6,390.3 422.9,390.9 422.7,391.8 423.3,392.5M432.6,397.3 431.5,397.1 430.7,397.8 430.0,397.0 429.1,396.6M428.7,393.3 429.8,393.7 429.6,394.9 428.4,395.5 429.1,396.6M473.7,422.6 473.1,422.0 472.2,421.9 471.5,421.4 470.6,421.3M470.1,426.6 469.7,426.1 469.2,425.5 469.4,424.8 469.5,424.1M470.6,421.3 470.4,422.0 470.3,422.8 469.6,423.3 469.5,424.1M457.0,396.9 456.5,396.6 456.0,396.6 455.5,396.4 455.0,396.7 454.9,397.4 454.5,397.8 453.8,397.7 453.3,397.4M452.5,391.3 451.4,392.0 450.0,392.1 450.5,393.3 451.3,394.4M453.3,397.4 452.6,397.7 451.9,397.8 451.1,398.0 450.5,397.4M451.3,394.4 450.7,394.9 450.5,395.8 450.2,396.6 450.5,397.4M391.0,444.1 391.8,444.3 392.6,444.5 392.9,443.6 393.5,443.1M398.5,370.2 398.0,369.8 397.9,369.1 397.4,368.8 396.8,368.6M398.5,370.2 399.2,370.4 399.9,370.6 400.5,371.1 400.7,371.8M395.5,368.4 396.2,368.7 396.8,368.6M402.5,374.3 402.3,373.5 401.8,372.9 401.5,372.0 400.7,371.8M404.4,342.6 403.6,343.0 403.5,342.2 403.5,341.6 403.2,341.2M404.6,344.5 404.3,344.0 403.8,343.7 404.0,343.1 404.4,342.6M401.3,340.2 401.7,340.5 402.2,340.8 402.7,340.9 403.2,341.2M400.0,339.1 400.3,338.3 399.8,337.7M402.2,336.0 401.5,336.3 400.9,336.8 400.2,337.1 399.8,337.7M394.8,336.3 395.4,335.9 396.1,336.3 396.8,336.1 397.4,336.2M399.8,337.7 399.3,337.2 398.6,337.0 398.0,336.6 397.4,336.2M408.7,329.5 407.9,329.9M407.9,329.9 407.3,330.7 406.2,330.9 406.4,331.9 406.1,332.9M402.2,336.0 402.1,335.2 402.9,335.0 403.7,335.2 404.0,334.4M406.1,332.9 405.8,333.6 405.1,333.7 404.6,334.1 404.0,334.4M567.2,400.3 567.2,401.2 567.7,401.9 567.0,402.6 567.6,403.5M562.2,398.0 561.7,398.0 561.3,398.1 560.9,398.5 560.4,398.5M553.3,399.8 553.5,399.0 554.2,398.4 554.8,397.9 555.2,397.2M557.7,396.7 557.4,397.5 556.6,397.6 555.9,397.2 555.2,397.2M557.7,396.7 558.8,396.5 559.9,396.4 559.9,397.5 560.4,398.5M568.9,397.0 568.9,397.5 568.7,397.9 568.3,398.3 568.5,398.9 568.4,399.4 568.3,400.0 567.7,400.1 567.2,400.3M566.1,394.6 565.6,394.4 565.1,394.2 564.5,394.0 564.0,394.0M564.0,394.0 563.8,394.6 563.4,395.0 563.0,395.4 562.7,395.8 561.7,396.0 562.1,396.9 562.0,397.5 562.2,398.0M568.8,405.6 568.4,405.1 568.2,404.5 568.1,403.9 567.6,403.5M551.3,373.7 550.8,374.6 550.3,375.4 550.6,376.4 551.6,376.9M551.3,373.7 550.9,373.4 550.5,373.1 550.3,372.6 550.5,372.1 550.1,371.8 550.1,371.3 549.8,370.9 549.5,370.6M551.6,376.9 551.3,377.6 550.8,378.1 550.5,378.9 549.8,379.4M549.8,379.4 549.1,379.7 548.4,379.5M549.3,366.9 549.6,367.3 549.6,367.8 549.7,368.3 549.9,368.7 549.4,369.0 549.3,369.6 549.8,370.0 549.5,370.6M559.3,380.1 558.9,380.5 558.9,381.0 558.3,381.0 557.9,381.5M549.8,379.4 550.9,379.0 551.4,380.1 552.0,379.4 552.9,379.2 552.2,379.8 552.6,380.8 552.9,381.5 553.3,382.2M557.9,381.5 557.2,381.7 556.7,382.4 556.3,383.0 555.9,383.7 555.1,383.4 554.8,382.6 554.1,382.2 553.3,382.2M564.0,394.0 563.2,393.5 562.2,393.5 562.0,392.5 561.0,392.2M561.0,392.2 560.3,392.4 559.7,392.1 559.1,391.7 558.7,391.2M557.9,381.5 558.4,382.1 557.8,382.6 558.3,382.9 558.7,383.3 558.4,383.7 558.4,384.2 558.4,384.7 558.3,385.2M558.3,385.2 557.3,385.5 557.3,386.5 557.5,387.3 557.3,388.1M543.3,401.3 543.2,400.4 542.8,399.7M539.0,396.8 539.3,397.6 540.1,397.8 541.0,397.7 541.5,398.4M542.8,399.7 542.6,399.3 542.2,399.0 541.9,398.7 541.5,398.4M558.7,391.2 558.3,390.9 558.0,390.5 557.6,390.2 557.2,389.9M557.2,389.9 557.4,389.4 557.1,389.0 556.9,388.5 557.3,388.1M561.9,378.6 562.0,377.6 562.9,377.2 563.7,377.0 564.6,376.9M564.6,376.9 565.4,377.0 566.2,376.7 566.8,376.1 567.4,375.5M559.3,380.1 559.7,379.4 560.4,378.9 561.2,378.9 561.9,378.6M571.7,373.5 570.7,373.9 569.9,373.3 570.0,374.2 569.8,375.1 569.4,375.8 568.7,376.2 568.1,375.8 567.4,375.5M369.3,343.1 368.9,342.5 368.9,341.8 368.2,341.8 367.6,341.6M367.3,339.4 368.3,339.7 368.8,338.8 369.4,338.3 369.9,337.7M367.3,339.4 366.9,340.0 367.5,340.5 367.8,341.0 367.6,341.6M374.2,343.3 373.6,343.8 373.1,344.2 372.2,344.3 371.9,345.1M371.9,345.1 371.4,344.3 370.5,344.4M370.5,344.4 370.2,344.1 370.0,343.7 369.9,343.1 369.3,343.1M365.1,343.0 365.4,342.2 365.8,341.5 366.7,341.2 367.6,341.6M366.2,338.3 367.0,338.6 367.3,339.4M369.3,334.4 369.3,335.2 369.4,336.0 370.0,336.7 369.9,337.7M374.2,343.3 374.7,343.9 375.5,343.9M377.5,345.7 378.2,345.5 378.8,345.5 379.5,345.6 380.1,345.6M373.8,348.1 373.3,347.2 372.2,347.0 371.1,346.2 371.9,345.1M375.5,343.9 375.9,344.5 376.6,344.7 377.0,345.2 377.5,345.7M381.2,345.0 380.7,345.4 380.1,345.6M351.5,308.4 351.0,308.6 350.9,308.6M378.6,366.1 378.5,365.5 378.6,364.9 378.6,364.2 378.6,363.6M378.6,363.6 378.7,363.0 379.0,362.4 378.8,361.8 378.7,361.1M407.5,362.3 408.0,362.1 408.6,362.2 408.8,361.7 409.3,361.5M412.2,366.0 412.1,365.2 412.3,364.4 411.9,363.7 411.6,363.0M409.3,361.5 410.1,361.4 410.9,361.5 411.0,362.4 411.6,363.0M409.3,361.5 409.5,361.0 409.6,360.4 410.0,360.0 409.8,359.4M411.8,355.5 411.6,354.9 411.6,354.3 411.5,353.7 411.9,353.1M411.2,351.1 411.7,351.4 412.0,352.0 412.0,352.6 411.9,353.1M410.1,349.1 410.1,349.8 410.5,350.2 410.5,351.0 411.2,351.1M417.2,419.4 416.6,419.1 416.0,418.8 415.3,418.5 415.2,417.7M417.2,419.4 417.4,420.1 417.8,420.7 417.9,421.8 419.0,421.5M419.0,421.5 419.0,422.5 418.9,423.5 419.9,423.8 420.9,423.8M414.3,409.1 414.9,409.7 415.1,410.5 415.5,411.2 415.1,412.0M415.1,412.0 414.9,412.6 414.3,412.6 414.2,413.1 413.9,413.6 413.3,413.9 413.3,414.5 413.1,415.0 413.2,415.5M410.6,416.3 411.1,415.7 411.7,415.1 412.5,415.1 413.2,415.5M413.6,406.0 413.7,405.0 413.6,404.0 412.4,404.0 411.6,403.3M413.6,406.0 414.1,406.7 414.2,407.5 414.3,408.3 414.3,409.1M405.0,418.4 405.6,418.4 406.3,418.2 406.8,417.8 407.5,417.8M407.5,417.8 408.4,417.4 409.3,417.7 410.1,417.0 410.6,416.3M415.2,417.7 414.6,417.1 414.6,416.2 414.0,415.8 413.2,415.5M388.8,309.6 388.6,309.1 388.7,308.5 388.8,307.9 388.5,307.4M388.8,309.6 388.6,310.5 388.0,311.1M384.3,311.8 384.9,312.2 385.6,312.6 386.5,312.2 386.5,311.3M386.5,311.3 387.3,311.5 388.0,311.1M397.7,318.7 397.3,317.9 396.8,317.2 396.3,316.2 395.2,316.4M395.2,316.4 395.4,315.7 395.5,315.0M395.9,312.9 395.5,313.3 395.2,313.8 395.5,314.4 395.5,315.0M387.2,286.3 387.6,286.7 388.2,286.7 388.7,286.4 389.2,286.7M389.2,286.7 389.8,287.0 390.5,287.4 391.1,287.7 391.8,287.9M391.8,287.9 392.5,288.3 392.5,289.1 391.7,289.6 392.1,290.4M392.1,290.4 391.7,291.3 392.1,292.2M385.8,284.9 386.3,285.1 386.8,285.3 386.9,285.8 387.2,286.3M395.2,285.4 395.4,286.1 395.0,286.7 394.5,287.0 393.8,287.0 393.2,287.2 393.0,287.8 392.4,287.5 391.8,287.9M379.9,293.6 380.4,294.0 380.4,294.7 380.4,295.4 380.5,296.0M392.2,293.9 391.8,293.0 392.1,292.2M392.2,293.9 391.3,294.1 390.9,295.0 390.1,295.4 389.6,296.2M396.5,297.3 396.4,296.8 395.9,296.4 395.4,296.1 394.9,295.8M396.5,297.3 396.7,298.0 397.2,298.4 397.9,298.5 398.4,298.8M398.4,298.8 399.2,299.1 400.0,299.0 400.5,298.3 400.9,297.7M392.2,293.9 393.1,294.2 393.3,295.2 394.2,295.3 394.9,295.8M399.6,300.4 399.1,300.1 399.0,299.6 398.8,299.2 398.4,298.8M400.9,297.7 401.6,297.8 402.2,297.5 402.8,297.6 403.4,297.5M405.3,297.7 404.9,297.7 404.4,297.8 403.9,297.7 403.4,297.5M399.6,300.4 399.9,300.9 400.3,301.4 401.0,301.6 401.6,301.7M401.7,305.1 401.8,304.6 401.9,304.1 402.0,303.6 402.3,303.2M402.3,303.2 401.8,302.5 401.6,301.7M416.7,304.1 416.3,303.6 415.9,303.2 415.5,302.7 415.1,302.4M502.6,263.1 503.3,263.3 503.9,262.9 504.6,262.9 505.3,262.9M505.3,262.9 505.7,262.1 506.5,261.7 507.4,261.5 508.2,261.2M504.1,258.2 504.2,259.0 504.9,259.3 505.7,259.4 506.4,259.3M506.4,259.3 507.1,259.4 507.4,260.1 508.1,260.4 508.2,261.2M500.4,264.0 501.1,264.3 501.7,264.1 502.2,263.6 502.6,263.1M502.8,257.3 503.5,257.6 504.1,258.2M503.3,277.6 502.8,277.0 502.3,276.4M502.9,273.7 502.3,274.2 502.0,274.9 502.2,275.6 502.3,276.4M502.9,273.7 502.5,273.1 502.9,272.5 502.3,272.4 501.9,271.9M497.6,278.0 498.5,277.7 498.8,276.8M367.4,257.1 367.8,256.8 368.0,256.3M367.0,257.5 366.3,257.8M364.9,257.1 365.5,257.7 366.3,257.8M363.2,255.6 363.5,256.1 364.0,256.5M364.9,257.1 364.3,257.0 364.0,256.5M366.2,260.9 365.6,260.2 365.8,259.4M365.8,259.4 365.8,258.5 366.3,257.8M360.6,248.7 360.4,249.3 359.9,249.6M359.9,249.6 359.8,250.6 359.0,251.2M358.8,253.2 358.9,252.6 359.1,252.2 358.9,251.7 359.0,251.2M390.6,431.7 390.2,430.9 390.2,430.0 390.2,430.0M398.5,427.2 397.9,427.4 397.3,427.7 397.1,428.3 396.6,428.8 395.9,428.6 395.4,428.2 395.1,427.6 394.4,427.4M398.5,427.2 398.7,426.7 399.0,426.3 398.7,425.9 398.6,425.3 398.2,424.7 398.8,424.3 398.4,424.0 398.1,423.5M394.4,427.4 393.9,426.6 393.5,425.8 392.9,425.2 392.0,424.8M399.2,421.9 399.4,422.5 399.1,423.0 398.5,423.1 398.1,423.5M391.0,424.3 391.4,424.6 392.0,424.8M377.8,333.9 378.6,334.1 379.4,333.7 380.2,333.3 380.4,332.5M380.4,332.5 380.8,332.0 381.3,331.6 381.6,331.0 381.9,330.4M391.8,324.0 392.0,323.4 392.5,323.0 392.8,322.4 392.8,321.8M398.4,322.3 399.0,322.9 398.9,323.8M395.2,316.4 396.1,317.4 395.0,318.1 394.0,318.2 393.6,319.1M392.8,321.8 392.6,321.1 392.8,320.3 393.7,320.0 393.6,319.1M377.5,321.7 378.0,321.2 378.2,320.6 378.8,320.7 379.4,320.6M378.1,316.4 378.6,316.7 378.8,317.2 378.9,317.7 379.0,318.3 379.6,318.5 380.1,318.3 380.8,318.2 381.0,318.8M379.4,320.6 379.8,320.0 379.9,319.4 380.5,319.1 381.0,318.8M378.3,300.6 377.7,300.6 377.3,300.9 376.7,301.0 376.3,301.4M378.3,300.6 378.3,300.1 378.6,299.7 378.6,299.0 379.2,298.9M376.3,301.4 375.7,301.7 375.0,301.8 374.5,301.3 373.8,301.0M379.5,298.1 379.2,298.9M371.7,301.3 372.2,300.9 372.7,300.8 373.2,301.1 373.8,301.0M379.0,259.7 378.6,260.1M379.1,263.1 378.5,262.6M379.3,258.9 379.0,259.7M377.6,260.7 378.1,260.4 378.6,260.1M376.8,262.2 377.8,262.1 378.5,262.6M378.4,264.0 378.7,263.5 379.1,263.1M385.8,258.0 385.6,257.2M385.0,258.7 385.2,258.1 385.8,258.0M385.3,256.1 385.3,256.7 385.6,257.2M388.6,254.5 388.2,255.2 387.5,255.3M388.6,254.5 387.9,254.3 387.3,253.8 386.8,252.9 387.7,252.4M387.5,255.3 386.8,255.8 386.1,255.4M387.7,252.4 386.9,252.2M389.8,254.1 389.2,254.2 388.6,254.5M388.6,251.4 387.9,251.8 387.7,252.4M385.3,256.1 385.9,255.9 386.1,255.4M385.8,251.9 386.4,251.9 386.9,252.2M376.5,242.1 376.1,241.3 375.4,241.2M378.8,237.2 378.0,237.5 377.1,237.2M381.8,236.2 381.0,236.2 380.4,236.8 379.7,237.3 378.8,237.2M375.8,236.6 376.5,236.9 377.1,237.2M374.1,240.8 374.7,241.2 375.4,241.2M380.7,244.7 380.2,244.8 379.8,245.2M379.1,246.6 379.8,246.1 379.8,245.2M379.1,246.6 378.5,246.7 377.9,247.0M357.7,278.4 357.9,277.8 358.3,277.4 358.5,276.9 358.6,276.4M358.6,276.4 358.7,275.7 358.1,275.4 358.1,274.7 358.7,274.5M357.2,273.2 357.7,273.3 358.0,273.7 358.3,274.1 358.7,274.5M357.3,280.1 357.8,279.8 358.2,279.4 358.4,278.7 357.7,278.4M356.6,272.4 356.8,272.9 357.2,273.2M361.4,273.4 361.0,274.2 360.3,274.6 359.5,274.6 358.7,274.5M359.7,263.3 359.7,263.1M359.1,261.6 359.3,262.4 359.7,263.1M359.0,258.9 358.9,258.2M358.9,258.2 358.3,258.1 357.8,258.2 357.2,257.9 356.7,257.7M355.0,258.1 355.9,257.9 356.7,257.7M359.1,260.0 359.0,260.8 359.1,261.6M359.1,260.0 359.0,259.5 359.0,258.9M359.6,256.2 359.8,256.8 359.4,257.4M359.4,257.4 359.0,257.7 358.9,258.2M353.7,258.3 354.3,258.2 355.0,258.1M370.8,252.2 370.3,252.5M370.3,252.5 370.2,253.2 369.6,253.6 369.5,254.2 369.2,254.8M371.6,254.5 371.0,255.1 370.2,255.1M370.2,255.1 369.8,255.3 369.3,255.2M369.3,255.2 369.2,254.8M371.1,251.3 370.8,251.7 370.8,252.2M368.6,252.2 369.4,252.5 370.3,252.5M372.6,254.4 372.1,254.4 371.6,254.5M368.3,253.4 368.3,254.4 369.2,254.8M368.0,256.3 368.3,255.3 369.3,255.2M353.0,250.6 353.7,250.2 354.4,249.9 353.9,249.2 353.6,248.5M356.3,247.5 355.7,247.2 355.1,247.1 354.5,247.3 353.9,247.5M353.9,247.5 353.7,247.9 353.6,248.5M351.9,252.1 352.5,252.1 352.6,251.4 352.7,250.9 353.0,250.6M358.1,246.5 357.9,247.1 357.3,247.2 356.8,247.3 356.3,247.5M353.9,244.7 353.9,245.5 354.2,246.1 353.9,246.8 353.9,247.5M397.7,284.0 398.0,283.5 398.5,283.1 399.1,282.8 399.7,282.5M395.2,285.4 396.0,285.2 396.8,285.2 396.8,284.3 397.7,284.0M400.7,281.0 400.3,281.3 399.8,281.5 399.4,282.0 399.7,282.5M395.0,274.3 394.3,274.8 394.0,275.7 393.5,274.9 392.9,274.3M386.8,275.8 387.1,275.4 387.6,275.2 388.1,275.0 388.6,275.1M392.1,271.4 391.9,271.9 391.4,272.1 391.1,272.5 391.0,273.0M389.2,272.0 388.5,271.4 388.1,270.7M389.2,272.0 389.7,272.6 390.3,273.2M390.3,273.2 391.0,273.0M393.0,270.2 392.8,271.0 392.1,271.4M392.9,274.3 392.6,273.7 391.9,273.7 391.4,273.3 391.0,273.0M386.7,270.3 387.4,270.3 388.1,270.7M388.6,275.1 388.3,274.2 389.2,273.9 389.5,273.1 390.3,273.2M492.2,386.8 492.9,386.1 493.3,385.1 494.1,385.7 495.1,386.0M495.1,386.0 495.8,386.3 496.4,386.3 496.6,385.5 497.5,385.4M503.8,388.8 503.0,389.0 502.1,389.0 501.5,388.4 500.8,387.8 500.4,387.0 500.1,386.1 500.4,385.3 501.0,384.6M497.5,385.4 498.4,385.6 499.3,385.3 500.2,385.1 501.0,384.6M501.0,384.6 501.4,383.7 501.0,382.8M418.9,395.5 419.7,395.4 420.4,395.2 421.3,395.4 421.8,394.6M418.9,395.5 418.1,395.4 417.2,395.3 416.3,395.1 415.5,395.1M423.3,392.5 423.0,393.1 422.5,393.5 422.4,394.2 421.8,394.6M411.7,393.4 412.3,393.8 412.3,394.5 413.0,394.6 413.6,394.3 414.0,394.7 414.5,394.8 415.0,394.9 415.5,395.1M429.1,396.6 428.8,397.2 428.9,397.8 428.6,398.2 428.3,398.8M428.3,398.8 428.7,399.5 428.8,400.3 428.0,400.7 427.5,401.4M426.3,404.4 426.6,403.5 427.3,403.0 427.5,402.2 427.5,401.4M464.6,416.7 465.1,416.8 465.6,417.0 466.1,416.9 466.6,416.9 467.1,416.9 467.6,417.2 467.7,417.8 468.3,417.9M464.6,416.7 464.3,416.2 463.8,416.0 463.2,416.2 462.9,415.6 462.8,415.1 462.8,414.6 462.2,414.4 462.0,413.9M469.9,414.8 469.4,415.5 468.7,416.1 468.6,417.0 468.3,417.9M470.6,421.3 470.2,420.9 469.7,420.6 469.1,420.3 468.6,420.2 468.2,419.7 468.3,419.0 468.2,418.4 468.3,417.9M471.5,411.9 471.0,412.6 470.3,413.1 470.6,414.0 469.9,414.8M465.9,430.9 465.2,430.9 464.5,431.0 463.8,430.9 463.1,430.8M460.5,432.6 460.8,431.8 461.7,431.5 462.3,430.8 463.1,430.8M455.2,431.8 455.9,432.1 456.5,432.7 457.1,433.4 458.0,433.2M460.5,432.6 459.9,432.3 459.3,432.8 458.7,433.1 458.0,433.2M450.9,420.8 451.2,421.4 451.2,422.2 451.9,422.5 452.5,422.8M448.4,429.1 449.2,428.9 450.0,428.5M450.0,428.5 450.7,428.4 450.8,427.7 451.4,427.7 451.8,427.2 451.9,426.6 452.3,426.2 452.3,425.6 452.5,425.1M452.5,422.8 452.8,423.3 452.8,423.9 452.6,424.5 452.5,425.1M452.3,431.0 451.5,430.6 451.0,429.9 450.5,429.2 450.0,428.5M452.3,431.0 452.9,431.5 453.7,431.6 454.5,431.4 455.2,431.8M462.0,413.9 461.6,413.5 461.2,413.2 460.8,412.9 460.2,412.7M460.2,412.7 459.6,412.5 459.1,412.8 458.4,412.5 457.9,412.9M448.1,404.8 447.7,404.2 447.0,404.3 446.3,404.0 446.4,403.3 446.8,402.8 446.6,402.2 447.1,401.7 446.7,401.1M450.5,397.4 449.8,397.7 449.1,397.8 448.7,398.5 448.0,398.9M446.7,401.1 447.5,401.1 448.1,400.5 447.7,399.7 448.0,398.9M447.4,408.2 447.8,407.3 448.2,406.6 447.9,405.7 448.1,404.8M446.7,401.1 446.3,401.5 445.7,401.6 445.2,401.5 444.7,401.2 444.5,401.7 444.3,402.2 443.7,402.3 443.2,402.5M402.9,443.8 403.5,443.3 403.6,442.5 404.1,442.0 404.5,441.4 404.9,440.6 405.3,439.9 404.5,439.4 404.3,438.5M401.0,438.4 401.7,439.0 402.7,439.0 403.5,438.7 404.3,438.5M401.0,438.4 400.1,438.5 399.3,438.4 398.8,439.1 398.2,439.8M398.2,439.8 397.6,440.3 396.8,440.3 396.6,441.1 396.1,441.6M402.9,445.5 402.8,445.2 402.5,444.5 402.9,443.8M405.5,437.9 404.8,437.9 404.3,438.5M393.5,443.1 394.2,442.8 394.8,442.4 395.4,441.9 396.1,441.6M398.5,427.2 398.8,427.8 398.9,428.6 399.5,428.9 400.2,428.9M400.2,428.9 400.5,429.6 400.8,430.3 401.4,430.8 402.2,430.9M406.2,436.1 406.6,435.2 407.0,434.4 405.9,434.0 405.9,432.8M405.9,432.8 405.4,432.2 405.4,431.5 405.6,430.9 406.1,430.4 406.7,430.3 407.3,430.5 408.0,430.5 408.4,429.9M412.7,432.2 412.6,431.3 411.7,431.2 411.1,430.7 410.6,430.1M410.6,430.1 410.0,429.8 409.6,429.3 409.1,429.8 408.4,429.9M405.5,437.9 405.7,437.4 406.0,437.1 406.3,436.6 406.2,436.1M402.2,430.9 402.6,431.3 403.1,431.6 403.2,432.2 403.6,432.7 404.2,432.7 404.7,432.6 405.3,432.7 405.9,432.8M414.8,432.3 415.5,431.8 416.1,431.4 417.2,431.8 417.6,430.8M414.8,432.3 414.3,432.1 413.8,432.1 413.2,431.9 412.7,432.2M420.6,431.0 420.0,431.8 419.1,431.9 418.2,431.5 417.6,430.8M420.6,431.0 421.3,430.9 422.1,430.8 422.8,430.5 423.4,430.1 424.2,429.7 424.2,428.8 424.1,428.0 424.7,427.5M420.9,423.8 421.7,424.3 421.9,425.2 422.6,425.7 423.5,425.9M424.7,427.5 424.9,426.8 424.8,426.2 424.1,425.9 423.5,425.9M420.6,431.0 420.3,431.6 420.3,432.2 420.2,432.9 420.2,433.5M428.2,430.3 427.9,429.8 427.5,429.4 427.1,428.9 426.8,428.5 426.2,428.7 425.5,428.5 424.9,428.2 424.7,427.5M405.2,329.0 404.4,328.7 404.3,327.9 403.7,327.4 403.0,327.4M403.0,327.4 402.5,326.9 402.2,326.3 401.3,326.8 400.9,325.8M407.9,329.9 407.0,330.0 406.2,330.5 406.0,329.5 405.2,329.0M398.9,323.8 399.5,324.2 400.1,324.6 400.7,325.1 400.9,325.8M548.4,379.5 548.3,380.1 547.8,380.5 547.1,380.7 546.9,381.3M537.9,378.3 538.1,379.1 538.7,379.6 538.7,380.5 539.5,380.9M539.5,380.9 539.6,381.6 539.7,382.4 540.6,382.7 540.6,383.6M373.8,348.1 373.8,348.8 374.2,349.3 374.4,349.8 374.9,350.3M374.9,350.3 374.4,351.1 375.2,351.6 375.3,352.3 375.8,352.9M366.7,362.5 366.6,361.9 366.7,361.2 367.2,360.6 366.8,359.9M366.8,359.9 366.2,359.2 366.7,358.5 366.8,357.7 366.1,357.3M363.9,353.6 364.4,353.8 364.9,353.9 365.3,354.3 365.7,354.7M366.1,357.3 365.9,356.4 364.9,356.2 365.4,355.5 365.7,354.7M365.7,354.7 366.2,354.3 366.8,354.1M411.8,356.9 411.5,357.4 411.1,357.7M409.8,359.4 409.9,358.8 410.2,358.3 410.9,358.4 411.1,357.7M411.8,355.5 412.0,356.2 411.8,356.9M395.8,308.2 394.9,308.6 395.3,309.5 395.2,310.2 395.4,310.9M395.4,310.9 394.8,310.8 394.3,310.5 393.7,310.6 393.2,310.4M393.2,310.4 393.1,309.6 392.7,308.9 392.0,309.2 391.2,309.6M396.9,307.7 396.4,308.1 395.8,308.2M395.9,312.9 395.8,312.4 395.7,311.9 395.3,311.5 395.4,310.9M388.8,309.6 389.5,309.9 390.1,310.3 390.7,310.0 391.2,309.6M409.0,297.7 409.6,297.8 410.1,298.2 410.4,297.5 411.1,297.5 411.9,297.7 412.6,298.1 412.9,297.4 413.1,296.6M409.0,297.7 408.6,298.1 408.0,298.4 407.4,298.3 406.9,297.9M414.0,300.1 413.6,299.5 414.1,299.1 413.7,298.6 413.7,298.1M413.7,298.1 413.7,297.2 413.1,296.6M405.3,297.7 406.1,297.6 406.9,297.9M415.1,302.4 414.5,301.9 414.6,301.2 414.4,300.6 414.0,300.1M413.0,294.9 412.9,295.8 413.1,296.6M515.7,262.2 515.7,262.7 516.0,263.1 516.4,263.4 516.5,263.9M515.7,262.2 514.8,263.0 513.7,262.9 512.8,262.1 512.7,261.0M512.7,261.0 512.3,260.2 511.5,259.8 510.8,260.3 510.4,261.1M518.6,265.7 518.0,265.4 517.3,265.1 516.7,264.6 516.5,263.9M508.2,261.2 508.8,261.4 509.3,261.1 509.8,261.3 510.4,261.1M517.1,259.7 517.1,260.5 516.7,261.1 516.3,261.8 515.7,262.2M498.7,274.6 499.1,274.0 499.0,273.4 498.9,272.8 498.9,272.1M498.9,272.1 498.7,271.5 499.0,270.9 498.7,270.4 498.3,269.9M493.3,275.1 492.5,274.8 491.7,274.6M501.9,271.9 501.2,270.9 500.3,270.2 499.3,270.9 498.9,272.1M498.8,276.8 498.8,276.2 498.6,275.7 498.6,275.1 498.7,274.6M495.1,277.3 494.4,277.0 493.8,276.5 493.7,275.7 493.3,275.1M498.9,266.6 498.6,267.4 498.4,268.2 498.3,269.1 498.3,269.9M489.7,276.0 490.3,275.8 490.7,275.3 491.2,274.9 491.7,274.6M390.9,330.4 390.5,329.8 389.8,329.9 389.7,329.3 389.4,328.8M381.9,330.4 382.5,330.3 382.9,329.8 383.1,329.2 383.1,328.6M384.3,327.4 383.0,327.4 383.1,328.6M383.0,314.1 383.5,314.6 383.4,315.3 383.5,316.0 383.0,316.5M381.0,318.8 381.2,318.3 381.7,318.0 382.2,318.1 382.7,318.0M383.0,316.5 382.7,317.2 382.7,318.0M382.7,318.0 383.1,318.4 383.5,318.7 384.1,318.7 384.6,319.0 384.8,319.5 384.9,320.0 384.9,320.6 384.8,321.1M374.9,244.4 375.1,243.9 375.6,243.7 375.9,243.4 376.3,243.1M374.9,244.4 375.2,244.9 375.1,245.6 375.6,245.9 376.1,246.2M376.1,246.2 376.9,246.6M377.9,247.0 377.6,246.4 376.9,246.6M376.5,242.1 376.2,242.6 376.3,243.1M373.8,244.4 374.4,244.4 374.9,244.4M375.1,247.1 375.6,246.7 376.1,246.2M359.7,263.1 359.8,262.3 360.6,261.9M361.0,260.7 360.9,261.4 360.6,261.9M365.2,261.2 364.5,260.6 363.9,261.3M501.5,379.5 502.1,379.5 502.7,379.4 503.1,378.9 503.7,378.6 503.2,378.1 503.3,377.4 503.6,376.8 503.4,376.2M504.6,374.5 504.4,374.0 504.0,373.6 503.5,373.3 503.1,372.8 502.4,372.6 502.3,371.9 501.7,371.9 501.1,371.7M504.6,374.5 504.3,375.1 503.8,375.3 503.5,375.7 503.4,376.2M500.0,369.8 500.2,370.3 500.4,370.9 500.7,371.3 501.1,371.7M501.0,382.8 501.1,381.9 500.9,381.1 501.0,380.2 501.5,379.5M507.9,373.2 507.5,373.5 507.0,373.4 506.5,373.2 506.1,373.4 505.5,373.4 505.1,373.6 505.0,374.2 504.6,374.5M504.1,367.2 503.2,367.4 502.9,368.2 502.9,369.0 503.2,369.8 502.5,370.1 502.0,370.6 501.7,371.3 501.1,371.7M498.0,366.3 498.6,366.7 499.1,367.3 499.8,367.1 500.5,367.2 500.3,367.9 500.1,368.5 500.0,369.2 500.0,369.8M452.0,414.8 452.9,414.8 453.9,415.0 454.3,414.2 454.6,413.3M452.0,414.8 452.0,415.4 451.5,415.8 450.9,415.9 450.5,416.3M446.9,410.0 446.7,410.4 446.4,410.8 446.0,411.1 445.8,411.6M457.9,412.9 457.0,412.8 456.3,413.5 455.4,413.9 454.6,413.3M450.9,420.8 451.1,420.1 450.5,419.9 450.1,419.4 449.6,419.4 449.3,418.9 449.0,418.5 449.0,417.9 449.4,417.5M449.4,417.5 449.8,416.7 450.5,416.3M447.4,408.2 447.3,408.6 447.3,409.1 447.3,409.6 446.9,410.0M439.2,399.2 440.0,399.4 440.4,400.3 440.8,400.9 441.4,401.5M439.2,399.2 438.3,398.9 437.4,398.9 436.4,399.0 435.7,398.2M443.2,402.5 442.6,402.6 442.3,402.0 441.7,402.0 441.4,401.5M432.6,397.3 433.2,397.9 434.1,397.9 434.8,398.4 435.7,398.2M432.6,430.7 432.4,430.6M432.6,430.7 433.2,430.6 433.8,431.0 434.3,430.6 435.0,430.6 435.6,430.7 436.3,430.8 436.8,431.2 437.4,431.2M432.4,430.6 432.9,429.9 433.0,429.0 433.3,428.2 433.0,427.3M433.0,427.3 433.4,426.6 433.1,425.8 434.0,425.5 434.0,424.5M440.2,432.3 439.4,432.5 438.7,432.0 438.2,431.4 437.4,431.2M432.7,436.1 432.7,435.4 432.4,434.8 432.4,434.1 432.6,433.4 432.9,432.8 432.9,432.1 432.7,431.4 432.6,430.7M428.2,430.3 428.8,430.3 429.3,430.5 429.8,430.2 430.3,430.0 430.8,430.3 431.3,430.4 431.8,430.7 432.4,430.6M420.2,433.5 419.7,434.0 419.1,434.5 418.9,435.2 418.8,435.9M417.1,444.1 417.3,443.9 418.1,444.0 418.8,444.3M418.8,444.3 418.2,443.9 418.5,443.3 418.3,442.8 418.3,442.5M417.8,440.6 417.2,440.4M417.2,440.4 417.4,439.7 417.4,439.1 417.4,438.4 417.6,437.7M417.6,437.7 417.9,437.3 418.2,436.8 418.6,436.4 418.8,435.9M541.9,386.2 542.6,385.7 543.3,385.4 544.0,384.9 544.8,384.6M541.9,386.2 541.9,387.1 541.3,387.7 541.4,388.6 540.6,389.2M540.6,389.2 539.6,389.3 539.5,390.2 539.1,391.1 539.6,391.8M537.8,395.9 538.2,395.4 538.8,395.2 539.1,394.7 539.1,394.0 538.7,393.4 539.1,392.9 539.5,392.4 539.6,391.8M546.9,381.3 546.4,381.6 546.0,381.9 545.7,382.4 545.9,383.0 545.8,383.5 545.4,383.8 545.1,384.1 544.8,384.6M540.6,383.6 540.9,384.3 541.3,384.9 541.2,385.8 541.9,386.2M370.7,353.4 369.9,353.3 369.5,354.0 368.8,353.9 368.3,353.4M366.8,354.1 367.5,353.6 368.3,353.4M376.0,355.1 375.2,355.0 374.5,355.4 373.9,354.8 373.2,354.6M376.0,355.1 376.5,355.7 376.3,356.6 376.7,357.3 377.5,357.4M377.5,357.4 377.3,358.3 378.0,358.8M375.8,352.9 376.0,353.4 376.2,354.0 376.5,354.6 376.0,355.1M370.7,353.4 371.1,354.0 371.9,354.2 372.6,354.2 373.2,354.6M380.4,356.9 379.9,357.7 379.0,357.3 378.3,357.6 377.5,357.4M378.7,361.1 378.5,360.5 378.1,360.0 377.6,359.4 378.0,358.8M449.4,417.5 448.8,417.3 448.2,417.4 447.6,417.2 447.0,417.4 446.4,417.4 445.8,417.8 445.2,417.7 444.6,417.4M445.8,411.6 445.3,411.9 444.8,412.4 444.5,413.0 443.8,413.2 442.8,413.2 442.0,413.5 442.2,414.4 442.3,415.3M444.6,417.4 444.5,416.5 443.9,415.8 443.1,415.5 442.3,415.3M442.3,415.3 440.8,415.5 440.2,416.9 440.2,415.5 439.3,414.4M443.8,431.4 443.3,431.5 442.8,431.7 442.0,431.6 442.0,432.3M440.2,432.3 441.1,432.3 442.0,432.3M443.8,431.4 444.3,431.1 444.8,430.7 445.4,430.7 445.9,430.3M445.9,430.3 446.2,429.6 447.0,429.4 447.8,429.5 448.4,429.1M388.3,327.3 387.5,327.5 387.0,327.0 386.3,326.9 385.8,326.4M388.3,327.3 388.9,326.8 389.6,326.7 389.9,326.0 390.3,325.4M385.8,326.4 385.5,325.6 385.6,324.9 385.7,324.1 385.9,323.3M389.4,328.8 389.2,328.4 389.0,327.9 388.7,327.5 388.3,327.3M384.3,327.4 385.5,327.6 385.8,326.4M391.8,324.0 391.3,324.2 390.8,324.5 390.4,324.9 390.3,325.4M384.8,321.1 385.1,321.7 385.6,322.1 385.9,322.7 385.9,323.3M362.7,260.8 362.1,260.9 361.6,260.4M361.0,260.7 361.6,260.4M363.9,261.3 363.4,260.8 362.7,260.8M433.1,412.7 432.3,412.5 431.7,412.1 431.2,411.4 430.5,411.0M428.3,409.0 428.8,409.8 428.7,410.8 429.6,410.5 430.5,411.0M426.3,404.4 426.8,405.2 426.2,406.0 426.0,406.8 426.3,407.7M426.3,407.7 426.7,408.1 427.1,408.6 427.8,408.6 428.3,409.0M434.9,421.8 434.9,421.1 435.0,420.3 435.2,419.6 435.5,418.9M435.5,418.9 435.4,418.1 434.7,417.7 435.4,417.4 435.8,416.8 435.4,416.3 435.6,415.7 435.7,415.2 435.7,414.6M434.9,413.9 435.4,414.2 435.7,414.6M434.0,424.5 434.1,423.8 434.3,423.1 434.6,422.5 434.9,421.8M433.1,412.7 433.7,412.8 434.1,413.2 434.9,413.1 434.9,413.9M439.3,414.4 438.9,413.6 438.0,413.8 437.7,413.2 437.4,412.5 437.4,413.3 437.0,413.9 436.2,414.0 435.7,414.6M423.5,409.1 422.8,408.2 421.8,408.3 421.3,409.1 420.6,409.8M417.9,411.0 418.6,410.8 419.2,410.3 419.9,410.0 420.6,409.8M426.3,407.7 425.4,408.1 424.5,407.6 423.6,408.1 423.5,409.1M415.1,412.0 415.7,411.5 416.4,411.0 417.2,411.4 417.9,411.0M452.3,431.0 452.1,431.7 451.8,432.3 451.1,432.6 450.8,433.2 451.0,433.8 451.4,434.3 451.6,435.0 451.8,435.6M453.1,439.0 452.5,439.2 452.0,438.8 451.7,438.2 451.3,437.8 451.6,437.2 451.5,436.7 451.9,436.2 451.8,435.6M418.8,444.3 419.3,444.0 420.0,444.1 420.6,444.1 421.2,444.1M451.0,444.2 451.1,443.8 452.0,443.6 451.9,442.6 452.8,442.1M453.1,439.0 452.8,439.8 452.9,440.6 453.5,441.4 452.8,442.1M424.2,444.2 424.1,444.0M432.7,436.1 432.8,436.7 433.1,437.2 433.0,437.7 432.8,438.2 432.4,438.6 432.3,439.2 432.0,439.6 431.9,440.0M421.2,444.1 421.7,443.3 422.6,443.3 423.4,443.7 424.1,444.0" fill="none" stroke="#d6a23a" stroke-width="0.63" stroke-linejoin="round" stroke-linecap="round"/><path d="M459.2,119.7 458.8,118.6 459.1,117.4 460.6,117.4 461.7,117.5 462.2,118.3 463.1,119.4 461.6,119.8 460.5,119.9ZM471.8,341.0 471.8,341.9 471.3,342.9 469.9,343.4 469.3,342.2 468.1,341.6 468.9,340.7 469.7,339.8 471.2,339.9ZM537.2,344.4 536.1,345.0 535.0,344.9 534.1,344.6 533.4,343.8 533.6,342.6 535.0,342.2 536.1,342.8 536.8,343.4ZM497.2,319.8 498.8,318.8 500.3,318.6 502.1,318.7 502.0,320.1 502.6,321.5 501.3,322.7 499.2,322.8 498.7,321.1ZM437.4,361.8 436.3,360.4 436.6,358.7 438.6,358.5 439.9,358.3 441.4,358.8 441.2,360.1 441.3,361.7 439.4,362.5ZM416.3,385.3 416.5,383.9 418.2,383.6 419.3,384.5 420.1,385.5 420.0,386.8 418.5,387.1 417.1,387.3 416.1,386.4ZM503.2,395.1 502.6,395.9 501.4,395.9 500.6,395.2 500.3,394.3 501.2,393.7 502.1,393.3 503.4,393.3 503.3,394.4ZM462.3,410.4 461.6,412.0 459.6,411.3 457.7,411.2 458.1,409.7 458.0,408.4 459.4,407.4 461.0,408.2 462.0,409.0ZM507.8,273.8 507.3,272.8 507.7,272.0 508.5,271.4 509.7,271.2 510.5,272.0 511.2,273.0 510.2,273.8 509.0,274.5ZM453.3,342.6 453.2,341.4 454.8,341.3 455.7,341.0 456.9,341.3 456.5,342.3 456.6,343.3 455.4,343.4 454.3,343.4ZM419.4,298.7 419.9,298.1 420.9,297.7 421.8,298.2 422.4,298.9 422.1,299.8 421.1,300.1 419.9,300.5 418.7,299.8ZM509.9,335.9 509.2,337.5 509.7,338.9 508.0,339.0 506.5,339.1 505.4,338.1 505.3,336.7 506.5,335.8 508.0,335.8ZM478.1,432.3 477.2,433.2 475.8,433.7 474.9,432.7 474.5,431.8 474.8,430.9 475.7,430.2 477.1,430.2 478.1,431.1ZM526.3,439.2 525.5,437.8 525.8,436.4 527.0,435.3 528.9,435.3 530.5,436.1 530.1,437.6 530.1,439.2 528.2,439.9ZM468.2,308.9 466.3,309.5 465.3,310.9 464.1,309.6 462.8,308.8 463.2,307.5 464.8,307.2 466.2,306.5 467.9,307.3ZM489.0,339.2 490.4,340.1 492.3,340.7 491.1,342.0 490.4,343.2 488.8,343.3 487.4,342.6 486.1,341.2 487.9,340.3ZM428.7,418.6 429.5,419.5 429.1,420.6 428.1,421.1 427.0,421.1 425.9,420.7 425.8,419.7 426.4,418.9 427.4,418.6ZM431.4,340.4 431.1,339.1 432.3,338.2 433.6,337.9 435.5,337.6 435.7,339.2 435.1,340.2 434.2,341.1 432.9,340.7ZM450.8,166.0 449.0,165.7 448.8,164.3 449.2,163.1 450.2,162.1 451.7,162.6 452.5,163.4 452.7,164.4 452.0,165.2ZM372.3,252.9 370.8,252.0 371.9,250.8 373.2,250.5 374.5,250.3 375.2,251.2 375.3,252.2 374.9,253.4 373.3,254.1ZM532.1,382.8 532.4,383.9 532.4,384.9 531.3,385.4 530.1,385.7 529.2,384.9 528.5,383.8 529.6,383.0 530.7,383.0ZM480.5,314.8 479.1,314.5 478.2,313.3 479.2,312.2 480.3,311.5 482.0,311.4 483.7,312.3 483.0,313.8 482.3,315.3ZM387.4,315.5 386.4,314.3 387.1,313.0 388.1,312.0 389.9,312.0 391.3,312.9 390.8,314.2 390.2,315.1 389.0,315.5ZM534.0,407.4 534.4,408.5 534.1,409.9 532.4,409.7 531.1,409.6 529.7,408.8 530.0,407.3 531.1,405.9 533.1,406.1ZM459.7,441.4 459.6,442.9 457.8,443.3 456.7,442.2 454.9,441.6 455.9,440.3 456.8,439.3 458.3,439.7 459.7,440.2ZM552.1,359.1 553.3,359.3 554.8,360.0 554.4,361.3 553.3,362.2 551.8,362.6 551.1,361.4 550.1,360.6 550.6,359.3ZM494.5,305.2 494.7,306.1 495.0,307.4 493.6,307.8 492.3,307.5 491.8,306.7 490.9,305.7 491.8,304.6 493.3,304.8ZM408.9,234.6 410.0,233.9 410.8,234.9 410.8,235.7 410.3,236.4 409.6,237.3 408.2,236.9 408.0,235.9 408.1,235.1ZM519.5,425.7 520.2,424.7 520.3,423.6 521.6,424.0 522.8,424.0 523.6,424.9 522.8,425.8 521.8,426.3 520.6,426.4ZM478.5,370.7 478.5,371.5 477.6,372.3 476.3,372.0 475.4,371.2 476.1,370.2 476.5,369.3 477.7,369.3 478.4,369.9ZM497.6,357.9 497.2,356.9 498.3,356.1 499.6,356.3 500.8,356.8 500.3,357.9 499.8,358.5 499.0,358.8 497.8,358.9ZM463.3,421.9 464.3,422.3 464.0,423.2 463.7,424.2 462.5,423.9 461.7,423.6 460.9,422.9 461.6,422.2 462.4,421.8ZM541.1,424.8 542.5,424.8 543.7,425.5 543.4,426.7 543.0,428.1 541.3,428.4 540.4,427.3 538.9,426.5 539.5,425.1ZM540.2,369.6 541.7,369.5 543.0,370.0 543.0,371.0 542.8,371.8 542.1,372.5 541.0,372.2 539.8,371.9 539.4,370.7ZM495.7,378.6 494.3,378.5 493.1,378.1 492.9,377.0 493.5,376.2 494.4,375.7 495.6,375.8 496.1,376.6 496.6,377.7ZM481.4,327.1 481.6,326.1 482.2,325.3 483.2,325.4 484.3,325.4 484.7,326.3 484.1,326.9 483.4,327.3 482.6,327.3ZM581.3,390.5 580.9,389.5 580.5,388.6 581.0,387.5 582.4,387.2 583.5,388.0 584.3,388.9 583.8,389.9 582.5,390.0ZM482.8,395.9 482.7,394.7 484.0,394.1 485.3,394.0 486.7,394.5 487.0,395.7 485.7,396.4 484.9,396.5 484.1,396.4ZM400.8,287.4 402.8,288.2 404.5,288.5 405.7,289.9 404.1,291.1 402.6,291.5 400.6,292.1 399.5,290.6 400.7,289.3ZM479.9,444.2 479.4,445.0 478.6,445.4 477.4,446.0 476.4,445.2 476.2,444.1 477.0,443.2 478.3,442.8 479.1,443.6ZM384.5,335.3 386.4,335.8 386.0,337.4 385.0,338.3 383.9,338.9 382.0,339.2 381.5,337.7 381.9,336.4 383.1,335.9ZM360.8,259.0 359.6,258.2 358.8,257.1 359.3,256.0 360.6,255.3 361.8,255.9 363.7,256.1 362.9,257.5 362.6,258.9ZM527.8,307.1 527.6,305.5 529.4,304.9 530.7,304.8 532.1,305.2 532.7,306.3 533.0,308.1 530.7,308.0 528.9,308.3Z" fill="#fff" stroke="#d6a23a" stroke-width="0.63" stroke-linejoin="round"/><path d="M417.5,60.9 416.8,62.4 415.6,64.7 414.7,67.5 413.9,70.3 413.5,73.2 413.1,77.4" fill="none" stroke="#e2bd72" stroke-width="1.35" stroke-linecap="round" stroke-linejoin="round" /><path d="M417.5,60.9 416.8,62.4 415.6,64.7 414.7,67.5 413.9,70.3 413.5,73.2 413.1,77.4" fill="none" stroke="#fff" stroke-width="0.6" stroke-linecap="round" stroke-linejoin="round" /><path d="M414.7,68.5 416.6,70.3 418.5,71.8 420.5,70.3" fill="none" stroke="#e8c98a" stroke-width="0.7" stroke-linecap="round" stroke-linejoin="round" /><ellipse cx="419.88" cy="79.58" rx="2.82" ry="1.79" fill="#fff" stroke="#dfb255" stroke-width="0.5"/><ellipse cx="425.06" cy="90.31" rx="1.69" ry="1.60" fill="#fff" stroke="#dfb255" stroke-width="0.5"/><path d="M414.4,80.9 413.8,83.1 415.2,85.2" fill="none" stroke="#e8c98a" stroke-width="0.9" stroke-linecap="round" stroke-linejoin="round" /><path d="M421.3,84.7 424.1,83.5 427.1,82.2" fill="none" stroke="#e8c98a" stroke-width="0.7" stroke-linecap="round" stroke-linejoin="round" /><ellipse cx="419.41" cy="88.71" rx="0.8" ry="1.3" fill="#fff"/><ellipse cx="419.41" cy="94.64" rx="0.8" ry="1.3" fill="#fff"/><path d="M361.1,141.8 364.2,140.7" fill="none" stroke="#e2bd72" stroke-width="1.25" stroke-linecap="round" stroke-linejoin="round" /><path d="M361.1,141.8 364.2,140.7" fill="none" stroke="#fff" stroke-width="0.55" stroke-linecap="round" stroke-linejoin="round" /><path d="M366.6,138.2 374.1,136.7" fill="none" stroke="#e2bd72" stroke-width="1.25" stroke-linecap="round" stroke-linejoin="round" /><path d="M366.6,138.2 374.1,136.7" fill="none" stroke="#fff" stroke-width="0.55" stroke-linecap="round" stroke-linejoin="round" /><path d="M376.9,135.6 381.2,134.7" fill="none" stroke="#e2bd72" stroke-width="1.25" stroke-linecap="round" stroke-linejoin="round" /><path d="M376.9,135.6 381.2,134.7" fill="none" stroke="#fff" stroke-width="0.55" stroke-linecap="round" stroke-linejoin="round" /><path d="M383.1,134.5 384.7,134.1" fill="none" stroke="#e2bd72" stroke-width="1.25" stroke-linecap="round" stroke-linejoin="round" /><path d="M383.1,134.5 384.7,134.1" fill="none" stroke="#fff" stroke-width="0.55" stroke-linecap="round" stroke-linejoin="round" /><path d="M385.9,133.7 391.5,132.6" fill="none" stroke="#e2bd72" stroke-width="1.25" stroke-linecap="round" stroke-linejoin="round" /><path d="M385.9,133.7 391.5,132.6" fill="none" stroke="#fff" stroke-width="0.55" stroke-linecap="round" stroke-linejoin="round" /><path d="M393.4,132.4 398.6,131.7" fill="none" stroke="#e2bd72" stroke-width="1.25" stroke-linecap="round" stroke-linejoin="round" /><path d="M393.4,132.4 398.6,131.7" fill="none" stroke="#fff" stroke-width="0.55" stroke-linecap="round" stroke-linejoin="round" /><path d="M399.5,131.5 402.4,130.9" fill="none" stroke="#e2bd72" stroke-width="1.25" stroke-linecap="round" stroke-linejoin="round" /><path d="M399.5,131.5 402.4,130.9" fill="none" stroke="#fff" stroke-width="0.55" stroke-linecap="round" stroke-linejoin="round" /><circle cx="408.94" cy="134.28" r="0.6" fill="#fff"/><circle cx="415.53" cy="128.35" r="0.6" fill="#fff"/><circle cx="417.88" cy="121.48" r="0.6" fill="#dcb771"/><circle cx="420.24" cy="123.36" r="0.6" fill="#dcb771"/><circle cx="426.07" cy="115.93" r="0.6" fill="#d6ad5e"/><circle cx="400.51" cy="109.32" r="0.5" fill="#d6ad5e"/><path d="M436.6,125.5 441.4,126.3 446.1,128.1 448.9,131.5 450.8,134.3 453.2,137.6 455.5,140.6" fill="none" stroke="#a3a193" stroke-width="0.8" stroke-linecap="round" stroke-linejoin="round" /></svg>
<div class="a" style="left:330.1px;top:48.8px;width:53.4px;height:12.8px;background:#eef0f0;border-radius:0 2.2px 2.2px 0;"></div>
<div class="a" style="left:330.1px;top:49.4px;width:52.8px;height:11.6px;background:#000;border-radius:0 1.8px 1.8px 0;"></div>
<div class="a" style="left:547.6px;top:456px;width:47.2px;height:4px;background:#f6f6f6;border-radius:0.8px 0 0 0;"></div>
<div class="a" style="left:594.7px;top:456px;width:34.1px;height:4px;background:#0c0c0c;border-radius:0 0.8px 0 0;"></div>
<div class="a" style="left:423px;top:459.6px;width:243.5px;height:18.4px;background:#fff;border-left:1px solid #8a8a8a;border-top:1px solid #8a8a8a;box-sizing:border-box;"></div>
<div class="a" style="left:666.3px;top:459.2px;width:183.7px;height:18.8px;background:#1b1b1b;"></div>
<svg style="left:0;top:0;will-change:transform" width="850" height="478" viewBox="0 0 850 478" font-family="Liberation Sans, sans-serif">
<text x="15.3" y="6.36" transform="rotate(0.03 15.3 6.36)" font-size="5.2" fill="#d6d6d6" stroke="#d6d6d6" stroke-width="0.12" textLength="9.00" lengthAdjust="spacingAndGlyphs">Datei</text>
<text x="30.4" y="6.36" transform="rotate(0.03 30.4 6.36)" font-size="5.2" fill="#d6d6d6" stroke="#d6d6d6" stroke-width="0.12" textLength="19.00" lengthAdjust="spacingAndGlyphs">Bearbeiten</text>
<text x="55" y="6.36" transform="rotate(0.03 55 6.36)" font-size="5.2" fill="#d6d6d6" stroke="#d6d6d6" stroke-width="0.12" textLength="12.30" lengthAdjust="spacingAndGlyphs">Objekt</text>
<text x="73.1" y="6.36" transform="rotate(0.03 73.1 6.36)" font-size="5.2" fill="#d6d6d6" stroke="#d6d6d6" stroke-width="0.12" textLength="11.70" lengthAdjust="spacingAndGlyphs">Schrift</text>
<text x="90" y="6.36" transform="rotate(0.03 90 6.36)" font-size="5.2" fill="#d6d6d6" stroke="#d6d6d6" stroke-width="0.12" textLength="14.80" lengthAdjust="spacingAndGlyphs">Auswahl</text>
<text x="110.7" y="6.36" transform="rotate(0.03 110.7 6.36)" font-size="5.2" fill="#d6d6d6" stroke="#d6d6d6" stroke-width="0.12" textLength="9.80" lengthAdjust="spacingAndGlyphs">Effekt</text>
<text x="126" y="6.36" transform="rotate(0.03 126 6.36)" font-size="5.2" fill="#d6d6d6" stroke="#d6d6d6" stroke-width="0.12" textLength="13.60" lengthAdjust="spacingAndGlyphs">Ansicht</text>
<text x="145" y="6.36" transform="rotate(0.03 145 6.36)" font-size="5.2" fill="#d6d6d6" stroke="#d6d6d6" stroke-width="0.12" textLength="12.60" lengthAdjust="spacingAndGlyphs">Fenster</text>
<text x="163.6" y="6.36" transform="rotate(0.03 163.6 6.36)" font-size="5.2" fill="#d6d6d6" stroke="#d6d6d6" stroke-width="0.12" textLength="8.40" lengthAdjust="spacingAndGlyphs">Hilfe</text>
<text x="2.6" y="6.79" transform="rotate(0.03 2.6 6.79)" font-size="7.5" fill="#d8833c" stroke="#d8833c" stroke-width="0.12" textLength="6.80" lengthAdjust="spacingAndGlyphs">Ai</text>
<text x="722" y="6.29" transform="rotate(0.03 722 6.29)" font-size="5.0" fill="#d0d0d0" stroke="#d0d0d0" stroke-width="0.12" textLength="20.60" lengthAdjust="spacingAndGlyphs">Grundlagen</text>
<text x="764" y="6.00" transform="rotate(0.03 764 6.00)" font-size="3.9" fill="#8c8c8c" stroke="#8c8c8c" stroke-width="0.12" textLength="39.00" lengthAdjust="spacingAndGlyphs">Adobe Stock durchsuchen</text>
<text x="4.9" y="16.80" transform="rotate(0.03 4.9 16.80)" font-size="3.9" font-weight="bold" fill="#d6d6d6" stroke="#d6d6d6" stroke-width="0.0" textLength="21.60" lengthAdjust="spacingAndGlyphs">Keine Auswahl</text>
<text x="62.8" y="16.80" transform="rotate(0.03 62.8 16.80)" font-size="3.9" font-weight="bold" fill="#d6d6d6" stroke="#d6d6d6" stroke-width="0.0" textLength="11.00" lengthAdjust="spacingAndGlyphs">Kontur:</text>
<text x="150.5" y="16.79" transform="rotate(0.03 150.5 16.79)" font-size="3.6" font-weight="bold" fill="#222" stroke="#222" stroke-width="0.0" textLength="19.00" lengthAdjust="spacingAndGlyphs">Touch Callig...</text>
<text x="179" y="16.80" transform="rotate(0.03 179 16.80)" font-size="3.9" font-weight="bold" fill="#d6d6d6" stroke="#d6d6d6" stroke-width="0.0" textLength="15.00" lengthAdjust="spacingAndGlyphs">Deckkraft:</text>
<text x="198" y="16.69" transform="rotate(0.03 198 16.69)" font-size="3.6" font-weight="bold" fill="#d6d6d6" stroke="#d6d6d6" stroke-width="0.0" textLength="8.00" lengthAdjust="spacingAndGlyphs">100%</text>
<text x="221" y="16.80" transform="rotate(0.03 221 16.80)" font-size="3.9" font-weight="bold" fill="#a8a8a8" stroke="#a8a8a8" stroke-width="0.0" textLength="6.00" lengthAdjust="spacingAndGlyphs">Stil:</text>
<text x="249.5" y="16.79" transform="rotate(0.03 249.5 16.79)" font-size="3.6" font-weight="bold" fill="#d6d6d6" stroke="#d6d6d6" stroke-width="0.0" textLength="29.50" lengthAdjust="spacingAndGlyphs">Dokument einrichten</text>
<text x="288" y="16.79" transform="rotate(0.03 288 16.79)" font-size="3.6" font-weight="bold" fill="#d6d6d6" stroke="#d6d6d6" stroke-width="0.0" textLength="24.50" lengthAdjust="spacingAndGlyphs">Voreinstellungen</text>
<text x="139.8" y="27.30" transform="rotate(0.03 139.8 27.30)" font-size="3.9" font-weight="bold" fill="#e0e0e0" stroke="#e0e0e0" stroke-width="0.0" textLength="112.00" lengthAdjust="spacingAndGlyphs">50040_Germany_Polygone_LK_SK.ai* bei 110 % (CMYK/Vorschau)</text>
<text x="255" y="27.59" transform="rotate(0.03 255 27.59)" font-size="5" font-weight="bold" fill="#e0e0e0" stroke="#e0e0e0" stroke-width="0.0" textLength="2.80" lengthAdjust="spacingAndGlyphs">×</text>
<text x="17.5" y="31.36" transform="rotate(0.03 17.5 31.36)" font-size="3.8" font-weight="bold" fill="#f0f0f0" stroke="#f0f0f0" stroke-width="0.0" textLength="10.30" lengthAdjust="spacingAndGlyphs">Ebenen</text>
<text x="33.6" y="31.36" transform="rotate(0.03 33.6 31.36)" font-size="3.8" font-weight="bold" fill="#a0a0a0" stroke="#a0a0a0" stroke-width="0.0" textLength="13.00" lengthAdjust="spacingAndGlyphs">Libraries</text>
<text x="47.6" y="41.12" transform="rotate(0.03 47.6 41.12)" font-size="3.7" font-weight="bold" fill="#e8e8e8" stroke="#e8e8e8" stroke-width="0.0" textLength="6.60" lengthAdjust="spacingAndGlyphs">Titel</text>
<text x="47.6" y="48.12" transform="rotate(0.03 47.6 48.12)" font-size="3.7" font-weight="bold" fill="#e8e8e8" stroke="#e8e8e8" stroke-width="0.0" textLength="13.90" lengthAdjust="spacingAndGlyphs">Copyright</text>
<text x="47.6" y="55.12" transform="rotate(0.03 47.6 55.12)" font-size="3.7" font-weight="bold" fill="#e8e8e8" stroke="#e8e8e8" stroke-width="0.0" textLength="27.40" lengthAdjust="spacingAndGlyphs">TXT_Bundesländer</text>
<text x="47.6" y="62.12" transform="rotate(0.03 47.6 62.12)" font-size="3.7" font-weight="bold" fill="#e8e8e8" stroke="#e8e8e8" stroke-width="0.0" textLength="24.90" lengthAdjust="spacingAndGlyphs">TXT_Stadtkreise</text>
<text x="47.6" y="69.12" transform="rotate(0.03 47.6 69.12)" font-size="3.7" font-weight="bold" fill="#e8e8e8" stroke="#e8e8e8" stroke-width="0.0" textLength="23.40" lengthAdjust="spacingAndGlyphs">TXT_Landkreise</text>
<text x="47.6" y="76.12" transform="rotate(0.03 47.6 76.12)" font-size="3.7" font-weight="bold" fill="#e8e8e8" stroke="#e8e8e8" stroke-width="0.0" textLength="39.40" lengthAdjust="spacingAndGlyphs">Bundeslandgrenzen_Linien</text>
<text x="47.6" y="83.12" transform="rotate(0.03 47.6 83.12)" font-size="3.7" font-weight="bold" fill="#e8e8e8" stroke="#e8e8e8" stroke-width="0.0" textLength="40.90" lengthAdjust="spacingAndGlyphs">Bundeslandgrenzen_zerlegt</text>
<text x="47.6" y="90.12" transform="rotate(0.03 47.6 90.12)" font-size="3.7" font-weight="bold" fill="#e8e8e8" stroke="#e8e8e8" stroke-width="0.0" textLength="41.90" lengthAdjust="spacingAndGlyphs">Grenze_Deutschland_zerlegt</text>
<text x="47.6" y="97.12" transform="rotate(0.03 47.6 97.12)" font-size="3.7" font-weight="bold" fill="#e8e8e8" stroke="#e8e8e8" stroke-width="0.0" textLength="48.90" lengthAdjust="spacingAndGlyphs">Landkreise_Stadtkreise_Polygone</text>
<text x="47.6" y="104.12" transform="rotate(0.03 47.6 104.12)" font-size="3.7" font-weight="bold" fill="#e8e8e8" stroke="#e8e8e8" stroke-width="0.0" textLength="31.40" lengthAdjust="spacingAndGlyphs">Bundesländer_zerlegt</text>
<text x="47.6" y="111.12" transform="rotate(0.03 47.6 111.12)" font-size="3.7" font-weight="bold" fill="#e8e8e8" stroke="#e8e8e8" stroke-width="0.0" textLength="26.90" lengthAdjust="spacingAndGlyphs">Basiskarte_zerlegt</text>
<text x="47.6" y="118.12" transform="rotate(0.03 47.6 118.12)" font-size="3.7" font-weight="bold" fill="#e8e8e8" stroke="#e8e8e8" stroke-width="0.0" textLength="17.40" lengthAdjust="spacingAndGlyphs">Hintergrund</text>
<text x="16.2" y="475.59" transform="rotate(0.03 16.2 475.59)" font-size="3.6" font-weight="bold" fill="#d0d0d0" stroke="#d0d0d0" stroke-width="0.0" textLength="10.30" lengthAdjust="spacingAndGlyphs">12 Eb...</text>
<text x="139" y="476.52" transform="rotate(0.03 139 476.52)" font-size="3.4" font-weight="bold" fill="#d0d0d0" stroke="#d0d0d0" stroke-width="0.0" textLength="7.00" lengthAdjust="spacingAndGlyphs">110%</text>
<text x="175" y="476.52" transform="rotate(0.03 175 476.52)" font-size="3.4" font-weight="bold" fill="#d0d0d0" stroke="#d0d0d0" stroke-width="0.0" textLength="1.50" lengthAdjust="spacingAndGlyphs">1</text>
<text x="234" y="476.52" transform="rotate(0.03 234 476.52)" font-size="3.4" font-weight="bold" fill="#d0d0d0" stroke="#d0d0d0" stroke-width="0.0" textLength="12.50" lengthAdjust="spacingAndGlyphs">Auswahl</text>
<text x="427.8" y="474.51" transform="rotate(0.03 427.8 474.51)" font-size="12.6" fill="#111" stroke="#111" stroke-width="0.3" textLength="233.20" lengthAdjust="spacingAndGlyphs">Basisdaten © OpenStreetMap-Mitwirkende</text>
<text x="671.5" y="474.51" transform="rotate(0.03 671.5 474.51)" font-size="12.6" fill="#fff" stroke="#fff" stroke-width="0.3" textLength="172.20" lengthAdjust="spacingAndGlyphs">© Kartografie by grebemaps.de</text>
<text x="549.2" y="458.79" transform="rotate(0.03 549.2 458.79)" font-size="2.5" font-weight="bold" fill="#222" stroke="#222" stroke-width="0.0" textLength="44.20" lengthAdjust="spacingAndGlyphs">Basisdaten © OpenStreetMap-Mitwirkende</text>
<text x="596.2" y="458.79" transform="rotate(0.03 596.2 458.79)" font-size="2.5" font-weight="bold" fill="#f0f0f0" stroke="#f0f0f0" stroke-width="0.0" textLength="31.30" lengthAdjust="spacingAndGlyphs">© Kartografie by grebemaps.de</text>
<text x="344.9" y="57.77" transform="rotate(0.03 344.9 57.77)" font-size="6.9" font-weight="bold" fill="#fff" stroke="#fff" stroke-width="0.0" textLength="34.70" lengthAdjust="spacingAndGlyphs">Deutschland</text>
</svg>
</body></html>
